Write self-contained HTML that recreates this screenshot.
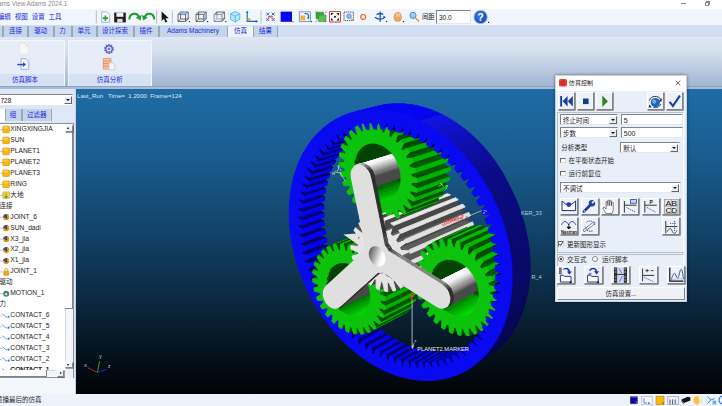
<!DOCTYPE html>
<html lang="zh"><head><meta charset="utf-8"><title>Adams View Adams 2024.1</title>
<style>
*{box-sizing:border-box;margin:0;padding:0}
html,body{width:722px;height:406px;overflow:hidden;background:#fff}
body{position:relative;font-family:"Liberation Sans","Noto Sans CJK SC",sans-serif;font-size:6.5px;color:#222;line-height:1}
.abs{position:absolute}
.t{position:absolute;white-space:nowrap;line-height:1}
#title{left:0;top:0;width:722px;height:9px;background:#fff}
#menurow{left:0;top:9px;width:722px;height:16px;background:#f1f5fc}
#tabrow{left:0;top:25px;width:722px;height:12px;background:#d2dff3}
#ribbon{left:0;top:37px;width:722px;height:52px;background:linear-gradient(#dfe7f3 0%,#d3deee 30%,#b4c5dd 70%,#9fb3cf 100%)}
.tab{position:absolute;top:26px;height:10.5px;background:#c4d4eb;border-left:1px solid #9aa7b8;border-right:1px solid #9aa7b8;color:#2323d8;font-size:6.5px;text-align:center;line-height:10.5px;white-space:nowrap}
.tab.act{background:#eef3fb;border-color:#eef3fb;color:#2323d8}
.grp{position:absolute;top:39.5px;height:47px;background:#e6edf8;border:1px solid #f3f6fb;border-radius:1px}
.grp .lab{position:absolute;left:0;right:0;bottom:0;height:12px;background:#d5e2f4;color:#2323d8;font-size:6.5px;text-align:center;line-height:12px}
#view{left:76px;top:89px;width:646px;height:304.5px;background:linear-gradient(#1f6ca5 0%,#1a5e92 20%,#13456c 45%,#0c2a42 68%,#04101a 88%,#010306 100%)}
#left{left:0;top:89px;width:76px;height:304.5px;background:#dde6f2}
#status{left:0;top:393.5px;width:722px;height:12.5px;background:#eef3fb}
.row{position:absolute;left:0;height:11px;font-size:6.7px;color:#222;white-space:nowrap}
.row span{position:absolute;top:2px;left:10.3px;line-height:7px}
.dlg{position:absolute;left:554.5px;top:75px;width:132px;height:227px;background:#e9eff8;border:1px solid #c9d0da;box-shadow:0 0 3px rgba(0,0,0,.45)}
.btn{position:absolute;background:#eef1f6;border:1px solid;border-color:#fff #7d8590 #7d8590 #fff;box-shadow:0.5px 0.5px 0 #444}
.inp{position:absolute;background:#fff;border:1px solid;border-color:#7d8590 #e4e8ee #e4e8ee #7d8590;font-size:6.5px;color:#222;line-height:9px;padding-left:2px;padding-top:0.8px;white-space:nowrap;overflow:hidden}
.dd{position:absolute;right:0.5px;top:0.5px;bottom:0.5px;width:7.4px;box-sizing:content-box;width:6px;background:#e9edf3;border:0.5px solid;border-color:#fff #666 #666 #fff}
.dd:after{content:"";position:absolute;left:1px;top:50%;margin-top:-1px;width:0;height:0;border-left:2.2px solid transparent;border-right:2.2px solid transparent;border-top:2.6px solid #111}
.cb{position:absolute;width:5.5px;height:5.5px;background:#fff;border:0.7px solid;border-color:#666 #ddd #ddd #666}
.rb{position:absolute;width:6px;height:6px;background:#fff;border:0.7px solid #888;border-radius:50%}
.dl{position:absolute;font-size:6.5px;color:#222;white-space:nowrap;line-height:7px}
</style></head><body>
<div class="abs" id="title"></div>
<div class="t" style="left:-2px;top:0.5px;font-size:6.3px;color:#8a8a8a">ams View Adams 2024.1</div>
<div class="abs" style="left:681px;top:3px;width:4.5px;height:0.8px;background:#8c8c8c"></div>
<div class="abs" style="left:704.5px;top:2px;width:4px;height:4px;border:0.7px solid #8c8c8c"></div>
<div class="abs" style="left:705.5px;top:1px;width:4px;height:4px;border:0.7px solid #8c8c8c;border-left:0;border-bottom:0"></div>
<div class="abs" id="menurow"></div>
<div class="t" style="left:-2.2px;top:14px;font-size:6.5px;color:#2323d8">编辑</div>
<div class="t" style="left:14.8px;top:14px;font-size:6.5px;color:#2323d8">视图</div>
<div class="t" style="left:31.8px;top:14px;font-size:6.5px;color:#2323d8">设置</div>
<div class="t" style="left:48.4px;top:14px;font-size:6.5px;color:#2323d8">工具</div>
<svg class="abs" style="left:90px;top:9px" width="410" height="16" viewBox="90 9 410 16">
<g fill="none" stroke-linejoin="round">
<path d="M96.3 10.5v13M156.6 10.5v13M172.4 10.5v13M261 10.5v13" stroke="#aab2be" stroke-width="0.8"/>
<!-- new doc -->
<path d="M101.6 11.8h5.4l2.6 2.6v8h-8z" fill="#f4f8ff" stroke="#8fa0c8" stroke-width="0.7"/>
<path d="M105.4 15.6v5.2M102.8 18.2h5.2" stroke="#27a32a" stroke-width="1.7"/>
<!-- save -->
<path d="M114.2 12.6h11.6v9.8h-11.6z" fill="#1c1c1c"/><rect x="116.4" y="12.6" width="7" height="4.2" fill="#f3f3f3"/><rect x="117.2" y="18.8" width="5.4" height="3.6" fill="#dcdcdc"/>
<!-- redo / undo -->
<path d="M129.4 19.6c0-7 8-7.6 9.6-2.2" stroke="#1e9a2e" stroke-width="2"/><path d="M141.6 15l-1.2 5.4l-4.6-2.8z" fill="#1e9a2e"/>
<path d="M154.2 19.6c0-7-8-7.6-9.6-2.2" stroke="#1e9a2e" stroke-width="2"/><path d="M142 15l1.2 5.4l4.6-2.8z" fill="#1e9a2e"/>
<!-- cursor -->
<path d="M161.6 11.4v9.6l2.3-2.2l1.7 3.8l1.7-0.8l-1.7-3.6h3.2z" fill="#111"/>
<!-- box1 -->
<g stroke="#333" stroke-width="0.7"><path d="M178 14.4h7.6v7h-7.6zM180.6 12h7.6v7h-7.6zM178 14.4l2.6-2.4M185.6 14.4l2.6-2.4M185.6 21.4l2.6-2.4M178 21.4l2.6-2.4"/></g>
<path d="M180.6 12h7.6l-2.6 2.4h-7.6z" fill="#7fb2ea" opacity=".7"/><circle cx="189.4" cy="21.6" r="0.7" fill="#111"/>
<!-- box2 -->
<g stroke="#333" stroke-width="0.7"><path d="M196 14.4h7.6v7h-7.6zM198.6 12h7.6v7h-7.6zM196 14.4l2.6-2.4M203.6 14.4l2.6-2.4M203.6 21.4l2.6-2.4M196 21.4l2.6-2.4"/></g>
<path d="M203.6 14.4l2.6-2.4v7l-2.6 2.4z" fill="#7fb2ea" opacity=".8"/><circle cx="207.6" cy="21.6" r="0.7" fill="#111"/>
<!-- box3 -->
<g stroke="#333" stroke-width="0.7"><path d="M214.2 14.4h7.6v7h-7.6zM216.8 12h7.6v7h-7.6zM214.2 14.4l2.6-2.4M221.8 14.4l2.6-2.4M221.8 21.4l2.6-2.4M214.2 21.4l2.6-2.4"/></g>
<path d="M214.2 14.4h7.6v7h-7.6z" fill="#d8e6f8" opacity=".6"/><circle cx="225.8" cy="21.6" r="0.7" fill="#111"/>
<!-- cyan cube -->
<path d="M235.2 11.6l4.6 2.2v5.6l-4.6 2.6l-4.6-2.6v-5.6z" fill="#bfe9fb" stroke="#35b5ea" stroke-width="0.8"/><path d="M230.6 13.8l4.6 2.4l4.6-2.4M235.2 16.2v5.8" stroke="#35b5ea" stroke-width="0.8"/>
<!-- axis -->
<path d="M247.2 11.4v10h10" stroke="#1c63c8" stroke-width="1.1"/><path d="M245.9 13l1.3-2.2l1.3 2.2zM255.8 20.1l2.2 1.3l-2.2 1.3z" fill="#1c63c8"/><circle cx="249" cy="19.6" r="1.5" fill="#f0a020"/>
<!-- grid -->
<g stroke="#2a68c8" stroke-width="1"><path d="M266.2 12.6l3 3M269.2 12.6l-3 3M271.6 12.6l3 3M274.6 12.6l-3 3M266.2 18l3 3M269.2 18l-3 3M271.6 18l3 3M274.6 18l-3 3"/></g><path d="M268 16.8h5" stroke="#d03020" stroke-width="1.1"/>
<!-- blue square -->
<rect x="280.6" y="11.6" width="11.4" height="10.2" fill="#0808f0"/><circle cx="293" cy="21.8" r="0.6" fill="#111"/>
<!-- window icon -->
<rect x="299.4" y="11.8" width="11" height="9.8" fill="#eaf1fb" stroke="#5b6f96" stroke-width="0.7"/><rect x="300.6" y="15.6" width="4.6" height="4.6" fill="#f0b030"/><path d="M304.6 13.6c3-0.6 4.6 1.4 3.8 4.2" stroke="#1c63c8" stroke-width="1.1"/><path d="M306.8 17.4l1.6 1.8l1.2-2.2z" fill="#1c63c8"/><circle cx="311.6" cy="21.6" r="0.6" fill="#111"/>
<!-- green -->
<rect x="316" y="12.2" width="7.4" height="6.6" fill="#3aa838" stroke="#2a7a2a" stroke-width="0.5"/><rect x="318.6" y="15" width="7.4" height="6.6" fill="#58c050" stroke="#2a7a2a" stroke-width="0.5"/><path d="M315.4 11.6l1.8 1.8M326.6 11.6l-1.8 1.8M315.4 22.2l1.8-1.8M326.6 22.2l-1.8-1.8" stroke="#3a7a3a" stroke-width="0.7"/>
<!-- fit -->
<rect x="329.6" y="11.6" width="10.8" height="10.4" fill="#fff" stroke="#c83a2c" stroke-width="1"/>
<path d="M331 13l2.6 0l-2.6 2.6zM339 13l0 2.6l-2.6-2.6zM331 20.6l0-2.6l2.6 2.6zM339 20.6l-2.6 0l2.6-2.6z" fill="#111"/><circle cx="335" cy="16.8" r="1" fill="#111"/>
<!-- zoom box -->
<rect x="344" y="12" width="9.4" height="8.6" fill="#eef4fb" stroke="#222" stroke-width="0.8" stroke-dasharray="1.2 0.9"/><circle cx="349" cy="16.2" r="2.3" fill="#8cc2f0" stroke="#3a78c0" stroke-width="0.6"/><path d="M350.8 18l2.6 2.8" stroke="#d89a30" stroke-width="1.1"/>
<!-- orange o -->
<circle cx="363.2" cy="17" r="2.5" stroke="#ea6a2a" stroke-width="1.1" fill="#fde6d6"/>
<!-- rot axis -->
<g stroke="#1c55c0" stroke-width="1.3"><path d="M380.2 11.6v10.2M375 17.2c2.4 2.6 7.4 2.6 9.6 0.2M376.6 14.8c1.6-1.2 4.4-1.6 6.6-0.4"/></g><path d="M383.6 15.4l2.4 2.2l-2.8 1z" fill="#1c55c0"/><circle cx="386.6" cy="21.6" r="0.6" fill="#111"/>
<!-- hand -->
<path d="M395.6 21.2c-2-1.6-2.2-5-0.6-7.4c1.4-2 4.6-2 5.6 0c1.2 2.4 1 5.8-0.8 7.4z" fill="#f0a560" stroke="#c8782a" stroke-width="0.5"/><path d="M396.6 13v4M398.2 12.4v4.4M399.8 13v4" stroke="#fbe0c0" stroke-width="0.7"/><circle cx="403.4" cy="21.6" r="0.6" fill="#111"/>
<!-- magnifier -->
<circle cx="413" cy="15.4" r="3.1" fill="#9cccf4" stroke="#3a78c0" stroke-width="0.8"/><path d="M415.4 17.8l3.8 3.8" stroke="#d89a30" stroke-width="1.4"/>
<!-- help -->
<circle cx="480.6" cy="17" r="6.6" fill="#1c55c0" stroke="#8cb0e8" stroke-width="0.9"/><circle cx="479.8" cy="15.6" r="4.6" fill="#3a78dc" opacity=".7"/>
</g>
<text x="477.6" y="20.8" font-size="10" font-weight="bold" fill="#fff" font-family="Liberation Sans,sans-serif">?</text>
<circle cx="488.6" cy="22.4" r="0.6" fill="#111"/>
</svg>

<div class="t" style="left:422px;top:13.5px;font-size:6.3px;color:#222">间距</div>
<div class="inp" style="left:436px;top:10px;width:34.5px;height:14px;line-height:12px;font-size:6.5px">30.0</div>
<div class="abs" id="tabrow"></div>
<div class="tab" style="left:3px;width:25px">连接</div>
<div class="tab" style="left:28px;width:25.5px">驱动</div>
<div class="tab" style="left:53.5px;width:18px">力</div>
<div class="tab" style="left:71.5px;width:25px">单元</div>
<div class="tab" style="left:96.5px;width:37px">设计探索</div>
<div class="tab" style="left:133.5px;width:25px">插件</div>
<div class="tab" style="left:158.5px;width:69px">Adams Machinery</div>
<div class="tab act" style="left:228px;width:25px">仿真</div>
<div class="tab" style="left:253px;width:25px">结果</div>
<div class="abs" style="left:0;top:26px;width:2.5px;height:10.5px;background:#c4d4eb;border-right:1px solid #9aa7b8"></div>
<div class="abs" id="ribbon"></div>
<div class="grp" style="left:-2px;width:66.5px"><div class="lab" style="text-align:left;padding-left:13px">仿真脚本</div></div>
<div class="grp" style="left:68px;width:83.5px"><div class="lab">仿真分析</div></div>
<svg class="abs" style="left:0;top:40px" width="160" height="34" viewBox="0 40 160 34">
<g fill="none" stroke-linejoin="round">
<!-- doc (greyed) -->
<path d="M19.4 43.4h6l3.2 3v8h-9.2z" fill="#f6f6f4" stroke="#dcdcd8" stroke-width="0.6"/><path d="M25.4 43.4v3h3.2z" fill="#e2e2de"/>
<!-- doc with arrow -->
<path d="M21 58.6h5l2.8 2.8v8h-7.8z" fill="#f0f4fc" stroke="#8a9ccc" stroke-width="0.7"/>
<path d="M17.4 64.6h6.4" stroke="#2a4cb8" stroke-width="1.5"/><path d="M23 62.2l3 2.4l-3 2.4z" fill="#2a4cb8"/>
<!-- gear -->
<circle cx="109" cy="49" r="3.9" stroke="#5a5ad0" stroke-width="2" stroke-dasharray="1.5 0.95"/><circle cx="109" cy="49" r="3.2" stroke="#5a5ad0" stroke-width="1.2" fill="#e4e6fa"/><circle cx="109" cy="49" r="1.3" fill="#7a7ae0"/>
<!-- table + doc -->
<rect x="103.4" y="58.4" width="7.6" height="10.6" fill="#f6c8a8" stroke="#e8824a" stroke-width="0.7"/><path d="M103.4 61h7.6M103.4 63.6h7.6M103.4 66.2h7.6" stroke="#e8824a" stroke-width="0.9"/>
<path d="M109 62.6h3.6l2.2 2.2v5h-5.8z" fill="#f4f4f4" stroke="#b8b8b8" stroke-width="0.6"/>
</g></svg>

<div class="abs" style="left:0;top:86px;width:722px;height:1px;background:#8ea3bf"></div>
<div class="abs" style="left:0;top:87px;width:722px;height:2px;background:#a9bbd5"></div>
<div class="abs" id="view"></div>
<svg class="abs" style="left:76px;top:89px" width="646" height="304.5" viewBox="76 89 646 304.5">
<defs><linearGradient id="hubg" x1="0" y1="0" x2="1" y2="0.4"><stop offset="0" stop-color="#484848"/><stop offset="0.45" stop-color="#a8a8a8"/><stop offset="0.8" stop-color="#f4f4f4"/><stop offset="1" stop-color="#ffffff"/></linearGradient></defs>
<g stroke-linejoin="round" style="filter:blur(0.45px)">
<path d="M341.4 276.9L336.8 277.9L347.8 273.1L352.5 272.1Z" fill="#005e00" stroke="#005e00" stroke-width="0.9"/>
<path d="M350.3 306.2L354.1 303.3L365.0 298.2L361.2 301.1Z" fill="#004d00" stroke="#004d00" stroke-width="0.9"/>
<path d="M340.8 269.2L335.7 269.0L346.8 264.3L351.8 264.5Z" fill="#005c00" stroke="#005c00" stroke-width="0.9"/>
<path d="M356.7 312.7L359.7 308.7L370.5 303.5L367.5 307.4Z" fill="#004d00" stroke="#004d00" stroke-width="0.9"/>
<path d="M341.4 262.0L336.2 260.4L347.4 255.8L352.5 257.3Z" fill="#005a00" stroke="#005a00" stroke-width="0.9"/>
<path d="M325.0 282.1L325.6 283.3L335.6 279.0L335.0 277.7ZM321.2 273.7L321.8 275.0L331.9 270.7L331.4 269.4Z" fill="#00007d" stroke="#00007d" stroke-width="0.9"/>
<path d="M363.7 317.7L365.7 312.8L376.5 307.5L374.4 312.4Z" fill="#004d00" stroke="#004d00" stroke-width="0.9"/>
<path d="M329.1 290.3L329.8 291.5L339.8 287.0L339.2 285.8ZM318.0 265.1L318.4 266.4L328.6 262.2L328.2 260.9ZM333.7 298.2L334.4 299.4L344.4 294.8L343.7 293.7ZM315.2 256.4L315.6 257.7L325.8 253.6L325.4 252.3Z" fill="#00007d" stroke="#00007d" stroke-width="0.9"/>
<path d="M328.2 278.9L325.0 282.1L335.0 277.7L338.3 274.5ZM321.8 275.0L326.4 274.9L336.5 270.6L331.9 270.7ZM325.6 283.3L330.1 282.8L340.2 278.4L335.6 279.0ZM324.8 270.8L321.2 273.7L331.4 269.4L334.9 266.6Z" fill="#000069" stroke="#000069" stroke-width="0.9"/>
<path d="M352.7 285.4L354.5 289.3L365.4 284.3L363.6 280.5Z" fill="#004400" stroke="#004400" stroke-width="0.9"/>
<path d="M338.7 305.8L339.4 307.0L349.4 302.3L348.6 301.2Z" fill="#00007d" stroke="#00007d" stroke-width="0.9"/>
<path d="M332.1 286.7L329.1 290.3L339.2 285.8L342.1 282.3ZM318.4 266.4L323.2 266.8L333.3 262.6L328.6 262.2Z" fill="#000069" stroke="#000069" stroke-width="0.9"/>
<path d="M351.3 281.4L352.7 285.4L363.6 280.5L362.2 276.6ZM354.5 289.3L356.7 292.9L367.6 287.8L365.4 284.3Z" fill="#004400" stroke="#004400" stroke-width="0.9"/>
<path d="M329.8 291.5L334.2 290.5L344.2 286.0L339.8 287.0Z" fill="#000069" stroke="#000069" stroke-width="0.9"/>
<path d="M312.9 247.6L313.2 248.9L323.5 244.9L323.2 243.6Z" fill="#00007d" stroke="#00007d" stroke-width="0.9"/>
<path d="M321.7 262.7L318.0 265.1L328.2 260.9L331.9 258.5Z" fill="#000069" stroke="#000069" stroke-width="0.9"/>
<path d="M330.1 281.8L325.4 282.8L336.8 277.9L341.4 276.9Z" fill="#005e00" stroke="#005e00" stroke-width="0.9"/>
<path d="M339.2 311.5L343.0 308.6L354.1 303.3L350.3 306.2Z" fill="#004d00" stroke="#004d00" stroke-width="0.9"/>
<path d="M336.4 294.3L333.7 298.2L343.7 293.7L346.4 289.8Z" fill="#000069" stroke="#000069" stroke-width="0.9"/>
<path d="M350.4 277.4L351.3 281.4L362.2 276.6L361.3 272.6Z" fill="#004400" stroke="#004400" stroke-width="0.9"/>
<path d="M356.7 292.9L359.3 296.1L370.1 291.1L367.6 287.8Z" fill="#005800" stroke="#005800" stroke-width="0.9"/>
<path d="M315.6 257.7L320.4 258.5L330.6 254.4L325.8 253.6ZM334.4 299.4L338.7 298.0L348.6 293.4L344.4 294.8ZM319.2 254.4L315.2 256.4L325.4 252.3L329.4 250.3Z" fill="#000069" stroke="#000069" stroke-width="0.9"/>
<path d="M344.0 313.2L344.8 314.2L354.7 309.5L353.9 308.4Z" fill="#00007d" stroke="#00007d" stroke-width="0.9"/>
<path d="M350.0 273.4L350.4 277.4L361.3 272.6L361.0 268.6Z" fill="#004400" stroke="#004400" stroke-width="0.9"/>
<path d="M341.0 301.6L338.7 305.8L348.6 301.2L351.0 297.0Z" fill="#000069" stroke="#000069" stroke-width="0.9"/>
<path d="M326.4 274.9L328.2 278.9L338.3 274.5L336.5 270.6Z" fill="#0404ee" stroke="#0404ee" stroke-width="0.9"/>
<path d="M311.1 238.8L311.3 240.1L321.6 236.2L321.4 234.9Z" fill="#00007d" stroke="#00007d" stroke-width="0.9"/>
<path d="M359.3 296.1L362.2 299.0L373.0 293.9L370.1 291.1Z" fill="#007100" stroke="#007100" stroke-width="0.9"/>
<path d="M343.3 255.4L338.2 252.6L349.4 248.1L354.4 250.9Z" fill="#005700" stroke="#005700" stroke-width="0.9"/>
<path d="M330.1 282.8L332.1 286.7L342.1 282.3L340.2 278.4Z" fill="#0404ee" stroke="#0404ee" stroke-width="0.9"/>
<path d="M313.2 248.9L318.1 250.2L328.3 246.2L323.5 244.9Z" fill="#000069" stroke="#000069" stroke-width="0.9"/>
<path d="M323.2 266.8L324.8 270.8L334.9 266.6L333.3 262.6Z" fill="#0404ee" stroke="#0404ee" stroke-width="0.9"/>
<path d="M371.0 321.1L372.1 315.4L382.7 310.1L381.7 315.7Z" fill="#004d00" stroke="#004d00" stroke-width="0.9"/>
<path d="M334.2 290.5L336.4 294.3L346.4 289.8L344.2 286.0ZM320.4 258.5L321.7 262.7L331.9 258.5L330.6 254.4Z" fill="#0404ee" stroke="#0404ee" stroke-width="0.9"/>
<path d="M329.4 274.1L324.4 273.8L335.7 269.0L340.8 269.2Z" fill="#005c00" stroke="#005c00" stroke-width="0.9"/>
<path d="M345.6 318.1L348.6 314.0L359.7 308.7L356.7 312.7Z" fill="#004d00" stroke="#004d00" stroke-width="0.9"/>
<path d="M350.1 269.5L350.0 273.4L361.0 268.6L361.1 264.8Z" fill="#004400" stroke="#004400" stroke-width="0.9"/>
<path d="M346.1 308.6L344.0 313.2L353.9 308.4L355.9 303.9Z" fill="#000069" stroke="#000069" stroke-width="0.9"/>
<path d="M362.2 299.0L365.3 301.4L376.0 296.2L373.0 293.9Z" fill="#008a00" stroke="#008a00" stroke-width="0.9"/>
<path d="M338.7 298.0L341.0 301.6L351.0 297.0L348.6 293.4Z" fill="#0404ee" stroke="#0404ee" stroke-width="0.9"/>
<path d="M349.7 320.1L350.6 321.1L360.4 316.3L359.5 315.3Z" fill="#00007d" stroke="#00007d" stroke-width="0.9"/>
<path d="M311.3 240.1L316.2 241.8L326.5 237.9L321.6 236.2Z" fill="#000069" stroke="#000069" stroke-width="0.9"/>
<path d="M318.1 250.2L319.2 254.4L329.4 250.3L328.3 246.2Z" fill="#0404ee" stroke="#0404ee" stroke-width="0.9"/>
<path d="M309.8 229.9L310.0 231.3L320.3 227.5L320.2 226.1Z" fill="#00007d" stroke="#00007d" stroke-width="0.9"/>
<path d="M343.5 305.1L346.1 308.6L355.9 303.9L353.4 300.5Z" fill="#0404ee" stroke="#0404ee" stroke-width="0.9"/>
<path d="M350.7 265.9L350.1 269.5L361.1 264.8L361.7 261.2Z" fill="#004400" stroke="#004400" stroke-width="0.9"/>
<path d="M316.2 241.8L317.1 246.0L327.3 242.0L326.5 237.9Z" fill="#0404ee" stroke="#0404ee" stroke-width="0.9"/>
<path d="M365.3 301.4L368.5 303.2L379.3 298.0L376.0 296.2Z" fill="#00a100" stroke="#00a100" stroke-width="0.9"/>
<path d="M351.4 315.3L349.7 320.1L359.5 315.3L361.3 310.5ZM310.0 231.3L314.8 233.4L325.1 229.5L320.3 227.5Z" fill="#000069" stroke="#000069" stroke-width="0.9"/>
<path d="M314.6 286.6L315.2 287.8L325.6 283.3L325.0 282.1ZM310.9 278.1L311.4 279.4L321.8 275.0L321.2 273.7ZM355.7 326.6L356.6 327.6L366.4 322.7L365.5 321.7ZM318.8 294.8L319.5 296.1L329.8 291.5L329.1 290.3ZM307.5 269.4L308.0 270.7L318.4 266.4L318.0 265.1ZM309.1 221.1L309.1 222.4L319.5 218.7L319.4 217.4Z" fill="#00007d" stroke="#00007d" stroke-width="0.9"/>
<path d="M348.7 312.0L351.4 315.3L361.3 310.5L358.6 307.2Z" fill="#0404ee" stroke="#0404ee" stroke-width="0.9"/>
<path d="M330.0 266.7L324.8 265.1L336.2 260.4L341.4 262.0Z" fill="#005a00" stroke="#005a00" stroke-width="0.9"/>
<path d="M323.5 302.9L324.2 304.1L334.4 299.4L333.7 298.2Z" fill="#00007d" stroke="#00007d" stroke-width="0.9"/>
<path d="M314.8 233.4L315.5 237.6L325.7 233.7L325.1 229.5Z" fill="#0404ee" stroke="#0404ee" stroke-width="0.9"/>
<path d="M304.7 260.6L305.1 261.9L315.6 257.7L315.2 256.4Z" fill="#00007d" stroke="#00007d" stroke-width="0.9"/>
<path d="M352.7 323.2L354.7 318.2L365.7 312.8L363.7 317.7Z" fill="#004d00" stroke="#004d00" stroke-width="0.9"/>
<path d="M346.5 249.9L341.7 245.9L352.8 241.4L357.6 245.4Z" fill="#005400" stroke="#005400" stroke-width="0.9"/>
<path d="M351.8 262.5L350.7 265.9L361.7 261.2L362.8 257.9Z" fill="#004400" stroke="#004400" stroke-width="0.9"/>
<path d="M368.5 303.2L371.8 304.5L382.6 299.3L379.3 298.0Z" fill="#00b500" stroke="#00b500" stroke-width="0.9"/>
<path d="M357.1 321.6L355.7 326.6L365.5 321.7L366.9 316.7Z" fill="#000069" stroke="#000069" stroke-width="0.9"/>
<path d="M378.4 322.7L378.4 316.5L389.0 311.2L389.0 317.3Z" fill="#004d00" stroke="#004d00" stroke-width="0.9"/>
<path d="M311.4 279.4L316.1 279.3L317.9 283.3L314.6 286.6L315.2 287.8L308.0 291.4L305.8 286.8L303.8 282.1Z" fill="#0a0af0" stroke="#0a0af0" stroke-width="0.9"/>
<path d="M317.9 283.3L314.6 286.6L325.0 282.1L328.2 278.9ZM311.4 279.4L316.1 279.3L326.4 274.9L321.8 275.0ZM315.2 287.8L319.8 287.3L330.1 282.8L325.6 283.3Z" fill="#000069" stroke="#000069" stroke-width="0.9"/>
<path d="M308.0 270.7L312.8 271.1L314.4 275.2L310.9 278.1L311.4 279.4L303.8 282.1L301.9 277.4L300.1 272.7ZM315.2 287.8L319.8 287.3L321.8 291.2L318.8 294.8L319.5 296.1L312.7 300.4L310.3 295.9L308.0 291.4Z" fill="#0a0af0" stroke="#0a0af0" stroke-width="0.9"/>
<path d="M314.4 275.2L310.9 278.1L321.2 273.7L324.8 270.8ZM309.1 222.4L314.0 225.0L324.3 221.2L319.5 218.7Z" fill="#000069" stroke="#000069" stroke-width="0.9"/>
<path d="M328.5 310.6L329.3 311.7L339.4 307.0L338.7 305.8Z" fill="#00007d" stroke="#00007d" stroke-width="0.9"/>
<path d="M321.8 291.2L318.8 294.8L329.1 290.3L332.1 286.7ZM308.0 270.7L312.8 271.1L323.2 266.8L318.4 266.4ZM319.5 296.1L323.9 295.1L334.2 290.5L329.8 291.5Z" fill="#000069" stroke="#000069" stroke-width="0.9"/>
<path d="M302.4 251.7L302.7 253.0L313.2 248.9L312.9 247.6Z" fill="#00007d" stroke="#00007d" stroke-width="0.9"/>
<path d="M311.3 266.9L307.5 269.4L318.0 265.1L321.7 262.7Z" fill="#000069" stroke="#000069" stroke-width="0.9"/>
<path d="M305.1 261.9L310.0 262.7L311.3 266.9L307.5 269.4L308.0 270.7L300.1 272.7L298.5 267.9L296.9 263.1ZM319.5 296.1L323.9 295.1L326.2 298.9L323.5 302.9L324.2 304.1L317.8 309.1L315.2 304.8L312.7 300.4Z" fill="#0a0af0" stroke="#0a0af0" stroke-width="0.9"/>
<path d="M354.2 318.5L357.1 321.6L366.9 316.7L364.0 313.6Z" fill="#0404ee" stroke="#0404ee" stroke-width="0.9"/>
<path d="M362.0 332.7L363.0 333.6L372.7 328.6L371.7 327.8Z" fill="#00007d" stroke="#00007d" stroke-width="0.9"/>
<path d="M326.2 298.9L323.5 302.9L333.7 298.2L336.4 294.3ZM305.1 261.9L310.0 262.7L320.4 258.5L315.6 257.7Z" fill="#000069" stroke="#000069" stroke-width="0.9"/>
<path d="M314.0 225.0L314.3 229.2L324.7 225.4L324.3 221.2Z" fill="#0404ee" stroke="#0404ee" stroke-width="0.9"/>
<path d="M324.2 304.1L328.5 302.7L338.7 298.0L334.4 299.4Z" fill="#000069" stroke="#000069" stroke-width="0.9"/>
<path d="M341.4 290.5L343.3 294.4L354.5 289.3L352.7 285.4Z" fill="#004400" stroke="#004400" stroke-width="0.9"/>
<path d="M308.8 212.4L308.8 213.7L319.3 210.1L319.3 208.8Z" fill="#00007d" stroke="#00007d" stroke-width="0.9"/>
<path d="M308.7 258.5L304.7 260.6L315.2 256.4L319.2 254.4Z" fill="#000069" stroke="#000069" stroke-width="0.9"/>
<path d="M340.0 286.5L341.4 290.5L352.7 285.4L351.3 281.4ZM343.3 294.4L345.6 298.0L356.7 292.9L354.5 289.3Z" fill="#004400" stroke="#004400" stroke-width="0.9"/>
<path d="M318.5 286.9L313.8 287.9L325.4 282.8L330.1 281.8Z" fill="#005e00" stroke="#005e00" stroke-width="0.9"/>
<path d="M302.7 253.0L307.6 254.3L308.7 258.5L304.7 260.6L305.1 261.9L296.9 263.1L295.5 258.3L294.3 253.4ZM324.2 304.1L328.5 302.7L330.9 306.3L328.5 310.6L329.3 311.7L323.3 317.5L320.5 313.3L317.8 309.1Z" fill="#0a0af0" stroke="#0a0af0" stroke-width="0.9"/>
<path d="M353.4 259.6L351.8 262.5L362.8 257.9L364.4 255.0Z" fill="#004400" stroke="#004400" stroke-width="0.9"/>
<path d="M327.7 317.0L331.5 314.0L343.0 308.6L339.2 311.5Z" fill="#004d00" stroke="#004d00" stroke-width="0.9"/>
<path d="M333.9 318.0L334.7 319.1L344.8 314.2L344.0 313.2Z" fill="#00007d" stroke="#00007d" stroke-width="0.9"/>
<path d="M371.8 304.5L375.1 305.1L385.8 299.9L382.6 299.3Z" fill="#00c700" stroke="#00c700" stroke-width="0.9"/>
<path d="M330.9 306.3L328.5 310.6L338.7 305.8L341.0 301.6Z" fill="#000069" stroke="#000069" stroke-width="0.9"/>
<path d="M316.1 279.3L317.9 283.3L328.2 278.9L326.4 274.9Z" fill="#0404ee" stroke="#0404ee" stroke-width="0.9"/>
<path d="M300.5 242.7L300.8 244.1L311.3 240.1L311.1 238.8Z" fill="#00007d" stroke="#00007d" stroke-width="0.9"/>
<path d="M339.1 282.4L340.0 286.5L351.3 281.4L350.4 277.4Z" fill="#004400" stroke="#004400" stroke-width="0.9"/>
<path d="M319.8 287.3L321.8 291.2L332.1 286.7L330.1 282.8Z" fill="#0404ee" stroke="#0404ee" stroke-width="0.9"/>
<path d="M345.6 298.0L348.2 301.3L359.3 296.1L356.7 292.9Z" fill="#005800" stroke="#005800" stroke-width="0.9"/>
<path d="M302.7 253.0L307.6 254.3L318.1 250.2L313.2 248.9Z" fill="#000069" stroke="#000069" stroke-width="0.9"/>
<path d="M312.8 271.1L314.4 275.2L324.8 270.8L323.2 266.8Z" fill="#0404ee" stroke="#0404ee" stroke-width="0.9"/>
<path d="M363.0 327.4L362.0 332.7L371.7 327.8L372.8 322.5Z" fill="#000069" stroke="#000069" stroke-width="0.9"/>
<path d="M323.9 295.1L326.2 298.9L336.4 294.3L334.2 290.5Z" fill="#0404ee" stroke="#0404ee" stroke-width="0.9"/>
<path d="M308.8 213.7L313.6 216.7L324.0 213.0L319.3 210.1Z" fill="#000069" stroke="#000069" stroke-width="0.9"/>
<path d="M310.0 262.7L311.3 266.9L321.7 262.7L320.4 258.5Z" fill="#0404ee" stroke="#0404ee" stroke-width="0.9"/>
<path d="M300.8 244.1L305.7 245.8L306.6 250.1L302.4 251.7L302.7 253.0L294.3 253.4L293.2 248.5L292.2 243.7ZM329.3 311.7L333.4 309.9L336.0 313.4L333.9 318.0L334.7 319.1L329.3 325.5L326.3 321.5L323.3 317.5Z" fill="#0a0af0" stroke="#0a0af0" stroke-width="0.9"/>
<path d="M338.7 278.3L339.1 282.4L350.4 277.4L350.0 273.4Z" fill="#004400" stroke="#004400" stroke-width="0.9"/>
<path d="M360.0 324.5L363.0 327.4L372.8 322.5L369.8 319.6Z" fill="#0404ee" stroke="#0404ee" stroke-width="0.9"/>
<path d="M348.2 301.3L351.1 304.2L362.2 299.0L359.3 296.1Z" fill="#007100" stroke="#007100" stroke-width="0.9"/>
<path d="M394.2 298.4L396.3 296.9L398.2 295.0L399.7 292.8L401.0 290.2L401.9 287.4L402.4 284.4L402.6 281.1L402.4 277.8L401.9 274.4L401.0 271.0L399.7 267.6L398.2 264.4L396.3 261.3L394.2 258.5L391.8 256.0L389.3 253.8L386.6 251.9L383.9 250.5L381.1 249.4L378.3 248.8L375.6 248.7L373.0 249.0L370.5 249.7L368.2 250.9L366.2 252.4L364.4 254.4L362.9 256.6L361.7 259.2L360.9 262.0L360.4 265.1L360.3 268.2L360.5 271.5L361.1 274.9L362.0 278.2L363.2 281.4L364.7 284.6L366.5 287.6L368.6 290.3L370.9 292.8L373.3 295.0L375.9 296.9L378.6 298.3L381.4 299.4L384.1 300.1L386.8 300.3L389.4 300.1L391.9 299.4Z" fill="#004a00" stroke="#004a00" stroke-width="0.9"/>
<path d="M332.0 260.1L326.8 257.2L338.2 252.6L343.3 255.4Z" fill="#005700" stroke="#005700" stroke-width="0.9"/>
<path d="M336.0 313.4L333.9 318.0L344.0 313.2L346.1 308.6Z" fill="#000069" stroke="#000069" stroke-width="0.9"/>
<path d="M313.6 216.7L313.7 220.8L324.1 217.1L324.0 213.0ZM328.5 302.7L330.9 306.3L341.0 301.6L338.7 298.0Z" fill="#0404ee" stroke="#0404ee" stroke-width="0.9"/>
<path d="M360.1 326.7L361.1 320.9L372.1 315.4L371.0 321.1Z" fill="#004d00" stroke="#004d00" stroke-width="0.9"/>
<path d="M339.6 325.0L340.5 326.1L350.6 321.1L349.7 320.1Z" fill="#00007d" stroke="#00007d" stroke-width="0.9"/>
<path d="M300.8 244.1L305.7 245.8L316.2 241.8L311.3 240.1Z" fill="#000069" stroke="#000069" stroke-width="0.9"/>
<path d="M307.6 254.3L308.7 258.5L319.2 254.4L318.1 250.2Z" fill="#0404ee" stroke="#0404ee" stroke-width="0.9"/>
<path d="M368.6 338.4L369.6 339.2L379.2 334.1L378.2 333.3ZM299.2 233.8L299.4 235.1L310.0 231.3L309.8 229.9Z" fill="#00007d" stroke="#00007d" stroke-width="0.9"/>
<path d="M317.8 279.0L312.7 278.7L324.4 273.8L329.4 274.1Z" fill="#005c00" stroke="#005c00" stroke-width="0.9"/>
<path d="M355.5 257.1L353.4 259.6L364.4 255.0L366.5 252.5Z" fill="#004400" stroke="#004400" stroke-width="0.9"/>
<path d="M334.2 323.6L337.2 319.5L348.6 314.0L345.6 318.1Z" fill="#004d00" stroke="#004d00" stroke-width="0.9"/>
<path d="M375.1 305.1L378.4 305.1L389.0 299.9L385.8 299.9Z" fill="#00d600" stroke="#00d600" stroke-width="0.9"/>
<path d="M309.2 203.8L309.1 205.1L319.5 201.6L319.6 200.3Z" fill="#00007d" stroke="#00007d" stroke-width="0.9"/>
<path d="M338.8 274.4L338.7 278.3L350.0 273.4L350.1 269.5Z" fill="#004400" stroke="#004400" stroke-width="0.9"/>
<path d="M351.1 304.2L354.2 306.7L365.3 301.4L362.2 299.0Z" fill="#008a00" stroke="#008a00" stroke-width="0.9"/>
<path d="M350.7 245.6L346.4 240.6L357.5 236.2L361.8 241.1Z" fill="#005000" stroke="#005000" stroke-width="0.9"/>
<path d="M299.4 235.1L304.3 237.3L304.9 241.6L300.5 242.7L300.8 244.1L292.2 243.7L291.3 238.8L290.6 233.9Z" fill="#0a0af0" stroke="#0a0af0" stroke-width="0.9"/>
<path d="M333.4 309.9L336.0 313.4L346.1 308.6L343.5 305.1Z" fill="#0404ee" stroke="#0404ee" stroke-width="0.9"/>
<path d="M334.7 319.1L338.6 316.8L341.4 320.2L339.6 325.0L340.5 326.1L335.6 333.1L332.4 329.4L329.3 325.5Z" fill="#0a0af0" stroke="#0a0af0" stroke-width="0.9"/>
<path d="M369.3 332.9L368.6 338.4L378.2 333.3L378.9 327.8Z" fill="#000069" stroke="#000069" stroke-width="0.9"/>
<path d="M305.7 245.8L306.6 250.1L317.1 246.0L316.2 241.8Z" fill="#0404ee" stroke="#0404ee" stroke-width="0.9"/>
<path d="M385.6 322.5L384.4 316.0L395.0 310.7L396.1 317.0Z" fill="#004d00" stroke="#004d00" stroke-width="0.9"/>
<path d="M341.4 320.2L339.6 325.0L349.7 320.1L351.4 315.3ZM299.4 235.1L304.3 237.3L314.8 233.4L310.0 231.3ZM309.1 205.1L313.7 208.5L324.1 204.9L319.5 201.6Z" fill="#000069" stroke="#000069" stroke-width="0.9"/>
<path d="M366.1 330.2L369.3 332.9L378.9 327.8L375.8 325.2Z" fill="#0404ee" stroke="#0404ee" stroke-width="0.9"/>
<path d="M345.7 331.7L346.7 332.6L356.6 327.6L355.7 326.6Z" fill="#00007d" stroke="#00007d" stroke-width="0.9"/>
<path d="M339.4 270.7L338.8 274.4L350.1 269.5L350.7 265.9Z" fill="#004400" stroke="#004400" stroke-width="0.9"/>
<path d="M313.7 208.5L313.6 212.6L324.0 209.0L324.1 204.9Z" fill="#0404ee" stroke="#0404ee" stroke-width="0.9"/>
<path d="M298.4 224.9L298.5 226.2L309.1 222.4L309.1 221.1Z" fill="#00007d" stroke="#00007d" stroke-width="0.9"/>
<path d="M354.2 306.7L357.5 308.5L368.5 303.2L365.3 301.4Z" fill="#00a100" stroke="#00a100" stroke-width="0.9"/>
<path d="M338.6 316.8L341.4 320.2L351.4 315.3L348.7 312.0Z" fill="#0404ee" stroke="#0404ee" stroke-width="0.9"/>
<path d="M357.9 255.2L355.5 257.1L366.5 252.5L368.9 250.6Z" fill="#004400" stroke="#004400" stroke-width="0.9"/>
<path d="M304.3 237.3L304.9 241.6L315.5 237.6L314.8 233.4Z" fill="#0404ee" stroke="#0404ee" stroke-width="0.9"/>
<path d="M378.4 305.1L381.4 304.5L392.1 299.3L389.0 299.9Z" fill="#00e100" stroke="#00e100" stroke-width="0.9"/>
<path d="M298.5 226.2L303.4 228.8L303.8 233.1L299.2 233.8L299.4 235.1L290.6 233.9L290.1 229.0L289.7 224.2ZM340.5 326.1L344.2 323.4L347.1 326.5L345.7 331.7L346.7 332.6L342.3 340.3L338.9 336.8L335.6 333.1Z" fill="#0a0af0" stroke="#0a0af0" stroke-width="0.9"/>
<path d="M375.4 343.5L376.4 344.2L386.0 339.1L385.0 338.4Z" fill="#00007d" stroke="#00007d" stroke-width="0.9"/>
<path d="M347.1 326.5L345.7 331.7L355.7 326.6L357.1 321.6Z" fill="#000069" stroke="#000069" stroke-width="0.9"/>
<path d="M318.4 271.6L313.1 270.0L324.8 265.1L330.0 266.7Z" fill="#005a00" stroke="#005a00" stroke-width="0.9"/>
<path d="M310.0 195.4L309.9 196.7L320.3 193.2L320.5 192.0Z" fill="#00007d" stroke="#00007d" stroke-width="0.9"/>
<path d="M298.5 226.2L303.4 228.8L314.0 225.0L309.1 222.4Z" fill="#000069" stroke="#000069" stroke-width="0.9"/>
<path d="M341.3 328.8L343.4 323.8L354.7 318.2L352.7 323.2Z" fill="#004d00" stroke="#004d00" stroke-width="0.9"/>
<path d="M375.7 337.8L375.4 343.5L385.0 338.4L385.3 332.7Z" fill="#000069" stroke="#000069" stroke-width="0.9"/>
<path d="M335.1 254.5L330.2 250.4L341.7 245.9L346.5 249.9Z" fill="#005400" stroke="#005400" stroke-width="0.9"/>
<path d="M340.5 267.3L339.4 270.7L350.7 265.9L351.8 262.5Z" fill="#004400" stroke="#004400" stroke-width="0.9"/>
<path d="M357.5 308.5L360.8 309.8L371.8 304.5L368.5 303.2Z" fill="#00b500" stroke="#00b500" stroke-width="0.9"/>
<path d="M344.2 323.4L347.1 326.5L357.1 321.6L354.2 318.5Z" fill="#0404ee" stroke="#0404ee" stroke-width="0.9"/>
<path d="M352.1 337.9L353.1 338.8L363.0 333.6L362.0 332.7Z" fill="#00007d" stroke="#00007d" stroke-width="0.9"/>
<path d="M367.5 328.3L367.4 322.1L378.4 316.5L378.4 322.7Z" fill="#004d00" stroke="#004d00" stroke-width="0.9"/>
<path d="M372.4 335.4L375.7 337.8L385.3 332.7L382.1 330.3Z" fill="#0404ee" stroke="#0404ee" stroke-width="0.9"/>
<path d="M309.9 196.7L314.4 200.4L324.8 197.0L320.3 193.2Z" fill="#000069" stroke="#000069" stroke-width="0.9"/>
<path d="M303.4 228.8L303.8 233.1L314.3 229.2L314.0 225.0Z" fill="#0404ee" stroke="#0404ee" stroke-width="0.9"/>
<path d="M320.5 294.8L316.4 297.1L317.7 300.5L322.6 300.2L323.7 302.4L331.2 298.5L330.4 296.8L329.6 295.0L329.0 293.2Z" fill="#0cc40c" stroke="#0cc40c" stroke-width="0.9"/>
<path d="M298.2 216.1L298.2 217.4L308.8 213.7L308.8 212.4Z" fill="#00007d" stroke="#00007d" stroke-width="0.9"/>
<path d="M323.7 302.4L320.3 306.0L322.2 309.2L326.6 307.5L328.0 309.6L334.2 303.5L333.1 301.9L332.1 300.2L331.2 298.5Z" fill="#0cc40c" stroke="#0cc40c" stroke-width="0.9"/>
<path d="M314.4 200.4L314.0 204.4L324.4 200.9L324.8 197.0Z" fill="#0404ee" stroke="#0404ee" stroke-width="0.9"/>
<path d="M360.7 253.8L357.9 255.2L368.9 250.6L371.7 249.3Z" fill="#004400" stroke="#004400" stroke-width="0.9"/>
<path d="M298.2 217.4L303.0 220.4L303.1 224.6L298.4 224.9L298.5 226.2L289.7 224.2L289.4 219.3L289.3 214.5Z" fill="#0a0af0" stroke="#0a0af0" stroke-width="0.9"/>
<path d="M381.4 304.5L384.2 303.3L394.9 298.0L392.1 299.3Z" fill="#00e100" stroke="#00e100" stroke-width="0.9"/>
<path d="M346.7 332.6L350.1 329.6L353.1 332.5L352.1 337.9L353.1 338.8L349.2 347.0L345.7 343.7L342.3 340.3Z" fill="#0a0af0" stroke="#0a0af0" stroke-width="0.9"/>
<path d="M318.5 286.9L313.8 287.9L314.6 291.4L319.8 292.4L320.5 294.8L329.0 293.2L328.4 291.3L327.9 289.5L327.6 287.6Z" fill="#0cc40c" stroke="#0cc40c" stroke-width="0.9"/>
<path d="M353.1 332.5L352.1 337.9L362.0 332.7L363.0 327.4Z" fill="#000069" stroke="#000069" stroke-width="0.9"/>
<path d="M329.9 295.7L331.8 299.6L343.3 294.4L341.4 290.5Z" fill="#004400" stroke="#004400" stroke-width="0.9"/>
<path d="M376.6 289.7L377.6 289.2L386.2 285.2L385.2 285.6Z" fill="#4b4b4b" stroke="#4b4b4b" stroke-width="0.9"/>
<path d="M328.5 291.6L329.9 295.7L341.4 290.5L340.0 286.5ZM331.8 299.6L334.1 303.3L345.6 298.0L343.3 294.4Z" fill="#004400" stroke="#004400" stroke-width="0.9"/>
<path d="M328.0 309.6L325.5 314.1L327.7 317.0L331.5 314.0L333.2 315.8L337.8 307.9L336.5 306.5L335.3 305.0L334.2 303.5Z" fill="#0cc40c" stroke="#0cc40c" stroke-width="0.9"/>
<path d="M355.9 242.7L352.3 236.9L363.4 232.5L367.0 238.3Z" fill="#004d00" stroke="#004d00" stroke-width="0.9"/>
<path d="M298.2 217.4L303.0 220.4L313.6 216.7L308.8 213.7Z" fill="#000069" stroke="#000069" stroke-width="0.9"/>
<path d="M342.1 264.3L340.5 267.3L351.8 262.5L353.4 259.6Z" fill="#004400" stroke="#004400" stroke-width="0.9"/>
<path d="M360.8 309.8L364.1 310.5L375.1 305.1L371.8 304.5Z" fill="#00c700" stroke="#00c700" stroke-width="0.9"/>
<path d="M382.4 348.1L383.4 348.8L393.0 343.6L391.9 342.9Z" fill="#00007d" stroke="#00007d" stroke-width="0.9"/>
<path d="M327.5 287.5L328.5 291.6L340.0 286.5L339.1 282.4Z" fill="#004400" stroke="#004400" stroke-width="0.9"/>
<path d="M392.2 320.3L389.9 313.9L400.5 308.5L402.7 314.9Z" fill="#004d00" stroke="#004d00" stroke-width="0.9"/>
<path d="M368.4 267.7L367.3 268.0L376.0 264.2L377.0 263.9Z" fill="#fafafa" stroke="#fafafa" stroke-width="0.9"/>
<path d="M334.1 303.3L336.7 306.7L348.2 301.3L345.6 298.0Z" fill="#005800" stroke="#005800" stroke-width="0.9"/>
<path d="M350.1 329.6L353.1 332.5L363.0 327.4L360.0 324.5Z" fill="#0404ee" stroke="#0404ee" stroke-width="0.9"/>
<path d="M377.6 289.2L378.5 288.5L387.1 284.5L386.2 285.2Z" fill="#4b4b4b" stroke="#4b4b4b" stroke-width="0.9"/>
<path d="M303.0 220.4L303.1 224.6L313.7 220.8L313.6 216.7Z" fill="#0404ee" stroke="#0404ee" stroke-width="0.9"/>
<path d="M311.4 187.2L311.2 188.4L321.7 185.1L321.9 183.9Z" fill="#00007d" stroke="#00007d" stroke-width="0.9"/>
<path d="M317.8 279.0L312.7 278.7L312.9 282.2L318.1 284.5L318.5 286.9L327.6 287.6L327.3 285.8L327.1 284.0L327.1 282.2Z" fill="#0cc40c" stroke="#0cc40c" stroke-width="0.9"/>
<path d="M358.7 343.6L359.7 344.4L369.6 339.2L368.6 338.4Z" fill="#00007d" stroke="#00007d" stroke-width="0.9"/>
<path d="M357.6 242.1L355.9 242.7L367.0 238.3L368.6 237.7Z" fill="#006a00" stroke="#006a00" stroke-width="0.9"/>
<path d="M382.3 342.3L382.4 348.1L391.9 342.9L391.9 337.1Z" fill="#000069" stroke="#000069" stroke-width="0.9"/>
<path d="M369.5 267.6L368.4 267.7L377.0 263.9L378.1 263.8Z" fill="#fafafa" stroke="#fafafa" stroke-width="0.9"/>
<path d="M327.1 283.4L327.5 287.5L339.1 282.4L338.7 278.3Z" fill="#004400" stroke="#004400" stroke-width="0.9"/>
<path d="M336.7 306.7L339.7 309.6L351.1 304.2L348.2 301.3Z" fill="#007100" stroke="#007100" stroke-width="0.9"/>
<path d="M320.3 264.9L315.0 262.0L326.8 257.2L332.0 260.1Z" fill="#005700" stroke="#005700" stroke-width="0.9"/>
<path d="M389.9 313.9L391.4 313.0L402.0 307.6L400.5 308.5Z" fill="#005900" stroke="#005900" stroke-width="0.9"/>
<path d="M378.5 288.5L379.3 287.7L387.9 283.7L387.1 284.5Z" fill="#4b4b4b" stroke="#4b4b4b" stroke-width="0.9"/>
<path d="M379.0 340.1L382.3 342.3L391.9 337.1L388.6 335.0Z" fill="#0404ee" stroke="#0404ee" stroke-width="0.9"/>
<path d="M298.5 207.4L298.4 208.7L309.1 205.1L309.2 203.8Z" fill="#00007d" stroke="#00007d" stroke-width="0.9"/>
<path d="M348.8 332.4L349.8 326.5L361.1 320.9L360.1 326.7Z" fill="#004d00" stroke="#004d00" stroke-width="0.9"/>
<path d="M333.2 315.8L331.7 321.3L334.2 323.6L337.2 319.5L339.0 321.0L341.9 311.4L340.5 310.3L339.1 309.1L337.8 307.9Z" fill="#0cc40c" stroke="#0cc40c" stroke-width="0.9"/>
<path d="M311.2 188.4L315.6 192.6L326.0 189.2L321.7 185.1Z" fill="#000069" stroke="#000069" stroke-width="0.9"/>
<path d="M298.4 208.7L303.1 212.1L303.0 216.2L298.2 216.1L298.2 217.4L289.3 214.5L289.3 209.7L289.5 205.0ZM353.1 338.8L356.2 335.3L359.4 338.0L358.7 343.6L359.7 344.4L356.5 353.2L352.8 350.1L349.2 347.0Z" fill="#0a0af0" stroke="#0a0af0" stroke-width="0.9"/>
<path d="M315.6 192.6L314.9 196.5L325.4 193.0L326.0 189.2Z" fill="#0404ee" stroke="#0404ee" stroke-width="0.9"/>
<path d="M370.7 267.6L369.5 267.6L378.1 263.8L379.3 263.8Z" fill="#fafafa" stroke="#fafafa" stroke-width="0.9"/>
<path d="M359.4 338.0L358.7 343.6L368.6 338.4L369.3 332.9Z" fill="#000069" stroke="#000069" stroke-width="0.9"/>
<path d="M379.3 287.7L380.0 286.7L388.5 282.7L387.9 283.7Z" fill="#4b4b4b" stroke="#4b4b4b" stroke-width="0.9"/>
<path d="M344.2 261.9L342.1 264.3L353.4 259.6L355.5 257.1ZM327.2 279.4L327.1 283.4L338.7 278.3L338.8 274.4Z" fill="#004400" stroke="#004400" stroke-width="0.9"/>
<path d="M364.1 310.5L367.4 310.5L378.4 305.1L375.1 305.1Z" fill="#00d600" stroke="#00d600" stroke-width="0.9"/>
<path d="M298.4 208.7L303.1 212.1L313.7 208.5L309.1 205.1Z" fill="#000069" stroke="#000069" stroke-width="0.9"/>
<path d="M339.7 309.6L342.8 312.1L354.2 306.7L351.1 304.2Z" fill="#008a00" stroke="#008a00" stroke-width="0.9"/>
<path d="M356.2 335.3L359.4 338.0L369.3 332.9L366.1 330.2Z" fill="#0404ee" stroke="#0404ee" stroke-width="0.9"/>
<path d="M371.9 267.9L370.7 267.6L379.3 263.8L380.5 264.1Z" fill="#fafafa" stroke="#fafafa" stroke-width="0.9"/>
<path d="M339.4 250.1L335.0 245.1L346.4 240.6L350.7 245.6Z" fill="#005000" stroke="#005000" stroke-width="0.9"/>
<path d="M380.0 286.7L380.5 285.6L389.0 281.6L388.5 282.7Z" fill="#4b4b4b" stroke="#4b4b4b" stroke-width="0.9"/>
<path d="M303.1 212.1L303.0 216.2L313.6 212.6L313.7 208.5Z" fill="#0404ee" stroke="#0404ee" stroke-width="0.9"/>
<path d="M374.7 328.1L373.5 321.6L384.4 316.0L385.6 322.5Z" fill="#004d00" stroke="#004d00" stroke-width="0.9"/>
<path d="M318.4 271.6L313.1 270.0L312.7 273.2L317.8 276.7L317.8 279.0L327.1 282.2L327.1 280.4L327.3 278.7L327.5 277.0Z" fill="#0cc40c" stroke="#0cc40c" stroke-width="0.9"/>
<path d="M373.1 268.4L371.9 267.9L380.5 264.1L381.7 264.6Z" fill="#fafafa" stroke="#fafafa" stroke-width="0.9"/>
<path d="M380.5 285.6L380.9 284.4L389.4 280.4L389.0 281.6Z" fill="#4b4b4b" stroke="#4b4b4b" stroke-width="0.9"/>
<path d="M389.5 352.2L390.6 352.7L400.1 347.5L399.0 346.9Z" fill="#00007d" stroke="#00007d" stroke-width="0.9"/>
<path d="M359.0 235.0L356.4 235.5L367.5 231.2L370.1 230.7Z" fill="#00c400" stroke="#00c400" stroke-width="0.9"/>
<path d="M365.6 348.8L366.6 349.5L376.4 344.2L375.4 343.5Z" fill="#00007d" stroke="#00007d" stroke-width="0.9"/>
<path d="M327.8 275.6L327.2 279.4L338.8 274.4L339.4 270.7Z" fill="#004400" stroke="#004400" stroke-width="0.9"/>
<path d="M342.8 312.1L346.1 314.0L357.5 308.5L354.2 306.7Z" fill="#00a100" stroke="#00a100" stroke-width="0.9"/>
<path d="M374.3 269.0L373.1 268.4L381.7 264.6L382.9 265.2Z" fill="#fafafa" stroke="#fafafa" stroke-width="0.9"/>
<path d="M339.0 321.0L338.6 327.0L341.3 328.8L343.4 323.8L345.3 324.8L346.3 314.1L344.8 313.3L343.3 312.4L341.9 311.4Z" fill="#0cc40c" stroke="#0cc40c" stroke-width="0.9"/>
<path d="M395.8 318.1L397.9 316.4L408.4 310.9L406.3 312.6Z" fill="#00b300" stroke="#00b300" stroke-width="0.9"/>
<path d="M380.9 284.4L381.1 283.1L389.7 279.1L389.4 280.4Z" fill="#4b4b4b" stroke="#4b4b4b" stroke-width="0.9"/>
<path d="M313.4 179.3L313.0 180.5L323.5 177.2L323.9 176.1Z" fill="#00007d" stroke="#00007d" stroke-width="0.9"/>
<path d="M389.1 346.2L389.5 352.2L399.0 346.9L398.6 341.0Z" fill="#000069" stroke="#000069" stroke-width="0.9"/>
<path d="M299.3 198.9L299.1 200.2L309.9 196.7L310.0 195.4Z" fill="#00007d" stroke="#00007d" stroke-width="0.9"/>
<path d="M385.7 344.3L389.1 346.2L398.6 341.0L395.2 339.1Z" fill="#0404ee" stroke="#0404ee" stroke-width="0.9"/>
<path d="M346.6 259.9L344.2 261.9L355.5 257.1L357.9 255.2Z" fill="#004400" stroke="#004400" stroke-width="0.9"/>
<path d="M299.1 200.2L303.7 204.0L303.4 208.0L298.5 207.4L298.4 208.7L289.5 205.0L289.8 200.3L290.3 195.7Z" fill="#0a0af0" stroke="#0a0af0" stroke-width="0.9"/>
<path d="M375.4 269.8L374.3 269.0L382.9 265.2L384.0 266.0Z" fill="#f3f3f3" stroke="#f3f3f3" stroke-width="0.9"/>
<path d="M359.7 344.4L362.6 340.6L365.8 343.0L365.6 348.8L366.6 349.5L364.0 358.8L360.2 356.0L356.5 353.2Z" fill="#0a0af0" stroke="#0a0af0" stroke-width="0.9"/>
<path d="M367.4 310.5L370.5 309.9L381.4 304.5L378.4 305.1Z" fill="#00e100" stroke="#00e100" stroke-width="0.9"/>
<path d="M381.1 283.1L381.2 281.7L389.7 277.7L389.7 279.1Z" fill="#4b4b4b" stroke="#4b4b4b" stroke-width="0.9"/>
<path d="M361.8 241.4L359.0 235.0L370.1 230.7L372.8 237.0Z" fill="#004d00" stroke="#004d00" stroke-width="0.9"/>
<path d="M365.8 343.0L365.6 348.8L375.4 343.5L375.7 337.8ZM313.0 180.5L317.3 185.0L327.7 181.7L323.5 177.2Z" fill="#000069" stroke="#000069" stroke-width="0.9"/>
<path d="M317.3 185.0L316.4 188.7L326.8 185.4L327.7 181.7Z" fill="#0404ee" stroke="#0404ee" stroke-width="0.9"/>
<path d="M376.5 270.8L375.4 269.8L384.0 266.0L385.1 266.9Z" fill="#e5e5e5" stroke="#e5e5e5" stroke-width="0.9"/>
<path d="M397.9 316.4L394.6 310.3L405.2 304.9L408.4 310.9Z" fill="#004d00" stroke="#004d00" stroke-width="0.9"/>
<path d="M381.2 281.7L381.1 280.2L389.7 276.3L389.7 277.7Z" fill="#4b4b4b" stroke="#4b4b4b" stroke-width="0.9"/>
<path d="M362.6 340.6L365.8 343.0L375.7 337.8L372.4 335.4Z" fill="#0404ee" stroke="#0404ee" stroke-width="0.9"/>
<path d="M299.1 200.2L303.7 204.0L314.4 200.4L309.9 196.7Z" fill="#000069" stroke="#000069" stroke-width="0.9"/>
<path d="M363.6 241.3L361.8 241.4L372.8 237.0L374.6 236.9Z" fill="#006900" stroke="#006900" stroke-width="0.9"/>
<path d="M377.5 271.9L376.5 270.8L385.1 266.9L386.1 268.0Z" fill="#d4d4d4" stroke="#d4d4d4" stroke-width="0.9"/>
<path d="M381.1 280.2L380.9 278.7L389.4 274.8L389.7 276.3Z" fill="#4b4b4b" stroke="#4b4b4b" stroke-width="0.9"/>
<path d="M323.4 259.2L318.5 255.1L330.2 250.4L335.1 254.5Z" fill="#005400" stroke="#005400" stroke-width="0.9"/>
<path d="M328.9 272.2L327.8 275.6L339.4 270.7L340.5 267.3Z" fill="#004400" stroke="#004400" stroke-width="0.9"/>
<path d="M303.7 204.0L303.4 208.0L314.0 204.4L314.4 200.4Z" fill="#0404ee" stroke="#0404ee" stroke-width="0.9"/>
<path d="M394.6 310.3L395.9 308.9L406.4 303.6L405.2 304.9Z" fill="#005900" stroke="#005900" stroke-width="0.9"/>
<path d="M378.4 273.1L377.5 271.9L386.1 268.0L387.0 269.2Z" fill="#c1c1c1" stroke="#c1c1c1" stroke-width="0.9"/>
<path d="M346.1 314.0L349.5 315.3L360.8 309.8L357.5 308.5Z" fill="#00b500" stroke="#00b500" stroke-width="0.9"/>
<path d="M380.9 278.7L380.5 277.3L389.0 273.4L389.4 274.8Z" fill="#646464" stroke="#646464" stroke-width="0.9"/>
<path d="M367.9 293.8L368.9 293.3L377.6 289.2L376.6 289.7Z" fill="#4b4b4b" stroke="#4b4b4b" stroke-width="0.9"/>
<path d="M379.2 274.4L378.4 273.1L387.0 269.2L387.8 270.5Z" fill="#acacac" stroke="#acacac" stroke-width="0.9"/>
<path d="M356.3 334.1L356.2 327.7L367.4 322.1L367.5 328.3Z" fill="#004d00" stroke="#004d00" stroke-width="0.9"/>
<path d="M380.5 277.3L379.9 275.8L388.5 271.9L389.0 273.4Z" fill="#7d7d7d" stroke="#7d7d7d" stroke-width="0.9"/>
<path d="M379.9 275.8L379.2 274.4L387.8 270.5L388.5 271.9Z" fill="#959595" stroke="#959595" stroke-width="0.9"/>
<path d="M320.3 264.9L315.0 262.0L314.1 264.9L318.8 269.5L318.4 271.6L327.5 277.0L327.9 275.4L328.3 273.9L328.8 272.4Z" fill="#0cc40c" stroke="#0cc40c" stroke-width="0.9"/>
<path d="M359.5 271.5L358.5 271.9L367.3 268.0L368.4 267.7Z" fill="#fafafa" stroke="#fafafa" stroke-width="0.9"/>
<path d="M368.9 293.3L369.8 292.6L378.5 288.5L377.6 289.2Z" fill="#4b4b4b" stroke="#4b4b4b" stroke-width="0.9"/>
<path d="M349.4 258.6L346.6 259.9L357.9 255.2L360.7 253.8Z" fill="#004400" stroke="#004400" stroke-width="0.9"/>
<path d="M372.6 353.5L373.7 354.1L383.4 348.8L382.4 348.1Z" fill="#00007d" stroke="#00007d" stroke-width="0.9"/>
<path d="M370.5 309.9L373.3 308.7L384.2 303.3L381.4 304.5Z" fill="#00e100" stroke="#00e100" stroke-width="0.9"/>
<path d="M345.3 324.8L345.9 331.2L348.8 332.4L349.8 326.5L351.7 327.1L350.8 315.7L349.3 315.3L347.8 314.7L346.3 314.1Z" fill="#0cc40c" stroke="#0cc40c" stroke-width="0.9"/>
<path d="M396.8 355.6L397.9 356.1L407.3 350.8L406.2 350.3Z" fill="#00007d" stroke="#00007d" stroke-width="0.9"/>
<path d="M360.7 271.4L359.5 271.5L368.4 267.7L369.5 267.6Z" fill="#fafafa" stroke="#fafafa" stroke-width="0.9"/>
<path d="M369.8 292.6L370.6 291.8L379.3 287.7L378.5 288.5Z" fill="#4b4b4b" stroke="#4b4b4b" stroke-width="0.9"/>
<path d="M300.7 190.6L300.4 191.8L311.2 188.4L311.4 187.2Z" fill="#00007d" stroke="#00007d" stroke-width="0.9"/>
<path d="M417.0 229.9L410.4 231.7L418.1 228.5L424.6 226.7Z" fill="#5f5f5f" stroke="#5f5f5f" stroke-width="0.9"/>
<path d="M330.5 269.2L328.9 272.2L340.5 267.3L342.1 264.3Z" fill="#004400" stroke="#004400" stroke-width="0.9"/>
<path d="M344.6 247.3L340.9 241.4L352.3 236.9L355.9 242.7Z" fill="#004d00" stroke="#004d00" stroke-width="0.9"/>
<path d="M300.4 191.8L304.9 196.1L304.2 200.0L299.3 198.9L299.1 200.2L290.3 195.7L290.9 191.1L291.7 186.5ZM366.6 349.5L369.2 345.4L372.5 347.5L372.6 353.5L373.7 354.1L371.7 363.8L367.9 361.4L364.0 358.8Z" fill="#0a0af0" stroke="#0a0af0" stroke-width="0.9"/>
<path d="M372.5 347.5L372.6 353.5L382.4 348.1L382.3 342.3Z" fill="#000069" stroke="#000069" stroke-width="0.9"/>
<path d="M392.5 348.0L396.0 349.6L405.4 344.3L402.0 342.7Z" fill="#0404ee" stroke="#0404ee" stroke-width="0.9"/>
<path d="M349.5 315.3L352.9 316.0L364.1 310.5L360.8 309.8Z" fill="#00c700" stroke="#00c700" stroke-width="0.9"/>
<path d="M396.0 349.6L396.8 355.6L406.2 350.3L405.4 344.3Z" fill="#000069" stroke="#000069" stroke-width="0.9"/>
<path d="M315.8 171.7L315.4 172.8L325.9 169.6L326.3 168.5Z" fill="#00007d" stroke="#00007d" stroke-width="0.9"/>
<path d="M381.3 325.9L379.1 319.4L389.9 313.9L392.2 320.3Z" fill="#004d00" stroke="#004d00" stroke-width="0.9"/>
<path d="M361.9 271.5L360.7 271.4L369.5 267.6L370.7 267.6Z" fill="#fafafa" stroke="#fafafa" stroke-width="0.9"/>
<path d="M369.2 345.4L372.5 347.5L382.3 342.3L379.0 340.1Z" fill="#0404ee" stroke="#0404ee" stroke-width="0.9"/>
<path d="M421.0 252.6L426.2 248.1L433.7 244.7L428.6 249.2Z" fill="#484848" stroke="#484848" stroke-width="0.9"/>
<path d="M370.6 291.8L371.3 290.8L380.0 286.7L379.3 287.7Z" fill="#4b4b4b" stroke="#4b4b4b" stroke-width="0.9"/>
<path d="M300.4 191.8L304.9 196.1L315.6 192.6L311.2 188.4Z" fill="#000069" stroke="#000069" stroke-width="0.9"/>
<path d="M319.5 177.7L318.3 181.3L328.8 178.0L329.9 174.4Z" fill="#0404ee" stroke="#0404ee" stroke-width="0.9"/>
<path d="M315.4 172.8L319.5 177.7L329.9 174.4L325.9 169.6Z" fill="#000069" stroke="#000069" stroke-width="0.9"/>
<path d="M304.9 196.1L304.2 200.0L314.9 196.5L315.6 192.6Z" fill="#0404ee" stroke="#0404ee" stroke-width="0.9"/>
<path d="M346.3 246.7L344.6 247.3L355.9 242.7L357.6 242.1Z" fill="#006a00" stroke="#006a00" stroke-width="0.9"/>
<path d="M366.4 235.1L363.5 234.9L374.6 230.5L377.4 230.8Z" fill="#00c200" stroke="#00c200" stroke-width="0.9"/>
<path d="M363.1 271.8L361.9 271.5L370.7 267.6L371.9 267.9Z" fill="#fafafa" stroke="#fafafa" stroke-width="0.9"/>
<path d="M371.3 290.8L371.8 289.7L380.5 285.6L380.0 286.7Z" fill="#4b4b4b" stroke="#4b4b4b" stroke-width="0.9"/>
<path d="M379.1 319.4L380.6 318.5L391.4 313.0L389.9 313.9Z" fill="#005900" stroke="#005900" stroke-width="0.9"/>
<path d="M400.8 313.0L402.4 310.7L412.9 305.3L411.3 307.6Z" fill="#00b300" stroke="#00b300" stroke-width="0.9"/>
<path d="M368.1 241.8L366.4 235.1L377.4 230.8L379.1 237.3Z" fill="#004d00" stroke="#004d00" stroke-width="0.9"/>
<path d="M416.6 222.7L409.4 222.0L417.1 218.9L424.2 219.6Z" fill="#5c5c5c" stroke="#5c5c5c" stroke-width="0.9"/>
<path d="M323.4 259.2L318.5 255.1L317.0 257.6L321.1 263.1L320.3 264.9L328.8 272.4L329.5 271.0L330.2 269.7L331.1 268.5Z" fill="#0cc40c" stroke="#0cc40c" stroke-width="0.9"/>
<path d="M364.3 272.3L363.1 271.8L371.9 267.9L373.1 268.4Z" fill="#fafafa" stroke="#fafafa" stroke-width="0.9"/>
<path d="M370.0 242.2L368.1 241.8L379.1 237.3L381.0 237.8Z" fill="#006600" stroke="#006600" stroke-width="0.9"/>
<path d="M402.4 310.7L398.4 305.2L408.9 299.9L412.9 305.3Z" fill="#004e00" stroke="#004e00" stroke-width="0.9"/>
<path d="M371.8 289.7L372.2 288.5L380.9 284.4L380.5 285.6Z" fill="#4b4b4b" stroke="#4b4b4b" stroke-width="0.9"/>
<path d="M332.6 266.7L330.5 269.2L342.1 264.3L344.2 261.9Z" fill="#004400" stroke="#004400" stroke-width="0.9"/>
<path d="M398.4 305.2L399.3 303.5L409.8 298.2L408.9 299.9Z" fill="#005900" stroke="#005900" stroke-width="0.9"/>
<path d="M352.9 316.0L356.1 316.0L367.4 310.5L364.1 310.5Z" fill="#00d600" stroke="#00d600" stroke-width="0.9"/>
<path d="M365.5 272.9L364.3 272.3L373.1 268.4L374.3 269.0Z" fill="#fafafa" stroke="#fafafa" stroke-width="0.9"/>
<path d="M327.7 254.9L323.3 249.7L335.0 245.1L339.4 250.1Z" fill="#005000" stroke="#005000" stroke-width="0.9"/>
<path d="M379.8 357.6L380.9 358.2L390.6 352.7L389.5 352.2Z" fill="#00007d" stroke="#00007d" stroke-width="0.9"/>
<path d="M372.2 288.5L372.4 287.1L381.1 283.1L380.9 284.4Z" fill="#4b4b4b" stroke="#4b4b4b" stroke-width="0.9"/>
<path d="M428.1 259.0L431.7 252.6L439.2 249.2L435.6 255.5Z" fill="#484848" stroke="#484848" stroke-width="0.9"/>
<path d="M363.6 333.9L362.3 327.2L373.5 321.6L374.7 328.1Z" fill="#004d00" stroke="#004d00" stroke-width="0.9"/>
<path d="M366.6 273.7L365.5 272.9L374.3 269.0L375.4 269.8Z" fill="#f3f3f3" stroke="#f3f3f3" stroke-width="0.9"/>
<path d="M351.7 327.1L353.5 333.6L356.3 334.1L356.2 327.7L358.1 327.8L355.2 316.1L353.7 316.1L352.3 315.9L350.8 315.7Z" fill="#0cc40c" stroke="#0cc40c" stroke-width="0.9"/>
<path d="M372.4 287.1L372.5 285.7L381.2 281.7L381.1 283.1Z" fill="#4b4b4b" stroke="#4b4b4b" stroke-width="0.9"/>
<path d="M302.6 182.6L302.3 183.8L313.0 180.5L313.4 179.3Z" fill="#00007d" stroke="#00007d" stroke-width="0.9"/>
<path d="M302.3 183.8L306.6 188.4L305.7 192.2L300.7 190.6L300.4 191.8L291.7 186.5L292.6 182.1L293.6 177.7Z" fill="#0a0af0" stroke="#0a0af0" stroke-width="0.9"/>
<path d="M404.2 358.5L405.3 358.9L414.7 353.5L413.6 353.1Z" fill="#00007d" stroke="#00007d" stroke-width="0.9"/>
<path d="M379.4 351.5L379.8 357.6L389.5 352.2L389.1 346.2Z" fill="#000069" stroke="#000069" stroke-width="0.9"/>
<path d="M373.7 354.1L375.9 349.6L379.4 351.5L379.8 357.6L380.9 358.2L379.7 368.3L375.7 366.1L371.7 363.8Z" fill="#0a0af0" stroke="#0a0af0" stroke-width="0.9"/>
<path d="M375.9 349.6L379.4 351.5L389.1 346.2L385.7 344.3Z" fill="#0404ee" stroke="#0404ee" stroke-width="0.9"/>
<path d="M367.7 274.7L366.6 273.7L375.4 269.8L376.5 270.8Z" fill="#e5e5e5" stroke="#e5e5e5" stroke-width="0.9"/>
<path d="M399.5 351.1L403.0 352.4L412.4 347.1L408.9 345.8Z" fill="#0404ee" stroke="#0404ee" stroke-width="0.9"/>
<path d="M372.5 285.7L372.4 284.2L381.1 280.2L381.2 281.7Z" fill="#4b4b4b" stroke="#4b4b4b" stroke-width="0.9"/>
<path d="M403.0 352.4L404.2 358.5L413.6 353.1L412.4 347.1Z" fill="#000069" stroke="#000069" stroke-width="0.9"/>
<path d="M347.7 239.5L345.0 240.0L356.4 235.5L359.0 235.0Z" fill="#00c400" stroke="#00c400" stroke-width="0.9"/>
<path d="M368.7 275.8L367.7 274.7L376.5 270.8L377.5 271.9Z" fill="#d4d4d4" stroke="#d4d4d4" stroke-width="0.9"/>
<path d="M302.3 183.8L306.6 188.4L317.3 185.0L313.0 180.5Z" fill="#000069" stroke="#000069" stroke-width="0.9"/>
<path d="M318.8 164.4L318.4 165.5L328.9 162.4L329.4 161.3Z" fill="#00007d" stroke="#00007d" stroke-width="0.9"/>
<path d="M372.4 284.2L372.1 282.7L380.9 278.7L381.1 280.2Z" fill="#4b4b4b" stroke="#4b4b4b" stroke-width="0.9"/>
<path d="M306.6 188.4L305.7 192.2L316.4 188.7L317.3 185.0Z" fill="#0404ee" stroke="#0404ee" stroke-width="0.9"/>
<path d="M385.0 323.7L387.1 321.9L397.9 316.4L395.8 318.1Z" fill="#00b300" stroke="#00b300" stroke-width="0.9"/>
<path d="M359.0 298.0L360.0 297.5L368.9 293.3L367.9 293.8Z" fill="#4b4b4b" stroke="#4b4b4b" stroke-width="0.9"/>
<path d="M369.7 277.0L368.7 275.8L377.5 271.9L378.4 273.1Z" fill="#c1c1c1" stroke="#c1c1c1" stroke-width="0.9"/>
<path d="M322.2 170.7L320.8 174.1L331.2 170.9L332.7 167.5Z" fill="#0404ee" stroke="#0404ee" stroke-width="0.9"/>
<path d="M372.1 282.7L371.7 281.3L380.5 277.3L380.9 278.7Z" fill="#646464" stroke="#646464" stroke-width="0.9"/>
<path d="M335.0 264.8L332.6 266.7L344.2 261.9L346.6 259.9Z" fill="#004400" stroke="#004400" stroke-width="0.9"/>
<path d="M370.5 278.4L369.7 277.0L378.4 273.1L379.2 274.4Z" fill="#acacac" stroke="#acacac" stroke-width="0.9"/>
<path d="M371.7 281.3L371.2 279.8L379.9 275.8L380.5 277.3Z" fill="#7d7d7d" stroke="#7d7d7d" stroke-width="0.9"/>
<path d="M318.4 165.5L322.2 170.7L332.7 167.5L328.9 162.4Z" fill="#000069" stroke="#000069" stroke-width="0.9"/>
<path d="M371.2 279.8L370.5 278.4L379.2 274.4L379.9 275.8Z" fill="#959595" stroke="#959595" stroke-width="0.9"/>
<path d="M356.1 316.0L359.2 315.4L370.5 309.9L367.4 310.5Z" fill="#00e100" stroke="#00e100" stroke-width="0.9"/>
<path d="M417.9 216.1L410.7 213.0L418.4 209.9L425.5 213.0Z" fill="#575757" stroke="#575757" stroke-width="0.9"/>
<path d="M350.5 275.5L349.4 275.8L358.5 271.9L359.5 271.5Z" fill="#fafafa" stroke="#fafafa" stroke-width="0.9"/>
<path d="M350.5 246.0L347.7 239.5L359.0 235.0L361.8 241.4Z" fill="#004d00" stroke="#004d00" stroke-width="0.9"/>
<path d="M360.0 297.5L360.9 296.8L369.8 292.6L368.9 293.3Z" fill="#4b4b4b" stroke="#4b4b4b" stroke-width="0.9"/>
<path d="M387.1 321.9L383.8 315.8L394.6 310.3L397.9 316.4Z" fill="#004d00" stroke="#004d00" stroke-width="0.9"/>
<path d="M352.3 245.9L350.5 246.0L361.8 241.4L363.6 241.3Z" fill="#006900" stroke="#006900" stroke-width="0.9"/>
<path d="M376.5 244.7L374.6 243.8L385.5 239.3L387.4 240.2Z" fill="#006400" stroke="#006400" stroke-width="0.9"/>
<path d="M351.6 275.4L350.5 275.5L359.5 271.5L360.7 271.4Z" fill="#fafafa" stroke="#fafafa" stroke-width="0.9"/>
<path d="M327.7 254.9L323.3 249.7L321.3 251.6L324.6 257.8L323.4 259.2L331.1 268.5L332.0 267.3L333.0 266.3L334.0 265.4Z" fill="#0cc40c" stroke="#0cc40c" stroke-width="0.9"/>
<path d="M374.0 237.2L371.1 236.2L382.1 231.8L384.9 232.8Z" fill="#00bf00" stroke="#00bf00" stroke-width="0.9"/>
<path d="M374.6 243.8L374.0 237.2L384.9 232.8L385.5 239.3Z" fill="#004d00" stroke="#004d00" stroke-width="0.9"/>
<path d="M400.9 299.0L401.4 296.9L412.0 291.7L411.4 293.7ZM383.8 315.8L385.1 314.4L395.9 308.9L394.6 310.3Z" fill="#005900" stroke="#005900" stroke-width="0.9"/>
<path d="M360.9 296.8L361.7 296.0L370.6 291.8L369.8 292.6Z" fill="#4b4b4b" stroke="#4b4b4b" stroke-width="0.9"/>
<path d="M409.2 233.2L402.6 235.0L410.4 231.7L417.0 229.9Z" fill="#5f5f5f" stroke="#5f5f5f" stroke-width="0.9"/>
<path d="M404.6 306.5L405.7 303.6L416.1 298.3L415.1 301.1Z" fill="#00b300" stroke="#00b300" stroke-width="0.9"/>
<path d="M405.7 303.6L400.9 299.0L411.4 293.7L416.1 298.3Z" fill="#005200" stroke="#005200" stroke-width="0.9"/>
<path d="M436.0 263.1L437.7 255.3L445.2 251.8L443.5 259.6Z" fill="#484848" stroke="#484848" stroke-width="0.9"/>
<path d="M387.2 361.1L388.3 361.6L397.9 356.1L396.8 355.6Z" fill="#00007d" stroke="#00007d" stroke-width="0.9"/>
<path d="M352.8 275.5L351.6 275.4L360.7 271.4L361.9 271.5Z" fill="#fafafa" stroke="#fafafa" stroke-width="0.9"/>
<path d="M413.3 256.1L418.5 251.5L426.2 248.1L421.0 252.6Z" fill="#484848" stroke="#484848" stroke-width="0.9"/>
<path d="M361.7 296.0L362.4 295.0L371.3 290.8L370.6 291.8Z" fill="#4b4b4b" stroke="#4b4b4b" stroke-width="0.9"/>
<path d="M337.8 263.4L335.0 264.8L346.6 259.9L349.4 258.6Z" fill="#004400" stroke="#004400" stroke-width="0.9"/>
<path d="M382.8 353.3L386.3 355.0L396.0 349.6L392.5 348.0Z" fill="#0404ee" stroke="#0404ee" stroke-width="0.9"/>
<path d="M386.3 355.0L387.2 361.1L396.8 355.6L396.0 349.6Z" fill="#000069" stroke="#000069" stroke-width="0.9"/>
<path d="M359.2 315.4L362.1 314.2L373.3 308.7L370.5 309.9Z" fill="#00e100" stroke="#00e100" stroke-width="0.9"/>
<path d="M305.1 174.9L304.7 176.1L315.4 172.8L315.8 171.7Z" fill="#00007d" stroke="#00007d" stroke-width="0.9"/>
<path d="M304.7 176.1L308.8 181.0L307.6 184.6L302.6 182.6L302.3 183.8L293.6 177.7L294.8 173.4L296.2 169.2Z" fill="#0a0af0" stroke="#0a0af0" stroke-width="0.9"/>
<path d="M358.1 327.8L360.9 334.2L363.6 333.9L362.3 327.2L364.1 326.8L359.3 315.4L358.0 315.8L356.6 316.0L355.2 316.1Z" fill="#0cc40c" stroke="#0cc40c" stroke-width="0.9"/>
<path d="M380.9 358.2L382.8 353.3L386.3 355.0L387.2 361.1L388.3 361.6L387.7 372.1L383.7 370.3L379.7 368.3Z" fill="#0a0af0" stroke="#0a0af0" stroke-width="0.9"/>
<path d="M354.1 275.8L352.8 275.5L361.9 271.5L363.1 271.8Z" fill="#fafafa" stroke="#fafafa" stroke-width="0.9"/>
<path d="M406.5 353.6L410.1 354.6L419.4 349.2L415.9 348.2Z" fill="#0404ee" stroke="#0404ee" stroke-width="0.9"/>
<path d="M411.7 360.7L412.8 361.0L422.1 355.6L421.0 355.3Z" fill="#00007d" stroke="#00007d" stroke-width="0.9"/>
<path d="M362.4 295.0L362.9 293.9L371.8 289.7L371.3 290.8Z" fill="#4b4b4b" stroke="#4b4b4b" stroke-width="0.9"/>
<path d="M308.8 181.0L307.6 184.6L318.3 181.3L319.5 177.7Z" fill="#0404ee" stroke="#0404ee" stroke-width="0.9"/>
<path d="M304.7 176.1L308.8 181.0L319.5 177.7L315.4 172.8Z" fill="#000069" stroke="#000069" stroke-width="0.9"/>
<path d="M332.9 251.9L329.2 246.0L340.9 241.4L344.6 247.3Z" fill="#004d00" stroke="#004d00" stroke-width="0.9"/>
<path d="M410.1 354.6L411.7 360.7L421.0 355.3L419.4 349.2Z" fill="#000069" stroke="#000069" stroke-width="0.9"/>
<path d="M408.7 225.9L401.5 225.2L409.4 222.0L416.6 222.7Z" fill="#5c5c5c" stroke="#5c5c5c" stroke-width="0.9"/>
<path d="M370.2 331.7L367.9 325.1L379.1 319.4L381.3 325.9Z" fill="#004d00" stroke="#004d00" stroke-width="0.9"/>
<path d="M355.3 276.2L354.1 275.8L363.1 271.8L364.3 272.3Z" fill="#fafafa" stroke="#fafafa" stroke-width="0.9"/>
<path d="M325.4 164.0L323.7 167.3L334.2 164.2L335.9 161.0Z" fill="#0404ee" stroke="#0404ee" stroke-width="0.9"/>
<path d="M322.4 157.6L321.8 158.6L332.3 155.6L332.9 154.6Z" fill="#00007d" stroke="#00007d" stroke-width="0.9"/>
<path d="M362.9 293.9L363.3 292.6L372.2 288.5L371.8 289.7Z" fill="#4b4b4b" stroke="#4b4b4b" stroke-width="0.9"/>
<path d="M420.8 210.5L414.1 205.2L421.9 202.3L428.4 207.5Z" fill="#515151" stroke="#515151" stroke-width="0.9"/>
<path d="M321.8 158.6L325.4 164.0L335.9 161.0L332.3 155.6Z" fill="#000069" stroke="#000069" stroke-width="0.9"/>
<path d="M356.5 276.9L355.3 276.2L364.3 272.3L365.5 272.9Z" fill="#fafafa" stroke="#fafafa" stroke-width="0.9"/>
<path d="M382.8 248.8L381.0 247.4L391.8 242.9L393.7 244.2Z" fill="#006000" stroke="#006000" stroke-width="0.9"/>
<path d="M334.6 251.4L332.9 251.9L344.6 247.3L346.3 246.7Z" fill="#006a00" stroke="#006a00" stroke-width="0.9"/>
<path d="M363.3 292.6L363.5 291.3L372.4 287.1L372.2 288.5Z" fill="#4b4b4b" stroke="#4b4b4b" stroke-width="0.9"/>
<path d="M402.1 291.8L402.2 289.6L412.8 284.4L412.7 286.7Z" fill="#005900" stroke="#005900" stroke-width="0.9"/>
<path d="M355.1 239.6L352.2 239.4L363.5 234.9L366.4 235.1Z" fill="#00c200" stroke="#00c200" stroke-width="0.9"/>
<path d="M367.9 325.1L369.4 324.2L380.6 318.5L379.1 319.4Z" fill="#005900" stroke="#005900" stroke-width="0.9"/>
<path d="M420.5 262.5L424.0 256.1L431.7 252.6L428.1 259.0Z" fill="#484848" stroke="#484848" stroke-width="0.9"/>
<path d="M357.6 277.7L356.5 276.9L365.5 272.9L366.6 273.7Z" fill="#f3f3f3" stroke="#f3f3f3" stroke-width="0.9"/>
<path d="M390.1 318.6L391.7 316.2L402.4 310.7L400.8 313.0Z" fill="#00b300" stroke="#00b300" stroke-width="0.9"/>
<path d="M381.0 247.4L381.5 241.1L392.4 236.7L391.8 242.9Z" fill="#004d00" stroke="#004d00" stroke-width="0.9"/>
<path d="M363.5 291.3L363.6 289.8L372.5 285.7L372.4 287.1Z" fill="#4b4b4b" stroke="#4b4b4b" stroke-width="0.9"/>
<path d="M356.8 246.4L355.1 239.6L366.4 235.1L368.1 241.8Z" fill="#004d00" stroke="#004d00" stroke-width="0.9"/>
<path d="M407.4 295.4L402.1 291.8L412.7 286.7L417.9 290.2Z" fill="#005600" stroke="#005600" stroke-width="0.9"/>
<path d="M358.8 246.8L356.8 246.4L368.1 241.8L370.0 242.2Z" fill="#006600" stroke="#006600" stroke-width="0.9"/>
<path d="M358.8 278.7L357.6 277.7L366.6 273.7L367.7 274.7Z" fill="#e5e5e5" stroke="#e5e5e5" stroke-width="0.9"/>
<path d="M381.5 241.1L378.7 239.4L389.6 235.0L392.4 236.7Z" fill="#00bc00" stroke="#00bc00" stroke-width="0.9"/>
<path d="M332.9 251.9L329.2 246.0L326.8 247.2L329.1 253.8L327.7 254.9L334.0 265.4L335.2 264.6L336.4 264.0L337.7 263.4Z" fill="#0cc40c" stroke="#0cc40c" stroke-width="0.9"/>
<path d="M391.7 316.2L387.5 310.7L398.4 305.2L402.4 310.7Z" fill="#004e00" stroke="#004e00" stroke-width="0.9"/>
<path d="M363.6 289.8L363.5 288.4L372.4 284.2L372.5 285.7Z" fill="#4b4b4b" stroke="#4b4b4b" stroke-width="0.9"/>
<path d="M387.5 310.7L388.4 308.9L399.3 303.5L398.4 305.2Z" fill="#005900" stroke="#005900" stroke-width="0.9"/>
<path d="M406.9 298.6L407.4 295.4L417.9 290.2L417.4 293.4Z" fill="#00b300" stroke="#00b300" stroke-width="0.9"/>
<path d="M359.8 279.8L358.8 278.7L367.7 274.7L368.7 275.8Z" fill="#d4d4d4" stroke="#d4d4d4" stroke-width="0.9"/>
<path d="M394.6 364.0L395.7 364.4L405.3 358.9L404.2 358.5Z" fill="#00007d" stroke="#00007d" stroke-width="0.9"/>
<path d="M363.5 288.4L363.2 286.8L372.1 282.7L372.4 284.2ZM349.9 302.2L350.9 301.8L360.0 297.5L359.0 298.0Z" fill="#4b4b4b" stroke="#4b4b4b" stroke-width="0.9"/>
<path d="M444.2 264.6L443.8 256.0L451.2 252.5L451.6 261.0Z" fill="#484848" stroke="#484848" stroke-width="0.9"/>
<path d="M360.7 281.1L359.8 279.8L368.7 275.8L369.7 277.0Z" fill="#c1c1c1" stroke="#c1c1c1" stroke-width="0.9"/>
<path d="M363.2 286.8L362.8 285.3L371.7 281.3L372.1 282.7Z" fill="#646464" stroke="#646464" stroke-width="0.9"/>
<path d="M389.9 356.5L393.4 357.8L403.0 352.4L399.5 351.1Z" fill="#0404ee" stroke="#0404ee" stroke-width="0.9"/>
<path d="M361.5 282.4L360.7 281.1L369.7 277.0L370.5 278.4Z" fill="#acacac" stroke="#acacac" stroke-width="0.9"/>
<path d="M362.8 285.3L362.2 283.9L371.2 279.8L371.7 281.3Z" fill="#7d7d7d" stroke="#7d7d7d" stroke-width="0.9"/>
<path d="M393.4 357.8L394.6 364.0L404.2 358.5L403.0 352.4Z" fill="#000069" stroke="#000069" stroke-width="0.9"/>
<path d="M362.2 283.9L361.5 282.4L370.5 278.4L371.2 279.8Z" fill="#959595" stroke="#959595" stroke-width="0.9"/>
<path d="M410.0 219.2L402.8 216.1L410.7 213.0L417.9 216.1Z" fill="#575757" stroke="#575757" stroke-width="0.9"/>
<path d="M307.6 168.7L311.5 173.9L310.0 177.4L305.1 174.9L304.7 176.1L296.2 169.2L297.7 165.1L299.4 161.1Z" fill="#0a0af0" stroke="#0a0af0" stroke-width="0.9"/>
<path d="M308.1 167.6L307.6 168.7L318.4 165.5L318.8 164.4Z" fill="#00007d" stroke="#00007d" stroke-width="0.9"/>
<path d="M341.3 279.6L340.2 279.9L349.4 275.8L350.5 275.5Z" fill="#fafafa" stroke="#fafafa" stroke-width="0.9"/>
<path d="M388.3 361.6L389.9 356.5L393.4 357.8L394.6 364.0L395.7 364.4L395.8 375.2L391.8 373.7L387.7 372.1Z" fill="#0a0af0" stroke="#0a0af0" stroke-width="0.9"/>
<path d="M388.6 254.3L386.9 252.5L397.7 247.9L399.4 249.6Z" fill="#005d00" stroke="#005d00" stroke-width="0.9"/>
<path d="M311.5 173.9L310.0 177.4L320.8 174.1L322.2 170.7Z" fill="#0404ee" stroke="#0404ee" stroke-width="0.9"/>
<path d="M402.0 284.1L401.7 281.7L412.3 276.7L412.6 279.0Z" fill="#005900" stroke="#005900" stroke-width="0.9"/>
<path d="M350.9 301.8L351.8 301.1L360.9 296.8L360.0 297.5Z" fill="#4b4b4b" stroke="#4b4b4b" stroke-width="0.9"/>
<path d="M364.1 326.8L367.8 332.7L370.2 331.7L367.9 325.1L369.4 324.2L363.0 313.5L361.9 314.3L360.6 314.9L359.3 315.4Z" fill="#0cc40c" stroke="#0cc40c" stroke-width="0.9"/>
<path d="M307.6 168.7L311.5 173.9L322.2 170.7L318.4 165.5Z" fill="#000069" stroke="#000069" stroke-width="0.9"/>
<path d="M413.6 355.5L417.1 356.2L426.4 350.8L422.9 350.1Z" fill="#0404ee" stroke="#0404ee" stroke-width="0.9"/>
<path d="M336.0 244.1L333.3 244.6L345.0 240.0L347.7 239.5Z" fill="#00c400" stroke="#00c400" stroke-width="0.9"/>
<path d="M419.1 362.3L420.2 362.5L429.5 357.0L428.4 356.9Z" fill="#00007d" stroke="#00007d" stroke-width="0.9"/>
<path d="M342.4 279.4L341.3 279.6L350.5 275.5L351.6 275.4Z" fill="#fafafa" stroke="#fafafa" stroke-width="0.9"/>
<path d="M417.1 356.2L419.1 362.3L428.4 356.9L426.4 350.8Z" fill="#000069" stroke="#000069" stroke-width="0.9"/>
<path d="M373.9 329.4L376.0 327.7L387.1 321.9L385.0 323.7Z" fill="#00b300" stroke="#00b300" stroke-width="0.9"/>
<path d="M351.8 301.1L352.6 300.3L361.7 296.0L360.9 296.8Z" fill="#4b4b4b" stroke="#4b4b4b" stroke-width="0.9"/>
<path d="M329.1 157.8L327.2 160.9L337.7 157.8L339.6 154.8Z" fill="#0404ee" stroke="#0404ee" stroke-width="0.9"/>
<path d="M401.2 236.5L394.6 238.3L402.6 235.0L409.2 233.2Z" fill="#5f5f5f" stroke="#5f5f5f" stroke-width="0.9"/>
<path d="M386.9 252.5L388.6 246.8L399.4 242.2L397.7 247.9Z" fill="#004d00" stroke="#004d00" stroke-width="0.9"/>
<path d="M407.5 286.4L402.0 284.1L412.6 279.0L418.0 281.3Z" fill="#005900" stroke="#005900" stroke-width="0.9"/>
<path d="M326.4 151.2L325.8 152.1L336.3 149.1L336.9 148.2Z" fill="#00007d" stroke="#00007d" stroke-width="0.9"/>
<path d="M393.6 260.8L392.2 258.7L403.0 254.0L404.3 256.1Z" fill="#005900" stroke="#005900" stroke-width="0.9"/>
<path d="M428.4 266.7L430.1 258.8L437.7 255.3L436.0 263.1Z" fill="#484848" stroke="#484848" stroke-width="0.9"/>
<path d="M400.5 276.1L399.8 273.7L410.4 268.8L411.1 271.1Z" fill="#005900" stroke="#005900" stroke-width="0.9"/>
<path d="M338.8 250.7L336.0 244.1L347.7 239.5L350.5 246.0Z" fill="#004d00" stroke="#004d00" stroke-width="0.9"/>
<path d="M325.8 152.1L329.1 157.8L339.6 154.8L336.3 149.1Z" fill="#000069" stroke="#000069" stroke-width="0.9"/>
<path d="M343.6 279.5L342.4 279.4L351.6 275.4L352.8 275.5Z" fill="#fafafa" stroke="#fafafa" stroke-width="0.9"/>
<path d="M425.1 206.5L419.6 199.4L427.3 196.5L432.8 203.6ZM352.6 300.3L353.3 299.3L362.4 295.0L361.7 296.0Z" fill="#4b4b4b" stroke="#4b4b4b" stroke-width="0.9"/>
<path d="M405.4 259.6L410.6 255.0L418.5 251.5L413.3 256.1Z" fill="#484848" stroke="#484848" stroke-width="0.9"/>
<path d="M376.0 327.7L372.7 321.4L383.8 315.8L387.1 321.9Z" fill="#004d00" stroke="#004d00" stroke-width="0.9"/>
<path d="M388.6 246.8L386.0 244.5L396.8 239.9L399.4 242.2Z" fill="#00b900" stroke="#00b900" stroke-width="0.9"/>
<path d="M397.7 268.2L396.6 265.9L407.2 261.1L408.3 263.4Z" fill="#005900" stroke="#005900" stroke-width="0.9"/>
<path d="M407.6 289.9L407.5 286.4L418.0 281.3L418.2 284.7Z" fill="#00b300" stroke="#00b300" stroke-width="0.9"/>
<path d="M340.7 250.6L338.8 250.7L350.5 246.0L352.3 245.9Z" fill="#006900" stroke="#006900" stroke-width="0.9"/>
<path d="M344.8 279.8L343.6 279.5L352.8 275.5L354.1 275.8Z" fill="#fafafa" stroke="#fafafa" stroke-width="0.9"/>
<path d="M365.3 249.4L363.4 248.4L374.6 243.8L376.5 244.7Z" fill="#006400" stroke="#006400" stroke-width="0.9"/>
<path d="M372.7 321.4L373.9 320.0L385.1 314.4L383.8 315.8Z" fill="#005900" stroke="#005900" stroke-width="0.9"/>
<path d="M353.3 299.3L353.8 298.1L362.9 293.9L362.4 295.0Z" fill="#4b4b4b" stroke="#4b4b4b" stroke-width="0.9"/>
<path d="M362.8 241.7L359.8 240.7L371.1 236.2L374.0 237.2Z" fill="#00bf00" stroke="#00bf00" stroke-width="0.9"/>
<path d="M363.4 248.4L362.8 241.7L374.0 237.2L374.6 243.8Z" fill="#004d00" stroke="#004d00" stroke-width="0.9"/>
<path d="M390.1 304.4L390.6 302.3L401.4 296.9L400.9 299.0Z" fill="#005900" stroke="#005900" stroke-width="0.9"/>
<path d="M338.8 250.7L336.0 244.1L333.3 244.6L334.6 251.4L332.9 251.9L337.7 263.4L339.0 263.0L340.4 262.7L341.8 262.6Z" fill="#0cc40c" stroke="#0cc40c" stroke-width="0.9"/>
<path d="M392.2 258.7L395.0 253.9L405.7 249.3L403.0 254.0Z" fill="#004d00" stroke="#004d00" stroke-width="0.9"/>
<path d="M393.8 311.9L394.9 309.1L405.7 303.6L404.6 306.5Z" fill="#00b300" stroke="#00b300" stroke-width="0.9"/>
<path d="M400.8 229.1L393.5 228.4L401.5 225.2L408.7 225.9Z" fill="#5c5c5c" stroke="#5c5c5c" stroke-width="0.9"/>
<path d="M394.9 309.1L390.1 304.4L400.9 299.0L405.7 303.6Z" fill="#005200" stroke="#005200" stroke-width="0.9"/>
<path d="M406.0 277.0L400.5 276.1L411.1 271.1L416.5 272.1Z" fill="#005b00" stroke="#005b00" stroke-width="0.9"/>
<path d="M346.1 280.3L344.8 279.8L354.1 275.8L355.3 276.2Z" fill="#fafafa" stroke="#fafafa" stroke-width="0.9"/>
<path d="M396.9 359.0L400.5 360.1L410.1 354.6L406.5 353.6Z" fill="#0404ee" stroke="#0404ee" stroke-width="0.9"/>
<path d="M353.8 298.1L354.2 296.9L363.3 292.6L362.9 293.9Z" fill="#4b4b4b" stroke="#4b4b4b" stroke-width="0.9"/>
<path d="M402.1 366.3L403.2 366.6L412.8 361.0L411.7 360.7Z" fill="#00007d" stroke="#00007d" stroke-width="0.9"/>
<path d="M398.4 259.0L393.6 260.8L404.3 256.1L409.1 254.2Z" fill="#005f00" stroke="#005f00" stroke-width="0.9"/>
<path d="M399.8 273.7L404.3 271.2L414.8 266.3L410.4 268.8Z" fill="#004d00" stroke="#004d00" stroke-width="0.9"/>
<path d="M400.5 360.1L402.1 366.3L411.7 360.7L410.1 354.6Z" fill="#000069" stroke="#000069" stroke-width="0.9"/>
<path d="M413.0 213.6L406.3 208.2L414.1 205.2L420.8 210.5Z" fill="#515151" stroke="#515151" stroke-width="0.9"/>
<path d="M396.6 265.9L400.3 262.2L410.9 257.4L407.2 261.1Z" fill="#004d00" stroke="#004d00" stroke-width="0.9"/>
<path d="M347.3 281.0L346.1 280.3L355.3 276.2L356.5 276.9Z" fill="#fafafa" stroke="#fafafa" stroke-width="0.9"/>
<path d="M402.9 267.7L397.7 268.2L408.3 263.4L413.5 262.9Z" fill="#005d00" stroke="#005d00" stroke-width="0.9"/>
<path d="M451.9 263.3L449.4 254.6L456.8 251.1L459.2 259.8Z" fill="#484848" stroke="#484848" stroke-width="0.9"/>
<path d="M354.2 296.9L354.4 295.5L363.5 291.3L363.3 292.6Z" fill="#4b4b4b" stroke="#4b4b4b" stroke-width="0.9"/>
<path d="M314.7 167.2L313.0 170.5L323.7 167.3L325.4 164.0Z" fill="#0404ee" stroke="#0404ee" stroke-width="0.9"/>
<path d="M311.0 161.7L314.7 167.2L313.0 170.5L308.1 167.6L307.6 168.7L299.4 161.1L301.2 157.2L303.1 153.4Z" fill="#0a0af0" stroke="#0a0af0" stroke-width="0.9"/>
<path d="M311.6 160.7L311.0 161.7L321.8 158.6L322.4 157.6Z" fill="#00007d" stroke="#00007d" stroke-width="0.9"/>
<path d="M395.7 364.4L396.9 359.0L400.5 360.1L402.1 366.3L403.2 366.6L404.0 377.6L399.9 376.5L395.8 375.2Z" fill="#0a0af0" stroke="#0a0af0" stroke-width="0.9"/>
<path d="M395.0 253.9L392.7 251.1L403.4 246.4L405.7 249.3Z" fill="#00b500" stroke="#00b500" stroke-width="0.9"/>
<path d="M412.6 266.1L416.2 259.6L424.0 256.1L420.5 262.5Z" fill="#484848" stroke="#484848" stroke-width="0.9"/>
<path d="M369.4 324.2L373.9 329.4L376.0 327.7L372.7 321.4L373.9 320.0L366.1 310.6L365.2 311.7L364.1 312.7L363.0 313.5Z" fill="#0cc40c" stroke="#0cc40c" stroke-width="0.9"/>
<path d="M311.0 161.7L314.7 167.2L325.4 164.0L321.8 158.6Z" fill="#000069" stroke="#000069" stroke-width="0.9"/>
<path d="M348.5 281.8L347.3 281.0L356.5 276.9L357.6 277.7Z" fill="#f3f3f3" stroke="#f3f3f3" stroke-width="0.9"/>
<path d="M406.7 280.6L406.0 277.0L416.5 272.1L417.3 275.6Z" fill="#00b300" stroke="#00b300" stroke-width="0.9"/>
<path d="M420.7 356.8L424.2 357.2L433.4 351.7L429.9 351.3Z" fill="#0404ee" stroke="#0404ee" stroke-width="0.9"/>
<path d="M354.4 295.5L354.4 294.1L363.6 289.8L363.5 291.3Z" fill="#4b4b4b" stroke="#4b4b4b" stroke-width="0.9"/>
<path d="M449.4 254.6L450.7 253.9L458.1 250.5L456.8 251.1Z" fill="#5f5f5f" stroke="#5f5f5f" stroke-width="0.9"/>
<path d="M349.6 282.8L348.5 281.8L357.6 277.7L358.8 278.7Z" fill="#e5e5e5" stroke="#e5e5e5" stroke-width="0.9"/>
<path d="M354.4 294.1L354.3 292.6L363.5 288.4L363.6 289.8Z" fill="#4b4b4b" stroke="#4b4b4b" stroke-width="0.9"/>
<path d="M426.5 363.3L427.7 363.3L436.8 357.8L435.7 357.8Z" fill="#00007d" stroke="#00007d" stroke-width="0.9"/>
<path d="M424.2 357.2L426.5 363.3L435.7 357.8L433.4 351.7Z" fill="#000069" stroke="#000069" stroke-width="0.9"/>
<path d="M426.5 196.1L423.9 197.0L431.6 194.1L434.2 193.2Z" fill="#f6f6f6" stroke="#f6f6f6" stroke-width="0.9"/>
<path d="M333.2 152.1L331.1 154.9L341.6 151.9L343.7 149.1Z" fill="#0404ee" stroke="#0404ee" stroke-width="0.9"/>
<path d="M350.6 283.9L349.6 282.8L358.8 278.7L359.8 279.8Z" fill="#d4d4d4" stroke="#d4d4d4" stroke-width="0.9"/>
<path d="M340.6 306.6L341.6 306.1L350.9 301.8L349.9 302.2ZM354.3 292.6L354.1 291.0L363.2 286.8L363.5 288.4Z" fill="#4b4b4b" stroke="#4b4b4b" stroke-width="0.9"/>
<path d="M400.3 262.2L398.4 259.0L409.1 254.2L410.9 257.4ZM404.3 271.2L402.9 267.7L413.5 262.9L414.8 266.3Z" fill="#00b300" stroke="#00b300" stroke-width="0.9"/>
<path d="M351.6 285.2L350.6 283.9L359.8 279.8L360.7 281.1Z" fill="#c1c1c1" stroke="#c1c1c1" stroke-width="0.9"/>
<path d="M436.6 268.2L436.2 259.5L443.8 256.0L444.2 264.6Z" fill="#484848" stroke="#484848" stroke-width="0.9"/>
<path d="M354.1 291.0L353.7 289.5L362.8 285.3L363.2 286.8Z" fill="#646464" stroke="#646464" stroke-width="0.9"/>
<path d="M371.7 253.5L369.8 252.1L381.0 247.4L382.8 248.8Z" fill="#006000" stroke="#006000" stroke-width="0.9"/>
<path d="M352.4 286.6L351.6 285.2L360.7 281.1L361.5 282.4Z" fill="#acacac" stroke="#acacac" stroke-width="0.9"/>
<path d="M343.5 244.3L340.6 244.0L352.2 239.4L355.1 239.6Z" fill="#00c200" stroke="#00c200" stroke-width="0.9"/>
<path d="M353.7 289.5L353.1 288.0L362.2 283.9L362.8 285.3Z" fill="#7d7d7d" stroke="#7d7d7d" stroke-width="0.9"/>
<path d="M353.1 288.0L352.4 286.6L361.5 282.4L362.2 283.9Z" fill="#959595" stroke="#959595" stroke-width="0.9"/>
<path d="M391.3 297.1L391.4 294.8L402.2 289.6L402.1 291.8Z" fill="#005900" stroke="#005900" stroke-width="0.9"/>
<path d="M330.9 145.2L330.2 146.1L340.7 143.2L341.4 142.4Z" fill="#00007d" stroke="#00007d" stroke-width="0.9"/>
<path d="M330.2 146.1L333.2 152.1L343.7 149.1L340.7 143.2Z" fill="#000069" stroke="#000069" stroke-width="0.9"/>
<path d="M331.8 283.7L330.7 284.0L340.2 279.9L341.3 279.6Z" fill="#fafafa" stroke="#fafafa" stroke-width="0.9"/>
<path d="M402.0 222.4L394.7 219.2L402.8 216.1L410.0 219.2Z" fill="#575757" stroke="#575757" stroke-width="0.9"/>
<path d="M379.0 324.3L380.6 321.9L391.7 316.2L390.1 318.6Z" fill="#00b300" stroke="#00b300" stroke-width="0.9"/>
<path d="M341.6 306.1L342.5 305.5L351.8 301.1L350.9 301.8Z" fill="#4b4b4b" stroke="#4b4b4b" stroke-width="0.9"/>
<path d="M430.5 204.5L426.5 196.1L434.2 193.2L438.1 201.5Z" fill="#484848" stroke="#484848" stroke-width="0.9"/>
<path d="M345.3 251.1L343.5 244.3L355.1 239.6L356.8 246.4ZM369.8 252.1L370.4 245.7L381.5 241.1L381.0 247.4Z" fill="#004d00" stroke="#004d00" stroke-width="0.9"/>
<path d="M347.2 251.5L345.3 251.1L356.8 246.4L358.8 246.8Z" fill="#006600" stroke="#006600" stroke-width="0.9"/>
<path d="M396.6 300.8L391.3 297.1L402.1 291.8L407.4 295.4Z" fill="#005600" stroke="#005600" stroke-width="0.9"/>
<path d="M380.6 321.9L376.4 316.3L387.5 310.7L391.7 316.2Z" fill="#004e00" stroke="#004e00" stroke-width="0.9"/>
<path d="M370.4 245.7L367.5 244.0L378.7 239.4L381.5 241.1Z" fill="#00bc00" stroke="#00bc00" stroke-width="0.9"/>
<path d="M333.0 283.6L331.8 283.7L341.3 279.6L342.4 279.4Z" fill="#fafafa" stroke="#fafafa" stroke-width="0.9"/>
<path d="M376.4 316.3L377.3 314.5L388.4 308.9L387.5 310.7Z" fill="#005900" stroke="#005900" stroke-width="0.9"/>
<path d="M432.0 204.3L430.5 204.5L438.1 201.5L439.6 201.3Z" fill="#747474" stroke="#747474" stroke-width="0.9"/>
<path d="M345.3 251.1L343.5 244.3L340.6 244.0L340.7 250.6L338.8 250.7L341.8 262.6L343.3 262.6L344.8 262.7L346.3 262.9Z" fill="#0cc40c" stroke="#0cc40c" stroke-width="0.9"/>
<path d="M396.1 304.0L396.6 300.8L407.4 295.4L406.9 298.6Z" fill="#00b300" stroke="#00b300" stroke-width="0.9"/>
<path d="M342.5 305.5L343.3 304.6L352.6 300.3L351.8 301.1Z" fill="#4b4b4b" stroke="#4b4b4b" stroke-width="0.9"/>
<path d="M393.1 239.9L386.4 241.7L394.6 238.3L401.2 236.5Z" fill="#5f5f5f" stroke="#5f5f5f" stroke-width="0.9"/>
<path d="M404.1 361.0L407.6 361.7L417.1 356.2L413.6 355.5Z" fill="#0404ee" stroke="#0404ee" stroke-width="0.9"/>
<path d="M456.3 261.1L458.5 259.4L465.9 255.8L463.6 257.6Z" fill="#e0e0e0" stroke="#e0e0e0" stroke-width="0.9"/>
<path d="M409.6 367.9L410.8 368.1L420.2 362.5L419.1 362.3Z" fill="#00007d" stroke="#00007d" stroke-width="0.9"/>
<path d="M334.2 283.7L333.0 283.6L342.4 279.4L343.6 279.5Z" fill="#fafafa" stroke="#fafafa" stroke-width="0.9"/>
<path d="M420.7 270.4L422.3 262.4L430.1 258.8L428.4 266.7Z" fill="#484848" stroke="#484848" stroke-width="0.9"/>
<path d="M407.6 361.7L409.6 367.9L419.1 362.3L417.1 356.2Z" fill="#000069" stroke="#000069" stroke-width="0.9"/>
<path d="M343.3 304.6L343.9 303.6L353.3 299.3L352.6 300.3Z" fill="#4b4b4b" stroke="#4b4b4b" stroke-width="0.9"/>
<path d="M397.4 263.2L402.6 258.6L410.6 255.0L405.4 259.6Z" fill="#484848" stroke="#484848" stroke-width="0.9"/>
<path d="M377.5 259.0L375.9 257.3L386.9 252.5L388.6 254.3Z" fill="#005d00" stroke="#005d00" stroke-width="0.9"/>
<path d="M318.3 160.9L316.4 164.0L327.2 160.9L329.1 157.8Z" fill="#0404ee" stroke="#0404ee" stroke-width="0.9"/>
<path d="M417.3 209.6L411.7 202.4L419.6 199.4L425.1 206.5Z" fill="#4b4b4b" stroke="#4b4b4b" stroke-width="0.9"/>
<path d="M391.1 289.3L390.8 286.9L401.7 281.7L402.0 284.1Z" fill="#005900" stroke="#005900" stroke-width="0.9"/>
<path d="M373.9 320.0L379.0 324.3L380.6 321.9L376.4 316.3L377.3 314.5L368.5 306.8L367.8 308.2L367.0 309.4L366.1 310.6Z" fill="#0cc40c" stroke="#0cc40c" stroke-width="0.9"/>
<path d="M458.5 259.4L454.2 251.2L461.5 247.8L465.9 255.8Z" fill="#484848" stroke="#484848" stroke-width="0.9"/>
<path d="M315.0 155.1L318.3 160.9L316.4 164.0L311.6 160.7L311.0 161.7L303.1 153.4L305.2 149.8L307.4 146.2Z" fill="#0a0af0" stroke="#0a0af0" stroke-width="0.9"/>
<path d="M315.6 154.2L315.0 155.1L325.8 152.1L326.4 151.2Z" fill="#00007d" stroke="#00007d" stroke-width="0.9"/>
<path d="M335.4 284.0L334.2 283.7L343.6 279.5L344.8 279.8Z" fill="#fafafa" stroke="#fafafa" stroke-width="0.9"/>
<path d="M403.2 366.6L404.1 361.0L407.6 361.7L409.6 367.9L410.8 368.1L412.3 379.3L408.2 378.6L404.0 377.6Z" fill="#0a0af0" stroke="#0a0af0" stroke-width="0.9"/>
<path d="M315.0 155.1L318.3 160.9L329.1 157.8L325.8 152.1Z" fill="#000069" stroke="#000069" stroke-width="0.9"/>
<path d="M343.9 303.6L344.5 302.5L353.8 298.1L353.3 299.3Z" fill="#4b4b4b" stroke="#4b4b4b" stroke-width="0.9"/>
<path d="M454.2 251.2L455.2 250.1L462.5 246.7L461.5 247.8Z" fill="#5f5f5f" stroke="#5f5f5f" stroke-width="0.9"/>
<path d="M427.7 357.4L431.2 357.5L440.4 352.0L436.9 352.0Z" fill="#0404ee" stroke="#0404ee" stroke-width="0.9"/>
<path d="M392.6 232.5L385.3 231.7L393.5 228.4L400.8 229.1Z" fill="#5c5c5c" stroke="#5c5c5c" stroke-width="0.9"/>
<path d="M368.6 163.6L363.5 165.0L374.8 161.5L379.8 160.1Z" fill="#005e00" stroke="#005e00" stroke-width="0.9"/>
<path d="M375.9 257.3L377.5 251.5L388.6 246.8L386.9 252.5Z" fill="#004d00" stroke="#004d00" stroke-width="0.9"/>
<path d="M336.7 284.5L335.4 284.0L344.8 279.8L346.1 280.3Z" fill="#fafafa" stroke="#fafafa" stroke-width="0.9"/>
<path d="M371.8 187.1L376.5 185.1L387.6 181.3L382.9 183.3Z" fill="#004d00" stroke="#004d00" stroke-width="0.9"/>
<path d="M396.7 291.6L391.1 289.3L402.0 284.1L407.5 286.4Z" fill="#005900" stroke="#005900" stroke-width="0.9"/>
<path d="M344.5 302.5L344.8 301.2L354.2 296.9L353.8 298.1Z" fill="#4b4b4b" stroke="#4b4b4b" stroke-width="0.9"/>
<path d="M382.6 265.7L381.2 263.6L392.2 258.7L393.6 260.8Z" fill="#005900" stroke="#005900" stroke-width="0.9"/>
<path d="M337.8 146.8L335.5 149.4L345.9 146.4L348.3 143.9Z" fill="#0404ee" stroke="#0404ee" stroke-width="0.9"/>
<path d="M431.2 357.5L433.9 363.5L443.0 358.0L440.4 352.0Z" fill="#000069" stroke="#000069" stroke-width="0.9"/>
<path d="M389.6 281.2L388.9 278.8L399.8 273.7L400.5 276.1Z" fill="#005900" stroke="#005900" stroke-width="0.9"/>
<path d="M433.9 363.5L435.0 363.5L444.1 358.0L443.0 358.0Z" fill="#00007d" stroke="#00007d" stroke-width="0.9"/>
<path d="M337.9 285.1L336.7 284.5L346.1 280.3L347.3 281.0Z" fill="#fafafa" stroke="#fafafa" stroke-width="0.9"/>
<path d="M405.0 216.7L398.2 211.3L406.3 208.2L413.0 213.6Z" fill="#515151" stroke="#515151" stroke-width="0.9"/>
<path d="M377.5 251.5L374.9 249.1L386.0 244.5L388.6 246.8Z" fill="#00b900" stroke="#00b900" stroke-width="0.9"/>
<path d="M344.8 301.2L345.1 299.8L354.4 295.5L354.2 296.9Z" fill="#4b4b4b" stroke="#4b4b4b" stroke-width="0.9"/>
<path d="M386.7 273.2L385.6 270.9L396.6 265.9L397.7 268.2Z" fill="#005900" stroke="#005900" stroke-width="0.9"/>
<path d="M444.4 267.0L441.9 258.1L449.4 254.6L451.9 263.3Z" fill="#484848" stroke="#484848" stroke-width="0.9"/>
<path d="M396.8 295.2L396.7 291.6L407.5 286.4L407.6 289.9Z" fill="#00b300" stroke="#00b300" stroke-width="0.9"/>
<path d="M434.5 195.5L431.6 195.4L439.2 192.5L442.1 192.6Z" fill="#f3f3f3" stroke="#f3f3f3" stroke-width="0.9"/>
<path d="M335.1 140.6L337.8 146.8L348.3 143.9L345.6 137.8Z" fill="#000069" stroke="#000069" stroke-width="0.9"/>
<path d="M353.8 254.2L351.9 253.2L363.4 248.4L365.3 249.4Z" fill="#006400" stroke="#006400" stroke-width="0.9"/>
<path d="M404.6 269.8L408.2 263.3L416.2 259.6L412.6 266.1Z" fill="#484848" stroke="#484848" stroke-width="0.9"/>
<path d="M339.1 286.0L337.9 285.1L347.3 281.0L348.5 281.8Z" fill="#f3f3f3" stroke="#f3f3f3" stroke-width="0.9"/>
<path d="M335.9 139.8L335.1 140.6L345.6 137.8L346.4 137.0Z" fill="#00007d" stroke="#00007d" stroke-width="0.9"/>
<path d="M351.2 246.4L348.2 245.4L359.8 240.7L362.8 241.7Z" fill="#00bf00" stroke="#00bf00" stroke-width="0.9"/>
<path d="M438.1 204.8L436.6 204.5L444.2 201.5L445.7 201.8Z" fill="#707070" stroke="#707070" stroke-width="0.9"/>
<path d="M345.1 299.8L345.1 298.4L354.4 294.1L354.4 295.5Z" fill="#4b4b4b" stroke="#4b4b4b" stroke-width="0.9"/>
<path d="M351.9 253.2L351.2 246.4L362.8 241.7L363.4 248.4Z" fill="#004d00" stroke="#004d00" stroke-width="0.9"/>
<path d="M379.0 309.9L379.5 307.8L390.6 302.3L390.1 304.4Z" fill="#005900" stroke="#005900" stroke-width="0.9"/>
<path d="M436.6 204.5L434.5 195.5L442.1 192.6L444.2 201.5Z" fill="#484848" stroke="#484848" stroke-width="0.9"/>
<path d="M368.1 155.3L362.7 155.3L374.0 151.9L379.3 152.0Z" fill="#005c00" stroke="#005c00" stroke-width="0.9"/>
<path d="M351.9 253.2L351.2 246.4L348.2 245.4L347.2 251.5L345.3 251.1L346.3 262.9L347.8 263.3L349.3 263.8L350.8 264.4Z" fill="#0cc40c" stroke="#0cc40c" stroke-width="0.9"/>
<path d="M382.8 317.6L383.8 314.7L394.9 309.1L393.8 311.9Z" fill="#00b300" stroke="#00b300" stroke-width="0.9"/>
<path d="M383.8 314.7L379.0 309.9L390.1 304.4L394.9 309.1Z" fill="#005200" stroke="#005200" stroke-width="0.9"/>
<path d="M340.2 287.0L339.1 286.0L348.5 281.8L349.6 282.8Z" fill="#e5e5e5" stroke="#e5e5e5" stroke-width="0.9"/>
<path d="M377.4 195.1L381.6 191.8L392.6 187.9L388.5 191.2ZM381.2 263.6L384.0 258.7L395.0 253.9L392.2 258.7Z" fill="#004d00" stroke="#004d00" stroke-width="0.9"/>
<path d="M345.1 298.4L345.0 296.9L354.3 292.6L354.4 294.1Z" fill="#4b4b4b" stroke="#4b4b4b" stroke-width="0.9"/>
<path d="M395.1 282.2L389.6 281.2L400.5 276.1L406.0 277.0Z" fill="#005b00" stroke="#005b00" stroke-width="0.9"/>
<path d="M441.9 258.1L443.2 257.5L450.7 253.9L449.4 254.6Z" fill="#5f5f5f" stroke="#5f5f5f" stroke-width="0.9"/>
<path d="M341.2 288.2L340.2 287.0L349.6 282.8L350.6 283.9Z" fill="#d4d4d4" stroke="#d4d4d4" stroke-width="0.9"/>
<path d="M345.0 296.9L344.7 295.3L354.1 291.0L354.3 292.6Z" fill="#4b4b4b" stroke="#4b4b4b" stroke-width="0.9"/>
<path d="M411.2 362.3L414.7 362.7L424.2 357.2L420.7 356.8Z" fill="#0404ee" stroke="#0404ee" stroke-width="0.9"/>
<path d="M418.7 199.1L416.0 200.0L423.9 197.0L426.5 196.1Z" fill="#f6f6f6" stroke="#f6f6f6" stroke-width="0.9"/>
<path d="M387.4 263.8L382.6 265.7L393.6 260.8L398.4 259.0Z" fill="#005f00" stroke="#005f00" stroke-width="0.9"/>
<path d="M388.9 278.8L393.4 276.3L404.3 271.2L399.8 273.7Z" fill="#004d00" stroke="#004d00" stroke-width="0.9"/>
<path d="M342.2 289.4L341.2 288.2L350.6 283.9L351.6 285.2Z" fill="#c1c1c1" stroke="#c1c1c1" stroke-width="0.9"/>
<path d="M344.7 295.3L344.3 293.8L353.7 289.5L354.1 291.0Z" fill="#646464" stroke="#646464" stroke-width="0.9"/>
<path d="M385.6 270.9L389.3 267.1L400.3 262.2L396.6 265.9Z" fill="#004d00" stroke="#004d00" stroke-width="0.9"/>
<path d="M392.0 272.7L386.7 273.2L397.7 268.2L402.9 267.7Z" fill="#005d00" stroke="#005d00" stroke-width="0.9"/>
<path d="M343.0 290.8L342.2 289.4L351.6 285.2L352.4 286.6Z" fill="#acacac" stroke="#acacac" stroke-width="0.9"/>
<path d="M428.9 271.9L428.5 263.1L436.2 259.5L436.6 268.2Z" fill="#484848" stroke="#484848" stroke-width="0.9"/>
<path d="M344.3 293.8L343.8 292.3L353.1 288.0L353.7 289.5Z" fill="#7d7d7d" stroke="#7d7d7d" stroke-width="0.9"/>
<path d="M377.3 314.5L382.8 317.6L383.8 314.7L379.0 309.9L379.5 307.8L369.9 302.1L369.5 303.7L369.0 305.3L368.5 306.8Z" fill="#0cc40c" stroke="#0cc40c" stroke-width="0.9"/>
<path d="M343.8 292.3L343.0 290.8L352.4 286.6L353.1 288.0Z" fill="#959595" stroke="#959595" stroke-width="0.9"/>
<path d="M417.1 368.9L418.2 369.0L427.7 363.3L426.5 363.3Z" fill="#00007d" stroke="#00007d" stroke-width="0.9"/>
<path d="M457.6 246.1L458.2 244.6L465.6 241.2L465.0 242.7Z" fill="#5f5f5f" stroke="#5f5f5f" stroke-width="0.9"/>
<path d="M414.7 362.7L417.1 368.9L426.5 363.3L424.2 357.2Z" fill="#000069" stroke="#000069" stroke-width="0.9"/>
<path d="M393.9 225.6L386.5 222.4L394.7 219.2L402.0 222.4Z" fill="#575757" stroke="#575757" stroke-width="0.9"/>
<path d="M322.5 155.1L320.4 158.0L331.1 154.9L333.2 152.1Z" fill="#0404ee" stroke="#0404ee" stroke-width="0.9"/>
<path d="M384.0 258.7L381.6 255.8L392.7 251.1L395.0 253.9Z" fill="#00b500" stroke="#00b500" stroke-width="0.9"/>
<path d="M395.9 285.8L395.1 282.2L406.0 277.0L406.7 280.6Z" fill="#00b300" stroke="#00b300" stroke-width="0.9"/>
<path d="M462.0 255.5L463.5 253.0L470.9 249.5L469.3 252.0Z" fill="#e0e0e0" stroke="#e0e0e0" stroke-width="0.9"/>
<path d="M463.5 253.0L457.6 246.1L465.0 242.7L470.9 249.5Z" fill="#4c4c4c" stroke="#4c4c4c" stroke-width="0.9"/>
<path d="M422.7 207.5L418.7 199.1L426.5 196.1L430.5 204.5Z" fill="#484848" stroke="#484848" stroke-width="0.9"/>
<path d="M320.1 148.2L319.4 149.1L330.2 146.1L330.9 145.2Z" fill="#00007d" stroke="#00007d" stroke-width="0.9"/>
<path d="M319.4 149.1L322.5 155.1L320.4 158.0L315.6 154.2L315.0 155.1L307.4 146.2L309.7 142.8L312.2 139.5Z" fill="#0a0af0" stroke="#0a0af0" stroke-width="0.9"/>
<path d="M319.4 149.1L322.5 155.1L333.2 152.1L330.2 146.1Z" fill="#000069" stroke="#000069" stroke-width="0.9"/>
<path d="M410.8 368.1L411.2 362.3L414.7 362.7L417.1 368.9L418.2 369.0L420.5 380.3L416.4 379.9L412.3 379.3Z" fill="#0a0af0" stroke="#0a0af0" stroke-width="0.9"/>
<path d="M368.9 147.4L363.4 146.0L374.7 142.7L380.2 144.2Z" fill="#005a00" stroke="#005a00" stroke-width="0.9"/>
<path d="M434.7 357.4L438.1 357.2L447.2 351.7L443.8 351.9Z" fill="#0404ee" stroke="#0404ee" stroke-width="0.9"/>
<path d="M384.8 243.3L378.1 245.1L386.4 241.7L393.1 239.9Z" fill="#5f5f5f" stroke="#5f5f5f" stroke-width="0.9"/>
<path d="M424.2 207.3L422.7 207.5L430.5 204.5L432.0 204.3Z" fill="#747474" stroke="#747474" stroke-width="0.9"/>
<path d="M384.1 201.8L387.4 197.4L398.4 193.4L395.1 197.8Z" fill="#004d00" stroke="#004d00" stroke-width="0.9"/>
<path d="M389.3 267.1L387.4 263.8L398.4 259.0L400.3 262.2ZM393.4 276.3L392.0 272.7L402.9 267.7L404.3 271.2Z" fill="#00b300" stroke="#00b300" stroke-width="0.9"/>
<path d="M360.2 258.4L358.4 256.9L369.8 252.1L371.7 253.5Z" fill="#006000" stroke="#006000" stroke-width="0.9"/>
<path d="M444.3 207.4L442.8 206.6L450.3 203.6L451.8 204.4Z" fill="#6b6b6b" stroke="#6b6b6b" stroke-width="0.9"/>
<path d="M380.2 302.6L380.3 300.2L391.4 294.8L391.3 297.1Z" fill="#005900" stroke="#005900" stroke-width="0.9"/>
<path d="M412.7 274.1L414.4 266.1L422.3 262.4L420.7 270.4Z" fill="#484848" stroke="#484848" stroke-width="0.9"/>
<path d="M448.8 264.7L451.0 263.0L458.5 259.4L456.3 261.1Z" fill="#e0e0e0" stroke="#e0e0e0" stroke-width="0.9"/>
<path d="M342.9 142.1L340.3 144.4L350.8 141.5L353.3 139.2Z" fill="#0404ee" stroke="#0404ee" stroke-width="0.9"/>
<path d="M389.1 266.9L394.4 262.3L402.6 258.6L397.4 263.2Z" fill="#484848" stroke="#484848" stroke-width="0.9"/>
<path d="M358.4 256.9L358.9 250.5L356.0 248.7L353.8 254.2L351.9 253.2L350.8 264.4L352.4 265.1L353.8 266.0L355.3 267.0Z" fill="#0cc40c" stroke="#0cc40c" stroke-width="0.9"/>
<path d="M438.1 357.2L441.2 363.1L450.3 357.5L447.2 351.7Z" fill="#000069" stroke="#000069" stroke-width="0.9"/>
<path d="M358.4 256.9L358.9 250.5L370.4 245.7L369.8 252.1Z" fill="#004d00" stroke="#004d00" stroke-width="0.9"/>
<path d="M409.3 212.7L403.7 205.5L411.7 202.4L417.3 209.6Z" fill="#4b4b4b" stroke="#4b4b4b" stroke-width="0.9"/>
<path d="M441.2 363.1L442.2 363.0L451.3 357.4L450.3 357.5Z" fill="#00007d" stroke="#00007d" stroke-width="0.9"/>
<path d="M442.8 206.6L442.8 197.8L450.4 194.9L450.3 203.6Z" fill="#484848" stroke="#484848" stroke-width="0.9"/>
<path d="M385.5 306.3L380.2 302.6L391.3 297.1L396.6 300.8Z" fill="#005600" stroke="#005600" stroke-width="0.9"/>
<path d="M358.9 250.5L356.0 248.7L367.5 244.0L370.4 245.7Z" fill="#00bc00" stroke="#00bc00" stroke-width="0.9"/>
<path d="M451.0 263.0L446.6 254.7L454.2 251.2L458.5 259.4Z" fill="#484848" stroke="#484848" stroke-width="0.9"/>
<path d="M442.8 197.8L439.8 196.7L447.4 193.7L450.4 194.9Z" fill="#efefef" stroke="#efefef" stroke-width="0.9"/>
<path d="M459.5 239.7L459.7 237.9L467.1 234.6L466.9 236.3Z" fill="#5f5f5f" stroke="#5f5f5f" stroke-width="0.9"/>
<path d="M340.5 135.7L342.9 142.1L353.3 139.2L351.0 132.9Z" fill="#000069" stroke="#000069" stroke-width="0.9"/>
<path d="M385.1 309.6L385.5 306.3L396.6 300.8L396.1 304.0Z" fill="#00b300" stroke="#00b300" stroke-width="0.9"/>
<path d="M379.5 307.8L385.1 309.6L385.5 306.3L380.2 302.6L380.3 300.2L370.4 296.9L370.4 298.7L370.2 300.4L369.9 302.1Z" fill="#0cc40c" stroke="#0cc40c" stroke-width="0.9"/>
<path d="M446.6 254.7L447.6 253.6L455.2 250.1L454.2 251.2Z" fill="#5f5f5f" stroke="#5f5f5f" stroke-width="0.9"/>
<path d="M341.3 135.0L340.5 135.7L351.0 132.9L351.8 132.2Z" fill="#00007d" stroke="#00007d" stroke-width="0.9"/>
<path d="M384.3 235.8L377.0 235.1L385.3 231.7L392.6 232.5Z" fill="#5c5c5c" stroke="#5c5c5c" stroke-width="0.9"/>
<path d="M418.3 363.0L421.8 363.1L431.2 357.5L427.7 357.4Z" fill="#0404ee" stroke="#0404ee" stroke-width="0.9"/>
<path d="M366.2 264.0L364.5 262.2L375.9 257.3L377.5 259.0Z" fill="#005d00" stroke="#005d00" stroke-width="0.9"/>
<path d="M466.5 244.7L459.5 239.7L466.9 236.3L473.8 241.3Z" fill="#525252" stroke="#525252" stroke-width="0.9"/>
<path d="M396.8 220.0L390.0 214.5L398.2 211.3L405.0 216.7Z" fill="#515151" stroke="#515151" stroke-width="0.9"/>
<path d="M449.9 212.0L448.6 210.7L456.1 207.6L457.4 208.9Z" fill="#656565" stroke="#656565" stroke-width="0.9"/>
<path d="M380.0 294.6L379.6 292.2L390.8 286.9L391.1 289.3Z" fill="#005900" stroke="#005900" stroke-width="0.9"/>
<path d="M371.2 140.2L365.7 137.4L377.1 134.2L382.5 137.0Z" fill="#005700" stroke="#005700" stroke-width="0.9"/>
<path d="M436.7 270.7L434.2 261.8L441.9 258.1L444.4 267.0ZM396.5 273.6L400.1 267.0L408.2 263.3L404.6 269.8Z" fill="#484848" stroke="#484848" stroke-width="0.9"/>
<path d="M327.1 149.8L324.8 152.4L335.5 149.4L337.8 146.8Z" fill="#0404ee" stroke="#0404ee" stroke-width="0.9"/>
<path d="M426.7 198.5L423.8 198.4L431.6 195.4L434.5 195.5Z" fill="#f3f3f3" stroke="#f3f3f3" stroke-width="0.9"/>
<path d="M364.5 262.2L366.1 256.3L363.4 253.9L360.2 258.4L358.4 256.9L355.3 267.0L356.8 268.1L358.2 269.3L359.5 270.6Z" fill="#0cc40c" stroke="#0cc40c" stroke-width="0.9"/>
<path d="M421.8 363.1L424.5 369.2L433.9 363.5L431.2 357.5Z" fill="#000069" stroke="#000069" stroke-width="0.9"/>
<path d="M465.7 247.9L466.5 244.7L473.8 241.3L473.0 244.4Z" fill="#e0e0e0" stroke="#e0e0e0" stroke-width="0.9"/>
<path d="M379.2 168.6L380.6 172.9L391.7 169.3L390.3 165.1Z" fill="#004400" stroke="#004400" stroke-width="0.9"/>
<path d="M424.5 369.2L425.6 369.2L435.0 363.5L433.9 363.5Z" fill="#00007d" stroke="#00007d" stroke-width="0.9"/>
<path d="M391.5 207.0L393.8 201.5L404.7 197.5L402.4 202.9Z" fill="#004d00" stroke="#004d00" stroke-width="0.9"/>
<path d="M380.6 172.9L382.5 176.9L393.6 173.3L391.7 169.3Z" fill="#004400" stroke="#004400" stroke-width="0.9"/>
<path d="M459.6 232.5L459.3 230.6L466.7 227.3L467.0 229.2Z" fill="#5f5f5f" stroke="#5f5f5f" stroke-width="0.9"/>
<path d="M378.2 164.3L379.2 168.6L390.3 165.1L389.4 160.8Z" fill="#004400" stroke="#004400" stroke-width="0.9"/>
<path d="M430.4 207.9L428.8 207.5L436.6 204.5L438.1 204.8Z" fill="#707070" stroke="#707070" stroke-width="0.9"/>
<path d="M428.8 207.5L426.7 198.5L434.5 195.5L436.6 204.5Z" fill="#484848" stroke="#484848" stroke-width="0.9"/>
<path d="M364.5 262.2L366.1 256.3L377.5 251.5L375.9 257.3Z" fill="#004d00" stroke="#004d00" stroke-width="0.9"/>
<path d="M382.5 176.9L384.9 180.7L395.9 177.0L393.6 173.3Z" fill="#004400" stroke="#004400" stroke-width="0.9"/>
<path d="M357.0 167.2L352.0 168.6L363.5 165.0L368.6 163.6Z" fill="#005e00" stroke="#005e00" stroke-width="0.9"/>
<path d="M385.6 297.0L380.0 294.6L391.1 289.3L396.7 291.6Z" fill="#005900" stroke="#005900" stroke-width="0.9"/>
<path d="M380.3 300.2L385.7 300.6L385.6 297.0L380.0 294.6L379.6 292.2L370.0 291.3L370.3 293.2L370.4 295.1L370.4 296.9Z" fill="#0cc40c" stroke="#0cc40c" stroke-width="0.9"/>
<path d="M360.3 191.0L365.1 189.0L376.5 185.1L371.8 187.1Z" fill="#004d00" stroke="#004d00" stroke-width="0.9"/>
<path d="M324.4 143.5L327.1 149.8L337.8 146.8L335.1 140.6Z" fill="#000069" stroke="#000069" stroke-width="0.9"/>
<path d="M454.6 218.0L453.6 216.4L461.0 213.2L462.1 214.8Z" fill="#5f5f5f" stroke="#5f5f5f" stroke-width="0.9"/>
<path d="M377.8 159.9L378.2 164.3L389.4 160.8L389.0 156.5Z" fill="#004400" stroke="#004400" stroke-width="0.9"/>
<path d="M371.3 270.7L369.9 268.6L381.2 263.6L382.6 265.7Z" fill="#005900" stroke="#005900" stroke-width="0.9"/>
<path d="M434.2 261.8L435.5 261.1L443.2 257.5L441.9 258.1Z" fill="#5f5f5f" stroke="#5f5f5f" stroke-width="0.9"/>
<path d="M448.6 210.7L450.8 202.7L458.3 199.7L456.1 207.6Z" fill="#484848" stroke="#484848" stroke-width="0.9"/>
<path d="M325.2 142.7L324.4 143.5L335.1 140.6L335.9 139.8Z" fill="#00007d" stroke="#00007d" stroke-width="0.9"/>
<path d="M378.4 286.4L377.6 284.0L388.9 278.8L389.6 281.2Z" fill="#005900" stroke="#005900" stroke-width="0.9"/>
<path d="M324.4 143.5L327.1 149.8L324.8 152.4L320.1 148.2L319.4 149.1L312.2 139.5L314.8 136.4L317.6 133.4Z" fill="#0a0af0" stroke="#0a0af0" stroke-width="0.9"/>
<path d="M441.5 356.8L444.9 356.2L454.0 350.7L450.6 351.3Z" fill="#0404ee" stroke="#0404ee" stroke-width="0.9"/>
<path d="M457.9 225.0L457.2 223.2L464.7 220.0L465.3 221.8Z" fill="#5f5f5f" stroke="#5f5f5f" stroke-width="0.9"/>
<path d="M418.2 369.0L418.3 363.0L421.8 363.1L424.5 369.2L425.6 369.2L428.6 380.6L424.5 380.6L420.5 380.3Z" fill="#0a0af0" stroke="#0a0af0" stroke-width="0.9"/>
<path d="M410.7 202.1L408.0 203.0L416.0 200.0L418.7 199.1Z" fill="#f6f6f6" stroke="#f6f6f6" stroke-width="0.9"/>
<path d="M366.1 256.3L363.4 253.9L374.9 249.1L377.5 251.5Z" fill="#00b900" stroke="#00b900" stroke-width="0.9"/>
<path d="M375.4 278.3L374.3 276.0L385.6 270.9L386.7 273.2Z" fill="#005900" stroke="#005900" stroke-width="0.9"/>
<path d="M384.9 180.7L387.6 184.1L398.6 180.3L395.9 177.0Z" fill="#005800" stroke="#005800" stroke-width="0.9"/>
<path d="M421.0 275.7L420.6 266.8L428.5 263.1L428.9 271.9Z" fill="#484848" stroke="#484848" stroke-width="0.9"/>
<path d="M385.7 300.6L385.6 297.0L396.7 291.6L396.8 295.2Z" fill="#00b300" stroke="#00b300" stroke-width="0.9"/>
<path d="M385.5 229.0L378.2 225.7L386.5 222.4L393.9 225.6Z" fill="#575757" stroke="#575757" stroke-width="0.9"/>
<path d="M378.0 155.7L377.8 159.9L389.0 156.5L389.2 152.3Z" fill="#004400" stroke="#004400" stroke-width="0.9"/>
<path d="M348.3 137.9L345.6 139.9L356.0 137.1L358.7 135.1Z" fill="#0404ee" stroke="#0404ee" stroke-width="0.9"/>
<path d="M467.2 235.1L459.6 232.5L467.0 229.2L474.5 231.8Z" fill="#585858" stroke="#585858" stroke-width="0.9"/>
<path d="M450.1 249.6L450.7 248.1L458.2 244.6L457.6 246.1Z" fill="#5f5f5f" stroke="#5f5f5f" stroke-width="0.9"/>
<path d="M369.9 268.6L372.6 263.7L370.3 260.7L366.2 264.0L364.5 262.2L359.5 270.6L360.8 272.0L362.1 273.5L363.2 275.1Z" fill="#0cc40c" stroke="#0cc40c" stroke-width="0.9"/>
<path d="M450.8 202.7L448.0 200.7L455.5 197.7L458.3 199.7Z" fill="#e9e9e9" stroke="#e9e9e9" stroke-width="0.9"/>
<path d="M444.9 356.2L448.3 362.0L457.3 356.4L454.0 350.7Z" fill="#000069" stroke="#000069" stroke-width="0.9"/>
<path d="M454.5 259.1L456.1 256.5L463.5 253.0L462.0 255.5Z" fill="#e0e0e0" stroke="#e0e0e0" stroke-width="0.9"/>
<path d="M356.5 158.8L351.0 158.8L362.7 155.3L368.1 155.3Z" fill="#005c00" stroke="#005c00" stroke-width="0.9"/>
<path d="M456.1 256.5L450.1 249.6L457.6 246.1L463.5 253.0Z" fill="#4c4c4c" stroke="#4c4c4c" stroke-width="0.9"/>
<path d="M414.8 210.6L410.7 202.1L418.7 199.1L422.7 207.5Z" fill="#484848" stroke="#484848" stroke-width="0.9"/>
<path d="M379.6 292.2L384.8 291.1L384.0 287.4L378.4 286.4L377.6 284.0L368.6 285.7L369.2 287.6L369.6 289.4L370.0 291.3Z" fill="#0cc40c" stroke="#0cc40c" stroke-width="0.9"/>
<path d="M369.9 268.6L372.6 263.7L384.0 258.7L381.2 263.6Z" fill="#004d00" stroke="#004d00" stroke-width="0.9"/>
<path d="M384.0 287.4L378.4 286.4L389.6 281.2L395.1 282.2Z" fill="#005b00" stroke="#005b00" stroke-width="0.9"/>
<path d="M366.1 199.1L370.2 195.8L381.6 191.8L377.4 195.1Z" fill="#004d00" stroke="#004d00" stroke-width="0.9"/>
<path d="M448.3 362.0L449.3 361.7L458.4 356.2L457.3 356.4Z" fill="#00007d" stroke="#00007d" stroke-width="0.9"/>
<path d="M387.6 184.1L390.7 187.0L401.6 183.2L398.6 180.3Z" fill="#007100" stroke="#007100" stroke-width="0.9"/>
<path d="M376.3 246.9L369.6 248.7L378.1 245.1L384.8 243.3Z" fill="#5f5f5f" stroke="#5f5f5f" stroke-width="0.9"/>
<path d="M453.6 216.4L457.7 210.0L465.2 206.9L461.0 213.2Z" fill="#484848" stroke="#484848" stroke-width="0.9"/>
<path d="M376.1 268.8L371.3 270.7L382.6 265.7L387.4 263.8Z" fill="#005f00" stroke="#005f00" stroke-width="0.9"/>
<path d="M378.7 151.7L378.0 155.7L389.2 152.3L389.9 148.3Z" fill="#004400" stroke="#004400" stroke-width="0.9"/>
<path d="M377.6 284.0L382.2 281.5L393.4 276.3L388.9 278.8Z" fill="#004d00" stroke="#004d00" stroke-width="0.9"/>
<path d="M374.3 276.0L378.0 272.2L376.1 268.8L371.3 270.7L369.9 268.6L363.2 275.1L364.4 276.7L365.4 278.4L366.3 280.2Z" fill="#0cc40c" stroke="#0cc40c" stroke-width="0.9"/>
<path d="M346.3 131.4L348.3 137.9L358.7 135.1L356.7 128.6Z" fill="#000069" stroke="#000069" stroke-width="0.9"/>
<path d="M416.3 210.4L414.8 210.6L422.7 207.5L424.2 207.3Z" fill="#747474" stroke="#747474" stroke-width="0.9"/>
<path d="M377.6 284.0L382.2 281.5L380.8 277.9L375.4 278.3L374.3 276.0L366.3 280.2L367.2 282.0L367.9 283.8L368.6 285.7Z" fill="#0cc40c" stroke="#0cc40c" stroke-width="0.9"/>
<path d="M374.3 276.0L378.0 272.2L389.3 267.1L385.6 270.9Z" fill="#004d00" stroke="#004d00" stroke-width="0.9"/>
<path d="M465.4 225.1L457.9 225.0L465.3 221.8L472.7 221.9Z" fill="#5c5c5c" stroke="#5c5c5c" stroke-width="0.9"/>
<path d="M380.8 277.9L375.4 278.3L386.7 273.2L392.0 272.7Z" fill="#005d00" stroke="#005d00" stroke-width="0.9"/>
<path d="M461.3 215.5L454.6 218.0L462.1 214.8L468.8 212.4Z" fill="#5f5f5f" stroke="#5f5f5f" stroke-width="0.9"/>
<path d="M467.2 238.7L467.2 235.1L474.5 231.8L474.5 235.3Z" fill="#e0e0e0" stroke="#e0e0e0" stroke-width="0.9"/>
<path d="M347.2 130.8L346.3 131.4L356.7 128.6L357.6 128.0Z" fill="#00007d" stroke="#00007d" stroke-width="0.9"/>
<path d="M404.6 277.9L406.3 269.8L414.4 266.1L412.7 274.1ZM457.2 223.2L463.0 218.9L470.4 215.7L464.7 220.0ZM380.8 270.7L386.0 266.0L394.4 262.3L389.1 266.9Z" fill="#484848" stroke="#484848" stroke-width="0.9"/>
<path d="M374.7 134.0L369.6 129.9L380.9 126.8L386.0 130.9Z" fill="#005300" stroke="#005300" stroke-width="0.9"/>
<path d="M436.6 210.5L435.1 209.7L442.8 206.6L444.3 207.4Z" fill="#6b6b6b" stroke="#6b6b6b" stroke-width="0.9"/>
<path d="M441.2 268.4L443.4 266.7L451.0 263.0L448.8 264.7Z" fill="#e0e0e0" stroke="#e0e0e0" stroke-width="0.9"/>
<path d="M425.3 363.0L428.8 362.8L438.1 357.2L434.7 357.4Z" fill="#0404ee" stroke="#0404ee" stroke-width="0.9"/>
<path d="M372.6 263.7L370.3 260.7L381.6 255.8L384.0 258.7Z" fill="#00b500" stroke="#00b500" stroke-width="0.9"/>
<path d="M384.8 291.1L384.0 287.4L395.1 282.2L395.9 285.8Z" fill="#00b300" stroke="#00b300" stroke-width="0.9"/>
<path d="M390.7 187.0L394.0 189.4L404.9 185.5L401.6 183.2Z" fill="#008a00" stroke="#008a00" stroke-width="0.9"/>
<path d="M401.2 215.9L395.5 208.5L403.7 205.5L409.3 212.7Z" fill="#4b4b4b" stroke="#4b4b4b" stroke-width="0.9"/>
<path d="M399.3 210.4L400.5 204.1L411.4 200.1L410.1 206.2Z" fill="#004d00" stroke="#004d00" stroke-width="0.9"/>
<path d="M435.1 209.7L435.1 200.8L442.8 197.8L442.8 206.6Z" fill="#484848" stroke="#484848" stroke-width="0.9"/>
<path d="M379.9 147.9L378.7 151.7L389.9 148.3L391.1 144.6Z" fill="#004400" stroke="#004400" stroke-width="0.9"/>
<path d="M443.4 266.7L439.0 258.3L446.6 254.7L451.0 263.0Z" fill="#484848" stroke="#484848" stroke-width="0.9"/>
<path d="M332.2 145.0L329.6 147.3L340.3 144.4L342.9 142.1Z" fill="#0404ee" stroke="#0404ee" stroke-width="0.9"/>
<path d="M457.7 210.0L455.4 207.1L462.8 204.1L465.2 206.9Z" fill="#e3e3e3" stroke="#e3e3e3" stroke-width="0.9"/>
<path d="M375.8 239.3L368.4 238.5L377.0 235.1L384.3 235.8Z" fill="#5c5c5c" stroke="#5c5c5c" stroke-width="0.9"/>
<path d="M428.8 362.8L431.9 368.8L441.2 363.1L438.1 357.2Z" fill="#000069" stroke="#000069" stroke-width="0.9"/>
<path d="M435.1 200.8L432.1 199.6L439.8 196.7L442.8 197.8Z" fill="#efefef" stroke="#efefef" stroke-width="0.9"/>
<path d="M357.3 150.8L351.7 149.3L363.4 146.0L368.9 147.4Z" fill="#005a00" stroke="#005a00" stroke-width="0.9"/>
<path d="M452.0 243.1L452.2 241.3L459.7 237.9L459.5 239.7ZM439.0 258.3L440.0 257.2L447.6 253.6L446.6 254.7Z" fill="#5f5f5f" stroke="#5f5f5f" stroke-width="0.9"/>
<path d="M431.9 368.8L432.9 368.6L442.2 363.0L441.2 363.1Z" fill="#00007d" stroke="#00007d" stroke-width="0.9"/>
<path d="M378.0 272.2L376.1 268.8L387.4 263.8L389.3 267.1ZM382.2 281.5L380.8 277.9L392.0 272.7L393.4 276.3Z" fill="#00b300" stroke="#00b300" stroke-width="0.9"/>
<path d="M372.8 205.9L376.1 201.4L387.4 197.4L384.1 201.8Z" fill="#004d00" stroke="#004d00" stroke-width="0.9"/>
<path d="M466.3 228.7L465.4 225.1L472.7 221.9L473.6 225.5Z" fill="#e0e0e0" stroke="#e0e0e0" stroke-width="0.9"/>
<path d="M329.8 138.6L332.2 145.0L342.9 142.1L340.5 135.7Z" fill="#000069" stroke="#000069" stroke-width="0.9"/>
<path d="M394.0 189.4L397.4 191.2L408.3 187.3L404.9 185.5Z" fill="#00a100" stroke="#00a100" stroke-width="0.9"/>
<path d="M463.0 218.9L461.3 215.5L468.8 212.4L470.4 215.7Z" fill="#e0e0e0" stroke="#e0e0e0" stroke-width="0.9"/>
<path d="M388.5 223.2L381.6 217.7L390.0 214.5L396.8 220.0Z" fill="#515151" stroke="#515151" stroke-width="0.9"/>
<path d="M448.2 355.4L451.5 354.5L460.5 349.1L457.3 350.0Z" fill="#0404ee" stroke="#0404ee" stroke-width="0.9"/>
<path d="M330.6 137.9L329.8 138.6L340.5 135.7L341.3 135.0Z" fill="#00007d" stroke="#00007d" stroke-width="0.9"/>
<path d="M329.8 138.6L332.2 145.0L329.6 147.3L325.2 142.7L324.4 143.5L317.6 133.4L320.5 130.6L323.5 127.9Z" fill="#0a0af0" stroke="#0a0af0" stroke-width="0.9"/>
<path d="M459.0 248.2L452.0 243.1L459.5 239.7L466.5 244.7Z" fill="#525252" stroke="#525252" stroke-width="0.9"/>
<path d="M442.3 215.1L440.9 213.8L448.6 210.7L449.9 212.0Z" fill="#656565" stroke="#656565" stroke-width="0.9"/>
<path d="M388.2 277.4L391.7 270.8L400.1 267.0L396.5 273.6Z" fill="#484848" stroke="#484848" stroke-width="0.9"/>
<path d="M425.6 369.2L425.3 363.0L428.8 362.8L431.9 368.8L432.9 368.6L436.6 380.1L432.6 380.4L428.6 380.6Z" fill="#0a0af0" stroke="#0a0af0" stroke-width="0.9"/>
<path d="M428.9 274.4L426.3 265.4L434.2 261.8L436.7 270.7Z" fill="#484848" stroke="#484848" stroke-width="0.9"/>
<path d="M381.7 144.6L379.9 147.9L391.1 144.6L392.9 141.3Z" fill="#004400" stroke="#004400" stroke-width="0.9"/>
<path d="M418.8 201.5L415.8 201.4L423.8 198.4L426.7 198.5Z" fill="#f3f3f3" stroke="#f3f3f3" stroke-width="0.9"/>
<path d="M354.2 134.3L351.2 136.0L361.6 133.2L364.5 131.5Z" fill="#0404ee" stroke="#0404ee" stroke-width="0.9"/>
<path d="M458.2 251.4L459.0 248.2L466.5 244.7L465.7 247.9Z" fill="#e0e0e0" stroke="#e0e0e0" stroke-width="0.9"/>
<path d="M452.1 235.8L451.8 233.9L459.3 230.6L459.6 232.5Z" fill="#5f5f5f" stroke="#5f5f5f" stroke-width="0.9"/>
<path d="M422.5 211.0L420.9 210.6L428.8 207.5L430.4 207.9Z" fill="#707070" stroke="#707070" stroke-width="0.9"/>
<path d="M420.9 210.6L418.8 201.5L426.7 198.5L428.8 207.5Z" fill="#484848" stroke="#484848" stroke-width="0.9"/>
<path d="M451.5 354.5L455.2 360.1L464.2 354.6L460.5 349.1Z" fill="#000069" stroke="#000069" stroke-width="0.9"/>
<path d="M426.3 265.4L427.6 264.8L435.5 261.1L434.2 261.8ZM447.0 221.2L445.9 219.5L453.6 216.4L454.6 218.0Z" fill="#5f5f5f" stroke="#5f5f5f" stroke-width="0.9"/>
<path d="M440.9 213.8L443.1 205.8L450.8 202.7L448.6 210.7Z" fill="#484848" stroke="#484848" stroke-width="0.9"/>
<path d="M455.2 360.1L456.2 359.8L465.2 354.2L464.2 354.6Z" fill="#00007d" stroke="#00007d" stroke-width="0.9"/>
<path d="M397.4 191.2L401.0 192.3L411.8 188.4L408.3 187.3Z" fill="#00b500" stroke="#00b500" stroke-width="0.9"/>
<path d="M402.6 205.2L399.9 206.1L408.0 203.0L410.7 202.1Z" fill="#f6f6f6" stroke="#f6f6f6" stroke-width="0.9"/>
<path d="M450.4 228.3L449.7 226.4L457.2 223.2L457.9 225.0Z" fill="#5f5f5f" stroke="#5f5f5f" stroke-width="0.9"/>
<path d="M413.0 279.6L412.5 270.6L420.6 266.8L421.0 275.7Z" fill="#484848" stroke="#484848" stroke-width="0.9"/>
<path d="M352.5 127.7L354.2 134.3L364.5 131.5L362.9 124.9Z" fill="#000069" stroke="#000069" stroke-width="0.9"/>
<path d="M377.0 232.4L369.6 229.0L378.2 225.7L385.5 229.0Z" fill="#575757" stroke="#575757" stroke-width="0.9"/>
<path d="M379.4 129.1L374.8 123.9L386.2 120.9L390.6 126.1Z" fill="#005000" stroke="#005000" stroke-width="0.9"/>
<path d="M359.6 143.5L354.1 140.6L365.7 137.4L371.2 140.2Z" fill="#005700" stroke="#005700" stroke-width="0.9"/>
<path d="M383.9 141.8L381.7 144.6L392.9 141.3L395.1 138.5Z" fill="#004400" stroke="#004400" stroke-width="0.9"/>
<path d="M432.2 362.4L435.6 361.8L444.9 356.2L441.5 356.8Z" fill="#0404ee" stroke="#0404ee" stroke-width="0.9"/>
<path d="M353.5 127.2L352.5 127.7L362.9 124.9L363.9 124.4Z" fill="#00007d" stroke="#00007d" stroke-width="0.9"/>
<path d="M442.4 253.2L443.1 251.6L450.7 248.1L450.1 249.6Z" fill="#5f5f5f" stroke="#5f5f5f" stroke-width="0.9"/>
<path d="M407.2 211.8L407.3 205.0L418.1 200.9L418.0 207.6Z" fill="#004d00" stroke="#004d00" stroke-width="0.9"/>
<path d="M367.7 172.3L369.2 176.6L380.6 172.9L379.2 168.6Z" fill="#004400" stroke="#004400" stroke-width="0.9"/>
<path d="M424.4 186.5L426.6 184.7L428.6 182.5L430.3 180.0L431.7 177.1L432.7 174.0L433.3 170.6L433.5 167.1L433.4 163.5L432.8 159.8L431.9 156.1L430.6 152.6L428.9 149.1L427.0 145.9L424.7 143.0L422.2 140.4L419.5 138.2L416.7 136.3L413.8 134.9L410.8 134.0L407.8 133.6L404.9 133.6L402.1 134.1L399.5 135.1L397.0 136.5L394.8 138.3L392.9 140.6L391.3 143.1L390.0 146.0L389.1 149.2L388.5 152.5L388.3 156.0L388.5 159.5L389.1 163.1L390.0 166.7L391.3 170.2L392.9 173.5L394.8 176.6L397.0 179.5L399.4 182.0L402.0 184.2L404.8 186.1L407.7 187.5L410.6 188.5L413.5 189.0L416.4 189.1L419.2 188.7L421.9 187.8Z" fill="#004a00" stroke="#004a00" stroke-width="0.9"/>
<path d="M380.2 211.2L382.6 205.7L393.8 201.5L391.5 207.0Z" fill="#004d00" stroke="#004d00" stroke-width="0.9"/>
<path d="M459.7 238.5L452.1 235.8L459.6 232.5L467.2 235.1Z" fill="#585858" stroke="#585858" stroke-width="0.9"/>
<path d="M369.2 176.6L371.1 180.7L382.5 176.9L380.6 172.9Z" fill="#004400" stroke="#004400" stroke-width="0.9"/>
<path d="M443.1 205.8L440.3 203.7L448.0 200.7L450.8 202.7Z" fill="#e9e9e9" stroke="#e9e9e9" stroke-width="0.9"/>
<path d="M366.8 167.9L367.7 172.3L379.2 168.6L378.2 164.3Z" fill="#004400" stroke="#004400" stroke-width="0.9"/>
<path d="M406.7 213.8L402.6 205.2L410.7 202.1L414.8 210.6Z" fill="#484848" stroke="#484848" stroke-width="0.9"/>
<path d="M450.6 305.3L455.0 302.3L465.1 296.9L460.7 299.8Z" fill="#004d00" stroke="#004d00" stroke-width="0.9"/>
<path d="M446.9 262.8L448.5 260.2L456.1 256.5L454.5 259.1Z" fill="#e0e0e0" stroke="#e0e0e0" stroke-width="0.9"/>
<path d="M367.6 250.5L360.9 252.3L369.6 248.7L376.3 246.9Z" fill="#5f5f5f" stroke="#5f5f5f" stroke-width="0.9"/>
<path d="M448.5 260.2L442.4 253.2L450.1 249.6L456.1 256.5Z" fill="#4c4c4c" stroke="#4c4c4c" stroke-width="0.9"/>
<path d="M345.2 170.9L340.1 172.3L352.0 168.6L357.0 167.2Z" fill="#005e00" stroke="#005e00" stroke-width="0.9"/>
<path d="M348.6 195.0L353.4 193.0L365.1 189.0L360.3 191.0Z" fill="#004d00" stroke="#004d00" stroke-width="0.9"/>
<path d="M371.1 180.7L373.5 184.5L384.9 180.7L382.5 176.9Z" fill="#004400" stroke="#004400" stroke-width="0.9"/>
<path d="M337.7 140.8L334.9 142.8L345.6 139.9L348.3 137.9Z" fill="#0404ee" stroke="#0404ee" stroke-width="0.9"/>
<path d="M366.4 163.5L366.8 167.9L378.2 164.3L377.8 159.9Z" fill="#004400" stroke="#004400" stroke-width="0.9"/>
<path d="M445.9 219.5L450.1 213.1L457.7 210.0L453.6 216.4Z" fill="#484848" stroke="#484848" stroke-width="0.9"/>
<path d="M408.2 213.6L406.7 213.8L414.8 210.6L416.3 210.4Z" fill="#747474" stroke="#747474" stroke-width="0.9"/>
<path d="M435.6 361.8L439.0 367.7L448.3 362.0L444.9 356.2Z" fill="#000069" stroke="#000069" stroke-width="0.9"/>
<path d="M372.2 274.5L377.5 269.8L386.0 266.0L380.8 270.7Z" fill="#484848" stroke="#484848" stroke-width="0.9"/>
<path d="M401.0 192.3L404.5 192.8L415.3 188.9L411.8 188.4Z" fill="#00c700" stroke="#00c700" stroke-width="0.9"/>
<path d="M396.4 281.8L398.0 273.7L406.3 269.8L404.6 277.9Z" fill="#484848" stroke="#484848" stroke-width="0.9"/>
<path d="M442.0 274.1L436.7 275.1L447.1 270.0L452.3 269.0Z" fill="#005e00" stroke="#005e00" stroke-width="0.9"/>
<path d="M373.5 184.5L376.3 188.0L387.6 184.1L384.9 180.7Z" fill="#005800" stroke="#005800" stroke-width="0.9"/>
<path d="M439.0 367.7L440.1 367.4L449.3 361.7L448.3 362.0Z" fill="#00007d" stroke="#00007d" stroke-width="0.9"/>
<path d="M457.9 228.4L450.4 228.3L457.9 225.0L465.4 225.1Z" fill="#5c5c5c" stroke="#5c5c5c" stroke-width="0.9"/>
<path d="M453.8 218.7L447.0 221.2L454.6 218.0L461.3 215.5Z" fill="#5f5f5f" stroke="#5f5f5f" stroke-width="0.9"/>
<path d="M459.7 242.1L459.7 238.5L467.2 235.1L467.2 238.7Z" fill="#e0e0e0" stroke="#e0e0e0" stroke-width="0.9"/>
<path d="M449.7 226.4L455.5 222.1L463.0 218.9L457.2 223.2Z" fill="#484848" stroke="#484848" stroke-width="0.9"/>
<path d="M433.3 272.2L435.6 270.4L443.4 266.7L441.2 268.4Z" fill="#e0e0e0" stroke="#e0e0e0" stroke-width="0.9"/>
<path d="M428.7 213.7L427.2 212.8L435.1 209.7L436.6 210.5Z" fill="#6b6b6b" stroke="#6b6b6b" stroke-width="0.9"/>
<path d="M366.5 159.2L366.4 163.5L377.8 159.9L378.0 155.7ZM386.5 139.5L383.9 141.8L395.1 138.5L397.7 136.3Z" fill="#004400" stroke="#004400" stroke-width="0.9"/>
<path d="M392.9 219.1L387.1 211.7L395.5 208.5L401.2 215.9Z" fill="#4b4b4b" stroke="#4b4b4b" stroke-width="0.9"/>
<path d="M335.6 134.2L337.7 140.8L348.3 137.9L346.3 131.4Z" fill="#000069" stroke="#000069" stroke-width="0.9"/>
<path d="M454.7 353.5L457.9 352.3L466.9 346.8L463.7 348.0Z" fill="#0404ee" stroke="#0404ee" stroke-width="0.9"/>
<path d="M344.6 162.4L339.1 162.3L351.0 158.8L356.5 158.8Z" fill="#005c00" stroke="#005c00" stroke-width="0.9"/>
<path d="M457.4 312.2L461.0 308.1L471.0 302.6L467.5 306.7Z" fill="#004d00" stroke="#004d00" stroke-width="0.9"/>
<path d="M336.5 133.6L335.6 134.2L346.3 131.4L347.2 130.8Z" fill="#00007d" stroke="#00007d" stroke-width="0.9"/>
<path d="M354.4 203.3L358.5 199.9L370.2 195.8L366.1 199.1Z" fill="#004d00" stroke="#004d00" stroke-width="0.9"/>
<path d="M367.1 242.8L359.7 242.0L368.4 238.5L375.8 239.3Z" fill="#5c5c5c" stroke="#5c5c5c" stroke-width="0.9"/>
<path d="M435.6 270.4L431.1 262.0L439.0 258.3L443.4 266.7ZM427.2 212.8L427.2 203.8L435.1 200.8L435.1 209.7Z" fill="#484848" stroke="#484848" stroke-width="0.9"/>
<path d="M335.6 134.2L337.7 140.8L334.9 142.8L330.6 137.9L329.8 138.6L323.5 127.9L326.6 125.4L329.8 123.0Z" fill="#0a0af0" stroke="#0a0af0" stroke-width="0.9"/>
<path d="M376.3 188.0L379.4 190.9L390.7 187.0L387.6 184.1Z" fill="#007100" stroke="#007100" stroke-width="0.9"/>
<path d="M432.9 368.6L432.2 362.4L435.6 361.8L439.0 367.7L440.1 367.4L444.4 378.8L440.5 379.5L436.6 380.1Z" fill="#0a0af0" stroke="#0a0af0" stroke-width="0.9"/>
<path d="M450.1 213.1L447.8 210.2L455.4 207.1L457.7 210.0Z" fill="#e3e3e3" stroke="#e3e3e3" stroke-width="0.9"/>
<path d="M431.1 262.0L432.1 260.9L440.0 257.2L439.0 258.3Z" fill="#5f5f5f" stroke="#5f5f5f" stroke-width="0.9"/>
<path d="M360.3 131.3L357.2 132.7L367.6 130.0L370.7 128.6Z" fill="#0404ee" stroke="#0404ee" stroke-width="0.9"/>
<path d="M427.2 203.8L424.2 202.7L432.1 199.6L435.1 200.8Z" fill="#efefef" stroke="#efefef" stroke-width="0.9"/>
<path d="M444.3 246.6L444.5 244.8L452.2 241.3L452.0 243.1Z" fill="#5f5f5f" stroke="#5f5f5f" stroke-width="0.9"/>
<path d="M367.2 155.1L366.5 159.2L378.0 155.7L378.7 151.7Z" fill="#004400" stroke="#004400" stroke-width="0.9"/>
<path d="M404.5 192.8L407.9 192.6L418.8 188.7L415.3 188.9Z" fill="#00d600" stroke="#00d600" stroke-width="0.9"/>
<path d="M457.9 352.3L461.9 357.6L470.9 352.1L466.9 346.8Z" fill="#000069" stroke="#000069" stroke-width="0.9"/>
<path d="M458.8 232.1L457.9 228.4L465.4 225.1L466.3 228.7Z" fill="#e0e0e0" stroke="#e0e0e0" stroke-width="0.9"/>
<path d="M380.0 226.6L373.1 221.0L381.6 217.7L388.5 223.2Z" fill="#515151" stroke="#515151" stroke-width="0.9"/>
<path d="M363.1 137.2L357.9 133.0L369.6 129.9L374.7 134.0Z" fill="#005300" stroke="#005300" stroke-width="0.9"/>
<path d="M379.7 281.4L383.2 274.6L391.7 270.8L388.2 277.4Z" fill="#484848" stroke="#484848" stroke-width="0.9"/>
<path d="M441.7 266.0L436.0 265.6L446.4 260.7L452.0 261.0Z" fill="#005c00" stroke="#005c00" stroke-width="0.9"/>
<path d="M455.5 222.1L453.8 218.7L461.3 215.5L463.0 218.9Z" fill="#e0e0e0" stroke="#e0e0e0" stroke-width="0.9"/>
<path d="M379.4 190.9L382.7 193.4L394.0 189.4L390.7 187.0Z" fill="#008a00" stroke="#008a00" stroke-width="0.9"/>
<path d="M389.5 137.8L386.5 139.5L397.7 136.3L400.7 134.6Z" fill="#004400" stroke="#004400" stroke-width="0.9"/>
<path d="M451.4 251.7L444.3 246.6L452.0 243.1L459.0 248.2Z" fill="#525252" stroke="#525252" stroke-width="0.9"/>
<path d="M461.9 357.6L462.9 357.2L471.8 351.6L470.9 352.1Z" fill="#00007d" stroke="#00007d" stroke-width="0.9"/>
<path d="M388.1 214.6L389.4 208.3L400.5 204.1L399.3 210.4Z" fill="#004d00" stroke="#004d00" stroke-width="0.9"/>
<path d="M420.9 278.3L418.3 269.2L426.3 265.4L428.9 274.4Z" fill="#484848" stroke="#484848" stroke-width="0.9"/>
<path d="M385.0 125.8L381.3 119.6L392.5 116.7L396.2 122.7Z" fill="#004d00" stroke="#004d00" stroke-width="0.9"/>
<path d="M434.5 218.3L433.1 217.0L440.9 213.8L442.3 215.1Z" fill="#656565" stroke="#656565" stroke-width="0.9"/>
<path d="M359.1 124.6L360.3 131.3L370.7 128.6L369.4 121.9Z" fill="#000069" stroke="#000069" stroke-width="0.9"/>
<path d="M368.4 151.3L367.2 155.1L378.7 151.7L379.9 147.9Z" fill="#004400" stroke="#004400" stroke-width="0.9"/>
<path d="M410.7 204.6L407.7 204.5L415.8 201.4L418.8 201.5Z" fill="#f3f3f3" stroke="#f3f3f3" stroke-width="0.9"/>
<path d="M345.4 154.3L339.8 152.7L351.7 149.3L357.3 150.8Z" fill="#005a00" stroke="#005a00" stroke-width="0.9"/>
<path d="M438.9 361.1L442.2 360.2L451.5 354.5L448.2 355.4Z" fill="#0404ee" stroke="#0404ee" stroke-width="0.9"/>
<path d="M414.9 211.2L413.8 204.2L424.5 200.1L425.6 207.0ZM465.1 317.7L467.6 312.5L477.6 306.9L475.0 312.1Z" fill="#004d00" stroke="#004d00" stroke-width="0.9"/>
<path d="M450.6 255.0L451.4 251.7L459.0 248.2L458.2 251.4Z" fill="#e0e0e0" stroke="#e0e0e0" stroke-width="0.9"/>
<path d="M414.4 214.2L412.8 213.8L420.9 210.6L422.5 211.0Z" fill="#707070" stroke="#707070" stroke-width="0.9"/>
<path d="M444.4 239.2L444.1 237.3L451.8 233.9L452.1 235.8Z" fill="#5f5f5f" stroke="#5f5f5f" stroke-width="0.9"/>
<path d="M412.8 213.8L410.7 204.6L418.8 201.5L420.9 210.6Z" fill="#484848" stroke="#484848" stroke-width="0.9"/>
<path d="M360.1 124.2L359.1 124.6L369.4 121.9L370.5 121.5Z" fill="#00007d" stroke="#00007d" stroke-width="0.9"/>
<path d="M361.2 210.2L364.5 205.6L376.1 201.4L372.8 205.9Z" fill="#004d00" stroke="#004d00" stroke-width="0.9"/>
<path d="M418.3 269.2L419.6 268.5L427.6 264.8L426.3 265.4Z" fill="#5f5f5f" stroke="#5f5f5f" stroke-width="0.9"/>
<path d="M343.5 137.2L340.5 138.9L351.2 136.0L354.2 134.3Z" fill="#0404ee" stroke="#0404ee" stroke-width="0.9"/>
<path d="M394.2 208.3L391.5 209.2L399.9 206.1L402.6 205.2Z" fill="#f6f6f6" stroke="#f6f6f6" stroke-width="0.9"/>
<path d="M439.2 224.5L438.2 222.8L445.9 219.5L447.0 221.2Z" fill="#5f5f5f" stroke="#5f5f5f" stroke-width="0.9"/>
<path d="M404.8 283.5L404.3 274.5L412.5 270.6L413.0 279.6Z" fill="#484848" stroke="#484848" stroke-width="0.9"/>
<path d="M368.3 235.8L360.8 232.5L369.6 229.0L377.0 232.4Z" fill="#575757" stroke="#575757" stroke-width="0.9"/>
<path d="M433.1 217.0L435.3 208.9L443.1 205.8L440.9 213.8Z" fill="#484848" stroke="#484848" stroke-width="0.9"/>
<path d="M407.9 192.6L411.2 191.7L422.0 187.8L418.8 188.7Z" fill="#00e100" stroke="#00e100" stroke-width="0.9"/>
<path d="M382.7 193.4L386.2 195.2L397.4 191.2L394.0 189.4Z" fill="#00a100" stroke="#00a100" stroke-width="0.9"/>
<path d="M442.6 231.6L441.9 229.8L449.7 226.4L450.4 228.3Z" fill="#5f5f5f" stroke="#5f5f5f" stroke-width="0.9"/>
<path d="M442.2 360.2L446.0 365.8L455.2 360.1L451.5 354.5Z" fill="#000069" stroke="#000069" stroke-width="0.9"/>
<path d="M370.2 148.0L368.4 151.3L379.9 147.9L381.7 144.6ZM392.8 136.8L389.5 137.8L400.7 134.6L403.9 133.6Z" fill="#004400" stroke="#004400" stroke-width="0.9"/>
<path d="M358.8 254.2L352.0 256.0L360.9 252.3L367.6 250.5Z" fill="#5f5f5f" stroke="#5f5f5f" stroke-width="0.9"/>
<path d="M446.0 365.8L447.0 365.5L456.2 359.8L455.2 360.1Z" fill="#00007d" stroke="#00007d" stroke-width="0.9"/>
<path d="M434.6 256.8L435.2 255.2L443.1 251.6L442.4 253.2Z" fill="#5f5f5f" stroke="#5f5f5f" stroke-width="0.9"/>
<path d="M452.0 242.0L444.4 239.2L452.1 235.8L459.7 238.5Z" fill="#585858" stroke="#585858" stroke-width="0.9"/>
<path d="M398.4 217.0L394.2 208.3L402.6 205.2L406.7 213.8Z" fill="#484848" stroke="#484848" stroke-width="0.9"/>
<path d="M435.3 208.9L432.5 206.8L440.3 203.7L443.1 205.8Z" fill="#e9e9e9" stroke="#e9e9e9" stroke-width="0.9"/>
<path d="M461.0 350.9L464.0 349.3L472.9 343.8L469.9 345.4Z" fill="#0404ee" stroke="#0404ee" stroke-width="0.9"/>
<path d="M341.8 130.4L343.5 137.2L354.2 134.3L352.5 127.7Z" fill="#000069" stroke="#000069" stroke-width="0.9"/>
<path d="M439.1 266.5L440.7 263.9L448.5 260.2L446.9 262.8Z" fill="#e0e0e0" stroke="#e0e0e0" stroke-width="0.9"/>
<path d="M442.8 258.3L437.0 256.6L447.4 251.7L453.1 253.5Z" fill="#005a00" stroke="#005a00" stroke-width="0.9"/>
<path d="M440.7 263.9L434.6 256.8L442.4 253.2L448.5 260.2Z" fill="#4c4c4c" stroke="#4c4c4c" stroke-width="0.9"/>
<path d="M398.8 152.4L397.6 152.6L406.3 149.9L407.5 149.7Z" fill="#fafafa" stroke="#fafafa" stroke-width="0.9"/>
<path d="M363.4 278.4L368.7 273.7L377.5 269.8L372.2 274.5Z" fill="#484848" stroke="#484848" stroke-width="0.9"/>
<path d="M406.2 176.0L407.3 175.4L415.9 172.5L414.9 173.1Z" fill="#4b4b4b" stroke="#4b4b4b" stroke-width="0.9"/>
<path d="M342.8 129.9L341.8 130.4L352.5 127.7L353.5 127.2Z" fill="#00007d" stroke="#00007d" stroke-width="0.9"/>
<path d="M387.9 285.8L389.5 277.6L398.0 273.7L396.4 281.8Z" fill="#484848" stroke="#484848" stroke-width="0.9"/>
<path d="M399.9 216.8L398.4 217.0L406.7 213.8L408.2 213.6Z" fill="#747474" stroke="#747474" stroke-width="0.9"/>
<path d="M438.2 222.8L442.4 216.3L450.1 213.1L445.9 219.5Z" fill="#484848" stroke="#484848" stroke-width="0.9"/>
<path d="M366.8 129.0L363.5 130.1L373.9 127.3L377.1 126.3Z" fill="#0404ee" stroke="#0404ee" stroke-width="0.9"/>
<path d="M386.2 195.2L389.8 196.4L401.0 192.3L397.4 191.2Z" fill="#00b500" stroke="#00b500" stroke-width="0.9"/>
<path d="M341.8 130.4L343.5 137.2L340.5 138.9L336.5 133.6L335.6 134.2L329.8 123.0L333.2 120.9L336.6 118.9Z" fill="#0a0af0" stroke="#0a0af0" stroke-width="0.9"/>
<path d="M454.4 283.9L456.4 287.9L466.5 282.7L464.6 278.6Z" fill="#004400" stroke="#004400" stroke-width="0.9"/>
<path d="M388.6 117.3L385.7 117.9L396.9 115.0L399.8 114.4Z" fill="#00c400" stroke="#00c400" stroke-width="0.9"/>
<path d="M456.4 287.9L458.8 291.7L468.8 286.4L466.5 282.7Z" fill="#004400" stroke="#004400" stroke-width="0.9"/>
<path d="M440.1 367.4L438.9 361.1L442.2 360.2L446.0 365.8L447.0 365.5L452.0 376.7L448.3 377.9L444.4 378.8Z" fill="#0a0af0" stroke="#0a0af0" stroke-width="0.9"/>
<path d="M400.0 152.4L398.8 152.4L407.5 149.7L408.8 149.7Z" fill="#fafafa" stroke="#fafafa" stroke-width="0.9"/>
<path d="M453.0 279.6L454.4 283.9L464.6 278.6L463.2 274.5Z" fill="#004400" stroke="#004400" stroke-width="0.9"/>
<path d="M347.1 179.4L342.6 182.2L344.0 185.8L349.3 185.2L350.4 187.6L358.6 183.0L357.7 181.1L357.0 179.2L356.3 177.3Z" fill="#0cc40c" stroke="#0cc40c" stroke-width="0.9"/>
<path d="M347.6 146.9L342.1 143.9L354.1 140.6L359.6 143.5Z" fill="#005700" stroke="#005700" stroke-width="0.9"/>
<path d="M367.8 132.3L363.2 126.9L374.8 123.9L379.4 129.1Z" fill="#005000" stroke="#005000" stroke-width="0.9"/>
<path d="M425.4 276.0L427.6 274.3L435.6 270.4L433.3 272.2Z" fill="#e0e0e0" stroke="#e0e0e0" stroke-width="0.9"/>
<path d="M450.2 231.8L442.6 231.6L450.4 228.3L457.9 228.4Z" fill="#5c5c5c" stroke="#5c5c5c" stroke-width="0.9"/>
<path d="M446.1 222.0L439.2 224.5L447.0 221.2L453.8 218.7Z" fill="#5f5f5f" stroke="#5f5f5f" stroke-width="0.9"/>
<path d="M473.2 321.5L474.6 315.5L484.5 309.8L483.1 315.8Z" fill="#004d00" stroke="#004d00" stroke-width="0.9"/>
<path d="M407.3 175.4L408.2 174.7L416.9 171.7L415.9 172.5Z" fill="#4b4b4b" stroke="#4b4b4b" stroke-width="0.9"/>
<path d="M458.8 291.7L461.5 295.2L471.6 289.8L468.8 286.4Z" fill="#005800" stroke="#005800" stroke-width="0.9"/>
<path d="M452.1 245.6L452.0 242.0L459.7 238.5L459.7 242.1Z" fill="#e0e0e0" stroke="#e0e0e0" stroke-width="0.9"/>
<path d="M384.4 222.5L378.6 214.9L387.1 211.7L392.9 219.1Z" fill="#4b4b4b" stroke="#4b4b4b" stroke-width="0.9"/>
<path d="M420.7 216.9L419.2 216.0L427.2 212.8L428.7 213.7Z" fill="#6b6b6b" stroke="#6b6b6b" stroke-width="0.9"/>
<path d="M345.2 170.9L340.1 172.3L340.8 176.1L346.4 176.9L347.1 179.4L356.3 177.3L355.7 175.3L355.3 173.3L354.9 171.3Z" fill="#0cc40c" stroke="#0cc40c" stroke-width="0.9"/>
<path d="M441.9 229.8L447.8 225.4L455.5 222.1L449.7 226.4Z" fill="#484848" stroke="#484848" stroke-width="0.9"/>
<path d="M372.4 145.1L370.2 148.0L381.7 144.6L383.9 141.8Z" fill="#004400" stroke="#004400" stroke-width="0.9"/>
<path d="M419.4 209.8L422.0 208.5L432.7 204.4L430.1 205.6Z" fill="#00b300" stroke="#00b300" stroke-width="0.9"/>
<path d="M464.0 349.3L468.3 354.4L477.2 348.9L472.9 343.8Z" fill="#000069" stroke="#000069" stroke-width="0.9"/>
<path d="M355.9 176.1L357.4 180.5L369.2 176.6L367.7 172.3Z" fill="#004400" stroke="#004400" stroke-width="0.9"/>
<path d="M368.7 215.5L371.0 209.9L382.6 205.7L380.2 211.2Z" fill="#004d00" stroke="#004d00" stroke-width="0.9"/>
<path d="M358.2 246.4L350.8 245.6L359.7 242.0L367.1 242.8Z" fill="#5c5c5c" stroke="#5c5c5c" stroke-width="0.9"/>
<path d="M357.4 180.5L359.4 184.6L371.1 180.7L369.2 176.6Z" fill="#004400" stroke="#004400" stroke-width="0.9"/>
<path d="M350.4 187.6L346.7 191.6L348.6 195.0L353.4 193.0L354.8 195.2L361.7 188.3L360.6 186.6L359.5 184.8L358.6 183.0Z" fill="#0cc40c" stroke="#0cc40c" stroke-width="0.9"/>
<path d="M396.1 216.1L396.2 209.3L407.3 205.0L407.2 211.8Z" fill="#004d00" stroke="#004d00" stroke-width="0.9"/>
<path d="M452.2 275.3L453.0 279.6L463.2 274.5L462.4 270.2ZM355.0 171.6L355.9 176.1L367.7 172.3L366.8 167.9Z" fill="#004400" stroke="#004400" stroke-width="0.9"/>
<path d="M401.3 152.6L400.0 152.4L408.8 149.7L410.1 149.9Z" fill="#fafafa" stroke="#fafafa" stroke-width="0.9"/>
<path d="M461.5 295.2L464.7 298.2L474.7 292.8L471.6 289.8Z" fill="#007100" stroke="#007100" stroke-width="0.9"/>
<path d="M408.2 174.7L409.1 173.7L417.7 170.8L416.9 171.7Z" fill="#4b4b4b" stroke="#4b4b4b" stroke-width="0.9"/>
<path d="M440.2 310.9L444.6 307.9L455.0 302.3L450.6 305.3ZM391.4 124.1L388.6 117.3L399.8 114.4L402.5 121.1Z" fill="#004d00" stroke="#004d00" stroke-width="0.9"/>
<path d="M427.6 274.3L423.1 265.8L431.1 262.0L435.6 270.4Z" fill="#484848" stroke="#484848" stroke-width="0.9"/>
<path d="M359.4 184.6L361.8 188.5L373.5 184.5L371.1 180.7Z" fill="#004400" stroke="#004400" stroke-width="0.9"/>
<path d="M419.2 216.0L419.1 207.0L427.2 203.8L427.2 212.8Z" fill="#484848" stroke="#484848" stroke-width="0.9"/>
<path d="M468.3 354.4L469.3 353.9L478.2 348.3L477.2 348.9Z" fill="#00007d" stroke="#00007d" stroke-width="0.9"/>
<path d="M366.0 122.3L366.8 129.0L377.1 126.3L376.3 119.6Z" fill="#000069" stroke="#000069" stroke-width="0.9"/>
<path d="M354.5 167.1L355.0 171.6L366.8 167.9L366.4 163.5Z" fill="#004400" stroke="#004400" stroke-width="0.9"/>
<path d="M423.1 265.8L424.1 264.6L432.1 260.9L431.1 262.0Z" fill="#5f5f5f" stroke="#5f5f5f" stroke-width="0.9"/>
<path d="M344.6 162.4L339.1 162.3L339.3 166.1L344.8 168.3L345.2 170.9L354.9 171.3L354.7 169.3L354.5 167.3L354.5 165.4Z" fill="#0cc40c" stroke="#0cc40c" stroke-width="0.9"/>
<path d="M419.1 207.0L416.1 205.8L424.2 202.7L427.2 203.8Z" fill="#efefef" stroke="#efefef" stroke-width="0.9"/>
<path d="M442.4 216.3L440.0 213.4L447.8 210.2L450.1 213.1Z" fill="#e3e3e3" stroke="#e3e3e3" stroke-width="0.9"/>
<path d="M402.6 153.0L401.3 152.6L410.1 149.9L411.3 150.3Z" fill="#fafafa" stroke="#fafafa" stroke-width="0.9"/>
<path d="M436.4 250.2L436.6 248.4L444.5 244.8L444.3 246.6Z" fill="#5f5f5f" stroke="#5f5f5f" stroke-width="0.9"/>
<path d="M445.5 359.1L448.6 357.9L457.9 352.3L454.7 353.5Z" fill="#0404ee" stroke="#0404ee" stroke-width="0.9"/>
<path d="M422.0 208.5L419.8 201.7L430.5 197.6L432.7 204.4Z" fill="#004d00" stroke="#004d00" stroke-width="0.9"/>
<path d="M451.8 271.1L452.2 275.3L462.4 270.2L462.1 266.0Z" fill="#004400" stroke="#004400" stroke-width="0.9"/>
<path d="M409.1 173.7L409.8 172.6L418.5 169.7L417.7 170.8Z" fill="#4b4b4b" stroke="#4b4b4b" stroke-width="0.9"/>
<path d="M371.3 230.0L364.3 224.3L373.1 221.0L380.0 226.6Z" fill="#515151" stroke="#515151" stroke-width="0.9"/>
<path d="M389.8 196.4L393.3 196.8L404.5 192.8L401.0 192.3Z" fill="#00c700" stroke="#00c700" stroke-width="0.9"/>
<path d="M393.4 123.9L391.4 124.1L402.5 121.1L404.5 120.9Z" fill="#006900" stroke="#006900" stroke-width="0.9"/>
<path d="M361.8 188.5L364.6 192.0L376.3 188.0L373.5 184.5Z" fill="#005800" stroke="#005800" stroke-width="0.9"/>
<path d="M371.0 285.4L374.6 278.6L383.2 274.6L379.7 281.4Z" fill="#484848" stroke="#484848" stroke-width="0.9"/>
<path d="M464.7 298.2L468.1 300.7L478.1 295.3L474.7 292.8Z" fill="#008a00" stroke="#008a00" stroke-width="0.9"/>
<path d="M354.8 195.2L352.0 200.3L354.4 203.3L358.5 199.9L360.2 201.7L365.4 192.8L364.1 191.4L362.9 189.9L361.7 188.3Z" fill="#0cc40c" stroke="#0cc40c" stroke-width="0.9"/>
<path d="M431.5 279.3L426.1 280.3L436.7 275.1L442.0 274.1Z" fill="#005e00" stroke="#005e00" stroke-width="0.9"/>
<path d="M451.1 235.5L450.2 231.8L457.9 228.4L458.8 232.1Z" fill="#e0e0e0" stroke="#e0e0e0" stroke-width="0.9"/>
<path d="M354.7 162.8L354.5 167.1L366.4 163.5L366.5 159.2Z" fill="#004400" stroke="#004400" stroke-width="0.9"/>
<path d="M403.9 153.6L402.6 153.0L411.3 150.3L412.6 150.9Z" fill="#fafafa" stroke="#fafafa" stroke-width="0.9"/>
<path d="M409.8 172.6L410.4 171.3L419.0 168.4L418.5 169.7Z" fill="#4b4b4b" stroke="#4b4b4b" stroke-width="0.9"/>
<path d="M349.7 134.2L346.6 135.6L357.2 132.7L360.3 131.3Z" fill="#0404ee" stroke="#0404ee" stroke-width="0.9"/>
<path d="M419.8 201.7L421.4 200.6L432.1 196.5L430.5 197.6Z" fill="#005900" stroke="#005900" stroke-width="0.9"/>
<path d="M375.0 142.8L372.4 145.1L383.9 141.8L386.5 139.5Z" fill="#004400" stroke="#004400" stroke-width="0.9"/>
<path d="M412.7 282.3L410.0 273.1L418.3 269.2L420.9 278.3Z" fill="#484848" stroke="#484848" stroke-width="0.9"/>
<path d="M447.8 225.4L446.1 222.0L453.8 218.7L455.5 222.1Z" fill="#e0e0e0" stroke="#e0e0e0" stroke-width="0.9"/>
<path d="M443.6 255.4L436.4 250.2L444.3 246.6L451.4 251.7Z" fill="#525252" stroke="#525252" stroke-width="0.9"/>
<path d="M445.3 251.5L439.7 248.3L450.0 243.6L455.6 246.7Z" fill="#005700" stroke="#005700" stroke-width="0.9"/>
<path d="M426.5 221.6L425.1 220.3L433.1 217.0L434.5 218.3Z" fill="#656565" stroke="#656565" stroke-width="0.9"/>
<path d="M447.1 318.0L450.7 313.8L461.0 308.1L457.4 312.2Z" fill="#004d00" stroke="#004d00" stroke-width="0.9"/>
<path d="M405.1 154.4L403.9 153.6L412.6 150.9L413.8 151.7Z" fill="#f3f3f3" stroke="#f3f3f3" stroke-width="0.9"/>
<path d="M452.1 267.0L451.8 271.1L462.1 266.0L462.3 262.0Z" fill="#004400" stroke="#004400" stroke-width="0.9"/>
<path d="M410.4 171.3L410.8 170.0L419.5 167.1L419.0 168.4Z" fill="#4b4b4b" stroke="#4b4b4b" stroke-width="0.9"/>
<path d="M448.6 357.9L452.7 363.3L461.9 357.6L457.9 352.3Z" fill="#000069" stroke="#000069" stroke-width="0.9"/>
<path d="M402.4 207.8L399.4 207.6L407.7 204.5L410.7 204.6Z" fill="#f3f3f3" stroke="#f3f3f3" stroke-width="0.9"/>
<path d="M364.6 192.0L367.8 195.0L379.4 190.9L376.3 188.0Z" fill="#007100" stroke="#007100" stroke-width="0.9"/>
<path d="M345.4 154.3L339.8 152.7L339.3 156.3L344.7 159.9L344.6 162.4L354.5 165.4L354.6 163.5L354.8 161.6L355.1 159.7Z" fill="#0cc40c" stroke="#0cc40c" stroke-width="0.9"/>
<path d="M468.1 300.7L471.7 302.7L481.6 297.2L478.1 295.3Z" fill="#00a100" stroke="#00a100" stroke-width="0.9"/>
<path d="M442.8 258.6L443.6 255.4L451.4 251.7L450.6 255.0Z" fill="#e0e0e0" stroke="#e0e0e0" stroke-width="0.9"/>
<path d="M406.2 217.4L404.6 217.1L412.8 213.8L414.4 214.2Z" fill="#707070" stroke="#707070" stroke-width="0.9"/>
<path d="M406.2 155.4L405.1 154.4L413.8 151.7L415.0 152.7Z" fill="#e5e5e5" stroke="#e5e5e5" stroke-width="0.9"/>
<path d="M404.6 217.1L402.4 207.8L410.7 204.6L412.8 213.8Z" fill="#484848" stroke="#484848" stroke-width="0.9"/>
<path d="M355.4 158.7L354.7 162.8L366.5 159.2L367.2 155.1Z" fill="#004400" stroke="#004400" stroke-width="0.9"/>
<path d="M410.8 170.0L411.1 168.5L419.7 165.6L419.5 167.1Z" fill="#4b4b4b" stroke="#4b4b4b" stroke-width="0.9"/>
<path d="M436.5 242.7L436.2 240.8L444.1 237.3L444.4 239.2ZM410.0 273.1L411.4 272.4L419.6 268.5L418.3 269.2Z" fill="#5f5f5f" stroke="#5f5f5f" stroke-width="0.9"/>
<path d="M452.7 363.3L453.7 362.9L462.9 357.2L461.9 357.6Z" fill="#00007d" stroke="#00007d" stroke-width="0.9"/>
<path d="M359.5 239.4L351.9 236.0L360.8 232.5L368.3 235.8Z" fill="#575757" stroke="#575757" stroke-width="0.9"/>
<path d="M348.4 127.4L349.7 134.2L360.3 131.3L359.1 124.6Z" fill="#000069" stroke="#000069" stroke-width="0.9"/>
<path d="M407.3 156.5L406.2 155.4L415.0 152.7L416.0 153.8Z" fill="#d4d4d4" stroke="#d4d4d4" stroke-width="0.9"/>
<path d="M396.4 287.5L395.8 278.4L404.3 274.5L404.8 283.5Z" fill="#484848" stroke="#484848" stroke-width="0.9"/>
<path d="M385.7 211.5L383.0 212.4L391.5 209.2L394.2 208.3Z" fill="#f6f6f6" stroke="#f6f6f6" stroke-width="0.9"/>
<path d="M411.1 168.5L411.2 167.0L419.8 164.1L419.7 165.6Z" fill="#4b4b4b" stroke="#4b4b4b" stroke-width="0.9"/>
<path d="M393.3 196.8L396.8 196.6L407.9 192.6L404.5 192.8Z" fill="#00d600" stroke="#00d600" stroke-width="0.9"/>
<path d="M351.1 140.5L345.9 136.3L357.9 133.0L363.1 137.2Z" fill="#005300" stroke="#005300" stroke-width="0.9"/>
<path d="M481.5 323.4L481.7 316.8L491.5 311.1L491.3 317.6Z" fill="#004d00" stroke="#004d00" stroke-width="0.9"/>
<path d="M360.2 201.7L358.5 207.7L361.2 210.2L364.5 205.6L366.4 207.0L369.8 196.5L368.3 195.4L366.8 194.2L365.4 192.8Z" fill="#0cc40c" stroke="#0cc40c" stroke-width="0.9"/>
<path d="M431.3 227.8L430.2 226.1L438.2 222.8L439.2 224.5Z" fill="#5f5f5f" stroke="#5f5f5f" stroke-width="0.9"/>
<path d="M425.1 220.3L427.3 212.1L435.3 208.9L433.1 217.0Z" fill="#484848" stroke="#484848" stroke-width="0.9"/>
<path d="M408.3 157.8L407.3 156.5L416.0 153.8L417.0 155.0Z" fill="#c1c1c1" stroke="#c1c1c1" stroke-width="0.9"/>
<path d="M411.2 167.0L411.1 165.4L419.7 162.5L419.8 164.1Z" fill="#4b4b4b" stroke="#4b4b4b" stroke-width="0.9"/>
<path d="M452.9 263.1L452.1 267.0L462.3 262.0L463.2 258.1Z" fill="#004400" stroke="#004400" stroke-width="0.9"/>
<path d="M431.1 271.1L425.4 270.7L436.0 265.6L441.7 266.0Z" fill="#005c00" stroke="#005c00" stroke-width="0.9"/>
<path d="M434.7 235.1L434.0 233.2L441.9 229.8L442.6 231.6Z" fill="#5f5f5f" stroke="#5f5f5f" stroke-width="0.9"/>
<path d="M349.4 127.0L348.4 127.4L359.1 124.6L360.1 124.2Z" fill="#00007d" stroke="#00007d" stroke-width="0.9"/>
<path d="M367.8 195.0L371.1 197.5L382.7 193.4L379.4 190.9Z" fill="#008a00" stroke="#008a00" stroke-width="0.9"/>
<path d="M409.1 159.2L408.3 157.8L417.0 155.0L417.8 156.4Z" fill="#acacac" stroke="#acacac" stroke-width="0.9"/>
<path d="M376.7 219.0L377.9 212.6L389.4 208.3L388.1 214.6Z" fill="#004d00" stroke="#004d00" stroke-width="0.9"/>
<path d="M411.1 165.4L410.8 163.8L419.5 161.0L419.7 162.5Z" fill="#4b4b4b" stroke="#4b4b4b" stroke-width="0.9"/>
<path d="M409.9 160.7L409.1 159.2L417.8 156.4L418.5 157.9Z" fill="#959595" stroke="#959595" stroke-width="0.9"/>
<path d="M378.0 141.1L375.0 142.8L386.5 139.5L389.5 137.8Z" fill="#004400" stroke="#004400" stroke-width="0.9"/>
<path d="M410.8 163.8L410.4 162.2L419.1 159.4L419.5 161.0Z" fill="#646464" stroke="#646464" stroke-width="0.9"/>
<path d="M410.4 162.2L409.9 160.7L418.5 157.9L419.1 159.4Z" fill="#7d7d7d" stroke="#7d7d7d" stroke-width="0.9"/>
<path d="M373.4 128.9L369.6 122.6L381.3 119.6L385.0 125.8Z" fill="#004d00" stroke="#004d00" stroke-width="0.9"/>
<path d="M396.5 117.0L393.4 116.9L404.6 114.0L407.6 114.1Z" fill="#00c200" stroke="#00c200" stroke-width="0.9"/>
<path d="M471.7 302.7L475.3 304.0L485.3 298.5L481.6 297.2Z" fill="#00b500" stroke="#00b500" stroke-width="0.9"/>
<path d="M348.4 127.4L349.7 134.2L346.6 135.6L342.8 129.9L341.8 130.4L336.6 118.9L340.2 117.1L343.9 115.5Z" fill="#0a0af0" stroke="#0a0af0" stroke-width="0.9"/>
<path d="M356.6 154.8L355.4 158.7L367.2 155.1L368.4 151.3Z" fill="#004400" stroke="#004400" stroke-width="0.9"/>
<path d="M426.6 260.5L427.2 258.9L435.2 255.2L434.6 256.8Z" fill="#5f5f5f" stroke="#5f5f5f" stroke-width="0.9"/>
<path d="M447.0 365.5L445.5 359.1L448.6 357.9L452.7 363.3L453.7 362.9L459.4 373.9L455.8 375.4L452.0 376.7Z" fill="#0a0af0" stroke="#0a0af0" stroke-width="0.9"/>
<path d="M389.9 220.3L385.7 211.5L394.2 208.3L398.4 217.0Z" fill="#484848" stroke="#484848" stroke-width="0.9"/>
<path d="M469.8 345.7L474.4 350.5L483.3 345.0L478.7 340.3Z" fill="#000069" stroke="#000069" stroke-width="0.9"/>
<path d="M444.2 245.5L436.5 242.7L444.4 239.2L452.0 242.0Z" fill="#585858" stroke="#585858" stroke-width="0.9"/>
<path d="M431.1 270.3L432.7 267.7L440.7 263.9L439.1 266.5Z" fill="#e0e0e0" stroke="#e0e0e0" stroke-width="0.9"/>
<path d="M427.3 212.1L424.4 210.0L432.5 206.8L435.3 208.9Z" fill="#e9e9e9" stroke="#e9e9e9" stroke-width="0.9"/>
<path d="M403.9 215.5L402.8 208.4L413.8 204.2L414.9 211.2ZM454.8 323.5L457.4 318.3L467.6 312.5L465.1 317.7Z" fill="#004d00" stroke="#004d00" stroke-width="0.9"/>
<path d="M432.7 267.7L426.6 260.5L434.6 256.8L440.7 263.9Z" fill="#4c4c4c" stroke="#4c4c4c" stroke-width="0.9"/>
<path d="M426.0 205.9L428.3 204.0L438.9 199.8L436.6 201.8Z" fill="#00b300" stroke="#00b300" stroke-width="0.9"/>
<path d="M379.3 289.9L380.9 281.6L389.5 277.6L387.9 285.8Z" fill="#484848" stroke="#484848" stroke-width="0.9"/>
<path d="M398.2 124.2L396.5 117.0L407.6 114.1L409.3 121.2Z" fill="#004d00" stroke="#004d00" stroke-width="0.9"/>
<path d="M347.6 146.9L342.1 143.9L341.0 147.2L345.9 152.0L345.4 154.3L355.1 159.7L355.5 157.9L356.1 156.2L356.7 154.6Z" fill="#0cc40c" stroke="#0cc40c" stroke-width="0.9"/>
<path d="M391.4 220.1L389.9 220.3L398.4 217.0L399.9 216.8Z" fill="#747474" stroke="#747474" stroke-width="0.9"/>
<path d="M389.8 155.2L388.6 155.4L397.6 152.6L398.8 152.4Z" fill="#fafafa" stroke="#fafafa" stroke-width="0.9"/>
<path d="M400.2 124.6L398.2 124.2L409.3 121.2L411.3 121.5Z" fill="#006600" stroke="#006600" stroke-width="0.9"/>
<path d="M454.3 259.5L452.9 263.1L463.2 258.1L464.6 254.6Z" fill="#004400" stroke="#004400" stroke-width="0.9"/>
<path d="M373.2 120.6L373.6 127.4L383.9 124.6L383.5 117.9Z" fill="#000069" stroke="#000069" stroke-width="0.9"/>
<path d="M428.3 204.0L425.0 197.5L435.6 193.4L438.9 199.8Z" fill="#004d00" stroke="#004d00" stroke-width="0.9"/>
<path d="M371.1 197.5L374.6 199.3L386.2 195.2L382.7 193.4Z" fill="#00a100" stroke="#00a100" stroke-width="0.9"/>
<path d="M430.2 226.1L434.4 219.6L442.4 216.3L438.2 222.8Z" fill="#484848" stroke="#484848" stroke-width="0.9"/>
<path d="M397.3 179.0L398.4 178.5L407.3 175.4L406.2 176.0Z" fill="#4b4b4b" stroke="#4b4b4b" stroke-width="0.9"/>
<path d="M396.8 196.6L400.1 195.8L411.2 191.7L407.9 192.6Z" fill="#00e100" stroke="#00e100" stroke-width="0.9"/>
<path d="M451.7 356.5L454.8 354.9L464.0 349.3L461.0 350.9Z" fill="#0404ee" stroke="#0404ee" stroke-width="0.9"/>
<path d="M417.2 280.0L419.5 278.2L427.6 274.3L425.4 276.0Z" fill="#e0e0e0" stroke="#e0e0e0" stroke-width="0.9"/>
<path d="M375.7 225.8L369.8 218.3L378.6 214.9L384.4 222.5Z" fill="#4b4b4b" stroke="#4b4b4b" stroke-width="0.9"/>
<path d="M425.0 197.5L426.3 195.9L437.0 191.9L435.6 193.4Z" fill="#005900" stroke="#005900" stroke-width="0.9"/>
<path d="M442.3 235.2L434.7 235.1L442.6 231.6L450.2 231.8Z" fill="#5c5c5c" stroke="#5c5c5c" stroke-width="0.9"/>
<path d="M438.2 225.3L431.3 227.8L439.2 224.5L446.1 222.0Z" fill="#5f5f5f" stroke="#5f5f5f" stroke-width="0.9"/>
<path d="M475.3 304.0L479.0 304.7L488.9 299.2L485.3 298.5Z" fill="#00c700" stroke="#00c700" stroke-width="0.9"/>
<path d="M412.5 220.2L411.0 219.3L419.2 216.0L420.7 216.9Z" fill="#6b6b6b" stroke="#6b6b6b" stroke-width="0.9"/>
<path d="M444.3 249.2L444.2 245.5L452.0 242.0L452.1 245.6Z" fill="#e0e0e0" stroke="#e0e0e0" stroke-width="0.9"/>
<path d="M358.3 151.4L356.6 154.8L368.4 151.3L370.2 148.0Z" fill="#004400" stroke="#004400" stroke-width="0.9"/>
<path d="M391.1 155.2L389.8 155.2L398.8 152.4L400.0 152.4Z" fill="#fafafa" stroke="#fafafa" stroke-width="0.9"/>
<path d="M434.0 233.2L439.9 228.8L447.8 225.4L441.9 229.8Z" fill="#484848" stroke="#484848" stroke-width="0.9"/>
<path d="M366.4 207.0L365.8 213.7L368.7 215.5L371.0 209.9L373.1 210.9L374.4 199.2L372.8 198.4L371.3 197.5L369.8 196.5Z" fill="#0cc40c" stroke="#0cc40c" stroke-width="0.9"/>
<path d="M449.1 245.7L443.9 241.3L454.2 236.7L459.4 241.0Z" fill="#005300" stroke="#005300" stroke-width="0.9"/>
<path d="M381.3 140.1L378.0 141.1L389.5 137.8L392.8 136.8Z" fill="#004400" stroke="#004400" stroke-width="0.9"/>
<path d="M398.4 178.5L399.4 177.7L408.2 174.7L407.3 175.4Z" fill="#4b4b4b" stroke="#4b4b4b" stroke-width="0.9"/>
<path d="M356.3 131.8L353.0 132.9L363.5 130.1L366.8 129.0Z" fill="#0404ee" stroke="#0404ee" stroke-width="0.9"/>
<path d="M419.5 278.2L414.9 269.6L423.1 265.8L427.6 274.3ZM411.0 219.3L410.9 210.2L419.1 207.0L419.2 216.0Z" fill="#484848" stroke="#484848" stroke-width="0.9"/>
<path d="M432.2 263.3L426.3 261.5L437.0 256.6L442.8 258.3Z" fill="#005a00" stroke="#005a00" stroke-width="0.9"/>
<path d="M392.4 155.4L391.1 155.2L400.0 152.4L401.3 152.6Z" fill="#fafafa" stroke="#fafafa" stroke-width="0.9"/>
<path d="M414.9 269.6L415.9 268.4L424.1 264.6L423.1 265.8Z" fill="#5f5f5f" stroke="#5f5f5f" stroke-width="0.9"/>
<path d="M498.5 297.6L501.0 296.0L503.1 294.0L504.9 291.6L506.4 288.9L507.5 285.9L508.3 282.7L508.6 279.3L508.5 275.7L508.0 272.1L507.1 268.5L505.8 264.9L504.2 261.5L502.2 258.2L499.9 255.3L497.3 252.6L494.6 250.2L491.6 248.3L488.6 246.7L485.5 245.6L482.4 245.0L479.3 244.9L476.4 245.2L473.6 246.0L471.0 247.2L468.6 248.9L466.6 250.9L464.8 253.3L463.4 256.1L462.4 259.0L461.7 262.3L461.4 265.6L461.6 269.1L462.1 272.7L463.0 276.2L464.3 279.6L465.9 283.0L467.8 286.1L470.0 289.1L472.5 291.7L475.2 294.0L478.0 296.0L481.0 297.5L484.1 298.7L487.1 299.4L490.1 299.6L493.1 299.4L495.9 298.7Z" fill="#004a00" stroke="#004a00" stroke-width="0.9"/>
<path d="M399.4 177.7L400.2 176.7L409.1 173.7L408.2 174.7Z" fill="#4b4b4b" stroke="#4b4b4b" stroke-width="0.9"/>
<path d="M410.9 210.2L407.8 209.0L416.1 205.8L419.1 207.0Z" fill="#efefef" stroke="#efefef" stroke-width="0.9"/>
<path d="M454.8 354.9L459.2 360.1L468.3 354.4L464.0 349.3Z" fill="#000069" stroke="#000069" stroke-width="0.9"/>
<path d="M362.4 233.5L355.4 227.7L364.3 224.3L371.3 230.0Z" fill="#515151" stroke="#515151" stroke-width="0.9"/>
<path d="M428.4 253.8L428.6 252.0L436.6 248.4L436.4 250.2Z" fill="#5f5f5f" stroke="#5f5f5f" stroke-width="0.9"/>
<path d="M434.4 219.6L432.0 216.7L440.0 213.4L442.4 216.3Z" fill="#e3e3e3" stroke="#e3e3e3" stroke-width="0.9"/>
<path d="M456.2 256.4L454.3 259.5L464.6 254.6L466.4 251.5Z" fill="#004400" stroke="#004400" stroke-width="0.9"/>
<path d="M374.6 199.3L378.2 200.5L389.8 196.4L386.2 195.2Z" fill="#00b500" stroke="#00b500" stroke-width="0.9"/>
<path d="M444.0 289.2L446.0 293.3L456.4 287.9L454.4 283.9Z" fill="#004400" stroke="#004400" stroke-width="0.9"/>
<path d="M393.7 155.8L392.4 155.4L401.3 152.6L402.6 153.0Z" fill="#fafafa" stroke="#fafafa" stroke-width="0.9"/>
<path d="M377.0 120.3L374.1 120.9L385.7 117.9L388.6 117.3Z" fill="#00c400" stroke="#00c400" stroke-width="0.9"/>
<path d="M446.0 293.3L448.4 297.2L458.8 291.7L456.4 287.9Z" fill="#004400" stroke="#004400" stroke-width="0.9"/>
<path d="M489.5 323.3L488.6 316.4L498.3 310.7L499.3 317.5Z" fill="#004d00" stroke="#004d00" stroke-width="0.9"/>
<path d="M355.9 135.5L351.2 130.1L363.2 126.9L367.8 132.3Z" fill="#005000" stroke="#005000" stroke-width="0.9"/>
<path d="M400.2 176.7L401.0 175.6L409.8 172.6L409.1 173.7Z" fill="#4b4b4b" stroke="#4b4b4b" stroke-width="0.9"/>
<path d="M360.5 110.7L355.9 111.6L380.3 105.7L384.8 104.8Z" fill="#0606f2" stroke="#0606f2" stroke-width="0.9"/>
<path d="M442.6 284.9L444.0 289.2L454.4 283.9L453.0 279.6Z" fill="#004400" stroke="#004400" stroke-width="0.9"/>
<path d="M459.2 360.1L460.1 359.6L469.3 353.9L468.3 354.4Z" fill="#00007d" stroke="#00007d" stroke-width="0.9"/>
<path d="M479.0 304.7L482.7 304.7L492.5 299.2L488.9 299.2Z" fill="#00d600" stroke="#00d600" stroke-width="0.9"/>
<path d="M404.3 286.3L401.7 277.0L410.0 273.1L412.7 282.3Z" fill="#484848" stroke="#484848" stroke-width="0.9"/>
<path d="M443.3 239.0L442.3 235.2L450.2 231.8L451.1 235.5Z" fill="#e0e0e0" stroke="#e0e0e0" stroke-width="0.9"/>
<path d="M360.6 148.5L358.3 151.4L370.2 148.0L372.4 145.1Z" fill="#004400" stroke="#004400" stroke-width="0.9"/>
<path d="M355.4 125.0L356.3 131.8L366.8 129.0L366.0 122.3Z" fill="#000069" stroke="#000069" stroke-width="0.9"/>
<path d="M463.0 327.4L464.5 321.3L474.6 315.5L473.2 321.5Z" fill="#004d00" stroke="#004d00" stroke-width="0.9"/>
<path d="M448.4 297.2L451.2 300.7L461.5 295.2L458.8 291.7Z" fill="#005800" stroke="#005800" stroke-width="0.9"/>
<path d="M351.1 140.5L345.9 136.3L344.3 139.0L348.5 144.8L347.6 146.9L356.7 154.6L357.4 153.0L358.2 151.6L359.2 150.2Z" fill="#0cc40c" stroke="#0cc40c" stroke-width="0.9"/>
<path d="M361.1 261.9L355.5 266.2L357.3 269.7L363.9 267.4L365.0 269.1L380.6 254.9L380.6 254.9L380.6 254.9L380.6 254.8Z" fill="#e4e4e4" stroke="#e4e4e4" stroke-width="0.9"/>
<path d="M408.4 214.1L411.1 212.8L422.0 208.5L419.4 209.8Z" fill="#00b300" stroke="#00b300" stroke-width="0.9"/>
<path d="M384.7 220.5L384.8 213.6L396.2 209.3L396.1 216.1Z" fill="#004d00" stroke="#004d00" stroke-width="0.9"/>
<path d="M394.9 156.4L393.7 155.8L402.6 153.0L403.9 153.6Z" fill="#fafafa" stroke="#fafafa" stroke-width="0.9"/>
<path d="M358.8 254.2L352.0 256.0L353.0 259.7L360.4 260.0L361.1 261.9L380.6 254.8L380.6 254.8L380.6 254.8L380.5 254.8Z" fill="#e4e4e4" stroke="#e4e4e4" stroke-width="0.9"/>
<path d="M435.7 259.1L428.4 253.8L436.4 250.2L443.6 255.4Z" fill="#525252" stroke="#525252" stroke-width="0.9"/>
<path d="M439.9 228.8L438.2 225.3L446.1 222.0L447.8 225.4Z" fill="#e0e0e0" stroke="#e0e0e0" stroke-width="0.9"/>
<path d="M418.4 224.9L417.0 223.6L425.1 220.3L426.5 221.6Z" fill="#656565" stroke="#656565" stroke-width="0.9"/>
<path d="M401.0 175.6L401.5 174.3L410.4 171.3L409.8 172.6Z" fill="#4b4b4b" stroke="#4b4b4b" stroke-width="0.9"/>
<path d="M441.7 280.6L442.6 284.9L453.0 279.6L452.2 275.3Z" fill="#004400" stroke="#004400" stroke-width="0.9"/>
<path d="M393.9 211.0L390.9 210.8L399.4 207.6L402.4 207.8Z" fill="#f3f3f3" stroke="#f3f3f3" stroke-width="0.9"/>
<path d="M429.5 316.7L433.9 313.7L444.6 307.9L440.2 310.9Z" fill="#004d00" stroke="#004d00" stroke-width="0.9"/>
<path d="M451.2 300.7L454.4 303.8L464.7 298.2L461.5 295.2Z" fill="#007100" stroke="#007100" stroke-width="0.9"/>
<path d="M404.6 118.9L401.5 117.9L412.6 115.0L415.7 115.9Z" fill="#00bf00" stroke="#00bf00" stroke-width="0.9"/>
<path d="M379.8 127.2L377.0 120.3L388.6 117.3L391.4 124.1Z" fill="#004d00" stroke="#004d00" stroke-width="0.9"/>
<path d="M365.0 269.1L361.0 275.5L363.4 278.4L368.7 273.7L370.1 275.1L380.6 254.9L380.6 254.9L380.6 254.9L380.6 254.9Z" fill="#e4e4e4" stroke="#e4e4e4" stroke-width="0.9"/>
<path d="M470.3 368.0L474.1 365.4L492.2 353.7L488.5 356.3Z" fill="#06064a" stroke="#06064a" stroke-width="0.9"/>
<path d="M396.2 157.2L394.9 156.4L403.9 153.6L405.1 154.4Z" fill="#f3f3f3" stroke="#f3f3f3" stroke-width="0.9"/>
<path d="M397.8 220.8L396.2 220.4L404.6 217.1L406.2 217.4Z" fill="#707070" stroke="#707070" stroke-width="0.9"/>
<path d="M396.2 220.4L393.9 211.0L402.4 207.8L404.6 217.1Z" fill="#484848" stroke="#484848" stroke-width="0.9"/>
<path d="M401.7 277.0L403.0 276.3L411.4 272.4L410.0 273.1Z" fill="#5f5f5f" stroke="#5f5f5f" stroke-width="0.9"/>
<path d="M401.5 174.3L402.0 172.9L410.8 170.0L410.4 171.3Z" fill="#4b4b4b" stroke="#4b4b4b" stroke-width="0.9"/>
<path d="M434.9 262.4L435.7 259.1L443.6 255.4L442.8 258.6Z" fill="#e0e0e0" stroke="#e0e0e0" stroke-width="0.9"/>
<path d="M405.1 126.1L404.6 118.9L415.7 115.9L416.2 123.0Z" fill="#004d00" stroke="#004d00" stroke-width="0.9"/>
<path d="M407.2 127.0L405.1 126.1L416.2 123.0L418.2 123.9Z" fill="#006400" stroke="#006400" stroke-width="0.9"/>
<path d="M358.2 246.4L350.8 245.6L350.9 249.3L358.5 252.2L358.8 254.2L380.5 254.8L380.5 254.8L380.5 254.8L380.5 254.8Z" fill="#e4e4e4" stroke="#e4e4e4" stroke-width="0.9"/>
<path d="M428.5 246.3L428.2 244.4L436.2 240.8L436.5 242.7Z" fill="#5f5f5f" stroke="#5f5f5f" stroke-width="0.9"/>
<path d="M387.8 291.6L387.2 282.4L395.8 278.4L396.4 287.5Z" fill="#484848" stroke="#484848" stroke-width="0.9"/>
<path d="M475.3 341.5L480.2 346.0L489.0 340.5L484.2 336.1Z" fill="#000069" stroke="#000069" stroke-width="0.9"/>
<path d="M355.4 125.0L356.3 131.8L353.0 132.9L349.4 127.0L348.4 127.4L343.9 115.5L347.6 114.0L351.5 112.8Z" fill="#0a0af0" stroke="#0a0af0" stroke-width="0.9"/>
<path d="M458.6 253.8L456.2 256.4L466.4 251.5L468.8 248.9Z" fill="#004400" stroke="#004400" stroke-width="0.9"/>
<path d="M431.6 200.2L433.3 197.6L443.9 193.6L442.2 196.1Z" fill="#00b300" stroke="#00b300" stroke-width="0.9"/>
<path d="M411.1 212.8L408.8 205.9L419.8 201.7L422.0 208.5Z" fill="#004d00" stroke="#004d00" stroke-width="0.9"/>
<path d="M377.0 214.8L374.3 215.7L383.0 212.4L385.7 211.5Z" fill="#f6f6f6" stroke="#f6f6f6" stroke-width="0.9"/>
<path d="M373.1 210.9L373.6 217.9L376.7 219.0L377.9 212.6L380.0 213.1L379.2 200.7L377.6 200.3L376.0 199.8L374.4 199.2Z" fill="#0cc40c" stroke="#0cc40c" stroke-width="0.9"/>
<path d="M441.3 276.3L441.7 280.6L452.2 275.3L451.8 271.1Z" fill="#004400" stroke="#004400" stroke-width="0.9"/>
<path d="M378.2 200.5L381.8 201.0L393.3 196.8L389.8 196.4Z" fill="#00c700" stroke="#00c700" stroke-width="0.9"/>
<path d="M453.7 362.9L451.7 356.5L454.8 354.9L459.2 360.1L460.1 359.6L466.5 370.3L463.0 372.2L459.4 373.9Z" fill="#0a0af0" stroke="#0a0af0" stroke-width="0.9"/>
<path d="M397.3 158.2L396.2 157.2L405.1 154.4L406.2 155.4Z" fill="#e5e5e5" stroke="#e5e5e5" stroke-width="0.9"/>
<path d="M429.1 191.8L430.1 189.9L440.8 185.9L439.8 187.8Z" fill="#005900" stroke="#005900" stroke-width="0.9"/>
<path d="M402.0 172.9L402.2 171.5L411.1 168.5L410.8 170.0Z" fill="#4b4b4b" stroke="#4b4b4b" stroke-width="0.9"/>
<path d="M433.3 197.6L429.1 191.8L439.8 187.8L443.9 193.6Z" fill="#004e00" stroke="#004e00" stroke-width="0.9"/>
<path d="M381.9 127.0L379.8 127.2L391.4 124.1L393.4 123.9Z" fill="#006900" stroke="#006900" stroke-width="0.9"/>
<path d="M420.6 284.6L415.2 285.6L426.1 280.3L431.5 279.3Z" fill="#005e00" stroke="#005e00" stroke-width="0.9"/>
<path d="M454.4 303.8L457.8 306.4L468.1 300.7L464.7 298.2Z" fill="#008a00" stroke="#008a00" stroke-width="0.9"/>
<path d="M423.2 231.2L422.1 229.5L430.2 226.1L431.3 227.8Z" fill="#5f5f5f" stroke="#5f5f5f" stroke-width="0.9"/>
<path d="M417.0 223.6L419.1 215.4L427.3 212.1L425.1 220.3Z" fill="#484848" stroke="#484848" stroke-width="0.9"/>
<path d="M398.4 159.4L397.3 158.2L406.2 155.4L407.3 156.5Z" fill="#d4d4d4" stroke="#d4d4d4" stroke-width="0.9"/>
<path d="M482.7 304.7L486.1 304.1L496.0 298.5L492.5 299.2Z" fill="#00e100" stroke="#00e100" stroke-width="0.9"/>
<path d="M402.2 171.5L402.3 169.9L411.2 167.0L411.1 168.5Z" fill="#4b4b4b" stroke="#4b4b4b" stroke-width="0.9"/>
<path d="M363.2 146.2L360.6 148.5L372.4 145.1L375.0 142.8Z" fill="#004400" stroke="#004400" stroke-width="0.9"/>
<path d="M380.6 119.7L380.6 126.4L390.9 123.7L390.9 117.0Z" fill="#000069" stroke="#000069" stroke-width="0.9"/>
<path d="M370.1 275.1L368.1 283.1L371.0 285.4L374.6 278.6L376.1 279.5L380.6 254.9L380.6 254.9L380.6 254.9L380.6 254.9Z" fill="#e4e4e4" stroke="#e4e4e4" stroke-width="0.9"/>
<path d="M426.7 238.6L426.0 236.7L434.0 233.2L434.7 235.1Z" fill="#5f5f5f" stroke="#5f5f5f" stroke-width="0.9"/>
<path d="M408.8 205.9L410.4 204.8L421.4 200.6L419.8 201.7Z" fill="#005900" stroke="#005900" stroke-width="0.9"/>
<path d="M399.4 160.7L398.4 159.4L407.3 156.5L408.3 157.8Z" fill="#c1c1c1" stroke="#c1c1c1" stroke-width="0.9"/>
<path d="M402.3 169.9L402.2 168.3L411.1 165.4L411.2 167.0Z" fill="#4b4b4b" stroke="#4b4b4b" stroke-width="0.9"/>
<path d="M436.5 323.8L440.1 319.6L450.7 313.8L447.1 318.0Z" fill="#004d00" stroke="#004d00" stroke-width="0.9"/>
<path d="M434.7 256.4L429.0 253.2L439.7 248.3L445.3 251.5Z" fill="#005700" stroke="#005700" stroke-width="0.9"/>
<path d="M418.4 264.3L419.0 262.7L427.2 258.9L426.6 260.5Z" fill="#5f5f5f" stroke="#5f5f5f" stroke-width="0.9"/>
<path d="M381.3 223.7L377.0 214.8L385.7 211.5L389.9 220.3Z" fill="#484848" stroke="#484848" stroke-width="0.9"/>
<path d="M400.3 162.1L399.4 160.7L408.3 157.8L409.1 159.2Z" fill="#acacac" stroke="#acacac" stroke-width="0.9"/>
<path d="M454.1 241.2L449.5 235.8L459.9 231.2L464.4 236.5Z" fill="#005000" stroke="#005000" stroke-width="0.9"/>
<path d="M402.2 168.3L402.0 166.7L410.8 163.8L411.1 165.4Z" fill="#4b4b4b" stroke="#4b4b4b" stroke-width="0.9"/>
<path d="M359.5 239.4L351.9 236.0L351.2 239.3L358.4 244.6L358.2 246.4L380.5 254.8L380.5 254.8L380.5 254.8L380.6 254.8Z" fill="#e4e4e4" stroke="#e4e4e4" stroke-width="0.9"/>
<path d="M441.6 272.1L441.3 276.3L451.8 271.1L452.1 267.0Z" fill="#004400" stroke="#004400" stroke-width="0.9"/>
<path d="M401.0 163.6L400.3 162.1L409.1 159.2L409.9 160.7Z" fill="#959595" stroke="#959595" stroke-width="0.9"/>
<path d="M402.0 166.7L401.6 165.1L410.4 162.2L410.8 163.8Z" fill="#646464" stroke="#646464" stroke-width="0.9"/>
<path d="M401.6 165.1L401.0 163.6L409.9 160.7L410.4 162.2Z" fill="#7d7d7d" stroke="#7d7d7d" stroke-width="0.9"/>
<path d="M365.1 110.1L360.5 110.7L384.8 104.8L389.4 104.2Z" fill="#0606f2" stroke="#0606f2" stroke-width="0.9"/>
<path d="M423.0 274.2L424.6 271.5L432.7 267.7L431.1 270.3Z" fill="#e0e0e0" stroke="#e0e0e0" stroke-width="0.9"/>
<path d="M436.2 249.2L428.5 246.3L436.5 242.7L444.2 245.5Z" fill="#585858" stroke="#585858" stroke-width="0.9"/>
<path d="M424.6 271.5L418.4 264.3L426.6 260.5L432.7 267.7Z" fill="#4c4c4c" stroke="#4c4c4c" stroke-width="0.9"/>
<path d="M419.1 215.4L416.3 213.2L424.4 210.0L427.3 212.1Z" fill="#e9e9e9" stroke="#e9e9e9" stroke-width="0.9"/>
<path d="M457.8 306.4L461.4 308.3L471.7 302.7L468.1 300.7Z" fill="#00a100" stroke="#00a100" stroke-width="0.9"/>
<path d="M382.8 223.5L381.3 223.7L389.9 220.3L391.4 220.1Z" fill="#747474" stroke="#747474" stroke-width="0.9"/>
<path d="M461.4 251.7L458.6 253.8L468.8 248.9L471.6 246.9Z" fill="#004400" stroke="#004400" stroke-width="0.9"/>
<path d="M355.9 135.5L351.2 130.1L349.1 132.2L352.4 138.9L351.1 140.5L359.2 150.2L360.2 148.9L361.3 147.8L362.5 146.7Z" fill="#0cc40c" stroke="#0cc40c" stroke-width="0.9"/>
<path d="M381.8 201.0L385.3 200.8L396.8 196.6L393.3 196.8Z" fill="#00d600" stroke="#00d600" stroke-width="0.9"/>
<path d="M366.8 229.3L360.9 221.6L369.8 218.3L375.7 225.8Z" fill="#4b4b4b" stroke="#4b4b4b" stroke-width="0.9"/>
<path d="M422.1 229.5L426.3 222.9L434.4 219.6L430.2 226.1Z" fill="#484848" stroke="#484848" stroke-width="0.9"/>
<path d="M474.1 365.4L477.7 362.5L495.7 350.9L492.2 353.7Z" fill="#06064b" stroke="#06064b" stroke-width="0.9"/>
<path d="M408.9 284.0L411.2 282.2L419.5 278.2L417.2 280.0Z" fill="#e0e0e0" stroke="#e0e0e0" stroke-width="0.9"/>
<path d="M471.4 329.3L471.6 322.7L481.7 316.8L481.5 323.4Z" fill="#004d00" stroke="#004d00" stroke-width="0.9"/>
<path d="M380.6 158.0L379.4 158.2L388.6 155.4L389.8 155.2Z" fill="#fafafa" stroke="#fafafa" stroke-width="0.9"/>
<path d="M460.6 351.3L465.3 356.2L474.4 350.5L469.8 345.7Z" fill="#000069" stroke="#000069" stroke-width="0.9"/>
<path d="M376.1 279.5L376.2 288.6L379.3 289.9L380.9 281.6L382.5 282.0L380.6 254.9L380.6 254.9L380.6 254.9L380.6 254.9Z" fill="#e4e4e4" stroke="#e4e4e4" stroke-width="0.9"/>
<path d="M420.2 276.3L414.4 275.9L425.4 270.7L431.1 271.1Z" fill="#005c00" stroke="#005c00" stroke-width="0.9"/>
<path d="M388.3 182.1L389.4 181.5L398.4 178.5L397.3 179.0Z" fill="#4b4b4b" stroke="#4b4b4b" stroke-width="0.9"/>
<path d="M486.1 304.1L489.3 302.8L499.1 297.2L496.0 298.5Z" fill="#00e100" stroke="#00e100" stroke-width="0.9"/>
<path d="M442.4 268.2L441.6 272.1L452.1 267.0L452.9 263.1Z" fill="#004400" stroke="#004400" stroke-width="0.9"/>
<path d="M497.1 321.1L494.9 314.3L504.6 308.6L506.8 315.3Z" fill="#004d00" stroke="#004d00" stroke-width="0.9"/>
<path d="M404.1 223.6L402.6 222.7L411.0 219.3L412.5 220.2Z" fill="#6b6b6b" stroke="#6b6b6b" stroke-width="0.9"/>
<path d="M366.2 144.5L363.2 146.2L375.0 142.8L378.0 141.1Z" fill="#004400" stroke="#004400" stroke-width="0.9"/>
<path d="M434.3 238.8L426.7 238.6L434.7 235.1L442.3 235.2Z" fill="#5c5c5c" stroke="#5c5c5c" stroke-width="0.9"/>
<path d="M430.1 228.7L423.2 231.2L431.3 227.8L438.2 225.3Z" fill="#5f5f5f" stroke="#5f5f5f" stroke-width="0.9"/>
<path d="M436.3 252.8L436.2 249.2L444.2 245.5L444.3 249.2Z" fill="#e0e0e0" stroke="#e0e0e0" stroke-width="0.9"/>
<path d="M361.5 132.1L357.7 125.7L369.6 122.6L373.4 128.9Z" fill="#004d00" stroke="#004d00" stroke-width="0.9"/>
<path d="M413.8 131.1L411.9 129.7L422.9 126.6L424.8 128.0Z" fill="#006000" stroke="#006000" stroke-width="0.9"/>
<path d="M426.0 236.7L431.9 232.2L439.9 228.8L434.0 233.2Z" fill="#484848" stroke="#484848" stroke-width="0.9"/>
<path d="M385.0 120.0L381.9 119.9L393.4 116.9L396.5 117.0Z" fill="#00c200" stroke="#00c200" stroke-width="0.9"/>
<path d="M362.4 233.5L355.4 227.7L353.9 230.5L360.0 237.8L359.5 239.4L380.6 254.8L380.6 254.8L380.6 254.8L380.6 254.7Z" fill="#e4e4e4" stroke="#e4e4e4" stroke-width="0.9"/>
<path d="M461.4 308.3L465.1 309.7L475.3 304.0L471.7 302.7Z" fill="#00b500" stroke="#00b500" stroke-width="0.9"/>
<path d="M411.2 282.2L406.5 273.5L414.9 269.6L419.5 278.2Z" fill="#484848" stroke="#484848" stroke-width="0.9"/>
<path d="M381.9 158.0L380.6 158.0L389.8 155.2L391.1 155.2Z" fill="#fafafa" stroke="#fafafa" stroke-width="0.9"/>
<path d="M432.0 184.9L432.6 182.7L443.3 178.8L442.7 181.0Z" fill="#005900" stroke="#005900" stroke-width="0.9"/>
<path d="M362.6 123.3L363.1 130.2L373.6 127.4L373.2 120.6Z" fill="#000069" stroke="#000069" stroke-width="0.9"/>
<path d="M411.9 129.7L412.6 122.8L423.6 119.8L422.9 126.6Z" fill="#004d00" stroke="#004d00" stroke-width="0.9"/>
<path d="M389.4 181.5L390.3 180.8L399.4 177.7L398.4 178.5Z" fill="#4b4b4b" stroke="#4b4b4b" stroke-width="0.9"/>
<path d="M412.6 122.8L409.6 121.1L420.7 118.1L423.6 119.8Z" fill="#00bc00" stroke="#00bc00" stroke-width="0.9"/>
<path d="M392.5 219.9L391.4 212.8L402.8 208.4L403.9 215.5ZM444.3 329.5L446.8 324.2L457.4 318.3L454.8 323.5Z" fill="#004d00" stroke="#004d00" stroke-width="0.9"/>
<path d="M380.0 213.1L381.7 220.2L384.7 220.5L384.8 213.6L386.8 213.5L384.0 201.0L382.4 201.0L380.8 200.9L379.2 200.7Z" fill="#0cc40c" stroke="#0cc40c" stroke-width="0.9"/>
<path d="M402.6 222.7L402.5 213.4L410.9 210.2L411.0 219.3Z" fill="#484848" stroke="#484848" stroke-width="0.9"/>
<path d="M406.5 273.5L407.5 272.3L415.9 268.4L414.9 269.6Z" fill="#5f5f5f" stroke="#5f5f5f" stroke-width="0.9"/>
<path d="M415.1 210.2L417.3 208.2L428.3 204.0L426.0 205.9Z" fill="#00b300" stroke="#00b300" stroke-width="0.9"/>
<path d="M437.0 189.8L432.0 184.9L442.7 181.0L447.6 185.8Z" fill="#005200" stroke="#005200" stroke-width="0.9"/>
<path d="M386.7 127.3L385.0 120.0L396.5 117.0L398.2 124.2Z" fill="#004d00" stroke="#004d00" stroke-width="0.9"/>
<path d="M402.5 213.4L399.4 212.2L407.8 209.0L410.9 210.2Z" fill="#efefef" stroke="#efefef" stroke-width="0.9"/>
<path d="M435.8 192.9L437.0 189.8L447.6 185.8L446.4 188.9Z" fill="#00b300" stroke="#00b300" stroke-width="0.9"/>
<path d="M420.2 257.6L420.4 255.7L428.6 252.0L428.4 253.8Z" fill="#5f5f5f" stroke="#5f5f5f" stroke-width="0.9"/>
<path d="M471.3 265.3L470.2 265.8L478.2 261.8L479.3 261.3ZM383.2 158.2L381.9 158.0L391.1 155.2L392.4 155.4Z" fill="#fafafa" stroke="#fafafa" stroke-width="0.9"/>
<path d="M426.3 222.9L423.9 220.0L432.0 216.7L434.4 219.6Z" fill="#e3e3e3" stroke="#e3e3e3" stroke-width="0.9"/>
<path d="M390.3 180.8L391.2 179.8L400.2 176.7L399.4 177.7ZM482.2 287.8L483.3 287.1L491.1 282.9L490.1 283.6Z" fill="#4b4b4b" stroke="#4b4b4b" stroke-width="0.9"/>
<path d="M388.8 127.7L386.7 127.3L398.2 124.2L400.2 124.6Z" fill="#006600" stroke="#006600" stroke-width="0.9"/>
<path d="M443.8 264.6L442.4 268.2L452.9 263.1L454.3 259.5Z" fill="#004400" stroke="#004400" stroke-width="0.9"/>
<path d="M385.3 200.8L388.7 199.9L400.1 195.8L396.8 196.6Z" fill="#00e100" stroke="#00e100" stroke-width="0.9"/>
<path d="M369.9 109.7L365.1 110.1L389.4 104.2L394.0 103.8Z" fill="#0606f2" stroke="#0606f2" stroke-width="0.9"/>
<path d="M480.4 336.6L485.5 340.8L494.3 335.4L489.3 331.3Z" fill="#000069" stroke="#000069" stroke-width="0.9"/>
<path d="M417.3 208.2L414.0 201.6L425.0 197.5L428.3 204.0Z" fill="#004d00" stroke="#004d00" stroke-width="0.9"/>
<path d="M395.8 290.4L393.1 281.0L401.7 277.0L404.3 286.3Z" fill="#484848" stroke="#484848" stroke-width="0.9"/>
<path d="M384.5 158.6L383.2 158.2L392.4 155.4L393.7 155.8Z" fill="#fafafa" stroke="#fafafa" stroke-width="0.9"/>
<path d="M382.5 282.0L384.8 291.3L387.8 291.6L387.2 282.4L388.8 282.3L380.7 254.9L380.6 254.9L380.6 254.9L380.6 254.9Z" fill="#e4e4e4" stroke="#e4e4e4" stroke-width="0.9"/>
<path d="M472.6 265.0L471.3 265.3L479.3 261.3L480.6 261.0Z" fill="#fafafa" stroke="#fafafa" stroke-width="0.9"/>
<path d="M414.0 201.6L415.4 200.1L426.3 195.9L425.0 197.5Z" fill="#005900" stroke="#005900" stroke-width="0.9"/>
<path d="M435.3 242.5L434.3 238.8L442.3 235.2L443.3 239.0Z" fill="#e0e0e0" stroke="#e0e0e0" stroke-width="0.9"/>
<path d="M362.6 123.3L363.1 130.2L359.6 130.9L356.4 124.7L355.4 125.0L351.5 112.8L355.4 111.7L359.4 110.9Z" fill="#0a0af0" stroke="#0a0af0" stroke-width="0.9"/>
<path d="M391.2 179.8L391.9 178.7L401.0 175.6L400.2 176.7Z" fill="#4b4b4b" stroke="#4b4b4b" stroke-width="0.9"/>
<path d="M465.1 309.7L468.9 310.4L479.0 304.7L475.3 304.0Z" fill="#00c700" stroke="#00c700" stroke-width="0.9"/>
<path d="M460.1 359.6L457.8 353.2L460.6 351.3L465.3 356.2L466.2 355.6L473.2 366.0L469.9 368.3L466.5 370.3Z" fill="#0a0af0" stroke="#0a0af0" stroke-width="0.9"/>
<path d="M369.5 143.5L366.2 144.5L378.0 141.1L381.3 140.1Z" fill="#004400" stroke="#004400" stroke-width="0.9"/>
<path d="M483.3 287.1L484.2 286.2L492.1 282.0L491.1 282.9Z" fill="#4b4b4b" stroke="#4b4b4b" stroke-width="0.9"/>
<path d="M427.6 262.9L420.2 257.6L428.4 253.8L435.7 259.1Z" fill="#525252" stroke="#525252" stroke-width="0.9"/>
<path d="M438.5 250.5L433.2 246.1L443.9 241.3L449.1 245.7Z" fill="#005300" stroke="#005300" stroke-width="0.9"/>
<path d="M410.0 228.4L408.6 227.0L417.0 223.6L418.4 224.9Z" fill="#656565" stroke="#656565" stroke-width="0.9"/>
<path d="M388.3 119.5L387.9 126.1L398.0 123.4L398.5 116.9Z" fill="#000069" stroke="#000069" stroke-width="0.9"/>
<path d="M385.3 214.3L382.2 214.1L390.9 210.8L393.9 211.0Z" fill="#f3f3f3" stroke="#f3f3f3" stroke-width="0.9"/>
<path d="M431.9 232.2L430.1 228.7L438.2 225.3L439.9 228.8Z" fill="#e0e0e0" stroke="#e0e0e0" stroke-width="0.9"/>
<path d="M477.7 362.5L481.1 359.4L499.2 347.9L495.7 350.9Z" fill="#06064d" stroke="#06064d" stroke-width="0.9"/>
<path d="M385.8 159.3L384.5 158.6L393.7 155.8L394.9 156.4Z" fill="#fafafa" stroke="#fafafa" stroke-width="0.9"/>
<path d="M419.9 136.8L418.2 135.0L429.1 131.8L430.8 133.6Z" fill="#005d00" stroke="#005d00" stroke-width="0.9"/>
<path d="M473.8 264.8L472.6 265.0L480.6 261.0L481.8 260.9Z" fill="#fafafa" stroke="#fafafa" stroke-width="0.9"/>
<path d="M366.8 229.3L360.9 221.6L358.7 223.5L363.4 232.3L362.4 233.5L380.6 254.7L380.6 254.7L380.6 254.7L380.6 254.7Z" fill="#e4e4e4" stroke="#e4e4e4" stroke-width="0.9"/>
<path d="M391.9 178.7L392.5 177.4L401.5 174.3L401.0 175.6Z" fill="#4b4b4b" stroke="#4b4b4b" stroke-width="0.9"/>
<path d="M393.1 281.0L394.4 280.3L403.0 276.3L401.7 277.0Z" fill="#5f5f5f" stroke="#5f5f5f" stroke-width="0.9"/>
<path d="M421.2 268.5L415.3 266.6L426.3 261.5L432.2 263.3Z" fill="#005a00" stroke="#005a00" stroke-width="0.9"/>
<path d="M389.2 224.2L387.5 223.8L396.2 220.4L397.8 220.8Z" fill="#707070" stroke="#707070" stroke-width="0.9"/>
<path d="M460.1 238.3L456.3 232.0L466.6 227.5L470.4 233.6Z" fill="#004d00" stroke="#004d00" stroke-width="0.9"/>
<path d="M387.5 223.8L385.3 214.3L393.9 211.0L396.2 220.4Z" fill="#484848" stroke="#484848" stroke-width="0.9"/>
<path d="M433.5 177.1L433.7 174.6L444.4 170.8L444.2 173.3Z" fill="#005900" stroke="#005900" stroke-width="0.9"/>
<path d="M426.8 266.2L427.6 262.9L435.7 259.1L434.9 262.4Z" fill="#e0e0e0" stroke="#e0e0e0" stroke-width="0.9"/>
<path d="M484.2 286.2L485.0 285.2L492.8 281.0L492.1 282.0Z" fill="#4b4b4b" stroke="#4b4b4b" stroke-width="0.9"/>
<path d="M361.5 132.1L357.7 125.7L355.1 127.2L357.5 134.3L355.9 135.5L362.5 146.7L363.7 145.8L365.0 145.0L366.4 144.4Z" fill="#0cc40c" stroke="#0cc40c" stroke-width="0.9"/>
<path d="M368.1 218.1L365.4 219.1L374.3 215.7L377.0 214.8Z" fill="#f6f6f6" stroke="#f6f6f6" stroke-width="0.9"/>
<path d="M420.3 250.0L420.0 248.0L428.2 244.4L428.5 246.3Z" fill="#5f5f5f" stroke="#5f5f5f" stroke-width="0.9"/>
<path d="M387.0 160.1L385.8 159.3L394.9 156.4L396.2 157.2Z" fill="#f3f3f3" stroke="#f3f3f3" stroke-width="0.9"/>
<path d="M501.3 318.8L503.7 317.1L513.4 311.3L511.0 313.1Z" fill="#00b300" stroke="#00b300" stroke-width="0.9"/>
<path d="M425.7 301.2L421.7 304.9L423.6 308.3L428.7 306.6L430.2 308.8L437.5 302.6L436.4 300.9L435.3 299.1L434.4 297.3Z" fill="#0cc40c" stroke="#0cc40c" stroke-width="0.9"/>
<path d="M392.5 177.4L392.9 176.0L402.0 172.9L401.5 174.3Z" fill="#4b4b4b" stroke="#4b4b4b" stroke-width="0.9"/>
<path d="M445.7 261.4L443.8 264.6L454.3 259.5L456.2 256.4Z" fill="#004400" stroke="#004400" stroke-width="0.9"/>
<path d="M475.2 264.9L473.8 264.8L481.8 260.9L483.1 260.9Z" fill="#fafafa" stroke="#fafafa" stroke-width="0.9"/>
<path d="M418.2 135.0L420.1 128.7L431.1 125.6L429.1 131.8Z" fill="#004d00" stroke="#004d00" stroke-width="0.9"/>
<path d="M422.5 293.0L417.6 295.4L419.0 299.1L424.6 298.8L425.7 301.2L434.4 297.3L433.5 295.4L432.8 293.5L432.1 291.5Z" fill="#0cc40c" stroke="#0cc40c" stroke-width="0.9"/>
<path d="M433.3 294.7L435.2 298.9L446.0 293.3L444.0 289.2Z" fill="#004400" stroke="#004400" stroke-width="0.9"/>
<path d="M365.1 123.4L362.2 124.0L374.1 120.9L377.0 120.3Z" fill="#00c400" stroke="#00c400" stroke-width="0.9"/>
<path d="M435.2 298.9L437.7 302.8L448.4 297.2L446.0 293.3Z" fill="#004400" stroke="#004400" stroke-width="0.9"/>
<path d="M462.1 237.7L460.1 238.3L470.4 233.6L472.3 233.1Z" fill="#006a00" stroke="#006a00" stroke-width="0.9"/>
<path d="M485.0 285.2L485.6 284.0L493.5 279.8L492.8 281.0Z" fill="#4b4b4b" stroke="#4b4b4b" stroke-width="0.9"/>
<path d="M414.9 234.7L413.8 233.0L422.1 229.5L423.2 231.2Z" fill="#5f5f5f" stroke="#5f5f5f" stroke-width="0.9"/>
<path d="M388.2 161.1L387.0 160.1L396.2 157.2L397.3 158.2Z" fill="#e5e5e5" stroke="#e5e5e5" stroke-width="0.9"/>
<path d="M439.1 180.7L433.5 177.1L444.2 173.3L449.7 176.9Z" fill="#005500" stroke="#005500" stroke-width="0.9"/>
<path d="M408.6 227.0L410.8 218.7L419.1 215.4L417.0 223.6Z" fill="#484848" stroke="#484848" stroke-width="0.9"/>
<path d="M479.5 329.2L478.5 322.3L488.6 316.4L489.5 323.3Z" fill="#004d00" stroke="#004d00" stroke-width="0.9"/>
<path d="M431.8 290.4L433.3 294.7L444.0 289.2L442.6 284.9Z" fill="#004400" stroke="#004400" stroke-width="0.9"/>
<path d="M392.9 176.0L393.2 174.5L402.2 171.5L402.0 172.9Z" fill="#4b4b4b" stroke="#4b4b4b" stroke-width="0.9"/>
<path d="M430.2 308.8L427.1 313.6L429.5 316.7L433.9 313.7L435.7 315.6L441.4 307.3L440.0 305.8L438.7 304.2L437.5 302.6Z" fill="#0cc40c" stroke="#0cc40c" stroke-width="0.9"/>
<path d="M452.6 333.4L454.0 327.3L464.5 321.3L463.0 327.4Z" fill="#004d00" stroke="#004d00" stroke-width="0.9"/>
<path d="M437.7 302.8L440.6 306.4L451.2 300.7L448.4 297.2Z" fill="#005800" stroke="#005800" stroke-width="0.9"/>
<path d="M418.4 242.1L417.7 240.2L426.0 236.7L426.7 238.6Z" fill="#5f5f5f" stroke="#5f5f5f" stroke-width="0.9"/>
<path d="M420.1 128.7L417.4 126.3L428.3 123.2L431.1 125.6Z" fill="#00b800" stroke="#00b800" stroke-width="0.9"/>
<path d="M468.9 310.4L472.5 310.5L482.7 304.7L479.0 304.7Z" fill="#00d600" stroke="#00d600" stroke-width="0.9"/>
<path d="M476.5 265.2L475.2 264.9L483.1 260.9L484.5 261.2Z" fill="#fafafa" stroke="#fafafa" stroke-width="0.9"/>
<path d="M397.1 218.5L399.8 217.2L411.1 212.8L408.4 214.1Z" fill="#00b300" stroke="#00b300" stroke-width="0.9"/>
<path d="M389.3 162.3L388.2 161.1L397.3 158.2L398.4 159.4Z" fill="#d4d4d4" stroke="#d4d4d4" stroke-width="0.9"/>
<path d="M372.4 227.2L368.1 218.1L377.0 214.8L381.3 223.7Z" fill="#484848" stroke="#484848" stroke-width="0.9"/>
<path d="M503.7 317.1L500.4 310.6L510.1 304.9L513.4 311.3Z" fill="#004d00" stroke="#004d00" stroke-width="0.9"/>
<path d="M393.2 174.5L393.3 172.9L402.3 169.9L402.2 171.5Z" fill="#4b4b4b" stroke="#4b4b4b" stroke-width="0.9"/>
<path d="M466.2 347.1L471.1 351.6L480.2 346.0L475.3 341.5Z" fill="#000069" stroke="#000069" stroke-width="0.9"/>
<path d="M410.0 268.1L410.7 266.6L419.0 262.7L418.4 264.3Z" fill="#5f5f5f" stroke="#5f5f5f" stroke-width="0.9"/>
<path d="M485.6 284.0L486.1 282.7L493.9 278.5L493.5 279.8Z" fill="#4b4b4b" stroke="#4b4b4b" stroke-width="0.9"/>
<path d="M420.6 284.6L415.2 285.6L415.9 289.4L421.7 290.5L422.5 293.0L432.1 291.5L431.6 289.6L431.1 287.6L430.8 285.7Z" fill="#0cc40c" stroke="#0cc40c" stroke-width="0.9"/>
<path d="M438.5 184.3L439.1 180.7L449.7 176.9L449.1 180.4Z" fill="#00b300" stroke="#00b300" stroke-width="0.9"/>
<path d="M430.9 286.0L431.8 290.4L442.6 284.9L441.7 280.6Z" fill="#004400" stroke="#004400" stroke-width="0.9"/>
<path d="M388.8 282.3L393.0 291.2L395.8 290.4L393.1 281.0L394.4 280.3L380.7 254.9L380.7 254.9L380.7 254.9L380.7 254.9Z" fill="#e4e4e4" stroke="#e4e4e4" stroke-width="0.9"/>
<path d="M425.2 143.7L423.7 141.5L434.6 138.2L436.0 140.4Z" fill="#005900" stroke="#005900" stroke-width="0.9"/>
<path d="M374.7 109.6L369.9 109.7L394.0 103.8L398.7 103.7Z" fill="#0606f2" stroke="#0606f2" stroke-width="0.9"/>
<path d="M386.8 213.5L389.6 220.4L392.5 219.9L391.4 212.8L393.3 212.2L388.5 200.0L387.0 200.5L385.5 200.8L384.0 201.0Z" fill="#0cc40c" stroke="#0cc40c" stroke-width="0.9"/>
<path d="M390.3 163.6L389.3 162.3L398.4 159.4L399.4 160.7Z" fill="#c1c1c1" stroke="#c1c1c1" stroke-width="0.9"/>
<path d="M433.6 168.7L433.3 166.1L444.0 162.4L444.3 165.0Z" fill="#005900" stroke="#005900" stroke-width="0.9"/>
<path d="M393.3 172.9L393.2 171.3L402.2 168.3L402.3 169.9Z" fill="#4b4b4b" stroke="#4b4b4b" stroke-width="0.9"/>
<path d="M414.7 278.2L416.3 275.5L424.6 271.5L423.0 274.2Z" fill="#e0e0e0" stroke="#e0e0e0" stroke-width="0.9"/>
<path d="M440.6 306.4L443.8 309.5L454.4 303.8L451.2 300.7Z" fill="#007100" stroke="#007100" stroke-width="0.9"/>
<path d="M477.8 265.7L476.5 265.2L484.5 261.2L485.8 261.7Z" fill="#fafafa" stroke="#fafafa" stroke-width="0.9"/>
<path d="M416.3 275.5L410.0 268.1L418.4 264.3L424.6 271.5Z" fill="#4c4c4c" stroke="#4c4c4c" stroke-width="0.9"/>
<path d="M368.0 130.4L365.1 123.4L377.0 120.3L379.8 127.2Z" fill="#004d00" stroke="#004d00" stroke-width="0.9"/>
<path d="M428.1 252.9L420.3 250.0L428.5 246.3L436.2 249.2Z" fill="#585858" stroke="#585858" stroke-width="0.9"/>
<path d="M391.2 165.0L390.3 163.6L399.4 160.7L400.3 162.1Z" fill="#acacac" stroke="#acacac" stroke-width="0.9"/>
<path d="M393.2 171.3L392.9 169.7L402.0 166.7L402.2 168.3Z" fill="#4b4b4b" stroke="#4b4b4b" stroke-width="0.9"/>
<path d="M410.8 218.7L407.9 216.5L416.3 213.2L419.1 215.4Z" fill="#e9e9e9" stroke="#e9e9e9" stroke-width="0.9"/>
<path d="M393.2 122.0L390.1 121.0L401.5 117.9L404.6 118.9Z" fill="#00bf00" stroke="#00bf00" stroke-width="0.9"/>
<path d="M374.0 227.0L372.4 227.2L381.3 223.7L382.8 223.5Z" fill="#747474" stroke="#747474" stroke-width="0.9"/>
<path d="M486.1 282.7L486.4 281.3L494.2 277.1L493.9 278.5Z" fill="#4b4b4b" stroke="#4b4b4b" stroke-width="0.9"/>
<path d="M391.9 166.5L391.2 165.0L400.3 162.1L401.0 163.6Z" fill="#959595" stroke="#959595" stroke-width="0.9"/>
<path d="M500.4 310.6L501.9 309.1L511.6 303.5L510.1 304.9Z" fill="#005900" stroke="#005900" stroke-width="0.9"/>
<path d="M392.9 169.7L392.5 168.1L401.6 165.1L402.0 166.7Z" fill="#646464" stroke="#646464" stroke-width="0.9"/>
<path d="M392.5 168.1L391.9 166.5L401.0 163.6L401.6 165.1Z" fill="#7d7d7d" stroke="#7d7d7d" stroke-width="0.9"/>
<path d="M370.1 122.4L370.1 129.2L380.6 126.4L380.6 119.7Z" fill="#000069" stroke="#000069" stroke-width="0.9"/>
<path d="M393.7 129.2L393.2 122.0L404.6 118.9L405.1 126.1Z" fill="#004d00" stroke="#004d00" stroke-width="0.9"/>
<path d="M395.8 130.2L393.7 129.2L405.1 126.1L407.2 127.0Z" fill="#006400" stroke="#006400" stroke-width="0.9"/>
<path d="M372.4 227.2L368.1 218.1L365.4 219.1L368.1 228.6L366.8 229.3L380.6 254.7L380.6 254.7L380.6 254.7L380.6 254.7Z" fill="#e4e4e4" stroke="#e4e4e4" stroke-width="0.9"/>
<path d="M479.2 266.4L477.8 265.7L485.8 261.7L487.1 262.4Z" fill="#fafafa" stroke="#fafafa" stroke-width="0.9"/>
<path d="M399.8 217.2L397.5 210.2L408.8 205.9L411.1 212.8Z" fill="#004d00" stroke="#004d00" stroke-width="0.9"/>
<path d="M435.7 315.6L433.7 321.3L436.5 323.8L440.1 319.6L442.1 321.1L445.8 311.1L444.3 310.0L442.8 308.7L441.4 307.3Z" fill="#0cc40c" stroke="#0cc40c" stroke-width="0.9"/>
<path d="M430.5 281.6L430.9 286.0L441.7 280.6L441.3 276.3Z" fill="#004400" stroke="#004400" stroke-width="0.9"/>
<path d="M429.3 151.6L428.2 149.1L439.0 145.7L440.1 148.1Z" fill="#005900" stroke="#005900" stroke-width="0.9"/>
<path d="M448.1 258.8L445.7 261.4L456.2 256.4L458.6 253.8Z" fill="#004400" stroke="#004400" stroke-width="0.9"/>
<path d="M420.7 204.4L422.4 201.8L433.3 197.6L431.6 200.2Z" fill="#00b300" stroke="#00b300" stroke-width="0.9"/>
<path d="M481.1 359.4L484.5 356.1L502.5 344.6L499.2 347.9Z" fill="#06064e" stroke="#06064e" stroke-width="0.9"/>
<path d="M432.2 160.0L431.5 157.5L442.2 153.9L442.9 156.5Z" fill="#005900" stroke="#005900" stroke-width="0.9"/>
<path d="M486.4 281.3L486.5 279.8L494.4 275.6L494.2 277.1Z" fill="#4b4b4b" stroke="#4b4b4b" stroke-width="0.9"/>
<path d="M400.4 288.1L402.7 286.3L411.2 282.2L408.9 284.0Z" fill="#e0e0e0" stroke="#e0e0e0" stroke-width="0.9"/>
<path d="M370.0 130.2L368.0 130.4L379.8 127.2L381.9 127.0Z" fill="#006900" stroke="#006900" stroke-width="0.9"/>
<path d="M423.7 141.5L426.8 136.1L437.7 132.9L434.6 138.2Z" fill="#004d00" stroke="#004d00" stroke-width="0.9"/>
<path d="M418.1 195.9L419.2 193.9L430.1 189.9L429.1 191.8Z" fill="#005900" stroke="#005900" stroke-width="0.9"/>
<path d="M422.4 201.8L418.1 195.9L429.1 191.8L433.3 197.6Z" fill="#004e00" stroke="#004e00" stroke-width="0.9"/>
<path d="M443.8 309.5L447.2 312.1L457.8 306.4L454.4 303.8Z" fill="#008a00" stroke="#008a00" stroke-width="0.9"/>
<path d="M413.8 233.0L418.0 226.4L426.3 222.9L422.1 229.5Z" fill="#484848" stroke="#484848" stroke-width="0.9"/>
<path d="M480.4 267.2L479.2 266.4L487.1 262.4L488.4 263.2Z" fill="#f3f3f3" stroke="#f3f3f3" stroke-width="0.9"/>
<path d="M439.4 170.9L433.6 168.7L444.3 165.0L450.1 167.2Z" fill="#005800" stroke="#005800" stroke-width="0.9"/>
<path d="M486.5 279.8L486.5 278.3L494.3 274.1L494.4 275.6Z" fill="#4b4b4b" stroke="#4b4b4b" stroke-width="0.9"/>
<path d="M395.6 227.0L394.0 226.1L402.6 222.7L404.1 223.6Z" fill="#6b6b6b" stroke="#6b6b6b" stroke-width="0.9"/>
<path d="M485.1 331.2L490.4 335.0L499.2 329.6L494.0 325.9Z" fill="#000069" stroke="#000069" stroke-width="0.9"/>
<path d="M420.2 276.3L414.4 275.9L414.5 279.5L420.3 282.1L420.6 284.6L430.8 285.7L430.6 283.7L430.5 281.8L430.5 279.9Z" fill="#0cc40c" stroke="#0cc40c" stroke-width="0.9"/>
<path d="M371.2 160.9L370.0 161.1L379.4 158.2L380.6 158.0Z" fill="#fafafa" stroke="#fafafa" stroke-width="0.9"/>
<path d="M472.5 310.5L476.0 309.8L486.1 304.1L482.7 304.7Z" fill="#00e100" stroke="#00e100" stroke-width="0.9"/>
<path d="M397.5 210.2L399.1 209.1L410.4 204.8L408.8 205.9Z" fill="#005900" stroke="#005900" stroke-width="0.9"/>
<path d="M481.6 268.3L480.4 267.2L488.4 263.2L489.5 264.2Z" fill="#e5e5e5" stroke="#e5e5e5" stroke-width="0.9"/>
<path d="M426.1 242.4L418.4 242.1L426.7 238.6L434.3 238.8Z" fill="#5c5c5c" stroke="#5c5c5c" stroke-width="0.9"/>
<path d="M421.9 232.2L414.9 234.7L423.2 231.2L430.1 228.7Z" fill="#5f5f5f" stroke="#5f5f5f" stroke-width="0.9"/>
<path d="M428.2 256.6L428.1 252.9L436.2 249.2L436.3 252.8Z" fill="#e0e0e0" stroke="#e0e0e0" stroke-width="0.9"/>
<path d="M379.0 185.3L380.1 184.7L389.4 181.5L388.3 182.1ZM486.5 278.3L486.2 276.7L494.1 272.6L494.3 274.1Z" fill="#4b4b4b" stroke="#4b4b4b" stroke-width="0.9"/>
<path d="M464.1 230.2L461.0 230.7L471.3 226.1L474.3 225.7Z" fill="#00c400" stroke="#00c400" stroke-width="0.9"/>
<path d="M417.7 240.2L423.7 235.8L431.9 232.2L426.0 236.7ZM402.7 286.3L398.0 277.5L406.5 273.5L411.2 282.2Z" fill="#484848" stroke="#484848" stroke-width="0.9"/>
<path d="M423.7 261.4L418.0 258.2L429.0 253.2L434.7 256.4Z" fill="#005700" stroke="#005700" stroke-width="0.9"/>
<path d="M482.7 269.4L481.6 268.3L489.5 264.2L490.6 265.4Z" fill="#d4d4d4" stroke="#d4d4d4" stroke-width="0.9"/>
<path d="M486.2 276.7L485.8 275.1L493.7 271.0L494.1 272.6Z" fill="#646464" stroke="#646464" stroke-width="0.9"/>
<path d="M430.8 277.4L430.5 281.6L441.3 276.3L441.6 272.1Z" fill="#004400" stroke="#004400" stroke-width="0.9"/>
<path d="M426.8 136.1L424.4 133.1L435.3 129.9L437.7 132.9Z" fill="#00b500" stroke="#00b500" stroke-width="0.9"/>
<path d="M483.7 270.7L482.7 269.4L490.6 265.4L491.6 266.6Z" fill="#c1c1c1" stroke="#c1c1c1" stroke-width="0.9"/>
<path d="M443.6 246.0L438.9 240.5L449.5 235.8L454.1 241.2Z" fill="#005000" stroke="#005000" stroke-width="0.9"/>
<path d="M398.0 277.5L399.0 276.3L407.5 272.3L406.5 273.5Z" fill="#5f5f5f" stroke="#5f5f5f" stroke-width="0.9"/>
<path d="M485.8 275.1L485.3 273.6L493.2 269.5L493.7 271.0Z" fill="#7d7d7d" stroke="#7d7d7d" stroke-width="0.9"/>
<path d="M396.1 120.1L395.2 126.6L405.4 123.8L406.2 117.4Z" fill="#000069" stroke="#000069" stroke-width="0.9"/>
<path d="M394.0 226.1L393.9 216.8L402.5 213.4L402.6 222.7Z" fill="#484848" stroke="#484848" stroke-width="0.9"/>
<path d="M484.6 272.1L483.7 270.7L491.6 266.6L492.5 268.0Z" fill="#acacac" stroke="#acacac" stroke-width="0.9"/>
<path d="M485.3 273.6L484.6 272.1L492.5 268.0L493.2 269.5Z" fill="#959595" stroke="#959595" stroke-width="0.9"/>
<path d="M439.5 174.7L439.4 170.9L450.1 167.2L450.1 170.9Z" fill="#00b300" stroke="#00b300" stroke-width="0.9"/>
<path d="M372.5 160.9L371.2 160.9L380.6 158.0L381.9 158.0Z" fill="#fafafa" stroke="#fafafa" stroke-width="0.9"/>
<path d="M428.2 149.1L432.3 144.9L443.1 141.6L439.0 145.7Z" fill="#004d00" stroke="#004d00" stroke-width="0.9"/>
<path d="M368.0 130.4L365.1 123.4L362.2 124.0L363.4 131.4L361.5 132.1L366.4 144.4L367.9 143.9L369.4 143.5L370.9 143.2Z" fill="#0cc40c" stroke="#0cc40c" stroke-width="0.9"/>
<path d="M370.1 122.4L370.1 129.2L366.6 129.6L363.7 123.2L362.6 123.3L359.4 110.9L363.5 110.3L367.6 109.8Z" fill="#0a0af0" stroke="#0a0af0" stroke-width="0.9"/>
<path d="M438.1 160.8L432.2 160.0L442.9 156.5L448.7 157.2Z" fill="#005b00" stroke="#005b00" stroke-width="0.9"/>
<path d="M394.4 280.3L400.4 288.1L402.7 286.3L398.0 277.5L399.0 276.3L380.7 254.9L380.7 254.9L380.7 254.9L380.7 254.9Z" fill="#e4e4e4" stroke="#e4e4e4" stroke-width="0.9"/>
<path d="M447.2 312.1L450.9 314.2L461.4 308.3L457.8 306.4Z" fill="#00a100" stroke="#00a100" stroke-width="0.9"/>
<path d="M380.1 184.7L381.1 183.9L390.3 180.8L389.4 181.5Z" fill="#4b4b4b" stroke="#4b4b4b" stroke-width="0.9"/>
<path d="M466.2 355.6L463.5 349.3L466.2 347.1L471.1 351.6L471.9 350.9L479.5 360.9L476.4 363.5L473.2 366.0Z" fill="#0a0af0" stroke="#0a0af0" stroke-width="0.9"/>
<path d="M466.8 237.0L464.1 230.2L474.3 225.7L477.0 232.4Z" fill="#004d00" stroke="#004d00" stroke-width="0.9"/>
<path d="M435.0 150.8L429.3 151.6L440.1 148.1L445.7 147.4Z" fill="#005d00" stroke="#005d00" stroke-width="0.9"/>
<path d="M393.9 216.8L390.8 215.5L399.4 212.2L402.5 213.4Z" fill="#efefef" stroke="#efefef" stroke-width="0.9"/>
<path d="M431.5 157.5L436.3 154.6L447.1 151.1L442.2 153.9Z" fill="#004d00" stroke="#004d00" stroke-width="0.9"/>
<path d="M411.9 261.4L412.1 259.5L420.4 255.7L420.2 257.6Z" fill="#5f5f5f" stroke="#5f5f5f" stroke-width="0.9"/>
<path d="M442.1 321.1L441.2 327.5L444.3 329.5L446.8 324.2L449.0 325.3L450.6 314.0L449.0 313.2L447.4 312.2L445.8 311.1Z" fill="#0cc40c" stroke="#0cc40c" stroke-width="0.9"/>
<path d="M379.6 109.7L374.7 109.6L398.7 103.7L403.5 103.8Z" fill="#0606f2" stroke="#0606f2" stroke-width="0.9"/>
<path d="M418.0 226.4L415.6 223.4L423.9 220.0L426.3 222.9Z" fill="#e3e3e3" stroke="#e3e3e3" stroke-width="0.9"/>
<path d="M450.9 256.7L448.1 258.8L458.6 253.8L461.4 251.7Z" fill="#004400" stroke="#004400" stroke-width="0.9"/>
<path d="M468.9 237.0L466.8 237.0L477.0 232.4L479.1 232.3Z" fill="#006900" stroke="#006900" stroke-width="0.9"/>
<path d="M373.8 161.1L372.5 160.9L381.9 158.0L383.2 158.2Z" fill="#fafafa" stroke="#fafafa" stroke-width="0.9"/>
<path d="M378.7 227.2L376.4 217.6L373.3 217.5L374.0 227.0L372.4 227.2L380.6 254.7L380.6 254.7L380.6 254.7L380.6 254.7Z" fill="#e4e4e4" stroke="#e4e4e4" stroke-width="0.9"/>
<path d="M461.0 335.4L461.2 328.7L471.6 322.7L471.4 329.3Z" fill="#004d00" stroke="#004d00" stroke-width="0.9"/>
<path d="M381.1 183.9L381.9 182.9L391.2 179.8L390.3 180.8Z" fill="#4b4b4b" stroke="#4b4b4b" stroke-width="0.9"/>
<path d="M463.1 269.4L462.0 269.9L470.2 265.8L471.3 265.3Z" fill="#fafafa" stroke="#fafafa" stroke-width="0.9"/>
<path d="M507.3 313.6L509.2 311.2L518.8 305.5L516.9 307.9Z" fill="#00b300" stroke="#00b300" stroke-width="0.9"/>
<path d="M431.6 273.4L430.8 277.4L441.6 272.1L442.4 268.2Z" fill="#004400" stroke="#004400" stroke-width="0.9"/>
<path d="M474.2 292.1L475.2 291.4L483.3 287.1L482.2 287.8Z" fill="#4b4b4b" stroke="#4b4b4b" stroke-width="0.9"/>
<path d="M427.1 246.1L426.1 242.4L434.3 238.8L435.3 242.5Z" fill="#e0e0e0" stroke="#e0e0e0" stroke-width="0.9"/>
<path d="M476.0 309.8L479.3 308.5L489.3 302.8L486.1 304.1Z" fill="#00e100" stroke="#00e100" stroke-width="0.9"/>
<path d="M432.3 144.9L430.4 141.5L441.2 138.1L443.1 141.6Z" fill="#00b300" stroke="#00b300" stroke-width="0.9"/>
<path d="M487.1 327.1L484.9 320.2L494.9 314.3L497.1 321.1Z" fill="#004d00" stroke="#004d00" stroke-width="0.9"/>
<path d="M419.2 266.7L411.9 261.4L420.2 257.6L427.6 262.9Z" fill="#525252" stroke="#525252" stroke-width="0.9"/>
<path d="M421.2 268.5L415.3 266.6L414.8 270.1L420.3 273.9L420.2 276.3L430.5 279.9L430.7 278.0L430.9 276.2L431.3 274.4Z" fill="#0cc40c" stroke="#0cc40c" stroke-width="0.9"/>
<path d="M484.5 356.1L487.7 352.5L505.6 341.1L502.5 344.6Z" fill="#06064f" stroke="#06064f" stroke-width="0.9"/>
<path d="M438.8 164.7L438.1 160.8L448.7 157.2L449.4 161.0Z" fill="#00b300" stroke="#00b300" stroke-width="0.9"/>
<path d="M375.1 161.6L373.8 161.1L383.2 158.2L384.5 158.6Z" fill="#fafafa" stroke="#fafafa" stroke-width="0.9"/>
<path d="M376.4 217.6L373.3 217.5L382.2 214.1L385.3 214.3Z" fill="#f3f3f3" stroke="#f3f3f3" stroke-width="0.9"/>
<path d="M393.3 212.2L397.1 218.5L399.8 217.2L397.5 210.2L399.1 209.1L392.5 197.8L391.2 198.7L389.9 199.4L388.5 200.0Z" fill="#0cc40c" stroke="#0cc40c" stroke-width="0.9"/>
<path d="M401.5 231.9L400.1 230.5L408.6 227.0L410.0 228.4Z" fill="#656565" stroke="#656565" stroke-width="0.9"/>
<path d="M402.5 134.4L400.6 133.0L411.9 129.7L413.8 131.1Z" fill="#006000" stroke="#006000" stroke-width="0.9"/>
<path d="M373.2 123.1L370.0 123.0L381.9 119.9L385.0 120.0Z" fill="#00c200" stroke="#00c200" stroke-width="0.9"/>
<path d="M381.9 182.9L382.7 181.8L391.9 178.7L391.2 179.8Z" fill="#4b4b4b" stroke="#4b4b4b" stroke-width="0.9"/>
<path d="M509.2 311.2L504.9 305.3L514.6 299.7L518.8 305.5Z" fill="#004e00" stroke="#004e00" stroke-width="0.9"/>
<path d="M450.9 314.2L454.7 315.6L465.1 309.7L461.4 308.3Z" fill="#00b500" stroke="#00b500" stroke-width="0.9"/>
<path d="M423.7 235.8L421.9 232.2L430.1 228.7L431.9 232.2Z" fill="#e0e0e0" stroke="#e0e0e0" stroke-width="0.9"/>
<path d="M464.4 269.1L463.1 269.4L471.3 265.3L472.6 265.0Z" fill="#fafafa" stroke="#fafafa" stroke-width="0.9"/>
<path d="M380.4 227.6L378.7 227.2L387.5 223.8L389.2 224.2Z" fill="#707070" stroke="#707070" stroke-width="0.9"/>
<path d="M378.7 227.2L376.4 217.6L385.3 214.3L387.5 223.8Z" fill="#484848" stroke="#484848" stroke-width="0.9"/>
<path d="M436.3 154.6L435.0 150.8L445.7 147.4L447.1 151.1Z" fill="#00b300" stroke="#00b300" stroke-width="0.9"/>
<path d="M421.1 188.9L421.7 186.6L432.6 182.7L432.0 184.9Z" fill="#005900" stroke="#005900" stroke-width="0.9"/>
<path d="M471.3 342.2L476.5 346.4L485.5 340.8L480.4 336.6Z" fill="#000069" stroke="#000069" stroke-width="0.9"/>
<path d="M504.9 305.3L506.0 303.5L515.7 297.9L514.6 299.7Z" fill="#005900" stroke="#005900" stroke-width="0.9"/>
<path d="M400.6 133.0L401.3 126.0L412.6 122.8L411.9 129.7Z" fill="#004d00" stroke="#004d00" stroke-width="0.9"/>
<path d="M475.2 291.4L476.1 290.6L484.2 286.2L483.3 287.1Z" fill="#4b4b4b" stroke="#4b4b4b" stroke-width="0.9"/>
<path d="M401.3 126.0L398.3 124.2L409.6 121.1L412.6 122.8Z" fill="#00bc00" stroke="#00bc00" stroke-width="0.9"/>
<path d="M418.5 270.1L419.2 266.7L427.6 262.9L426.8 266.2Z" fill="#e0e0e0" stroke="#e0e0e0" stroke-width="0.9"/>
<path d="M376.4 162.2L375.1 161.6L384.5 158.6L385.8 159.3Z" fill="#fafafa" stroke="#fafafa" stroke-width="0.9"/>
<path d="M403.8 214.6L406.1 212.6L417.3 208.2L415.1 210.2Z" fill="#00b300" stroke="#00b300" stroke-width="0.9"/>
<path d="M382.7 181.8L383.2 180.5L392.5 177.4L391.9 178.7Z" fill="#4b4b4b" stroke="#4b4b4b" stroke-width="0.9"/>
<path d="M411.9 253.7L411.6 251.7L420.0 248.0L420.3 250.0Z" fill="#5f5f5f" stroke="#5f5f5f" stroke-width="0.9"/>
<path d="M374.9 130.5L373.2 123.1L385.0 120.0L386.7 127.3Z" fill="#004d00" stroke="#004d00" stroke-width="0.9"/>
<path d="M426.1 193.8L421.1 188.9L432.0 184.9L437.0 189.8Z" fill="#005200" stroke="#005200" stroke-width="0.9"/>
<path d="M399.0 276.3L406.2 282.2L407.8 279.5L401.5 272.1L402.1 270.5L380.7 254.9L380.7 254.9L380.7 254.9L380.7 254.9Z" fill="#e4e4e4" stroke="#e4e4e4" stroke-width="0.9"/>
<path d="M465.7 268.9L464.4 269.1L472.6 265.0L473.8 264.8Z" fill="#fafafa" stroke="#fafafa" stroke-width="0.9"/>
<path d="M424.9 197.0L426.1 193.8L437.0 189.8L435.8 192.9Z" fill="#00b300" stroke="#00b300" stroke-width="0.9"/>
<path d="M377.8 122.3L377.4 129.0L387.9 126.1L388.3 119.5Z" fill="#000069" stroke="#000069" stroke-width="0.9"/>
<path d="M377.7 163.0L376.4 162.2L385.8 159.3L387.0 160.1Z" fill="#f3f3f3" stroke="#f3f3f3" stroke-width="0.9"/>
<path d="M476.1 290.6L476.9 289.5L485.0 285.2L484.2 286.2Z" fill="#4b4b4b" stroke="#4b4b4b" stroke-width="0.9"/>
<path d="M377.0 130.9L374.9 130.5L386.7 127.3L388.8 127.7Z" fill="#006600" stroke="#006600" stroke-width="0.9"/>
<path d="M433.0 269.8L431.6 273.4L442.4 268.2L443.8 264.6Z" fill="#004400" stroke="#004400" stroke-width="0.9"/>
<path d="M406.1 212.6L402.7 205.9L414.0 201.6L417.3 208.2Z" fill="#004d00" stroke="#004d00" stroke-width="0.9"/>
<path d="M383.2 180.5L383.6 179.1L392.9 176.0L392.5 177.4Z" fill="#4b4b4b" stroke="#4b4b4b" stroke-width="0.9"/>
<path d="M406.5 238.3L405.4 236.6L413.8 233.0L414.9 234.7Z" fill="#5f5f5f" stroke="#5f5f5f" stroke-width="0.9"/>
<path d="M400.1 230.5L402.3 222.1L410.8 218.7L408.6 227.0Z" fill="#484848" stroke="#484848" stroke-width="0.9"/>
<path d="M449.0 325.3L449.4 332.2L452.6 333.4L454.0 327.3L456.2 327.9L455.7 315.8L454.0 315.4L452.3 314.8L450.6 314.0Z" fill="#0cc40c" stroke="#0cc40c" stroke-width="0.9"/>
<path d="M385.2 229.6L385.1 220.2L382.0 218.9L380.4 227.6L378.7 227.2L380.6 254.7L380.6 254.7L380.6 254.7L380.6 254.7Z" fill="#e4e4e4" stroke="#e4e4e4" stroke-width="0.9"/>
<path d="M410.0 245.8L409.3 243.8L417.7 240.2L418.4 242.1Z" fill="#5f5f5f" stroke="#5f5f5f" stroke-width="0.9"/>
<path d="M467.0 269.0L465.7 268.9L473.8 264.8L475.2 264.9Z" fill="#fafafa" stroke="#fafafa" stroke-width="0.9"/>
<path d="M402.7 205.9L404.1 204.3L415.4 200.1L414.0 201.6Z" fill="#005900" stroke="#005900" stroke-width="0.9"/>
<path d="M378.9 164.0L377.7 163.0L387.0 160.1L388.2 161.1Z" fill="#e5e5e5" stroke="#e5e5e5" stroke-width="0.9"/>
<path d="M384.6 110.2L379.6 109.7L403.5 103.8L408.3 104.3Z" fill="#0606f2" stroke="#0606f2" stroke-width="0.9"/>
<path d="M489.4 325.2L494.9 328.6L503.6 323.2L498.2 319.9Z" fill="#000069" stroke="#000069" stroke-width="0.9"/>
<path d="M383.6 179.1L383.9 177.6L393.2 174.5L392.9 176.0Z" fill="#4b4b4b" stroke="#4b4b4b" stroke-width="0.9"/>
<path d="M401.5 272.1L402.1 270.5L410.7 266.6L410.0 268.1Z" fill="#5f5f5f" stroke="#5f5f5f" stroke-width="0.9"/>
<path d="M454.7 315.6L458.4 316.3L468.9 310.4L465.1 309.7Z" fill="#00c700" stroke="#00c700" stroke-width="0.9"/>
<path d="M476.9 289.5L477.6 288.3L485.6 284.0L485.0 285.2Z" fill="#4b4b4b" stroke="#4b4b4b" stroke-width="0.9"/>
<path d="M427.6 255.5L422.2 251.0L433.2 246.1L438.5 250.5Z" fill="#005300" stroke="#005300" stroke-width="0.9"/>
<path d="M406.2 282.2L407.8 279.5L416.3 275.5L414.7 278.2Z" fill="#e0e0e0" stroke="#e0e0e0" stroke-width="0.9"/>
<path d="M380.0 165.2L378.9 164.0L388.2 161.1L389.3 162.3Z" fill="#d4d4d4" stroke="#d4d4d4" stroke-width="0.9"/>
<path d="M407.8 279.5L401.5 272.1L410.0 268.1L416.3 275.5Z" fill="#4c4c4c" stroke="#4c4c4c" stroke-width="0.9"/>
<path d="M374.9 130.5L373.2 123.1L370.0 123.0L370.0 130.2L368.0 130.4L370.9 143.2L372.5 143.1L374.1 143.2L375.7 143.4Z" fill="#0cc40c" stroke="#0cc40c" stroke-width="0.9"/>
<path d="M383.9 177.6L384.0 176.0L393.3 172.9L393.2 174.5Z" fill="#4b4b4b" stroke="#4b4b4b" stroke-width="0.9"/>
<path d="M468.3 269.3L467.0 269.0L475.2 264.9L476.5 265.2Z" fill="#fafafa" stroke="#fafafa" stroke-width="0.9"/>
<path d="M472.4 230.5L469.2 230.1L479.4 225.6L482.5 225.9Z" fill="#00c200" stroke="#00c200" stroke-width="0.9"/>
<path d="M419.8 256.6L411.9 253.7L420.3 250.0L428.1 252.9Z" fill="#585858" stroke="#585858" stroke-width="0.9"/>
<path d="M402.3 222.1L399.3 219.9L407.9 216.5L410.8 218.7Z" fill="#e9e9e9" stroke="#e9e9e9" stroke-width="0.9"/>
<path d="M404.0 121.5L402.8 127.8L412.8 125.0L414.1 118.7Z" fill="#000069" stroke="#000069" stroke-width="0.9"/>
<path d="M381.0 166.5L380.0 165.2L389.3 162.3L390.3 163.6Z" fill="#c1c1c1" stroke="#c1c1c1" stroke-width="0.9"/>
<path d="M477.6 288.3L478.0 287.0L486.1 282.7L485.6 284.0Z" fill="#4b4b4b" stroke="#4b4b4b" stroke-width="0.9"/>
<path d="M408.7 140.1L406.9 138.3L418.2 135.0L419.9 136.8Z" fill="#005d00" stroke="#005d00" stroke-width="0.9"/>
<path d="M384.0 176.0L383.9 174.4L393.2 171.3L393.3 172.9Z" fill="#4b4b4b" stroke="#4b4b4b" stroke-width="0.9"/>
<path d="M487.7 352.5L490.7 348.7L508.6 337.4L505.6 341.1Z" fill="#060650" stroke="#060650" stroke-width="0.9"/>
<path d="M449.6 243.0L445.7 236.7L456.3 232.0L460.1 238.3ZM474.0 237.6L472.4 230.5L482.5 225.9L484.1 232.9Z" fill="#004d00" stroke="#004d00" stroke-width="0.9"/>
<path d="M423.7 261.4L418.0 258.2L416.8 261.3L421.8 266.3L421.2 268.5L431.3 274.4L431.8 272.7L432.4 271.1L433.1 269.5Z" fill="#0cc40c" stroke="#0cc40c" stroke-width="0.9"/>
<path d="M476.2 238.1L474.0 237.6L484.1 232.9L486.3 233.4Z" fill="#006600" stroke="#006600" stroke-width="0.9"/>
<path d="M381.9 168.0L381.0 166.5L390.3 163.6L391.2 165.0Z" fill="#acacac" stroke="#acacac" stroke-width="0.9"/>
<path d="M422.6 181.0L422.7 178.5L433.7 174.6L433.5 177.1Z" fill="#005900" stroke="#005900" stroke-width="0.9"/>
<path d="M383.9 174.4L383.6 172.7L392.9 169.7L393.2 171.3Z" fill="#4b4b4b" stroke="#4b4b4b" stroke-width="0.9"/>
<path d="M402.1 270.5L410.0 274.1L410.8 270.7L403.3 265.3L403.5 263.4L380.7 254.9L380.7 254.9L380.7 254.9L380.7 254.9Z" fill="#e4e4e4" stroke="#e4e4e4" stroke-width="0.9"/>
<path d="M469.7 269.8L468.3 269.3L476.5 265.2L477.8 265.7Z" fill="#fafafa" stroke="#fafafa" stroke-width="0.9"/>
<path d="M382.6 169.5L381.9 168.0L391.2 165.0L391.9 166.5Z" fill="#959595" stroke="#959595" stroke-width="0.9"/>
<path d="M383.6 172.7L383.2 171.1L392.5 168.1L392.9 169.7Z" fill="#646464" stroke="#646464" stroke-width="0.9"/>
<path d="M383.2 171.1L382.6 169.5L391.9 166.5L392.5 168.1Z" fill="#7d7d7d" stroke="#7d7d7d" stroke-width="0.9"/>
<path d="M478.0 287.0L478.3 285.6L486.4 281.3L486.1 282.7Z" fill="#4b4b4b" stroke="#4b4b4b" stroke-width="0.9"/>
<path d="M434.9 266.6L433.0 269.8L443.8 264.6L445.7 261.4Z" fill="#004400" stroke="#004400" stroke-width="0.9"/>
<path d="M491.4 324.8L493.8 323.0L503.7 317.1L501.3 318.8Z" fill="#00b300" stroke="#00b300" stroke-width="0.9"/>
<path d="M377.8 122.3L377.4 129.0L373.8 129.0L371.2 122.4L370.1 122.4L367.6 109.8L371.9 109.6L376.1 109.6Z" fill="#0a0af0" stroke="#0a0af0" stroke-width="0.9"/>
<path d="M405.4 236.6L409.6 229.8L418.0 226.4L413.8 233.0Z" fill="#484848" stroke="#484848" stroke-width="0.9"/>
<path d="M406.9 138.3L408.9 131.9L420.1 128.7L418.2 135.0Z" fill="#004d00" stroke="#004d00" stroke-width="0.9"/>
<path d="M471.9 350.9L468.8 344.7L471.3 342.2L476.5 346.4L477.2 345.5L485.4 355.1L482.5 358.1L479.5 360.9Z" fill="#0a0af0" stroke="#0a0af0" stroke-width="0.9"/>
<path d="M391.4 234.0L393.5 225.6L390.6 223.3L386.8 230.5L385.2 229.6L380.6 254.7L380.7 254.7L380.7 254.7L380.7 254.8Z" fill="#e4e4e4" stroke="#e4e4e4" stroke-width="0.9"/>
<path d="M471.0 270.5L469.7 269.8L477.8 265.7L479.2 266.4Z" fill="#fafafa" stroke="#fafafa" stroke-width="0.9"/>
<path d="M386.8 230.5L385.2 229.6L394.0 226.1L395.6 227.0Z" fill="#6b6b6b" stroke="#6b6b6b" stroke-width="0.9"/>
<path d="M469.2 335.4L468.2 328.4L478.5 322.3L479.5 329.2Z" fill="#004d00" stroke="#004d00" stroke-width="0.9"/>
<path d="M451.6 242.5L449.6 243.0L460.1 238.3L462.1 237.7Z" fill="#006a00" stroke="#006a00" stroke-width="0.9"/>
<path d="M399.1 209.1L403.8 214.6L406.1 212.6L402.7 205.9L404.1 204.3L395.9 194.5L394.8 195.7L393.7 196.8L392.5 197.8Z" fill="#0cc40c" stroke="#0cc40c" stroke-width="0.9"/>
<path d="M478.3 285.6L478.5 284.1L486.5 279.8L486.4 281.3Z" fill="#4b4b4b" stroke="#4b4b4b" stroke-width="0.9"/>
<path d="M428.2 184.7L422.6 181.0L433.5 177.1L439.1 180.7Z" fill="#005500" stroke="#005500" stroke-width="0.9"/>
<path d="M511.9 306.8L513.3 303.8L522.8 298.2L521.5 301.1Z" fill="#00b300" stroke="#00b300" stroke-width="0.9"/>
<path d="M458.4 316.3L462.1 316.3L472.5 310.5L468.9 310.4Z" fill="#00d600" stroke="#00d600" stroke-width="0.9"/>
<path d="M417.8 246.0L410.0 245.8L418.4 242.1L426.1 242.4Z" fill="#5c5c5c" stroke="#5c5c5c" stroke-width="0.9"/>
<path d="M413.4 235.8L406.5 238.3L414.9 234.7L421.9 232.2Z" fill="#5f5f5f" stroke="#5f5f5f" stroke-width="0.9"/>
<path d="M419.9 260.4L419.8 256.6L428.1 252.9L428.2 256.6Z" fill="#e0e0e0" stroke="#e0e0e0" stroke-width="0.9"/>
<path d="M508.1 298.8L508.8 296.6L518.4 291.1L517.7 293.2Z" fill="#005900" stroke="#005900" stroke-width="0.9"/>
<path d="M361.6 163.8L360.3 164.1L370.0 161.1L371.2 160.9Z" fill="#fafafa" stroke="#fafafa" stroke-width="0.9"/>
<path d="M408.9 131.9L406.1 129.4L417.4 126.3L420.1 128.7Z" fill="#00b800" stroke="#00b800" stroke-width="0.9"/>
<path d="M409.3 243.8L415.3 239.4L423.7 235.8L417.7 240.2Z" fill="#484848" stroke="#484848" stroke-width="0.9"/>
<path d="M472.3 271.4L471.0 270.5L479.2 266.4L480.4 267.2Z" fill="#f3f3f3" stroke="#f3f3f3" stroke-width="0.9"/>
<path d="M513.3 303.8L508.1 298.8L517.7 293.2L522.8 298.2Z" fill="#005200" stroke="#005200" stroke-width="0.9"/>
<path d="M478.5 284.1L478.4 282.5L486.5 278.3L486.5 279.8ZM369.5 188.6L370.6 188.0L380.1 184.7L379.0 185.3Z" fill="#4b4b4b" stroke="#4b4b4b" stroke-width="0.9"/>
<path d="M493.8 323.0L490.5 316.4L500.4 310.6L503.7 317.1Z" fill="#004d00" stroke="#004d00" stroke-width="0.9"/>
<path d="M385.2 229.6L385.1 220.2L393.9 216.8L394.0 226.1Z" fill="#484848" stroke="#484848" stroke-width="0.9"/>
<path d="M427.6 188.3L428.2 184.7L439.1 180.7L438.5 184.3Z" fill="#00b300" stroke="#00b300" stroke-width="0.9"/>
<path d="M473.5 272.4L472.3 271.4L480.4 267.2L481.6 268.3Z" fill="#e5e5e5" stroke="#e5e5e5" stroke-width="0.9"/>
<path d="M414.0 147.1L412.5 144.9L423.7 141.5L425.2 143.7Z" fill="#005900" stroke="#005900" stroke-width="0.9"/>
<path d="M403.5 263.4L411.4 264.3L411.2 260.5L403.3 257.5L403.0 255.5L380.7 254.8L380.7 254.8L380.7 254.8L380.7 254.9Z" fill="#e4e4e4" stroke="#e4e4e4" stroke-width="0.9"/>
<path d="M478.4 282.5L478.2 280.9L486.2 276.7L486.5 278.3Z" fill="#4b4b4b" stroke="#4b4b4b" stroke-width="0.9"/>
<path d="M422.6 172.4L422.3 169.8L433.3 166.1L433.6 168.7Z" fill="#005900" stroke="#005900" stroke-width="0.9"/>
<path d="M389.6 110.9L384.6 110.2L408.3 104.3L413.2 105.0Z" fill="#0606f2" stroke="#0606f2" stroke-width="0.9"/>
<path d="M456.2 327.9L457.8 334.9L461.0 335.4L461.2 328.7L463.3 328.8L460.6 316.4L459.0 316.3L457.3 316.1L455.7 315.8Z" fill="#0cc40c" stroke="#0cc40c" stroke-width="0.9"/>
<path d="M381.4 125.1L378.3 124.1L390.1 121.0L393.2 122.0Z" fill="#00bf00" stroke="#00bf00" stroke-width="0.9"/>
<path d="M385.1 220.2L382.0 218.9L390.8 215.5L393.9 216.8Z" fill="#efefef" stroke="#efefef" stroke-width="0.9"/>
<path d="M474.6 273.6L473.5 272.4L481.6 268.3L482.7 269.4Z" fill="#d4d4d4" stroke="#d4d4d4" stroke-width="0.9"/>
<path d="M403.3 265.3L403.5 263.4L412.1 259.5L411.9 261.4Z" fill="#5f5f5f" stroke="#5f5f5f" stroke-width="0.9"/>
<path d="M362.9 163.9L361.6 163.8L371.2 160.9L372.5 160.9Z" fill="#fafafa" stroke="#fafafa" stroke-width="0.9"/>
<path d="M396.7 240.2L400.9 233.4L398.4 230.4L392.8 235.4L391.4 234.0L380.7 254.8L380.7 254.8L380.7 254.8L380.7 254.8Z" fill="#e4e4e4" stroke="#e4e4e4" stroke-width="0.9"/>
<path d="M478.2 280.9L477.8 279.4L485.8 275.1L486.2 276.7Z" fill="#646464" stroke="#646464" stroke-width="0.9"/>
<path d="M476.0 336.7L481.4 340.5L490.4 335.0L485.1 331.2Z" fill="#000069" stroke="#000069" stroke-width="0.9"/>
<path d="M475.6 274.9L474.6 273.6L482.7 269.4L483.7 270.7Z" fill="#c1c1c1" stroke="#c1c1c1" stroke-width="0.9"/>
<path d="M370.6 188.0L371.6 187.1L381.1 183.9L380.1 184.7Z" fill="#4b4b4b" stroke="#4b4b4b" stroke-width="0.9"/>
<path d="M490.5 316.4L491.9 315.0L501.9 309.1L500.4 310.6Z" fill="#005900" stroke="#005900" stroke-width="0.9"/>
<path d="M477.8 279.4L477.2 277.8L485.3 273.6L485.8 275.1Z" fill="#7d7d7d" stroke="#7d7d7d" stroke-width="0.9"/>
<path d="M382.0 132.5L381.4 125.1L393.2 122.0L393.7 129.2Z" fill="#004d00" stroke="#004d00" stroke-width="0.9"/>
<path d="M384.1 133.4L382.0 132.5L393.7 129.2L395.8 130.2Z" fill="#006400" stroke="#006400" stroke-width="0.9"/>
<path d="M476.5 276.3L475.6 274.9L483.7 270.7L484.6 272.1Z" fill="#acacac" stroke="#acacac" stroke-width="0.9"/>
<path d="M477.2 277.8L476.5 276.3L484.6 272.1L485.3 273.6Z" fill="#959595" stroke="#959595" stroke-width="0.9"/>
<path d="M409.6 229.8L407.1 226.8L415.6 223.4L418.0 226.4Z" fill="#e3e3e3" stroke="#e3e3e3" stroke-width="0.9"/>
<path d="M437.3 263.9L434.9 266.6L445.7 261.4L448.1 258.8Z" fill="#004400" stroke="#004400" stroke-width="0.9"/>
<path d="M409.4 208.7L411.2 206.1L422.4 201.8L420.7 204.4Z" fill="#00b300" stroke="#00b300" stroke-width="0.9"/>
<path d="M403.0 255.5L410.2 253.6L409.2 249.8L401.4 249.5L400.7 247.6L380.7 254.8L380.7 254.8L380.7 254.8L380.7 254.8Z" fill="#e4e4e4" stroke="#e4e4e4" stroke-width="0.9"/>
<path d="M418.2 155.1L417.1 152.7L428.2 149.1L429.3 151.6Z" fill="#005900" stroke="#005900" stroke-width="0.9"/>
<path d="M400.7 247.6L406.7 243.0L404.8 239.4L397.8 241.9L396.7 240.2L380.7 254.8L380.7 254.8L380.7 254.8L380.7 254.8Z" fill="#e4e4e4" stroke="#e4e4e4" stroke-width="0.9"/>
<path d="M421.1 163.7L420.4 161.1L431.5 157.5L432.2 160.0ZM406.9 200.1L407.9 198.1L419.2 193.9L418.1 195.9Z" fill="#005900" stroke="#005900" stroke-width="0.9"/>
<path d="M411.2 206.1L406.9 200.1L418.1 195.9L422.4 201.8Z" fill="#004e00" stroke="#004e00" stroke-width="0.9"/>
<path d="M490.7 348.7L493.5 344.7L511.4 333.4L508.6 337.4Z" fill="#070752" stroke="#070752" stroke-width="0.9"/>
<path d="M364.2 164.1L362.9 163.9L372.5 160.9L373.8 161.1Z" fill="#fafafa" stroke="#fafafa" stroke-width="0.9"/>
<path d="M412.5 144.9L415.6 139.5L426.8 136.1L423.7 141.5Z" fill="#004d00" stroke="#004d00" stroke-width="0.9"/>
<path d="M385.7 122.9L384.9 129.4L395.2 126.6L396.1 120.1Z" fill="#000069" stroke="#000069" stroke-width="0.9"/>
<path d="M371.6 187.1L372.4 186.2L381.9 182.9L381.1 183.9Z" fill="#4b4b4b" stroke="#4b4b4b" stroke-width="0.9"/>
<path d="M428.5 174.8L422.6 172.4L433.6 168.7L439.4 170.9Z" fill="#005800" stroke="#005800" stroke-width="0.9"/>
<path d="M418.8 249.8L417.8 246.0L426.1 242.4L427.1 246.1Z" fill="#e0e0e0" stroke="#e0e0e0" stroke-width="0.9"/>
<path d="M462.1 316.3L465.6 315.7L476.0 309.8L472.5 310.5Z" fill="#00e100" stroke="#00e100" stroke-width="0.9"/>
<path d="M410.8 270.7L403.3 265.3L411.9 261.4L419.2 266.7Z" fill="#525252" stroke="#525252" stroke-width="0.9"/>
<path d="M382.0 132.5L381.4 125.1L378.3 124.1L377.0 130.9L374.9 130.5L375.7 143.4L377.3 143.7L379.0 144.2L380.6 144.8Z" fill="#0cc40c" stroke="#0cc40c" stroke-width="0.9"/>
<path d="M493.2 318.7L498.8 321.6L507.6 316.3L502.0 313.5Z" fill="#000069" stroke="#000069" stroke-width="0.9"/>
<path d="M483.4 240.9L481.2 239.9L491.3 235.1L493.4 236.1Z" fill="#006400" stroke="#006400" stroke-width="0.9"/>
<path d="M392.8 235.4L391.4 234.0L400.1 230.5L401.5 231.9Z" fill="#656565" stroke="#656565" stroke-width="0.9"/>
<path d="M454.8 273.6L453.6 274.1L462.0 269.9L463.1 269.4Z" fill="#fafafa" stroke="#fafafa" stroke-width="0.9"/>
<path d="M427.6 255.5L422.2 251.0L420.4 253.6L424.7 259.5L423.7 261.4L433.1 269.5L433.9 268.1L434.8 266.7L435.8 265.4Z" fill="#0cc40c" stroke="#0cc40c" stroke-width="0.9"/>
<path d="M415.3 239.4L413.4 235.8L421.9 232.2L423.7 235.8Z" fill="#e0e0e0" stroke="#e0e0e0" stroke-width="0.9"/>
<path d="M365.5 164.5L364.2 164.1L373.8 161.1L375.1 161.6Z" fill="#fafafa" stroke="#fafafa" stroke-width="0.9"/>
<path d="M465.9 296.6L467.0 295.9L475.2 291.4L474.2 292.1Z" fill="#4b4b4b" stroke="#4b4b4b" stroke-width="0.9"/>
<path d="M481.2 239.9L480.9 232.8L491.0 228.2L491.3 235.1Z" fill="#004d00" stroke="#004d00" stroke-width="0.9"/>
<path d="M453.5 234.9L450.5 235.4L461.0 230.7L464.1 230.2Z" fill="#00c400" stroke="#00c400" stroke-width="0.9"/>
<path d="M480.9 232.8L477.6 231.7L487.8 227.1L491.0 228.2Z" fill="#00bf00" stroke="#00bf00" stroke-width="0.9"/>
<path d="M372.4 186.2L373.2 185.0L382.7 181.8L381.9 182.9Z" fill="#4b4b4b" stroke="#4b4b4b" stroke-width="0.9"/>
<path d="M432.7 250.9L427.9 245.4L438.9 240.5L443.6 246.0Z" fill="#005000" stroke="#005000" stroke-width="0.9"/>
<path d="M415.6 139.5L413.2 136.4L424.4 133.1L426.8 136.1Z" fill="#00b500" stroke="#00b500" stroke-width="0.9"/>
<path d="M410.0 274.1L410.8 270.7L419.2 266.7L418.5 270.1Z" fill="#e0e0e0" stroke="#e0e0e0" stroke-width="0.9"/>
<path d="M412.0 123.6L410.3 129.7L420.3 126.8L422.0 120.8Z" fill="#000069" stroke="#000069" stroke-width="0.9"/>
<path d="M403.3 257.5L403.0 255.5L411.6 251.7L411.9 253.7Z" fill="#5f5f5f" stroke="#5f5f5f" stroke-width="0.9"/>
<path d="M456.0 273.2L454.8 273.6L463.1 269.4L464.4 269.1Z" fill="#fafafa" stroke="#fafafa" stroke-width="0.9"/>
<path d="M428.6 178.6L428.5 174.8L439.4 170.9L439.5 174.7Z" fill="#00b300" stroke="#00b300" stroke-width="0.9"/>
<path d="M417.1 152.7L421.2 148.4L432.3 144.9L428.2 149.1Z" fill="#004d00" stroke="#004d00" stroke-width="0.9"/>
<path d="M509.9 291.3L510.1 288.9L519.8 283.4L519.5 285.8Z" fill="#005900" stroke="#005900" stroke-width="0.9"/>
<path d="M427.1 164.5L421.1 163.7L432.2 160.0L438.1 160.8Z" fill="#005b00" stroke="#005b00" stroke-width="0.9"/>
<path d="M366.8 165.2L365.5 164.5L375.1 161.6L376.4 162.2Z" fill="#fafafa" stroke="#fafafa" stroke-width="0.9"/>
<path d="M467.0 295.9L467.9 295.0L476.1 290.6L475.2 291.4Z" fill="#4b4b4b" stroke="#4b4b4b" stroke-width="0.9"/>
<path d="M456.3 241.8L453.5 234.9L464.1 230.2L466.8 237.0Z" fill="#004d00" stroke="#004d00" stroke-width="0.9"/>
<path d="M373.2 185.0L373.7 183.7L383.2 180.5L382.7 181.8Z" fill="#4b4b4b" stroke="#4b4b4b" stroke-width="0.9"/>
<path d="M423.9 154.4L418.2 155.1L429.3 151.6L435.0 150.8Z" fill="#005d00" stroke="#005d00" stroke-width="0.9"/>
<path d="M420.4 161.1L425.3 158.2L436.3 154.6L431.5 157.5Z" fill="#004d00" stroke="#004d00" stroke-width="0.9"/>
<path d="M404.1 204.3L409.4 208.7L411.2 206.1L406.9 200.1L407.9 198.1L398.5 190.2L397.7 191.7L396.9 193.1L395.9 194.5Z" fill="#0cc40c" stroke="#0cc40c" stroke-width="0.9"/>
<path d="M440.1 261.8L437.3 263.9L448.1 258.8L450.9 256.7Z" fill="#004400" stroke="#004400" stroke-width="0.9"/>
<path d="M394.6 111.9L389.6 110.9L413.2 105.0L418.0 105.9Z" fill="#0606f2" stroke="#0606f2" stroke-width="0.9"/>
<path d="M397.8 241.9L396.7 240.2L405.4 236.6L406.5 238.3Z" fill="#5f5f5f" stroke="#5f5f5f" stroke-width="0.9"/>
<path d="M515.6 295.2L509.9 291.3L519.5 285.8L525.2 289.6Z" fill="#005500" stroke="#005500" stroke-width="0.9"/>
<path d="M391.4 234.0L393.5 225.6L402.3 222.1L400.1 230.5Z" fill="#484848" stroke="#484848" stroke-width="0.9"/>
<path d="M457.3 273.1L456.0 273.2L464.4 269.1L465.7 268.9Z" fill="#fafafa" stroke="#fafafa" stroke-width="0.9"/>
<path d="M458.5 241.8L456.3 241.8L466.8 237.0L468.9 237.0Z" fill="#006900" stroke="#006900" stroke-width="0.9"/>
<path d="M368.1 166.0L366.8 165.2L376.4 162.2L377.7 163.0Z" fill="#f3f3f3" stroke="#f3f3f3" stroke-width="0.9"/>
<path d="M514.9 298.6L515.6 295.2L525.2 289.6L524.5 293.0Z" fill="#00b300" stroke="#00b300" stroke-width="0.9"/>
<path d="M401.4 249.5L400.7 247.6L409.3 243.8L410.0 245.8Z" fill="#5f5f5f" stroke="#5f5f5f" stroke-width="0.9"/>
<path d="M373.7 183.7L374.2 182.3L383.6 179.1L383.2 180.5ZM467.9 295.0L468.7 293.9L476.9 289.5L476.1 290.6Z" fill="#4b4b4b" stroke="#4b4b4b" stroke-width="0.9"/>
<path d="M497.4 319.5L499.4 317.1L509.2 311.2L507.3 313.6Z" fill="#00b300" stroke="#00b300" stroke-width="0.9"/>
<path d="M465.6 315.7L468.9 314.3L479.3 308.5L476.0 309.8Z" fill="#00e100" stroke="#00e100" stroke-width="0.9"/>
<path d="M476.9 333.2L474.6 326.2L484.9 320.2L487.1 327.1Z" fill="#004d00" stroke="#004d00" stroke-width="0.9"/>
<path d="M385.7 122.9L384.9 129.4L381.1 129.1L379.0 122.3L377.8 122.3L376.1 109.6L380.4 109.8L384.8 110.2Z" fill="#0a0af0" stroke="#0a0af0" stroke-width="0.9"/>
<path d="M369.3 167.0L368.1 166.0L377.7 163.0L378.9 164.0Z" fill="#e5e5e5" stroke="#e5e5e5" stroke-width="0.9"/>
<path d="M463.3 328.8L466.1 335.6L469.2 335.4L468.2 328.4L470.2 327.9L465.4 315.7L463.9 316.1L462.3 316.3L460.6 316.4Z" fill="#0cc40c" stroke="#0cc40c" stroke-width="0.9"/>
<path d="M477.2 345.5L473.7 339.5L476.0 336.7L481.4 340.5L482.1 339.6L490.8 348.6L488.1 351.9L485.4 355.1Z" fill="#0a0af0" stroke="#0a0af0" stroke-width="0.9"/>
<path d="M421.2 148.4L419.2 144.9L430.4 141.5L432.3 144.9Z" fill="#00b300" stroke="#00b300" stroke-width="0.9"/>
<path d="M493.5 344.7L496.2 340.5L514.1 329.3L511.4 333.4Z" fill="#070753" stroke="#070753" stroke-width="0.9"/>
<path d="M374.2 182.3L374.4 180.8L383.9 177.6L383.6 179.1Z" fill="#4b4b4b" stroke="#4b4b4b" stroke-width="0.9"/>
<path d="M458.6 273.2L457.3 273.1L465.7 268.9L467.0 269.0Z" fill="#fafafa" stroke="#fafafa" stroke-width="0.9"/>
<path d="M390.9 137.7L388.9 136.3L400.6 133.0L402.5 134.4Z" fill="#006000" stroke="#006000" stroke-width="0.9"/>
<path d="M427.8 168.4L427.1 164.5L438.1 160.8L438.8 164.7Z" fill="#00b300" stroke="#00b300" stroke-width="0.9"/>
<path d="M411.2 260.5L403.3 257.5L411.9 253.7L419.8 256.6Z" fill="#585858" stroke="#585858" stroke-width="0.9"/>
<path d="M490.3 245.3L488.3 243.8L498.2 239.0L500.2 240.5Z" fill="#006000" stroke="#006000" stroke-width="0.9"/>
<path d="M468.7 293.9L469.3 292.7L477.6 288.3L476.9 289.5Z" fill="#4b4b4b" stroke="#4b4b4b" stroke-width="0.9"/>
<path d="M499.4 317.1L495.0 311.1L504.9 305.3L509.2 311.2Z" fill="#004e00" stroke="#004e00" stroke-width="0.9"/>
<path d="M393.5 225.6L390.6 223.3L399.3 219.9L402.3 222.1Z" fill="#e9e9e9" stroke="#e9e9e9" stroke-width="0.9"/>
<path d="M370.4 168.2L369.3 167.0L378.9 164.0L380.0 165.2Z" fill="#d4d4d4" stroke="#d4d4d4" stroke-width="0.9"/>
<path d="M409.8 193.0L410.4 190.7L421.7 186.6L421.1 188.9Z" fill="#005900" stroke="#005900" stroke-width="0.9"/>
<path d="M374.4 180.8L374.5 179.2L384.0 176.0L383.9 177.6Z" fill="#4b4b4b" stroke="#4b4b4b" stroke-width="0.9"/>
<path d="M388.9 136.3L389.6 129.2L401.3 126.0L400.6 133.0Z" fill="#004d00" stroke="#004d00" stroke-width="0.9"/>
<path d="M425.3 158.2L423.9 154.4L435.0 150.8L436.3 154.6Z" fill="#00b300" stroke="#00b300" stroke-width="0.9"/>
<path d="M389.6 129.2L386.6 127.4L398.3 124.2L401.3 126.0Z" fill="#00bc00" stroke="#00bc00" stroke-width="0.9"/>
<path d="M495.0 311.1L496.1 309.2L506.0 303.5L504.9 305.3Z" fill="#005900" stroke="#005900" stroke-width="0.9"/>
<path d="M460.0 273.5L458.6 273.2L467.0 269.0L468.3 269.3Z" fill="#fafafa" stroke="#fafafa" stroke-width="0.9"/>
<path d="M371.4 169.6L370.4 168.2L380.0 165.2L381.0 166.5Z" fill="#c1c1c1" stroke="#c1c1c1" stroke-width="0.9"/>
<path d="M374.5 179.2L374.4 177.5L383.9 174.4L384.0 176.0Z" fill="#4b4b4b" stroke="#4b4b4b" stroke-width="0.9"/>
<path d="M414.9 198.0L409.8 193.0L421.1 188.9L426.1 193.8Z" fill="#005200" stroke="#005200" stroke-width="0.9"/>
<path d="M388.9 136.3L389.6 129.2L386.6 127.4L384.1 133.4L382.0 132.5L380.6 144.8L382.2 145.5L383.8 146.4L385.4 147.4Z" fill="#0cc40c" stroke="#0cc40c" stroke-width="0.9"/>
<path d="M480.3 330.6L485.9 334.0L494.9 328.6L489.4 325.2Z" fill="#000069" stroke="#000069" stroke-width="0.9"/>
<path d="M469.3 292.7L469.8 291.4L478.0 287.0L477.6 288.3Z" fill="#4b4b4b" stroke="#4b4b4b" stroke-width="0.9"/>
<path d="M510.1 283.1L509.9 280.5L519.6 275.2L519.8 277.7Z" fill="#005900" stroke="#005900" stroke-width="0.9"/>
<path d="M372.3 171.0L371.4 169.6L381.0 166.5L381.9 168.0Z" fill="#acacac" stroke="#acacac" stroke-width="0.9"/>
<path d="M488.3 243.8L489.2 237.2L499.2 232.5L498.2 239.0Z" fill="#004d00" stroke="#004d00" stroke-width="0.9"/>
<path d="M374.4 177.5L374.1 175.8L383.6 172.7L383.9 174.4Z" fill="#4b4b4b" stroke="#4b4b4b" stroke-width="0.9"/>
<path d="M413.7 201.3L414.9 198.0L426.1 193.8L424.9 197.0Z" fill="#00b300" stroke="#00b300" stroke-width="0.9"/>
<path d="M396.7 240.2L400.9 233.4L409.6 229.8L405.4 236.6Z" fill="#484848" stroke="#484848" stroke-width="0.9"/>
<path d="M373.1 172.6L372.3 171.0L381.9 168.0L382.6 169.5Z" fill="#959595" stroke="#959595" stroke-width="0.9"/>
<path d="M374.1 175.8L373.7 174.2L383.2 171.1L383.6 172.7Z" fill="#646464" stroke="#646464" stroke-width="0.9"/>
<path d="M373.7 174.2L373.1 172.6L382.6 169.5L383.2 171.1Z" fill="#7d7d7d" stroke="#7d7d7d" stroke-width="0.9"/>
<path d="M461.4 274.0L460.0 273.5L468.3 269.3L469.7 269.8Z" fill="#fafafa" stroke="#fafafa" stroke-width="0.9"/>
<path d="M432.7 250.9L427.9 245.4L425.6 247.3L429.0 254.0L427.6 255.5L435.8 265.4L436.9 264.3L438.1 263.2L439.3 262.3Z" fill="#0cc40c" stroke="#0cc40c" stroke-width="0.9"/>
<path d="M489.2 237.2L486.1 235.3L496.1 230.6L499.2 232.5Z" fill="#00bc00" stroke="#00bc00" stroke-width="0.9"/>
<path d="M469.8 291.4L470.1 290.0L478.3 285.6L478.0 287.0Z" fill="#4b4b4b" stroke="#4b4b4b" stroke-width="0.9"/>
<path d="M409.2 249.8L401.4 249.5L410.0 245.8L417.8 246.0Z" fill="#5c5c5c" stroke="#5c5c5c" stroke-width="0.9"/>
<path d="M404.8 239.4L397.8 241.9L406.5 238.3L413.4 235.8Z" fill="#5f5f5f" stroke="#5f5f5f" stroke-width="0.9"/>
<path d="M496.5 311.6L502.2 314.1L511.0 308.9L505.3 306.5Z" fill="#000069" stroke="#000069" stroke-width="0.9"/>
<path d="M411.4 264.3L411.2 260.5L419.8 256.6L419.9 260.4Z" fill="#e0e0e0" stroke="#e0e0e0" stroke-width="0.9"/>
<path d="M393.7 124.3L392.4 130.6L402.8 127.8L404.0 121.5Z" fill="#000069" stroke="#000069" stroke-width="0.9"/>
<path d="M400.7 247.6L406.7 243.0L415.3 239.4L409.3 243.8Z" fill="#484848" stroke="#484848" stroke-width="0.9"/>
<path d="M399.7 113.2L394.6 111.9L418.0 105.9L422.9 107.2Z" fill="#0606f2" stroke="#0606f2" stroke-width="0.9"/>
<path d="M516.2 285.6L510.1 283.1L519.8 277.7L525.8 280.2Z" fill="#005800" stroke="#005800" stroke-width="0.9"/>
<path d="M462.7 274.7L461.4 274.0L469.7 269.8L471.0 270.5Z" fill="#fafafa" stroke="#fafafa" stroke-width="0.9"/>
<path d="M407.9 198.1L413.7 201.3L414.9 198.0L409.8 193.0L410.4 190.7L400.2 185.0L399.8 186.8L399.2 188.5L398.5 190.2Z" fill="#0cc40c" stroke="#0cc40c" stroke-width="0.9"/>
<path d="M470.1 290.0L470.2 288.5L478.5 284.1L478.3 285.6Z" fill="#4b4b4b" stroke="#4b4b4b" stroke-width="0.9"/>
<path d="M496.5 251.2L494.8 249.3L504.7 244.4L506.4 246.3Z" fill="#005d00" stroke="#005d00" stroke-width="0.9"/>
<path d="M420.1 126.4L417.9 132.3L427.8 129.4L430.0 123.6Z" fill="#000069" stroke="#000069" stroke-width="0.9"/>
<path d="M464.0 275.6L462.7 274.7L471.0 270.5L472.3 271.4Z" fill="#f3f3f3" stroke="#f3f3f3" stroke-width="0.9"/>
<path d="M516.2 289.3L516.2 285.6L525.8 280.2L525.8 283.9Z" fill="#00b300" stroke="#00b300" stroke-width="0.9"/>
<path d="M508.8 274.6L508.2 272.0L517.9 266.8L518.5 269.3Z" fill="#005900" stroke="#005900" stroke-width="0.9"/>
<path d="M470.2 288.5L470.2 286.9L478.4 282.5L478.5 284.1Z" fill="#4b4b4b" stroke="#4b4b4b" stroke-width="0.9"/>
<path d="M461.9 235.2L458.7 234.8L469.2 230.1L472.4 230.5Z" fill="#00c200" stroke="#00c200" stroke-width="0.9"/>
<path d="M397.2 143.5L395.4 141.6L406.9 138.3L408.7 140.1Z" fill="#005d00" stroke="#005d00" stroke-width="0.9"/>
<path d="M496.2 340.5L498.7 336.1L516.5 325.0L514.1 329.3Z" fill="#070754" stroke="#070754" stroke-width="0.9"/>
<path d="M438.7 248.0L434.8 241.6L445.7 236.7L449.6 243.0Z" fill="#004d00" stroke="#004d00" stroke-width="0.9"/>
<path d="M465.2 276.6L464.0 275.6L472.3 271.4L473.5 272.4Z" fill="#e5e5e5" stroke="#e5e5e5" stroke-width="0.9"/>
<path d="M411.3 185.0L411.4 182.4L422.7 178.5L422.6 181.0Z" fill="#005900" stroke="#005900" stroke-width="0.9"/>
<path d="M400.9 233.4L398.4 230.4L407.1 226.8L409.6 229.8Z" fill="#e3e3e3" stroke="#e3e3e3" stroke-width="0.9"/>
<path d="M470.2 286.9L469.9 285.3L478.2 280.9L478.4 282.5Z" fill="#4b4b4b" stroke="#4b4b4b" stroke-width="0.9"/>
<path d="M463.6 242.4L461.9 235.2L472.4 230.5L474.0 237.6Z" fill="#004d00" stroke="#004d00" stroke-width="0.9"/>
<path d="M465.8 242.9L463.6 242.4L474.0 237.6L476.2 238.1Z" fill="#006600" stroke="#006600" stroke-width="0.9"/>
<path d="M466.3 277.8L465.2 276.6L473.5 272.4L474.6 273.6Z" fill="#d4d4d4" stroke="#d4d4d4" stroke-width="0.9"/>
<path d="M501.9 258.3L500.4 256.0L510.2 251.1L511.7 253.2Z" fill="#005900" stroke="#005900" stroke-width="0.9"/>
<path d="M469.9 285.3L469.5 283.7L477.8 279.4L478.2 280.9Z" fill="#646464" stroke="#646464" stroke-width="0.9"/>
<path d="M494.8 249.3L497.0 243.3L506.9 238.5L504.7 244.4Z" fill="#004d00" stroke="#004d00" stroke-width="0.9"/>
<path d="M481.2 330.9L483.6 329.1L493.8 323.0L491.4 324.8Z" fill="#00b300" stroke="#00b300" stroke-width="0.9"/>
<path d="M506.1 266.2L504.9 263.7L514.7 258.6L515.8 261.0Z" fill="#005900" stroke="#005900" stroke-width="0.9"/>
<path d="M467.3 279.2L466.3 277.8L474.6 273.6L475.6 274.9Z" fill="#c1c1c1" stroke="#c1c1c1" stroke-width="0.9"/>
<path d="M469.5 283.7L469.0 282.1L477.2 277.8L477.8 279.4Z" fill="#7d7d7d" stroke="#7d7d7d" stroke-width="0.9"/>
<path d="M468.2 280.6L467.3 279.2L475.6 274.9L476.5 276.3Z" fill="#acacac" stroke="#acacac" stroke-width="0.9"/>
<path d="M395.4 141.6L397.3 135.2L408.9 131.9L406.9 138.3Z" fill="#004d00" stroke="#004d00" stroke-width="0.9"/>
<path d="M469.0 282.1L468.2 280.6L476.5 276.3L477.2 277.8Z" fill="#959595" stroke="#959595" stroke-width="0.9"/>
<path d="M410.2 253.6L409.2 249.8L417.8 246.0L418.8 249.8Z" fill="#e0e0e0" stroke="#e0e0e0" stroke-width="0.9"/>
<path d="M395.4 141.6L397.3 135.2L394.5 132.7L390.9 137.7L388.9 136.3L385.4 147.4L386.9 148.5L388.4 149.8L389.8 151.1Z" fill="#0cc40c" stroke="#0cc40c" stroke-width="0.9"/>
<path d="M440.7 247.4L438.7 248.0L449.6 243.0L451.6 242.5Z" fill="#006a00" stroke="#006a00" stroke-width="0.9"/>
<path d="M470.2 327.9L474.1 334.3L476.9 333.2L474.6 326.2L476.4 325.3L469.7 313.9L468.3 314.6L466.9 315.3L465.4 315.7Z" fill="#0cc40c" stroke="#0cc40c" stroke-width="0.9"/>
<path d="M515.0 275.7L508.8 274.6L518.5 269.3L524.7 270.4Z" fill="#005b00" stroke="#005b00" stroke-width="0.9"/>
<path d="M416.9 188.8L411.3 185.0L422.6 181.0L428.2 184.7Z" fill="#005500" stroke="#005500" stroke-width="0.9"/>
<path d="M502.0 312.6L503.4 309.6L513.3 303.8L511.9 306.8Z" fill="#00b300" stroke="#00b300" stroke-width="0.9"/>
<path d="M397.3 135.2L394.5 132.7L406.1 129.4L408.9 131.9Z" fill="#00b800" stroke="#00b800" stroke-width="0.9"/>
<path d="M406.7 243.0L404.8 239.4L413.4 235.8L415.3 239.4Z" fill="#e0e0e0" stroke="#e0e0e0" stroke-width="0.9"/>
<path d="M497.0 243.3L494.1 240.8L504.0 236.0L506.9 238.5Z" fill="#00b800" stroke="#00b800" stroke-width="0.9"/>
<path d="M498.2 304.5L498.9 302.3L508.8 296.6L508.1 298.8Z" fill="#005900" stroke="#005900" stroke-width="0.9"/>
<path d="M503.4 309.6L498.2 304.5L508.1 298.8L513.3 303.8Z" fill="#005200" stroke="#005200" stroke-width="0.9"/>
<path d="M446.2 277.8L445.0 278.4L453.6 274.1L454.8 273.6Z" fill="#fafafa" stroke="#fafafa" stroke-width="0.9"/>
<path d="M483.6 329.1L480.2 322.4L490.5 316.4L493.8 323.0Z" fill="#004d00" stroke="#004d00" stroke-width="0.9"/>
<path d="M416.4 192.4L416.9 188.8L428.2 184.7L427.6 188.3Z" fill="#00b300" stroke="#00b300" stroke-width="0.9"/>
<path d="M393.7 124.3L392.4 130.6L388.6 129.9L386.9 123.0L385.7 122.9L384.8 110.2L389.2 110.8L393.6 111.7Z" fill="#0a0af0" stroke="#0a0af0" stroke-width="0.9"/>
<path d="M404.8 114.7L399.7 113.2L422.9 107.2L427.9 108.7Z" fill="#0606f2" stroke="#0606f2" stroke-width="0.9"/>
<path d="M402.5 150.7L401.0 148.4L412.5 144.9L414.0 147.1Z" fill="#005900" stroke="#005900" stroke-width="0.9"/>
<path d="M500.4 256.0L503.8 251.0L513.6 246.1L510.2 251.1Z" fill="#004d00" stroke="#004d00" stroke-width="0.9"/>
<path d="M410.4 190.7L416.4 192.4L416.9 188.8L411.3 185.0L411.4 182.4L400.9 179.3L400.8 181.3L400.6 183.2L400.2 185.0Z" fill="#0cc40c" stroke="#0cc40c" stroke-width="0.9"/>
<path d="M482.1 339.6L478.3 333.7L480.3 330.6L485.9 334.0L486.5 333.0L495.6 341.4L493.3 345.1L490.8 348.6Z" fill="#0a0af0" stroke="#0a0af0" stroke-width="0.9"/>
<path d="M457.5 301.1L458.5 300.4L467.0 295.9L465.9 296.6Z" fill="#4b4b4b" stroke="#4b4b4b" stroke-width="0.9"/>
<path d="M411.3 176.3L411.0 173.7L422.3 169.8L422.6 172.4Z" fill="#005900" stroke="#005900" stroke-width="0.9"/>
<path d="M512.0 265.8L506.1 266.2L515.8 261.0L521.7 260.7Z" fill="#005d00" stroke="#005d00" stroke-width="0.9"/>
<path d="M515.7 279.5L515.0 275.7L524.7 270.4L525.3 274.2Z" fill="#00b300" stroke="#00b300" stroke-width="0.9"/>
<path d="M507.4 256.4L501.9 258.3L511.7 253.2L517.1 251.4Z" fill="#005e00" stroke="#005e00" stroke-width="0.9"/>
<path d="M504.9 263.7L509.3 259.9L519.1 254.8L514.7 258.6Z" fill="#004d00" stroke="#004d00" stroke-width="0.9"/>
<path d="M480.2 322.4L481.7 321.0L491.9 315.0L490.5 316.4Z" fill="#005900" stroke="#005900" stroke-width="0.9"/>
<path d="M447.4 277.5L446.2 277.8L454.8 273.6L456.0 273.2Z" fill="#fafafa" stroke="#fafafa" stroke-width="0.9"/>
<path d="M484.1 324.0L489.8 327.0L498.8 321.6L493.2 318.7Z" fill="#000069" stroke="#000069" stroke-width="0.9"/>
<path d="M438.7 248.0L434.8 241.6L432.1 242.8L434.4 249.9L432.7 250.9L439.3 262.3L440.7 261.5L442.1 260.8L443.6 260.3Z" fill="#0cc40c" stroke="#0cc40c" stroke-width="0.9"/>
<path d="M498.7 336.1L501.0 331.5L518.8 320.5L516.5 325.0Z" fill="#070756" stroke="#070756" stroke-width="0.9"/>
<path d="M499.2 304.2L505.0 306.1L513.8 301.0L508.0 299.1Z" fill="#000069" stroke="#000069" stroke-width="0.9"/>
<path d="M458.5 300.4L459.5 299.5L467.9 295.0L467.0 295.9Z" fill="#4b4b4b" stroke="#4b4b4b" stroke-width="0.9"/>
<path d="M406.8 158.8L405.6 156.3L417.1 152.7L418.2 155.1ZM409.7 167.5L409.0 164.8L420.4 161.1L421.1 163.7Z" fill="#005900" stroke="#005900" stroke-width="0.9"/>
<path d="M401.0 148.4L404.1 142.9L415.6 139.5L412.5 144.9Z" fill="#004d00" stroke="#004d00" stroke-width="0.9"/>
<path d="M401.0 148.4L404.1 142.9L401.7 139.8L397.2 143.5L395.4 141.6L389.8 151.1L391.2 152.6L392.5 154.2L393.7 155.8Z" fill="#0cc40c" stroke="#0cc40c" stroke-width="0.9"/>
<path d="M503.8 251.0L501.3 247.9L511.2 243.0L513.6 246.1Z" fill="#00b500" stroke="#00b500" stroke-width="0.9"/>
<path d="M401.8 126.4L400.1 132.6L410.3 129.7L412.0 123.6Z" fill="#000069" stroke="#000069" stroke-width="0.9"/>
<path d="M448.7 277.4L447.4 277.5L456.0 273.2L457.3 273.1Z" fill="#fafafa" stroke="#fafafa" stroke-width="0.9"/>
<path d="M417.2 178.7L411.3 176.3L422.6 172.4L428.5 174.8Z" fill="#005800" stroke="#005800" stroke-width="0.9"/>
<path d="M428.0 130.1L425.5 135.6L435.3 132.7L437.9 127.2Z" fill="#000069" stroke="#000069" stroke-width="0.9"/>
<path d="M459.5 299.5L460.3 298.5L468.7 293.9L467.9 295.0Z" fill="#4b4b4b" stroke="#4b4b4b" stroke-width="0.9"/>
<path d="M513.4 269.5L512.0 265.8L521.7 260.7L523.0 264.3Z" fill="#00b300" stroke="#00b300" stroke-width="0.9"/>
<path d="M473.0 245.7L470.9 244.7L481.2 239.9L483.4 240.9Z" fill="#006400" stroke="#006400" stroke-width="0.9"/>
<path d="M411.4 182.4L417.3 182.6L417.2 178.7L411.3 176.3L411.0 173.7L400.6 173.2L400.8 175.3L400.9 177.3L400.9 179.3Z" fill="#0cc40c" stroke="#0cc40c" stroke-width="0.9"/>
<path d="M442.7 239.7L439.6 240.2L450.5 235.4L453.5 234.9Z" fill="#00c400" stroke="#00c400" stroke-width="0.9"/>
<path d="M509.3 259.9L507.4 256.4L517.1 251.4L519.1 254.8Z" fill="#00b300" stroke="#00b300" stroke-width="0.9"/>
<path d="M450.1 277.5L448.7 277.4L457.3 273.1L458.6 273.2Z" fill="#fafafa" stroke="#fafafa" stroke-width="0.9"/>
<path d="M470.9 244.7L470.5 237.6L480.9 232.8L481.2 239.9Z" fill="#004d00" stroke="#004d00" stroke-width="0.9"/>
<path d="M470.5 237.6L467.2 236.4L477.6 231.7L480.9 232.8Z" fill="#00bf00" stroke="#00bf00" stroke-width="0.9"/>
<path d="M404.1 142.9L401.7 139.8L413.2 136.4L415.6 139.5Z" fill="#00b500" stroke="#00b500" stroke-width="0.9"/>
<path d="M460.3 298.5L460.9 297.3L469.3 292.7L468.7 293.9Z" fill="#4b4b4b" stroke="#4b4b4b" stroke-width="0.9"/>
<path d="M417.3 182.6L417.2 178.7L428.5 174.8L428.6 178.6Z" fill="#00b300" stroke="#00b300" stroke-width="0.9"/>
<path d="M405.6 156.3L409.8 151.9L421.2 148.4L417.1 152.7Z" fill="#004d00" stroke="#004d00" stroke-width="0.9"/>
<path d="M409.8 116.5L404.8 114.7L427.9 108.7L432.8 110.4Z" fill="#0606f2" stroke="#0606f2" stroke-width="0.9"/>
<path d="M415.8 168.3L409.7 167.5L421.1 163.7L427.1 164.5Z" fill="#005b00" stroke="#005b00" stroke-width="0.9"/>
<path d="M405.6 156.3L409.8 151.9L407.8 148.4L402.5 150.7L401.0 148.4L393.7 155.8L394.9 157.5L395.9 159.4L396.9 161.2Z" fill="#0cc40c" stroke="#0cc40c" stroke-width="0.9"/>
<path d="M500.0 296.9L500.2 294.4L510.1 288.9L509.9 291.3Z" fill="#005900" stroke="#005900" stroke-width="0.9"/>
<path d="M445.5 246.7L442.7 239.7L453.5 234.9L456.3 241.8Z" fill="#004d00" stroke="#004d00" stroke-width="0.9"/>
<path d="M412.6 158.0L406.8 158.8L418.2 155.1L423.9 154.4Z" fill="#005d00" stroke="#005d00" stroke-width="0.9"/>
<path d="M409.0 164.8L414.0 161.9L425.3 158.2L420.4 161.1Z" fill="#004d00" stroke="#004d00" stroke-width="0.9"/>
<path d="M451.5 277.8L450.1 277.5L458.6 273.2L460.0 273.5Z" fill="#fafafa" stroke="#fafafa" stroke-width="0.9"/>
<path d="M476.4 325.3L481.2 330.9L483.6 329.1L480.2 322.4L481.7 321.0L473.4 310.9L472.2 312.0L471.0 313.0L469.7 313.9ZM411.0 173.7L416.5 172.3L415.8 168.3L409.7 167.5L409.0 164.8L399.2 167.1L399.8 169.2L400.2 171.2L400.6 173.2Z" fill="#0cc40c" stroke="#0cc40c" stroke-width="0.9"/>
<path d="M460.9 297.3L461.4 295.9L469.8 291.4L469.3 292.7Z" fill="#4b4b4b" stroke="#4b4b4b" stroke-width="0.9"/>
<path d="M505.8 300.8L500.0 296.9L509.9 291.3L515.6 295.2Z" fill="#005500" stroke="#005500" stroke-width="0.9"/>
<path d="M447.7 246.7L445.5 246.7L456.3 241.8L458.5 241.8Z" fill="#006900" stroke="#006900" stroke-width="0.9"/>
<path d="M409.0 164.8L414.0 161.9L412.6 158.0L406.8 158.8L405.6 156.3L396.9 161.2L397.8 163.2L398.6 165.1L399.2 167.1Z" fill="#0cc40c" stroke="#0cc40c" stroke-width="0.9"/>
<path d="M501.0 331.5L503.0 326.7L520.9 315.8L518.8 320.5Z" fill="#070757" stroke="#070757" stroke-width="0.9"/>
<path d="M452.8 278.3L451.5 277.8L460.0 273.5L461.4 274.0Z" fill="#fafafa" stroke="#fafafa" stroke-width="0.9"/>
<path d="M505.1 304.3L505.8 300.8L515.6 295.2L514.9 298.6ZM487.2 325.6L489.2 323.2L499.4 317.1L497.4 319.5Z" fill="#00b300" stroke="#00b300" stroke-width="0.9"/>
<path d="M461.4 295.9L461.7 294.5L470.1 290.0L469.8 291.4Z" fill="#4b4b4b" stroke="#4b4b4b" stroke-width="0.9"/>
<path d="M409.8 151.9L407.8 148.4L419.2 144.9L421.2 148.4ZM416.5 172.3L415.8 168.3L427.1 164.5L427.8 168.4Z" fill="#00b300" stroke="#00b300" stroke-width="0.9"/>
<path d="M454.2 279.0L452.8 278.3L461.4 274.0L462.7 274.7Z" fill="#fafafa" stroke="#fafafa" stroke-width="0.9"/>
<path d="M489.2 323.2L484.7 317.1L495.0 311.1L499.4 317.1Z" fill="#004e00" stroke="#004e00" stroke-width="0.9"/>
<path d="M461.7 294.5L461.8 292.9L470.2 288.5L470.1 290.0Z" fill="#4b4b4b" stroke="#4b4b4b" stroke-width="0.9"/>
<path d="M480.0 250.3L478.0 248.7L488.3 243.8L490.3 245.3Z" fill="#006000" stroke="#006000" stroke-width="0.9"/>
<path d="M501.4 296.2L507.3 297.7L516.0 292.6L510.2 291.2Z" fill="#000069" stroke="#000069" stroke-width="0.9"/>
<path d="M401.8 126.4L400.1 132.6L396.2 131.5L394.9 124.5L393.7 124.3L393.6 111.7L398.0 112.7L402.5 114.0Z" fill="#0a0af0" stroke="#0a0af0" stroke-width="0.9"/>
<path d="M445.5 246.7L442.7 239.7L439.6 240.2L440.7 247.4L438.7 248.0L443.6 260.3L445.1 259.8L446.7 259.6L448.3 259.4Z" fill="#0cc40c" stroke="#0cc40c" stroke-width="0.9"/>
<path d="M414.0 161.9L412.6 158.0L423.9 154.4L425.3 158.2Z" fill="#00b300" stroke="#00b300" stroke-width="0.9"/>
<path d="M455.5 279.9L454.2 279.0L462.7 274.7L464.0 275.6Z" fill="#f3f3f3" stroke="#f3f3f3" stroke-width="0.9"/>
<path d="M486.5 333.0L482.3 327.4L484.1 324.0L489.8 327.0L490.4 325.9L499.9 333.6L497.9 337.6L495.6 341.4Z" fill="#0a0af0" stroke="#0a0af0" stroke-width="0.9"/>
<path d="M484.7 317.1L485.9 315.2L496.1 309.2L495.0 311.1Z" fill="#005900" stroke="#005900" stroke-width="0.9"/>
<path d="M487.4 316.9L493.2 319.4L502.2 314.1L496.5 311.6Z" fill="#000069" stroke="#000069" stroke-width="0.9"/>
<path d="M461.8 292.9L461.7 291.3L470.2 286.9L470.2 288.5Z" fill="#4b4b4b" stroke="#4b4b4b" stroke-width="0.9"/>
<path d="M456.7 281.0L455.5 279.9L464.0 275.6L465.2 276.6Z" fill="#e5e5e5" stroke="#e5e5e5" stroke-width="0.9"/>
<path d="M435.9 134.4L432.9 139.6L442.7 136.6L445.7 131.5Z" fill="#000069" stroke="#000069" stroke-width="0.9"/>
<path d="M414.9 118.6L409.8 116.5L432.8 110.4L437.7 112.5Z" fill="#0606ee" stroke="#0606ee" stroke-width="0.9"/>
<path d="M461.7 291.3L461.5 289.7L469.9 285.3L470.2 286.9Z" fill="#4b4b4b" stroke="#4b4b4b" stroke-width="0.9"/>
<path d="M500.2 288.6L500.0 286.0L509.9 280.5L510.1 283.1Z" fill="#005900" stroke="#005900" stroke-width="0.9"/>
<path d="M478.0 248.7L478.9 242.0L489.2 237.2L488.3 243.8Z" fill="#004d00" stroke="#004d00" stroke-width="0.9"/>
<path d="M457.8 282.2L456.7 281.0L465.2 276.6L466.3 277.8Z" fill="#d4d4d4" stroke="#d4d4d4" stroke-width="0.9"/>
<path d="M409.9 129.3L407.7 135.2L417.9 132.3L420.1 126.4Z" fill="#000069" stroke="#000069" stroke-width="0.9"/>
<path d="M461.5 289.7L461.1 288.1L469.5 283.7L469.9 285.3Z" fill="#646464" stroke="#646464" stroke-width="0.9"/>
<path d="M458.9 283.5L457.8 282.2L466.3 277.8L467.3 279.2Z" fill="#c1c1c1" stroke="#c1c1c1" stroke-width="0.9"/>
<path d="M461.1 288.1L460.5 286.5L469.0 282.1L469.5 283.7Z" fill="#7d7d7d" stroke="#7d7d7d" stroke-width="0.9"/>
<path d="M459.8 285.0L458.9 283.5L467.3 279.2L468.2 280.6Z" fill="#acacac" stroke="#acacac" stroke-width="0.9"/>
<path d="M460.5 286.5L459.8 285.0L468.2 280.6L469.0 282.1Z" fill="#959595" stroke="#959595" stroke-width="0.9"/>
<path d="M478.9 242.0L475.8 240.1L486.1 235.3L489.2 237.2Z" fill="#00bc00" stroke="#00bc00" stroke-width="0.9"/>
<path d="M503.0 326.7L504.9 321.7L522.8 310.9L520.9 315.8Z" fill="#070759" stroke="#070759" stroke-width="0.9"/>
<path d="M506.4 291.2L500.2 288.6L510.1 283.1L516.2 285.6Z" fill="#005800" stroke="#005800" stroke-width="0.9"/>
<path d="M486.4 256.2L484.6 254.3L494.8 249.3L496.5 251.2Z" fill="#005d00" stroke="#005d00" stroke-width="0.9"/>
<path d="M437.4 282.2L436.2 282.8L445.0 278.4L446.2 277.8Z" fill="#fafafa" stroke="#fafafa" stroke-width="0.9"/>
<path d="M451.1 240.0L447.9 239.7L458.7 234.8L461.9 235.2Z" fill="#00c200" stroke="#00c200" stroke-width="0.9"/>
<path d="M481.7 321.0L487.2 325.6L489.2 323.2L484.7 317.1L485.9 315.2L476.2 306.8L475.4 308.3L474.4 309.6L473.4 310.9Z" fill="#0cc40c" stroke="#0cc40c" stroke-width="0.9"/>
<path d="M506.4 294.9L506.4 291.2L516.2 285.6L516.2 289.3Z" fill="#00b300" stroke="#00b300" stroke-width="0.9"/>
<path d="M448.8 305.8L449.9 305.1L458.5 300.4L457.5 301.1Z" fill="#4b4b4b" stroke="#4b4b4b" stroke-width="0.9"/>
<path d="M498.9 280.0L498.2 277.4L508.2 272.0L508.8 274.6Z" fill="#005900" stroke="#005900" stroke-width="0.9"/>
<path d="M452.8 247.3L451.1 240.0L461.9 235.2L463.6 242.4Z" fill="#004d00" stroke="#004d00" stroke-width="0.9"/>
<path d="M455.0 247.8L452.8 247.3L463.6 242.4L465.8 242.9Z" fill="#006600" stroke="#006600" stroke-width="0.9"/>
<path d="M438.6 281.9L437.4 282.2L446.2 277.8L447.4 277.5Z" fill="#fafafa" stroke="#fafafa" stroke-width="0.9"/>
<path d="M491.8 263.4L490.3 261.2L500.4 256.0L501.9 258.3Z" fill="#005900" stroke="#005900" stroke-width="0.9"/>
<path d="M484.6 254.3L486.8 248.3L497.0 243.3L494.8 249.3Z" fill="#004d00" stroke="#004d00" stroke-width="0.9"/>
<path d="M496.0 271.4L494.9 269.0L504.9 263.7L506.1 266.2Z" fill="#005900" stroke="#005900" stroke-width="0.9"/>
<path d="M449.9 305.1L450.8 304.2L459.5 299.5L458.5 300.4Z" fill="#4b4b4b" stroke="#4b4b4b" stroke-width="0.9"/>
<path d="M420.0 121.0L414.9 118.6L437.7 112.5L442.5 114.8Z" fill="#0606e8" stroke="#0606e8" stroke-width="0.9"/>
<path d="M503.1 287.9L508.9 288.9L517.7 283.9L511.9 283.0Z" fill="#000069" stroke="#000069" stroke-width="0.9"/>
<path d="M440.0 281.8L438.6 281.9L447.4 277.5L448.7 277.4Z" fill="#fafafa" stroke="#fafafa" stroke-width="0.9"/>
<path d="M505.1 281.1L498.9 280.0L508.8 274.6L515.0 275.7Z" fill="#005b00" stroke="#005b00" stroke-width="0.9"/>
<path d="M491.9 318.6L493.2 315.6L503.4 309.6L502.0 312.6Z" fill="#00b300" stroke="#00b300" stroke-width="0.9"/>
<path d="M452.8 247.3L451.1 240.0L447.9 239.7L447.7 246.7L445.5 246.7L448.3 259.4L450.0 259.4L451.6 259.6L453.3 259.9Z" fill="#0cc40c" stroke="#0cc40c" stroke-width="0.9"/>
<path d="M488.0 310.4L488.7 308.2L498.9 302.3L498.2 304.5Z" fill="#005900" stroke="#005900" stroke-width="0.9"/>
<path d="M443.7 139.4L440.3 144.3L450.0 141.2L453.4 136.4Z" fill="#000069" stroke="#000069" stroke-width="0.9"/>
<path d="M450.8 304.2L451.6 303.1L460.3 298.5L459.5 299.5Z" fill="#4b4b4b" stroke="#4b4b4b" stroke-width="0.9"/>
<path d="M493.2 315.6L488.0 310.4L498.2 304.5L503.4 309.6Z" fill="#005200" stroke="#005200" stroke-width="0.9"/>
<path d="M504.9 321.7L506.6 316.6L524.4 305.9L522.8 310.9Z" fill="#07075b" stroke="#07075b" stroke-width="0.9"/>
<path d="M486.8 248.3L483.9 245.7L494.1 240.8L497.0 243.3Z" fill="#00b800" stroke="#00b800" stroke-width="0.9"/>
<path d="M490.2 309.4L496.0 311.3L505.0 306.1L499.2 304.2Z" fill="#000069" stroke="#000069" stroke-width="0.9"/>
<path d="M441.3 281.9L440.0 281.8L448.7 277.4L450.1 277.5Z" fill="#fafafa" stroke="#fafafa" stroke-width="0.9"/>
<path d="M490.3 261.2L493.7 256.1L503.8 251.0L500.4 256.0Z" fill="#004d00" stroke="#004d00" stroke-width="0.9"/>
<path d="M409.9 129.3L407.7 135.2L403.9 133.8L403.0 126.8L401.8 126.4L402.5 114.0L406.9 115.5L411.4 117.2ZM490.4 325.9L485.9 320.6L487.4 316.9L493.2 319.4L493.7 318.2L503.6 325.2L501.9 329.5L499.9 333.6Z" fill="#0a0af0" stroke="#0a0af0" stroke-width="0.9"/>
<path d="M451.6 303.1L452.3 301.9L460.9 297.3L460.3 298.5Z" fill="#4b4b4b" stroke="#4b4b4b" stroke-width="0.9"/>
<path d="M502.0 271.1L496.0 271.4L506.1 266.2L512.0 265.8Z" fill="#005d00" stroke="#005d00" stroke-width="0.9"/>
<path d="M505.8 285.0L505.1 281.1L515.0 275.7L515.7 279.5Z" fill="#00b300" stroke="#00b300" stroke-width="0.9"/>
<path d="M497.3 261.5L491.8 263.4L501.9 258.3L507.4 256.4Z" fill="#005e00" stroke="#005e00" stroke-width="0.9"/>
<path d="M417.9 133.0L415.3 138.6L425.5 135.6L428.0 130.1Z" fill="#000069" stroke="#000069" stroke-width="0.9"/>
<path d="M494.9 269.0L499.3 265.1L509.3 259.9L504.9 263.7Z" fill="#004d00" stroke="#004d00" stroke-width="0.9"/>
<path d="M442.7 282.2L441.3 281.9L450.1 277.5L451.5 277.8Z" fill="#fafafa" stroke="#fafafa" stroke-width="0.9"/>
<path d="M452.3 301.9L452.7 300.5L461.4 295.9L460.9 297.3Z" fill="#4b4b4b" stroke="#4b4b4b" stroke-width="0.9"/>
<path d="M425.0 123.6L420.0 121.0L442.5 114.8L447.4 117.4Z" fill="#1313e1" stroke="#1313e1" stroke-width="0.9"/>
<path d="M493.7 256.1L491.2 252.9L501.3 247.9L503.8 251.0Z" fill="#00b500" stroke="#00b500" stroke-width="0.9"/>
<path d="M444.1 282.7L442.7 282.2L451.5 277.8L452.8 278.3Z" fill="#fafafa" stroke="#fafafa" stroke-width="0.9"/>
<path d="M485.9 315.2L491.9 318.6L493.2 315.6L488.0 310.4L488.7 308.2L478.1 302.0L477.6 303.7L477.0 305.3L476.2 306.8Z" fill="#0cc40c" stroke="#0cc40c" stroke-width="0.9"/>
<path d="M452.7 300.5L453.0 299.1L461.7 294.5L461.4 295.9Z" fill="#4b4b4b" stroke="#4b4b4b" stroke-width="0.9"/>
<path d="M462.4 250.8L460.2 249.7L470.9 244.7L473.0 245.7Z" fill="#006400" stroke="#006400" stroke-width="0.9"/>
<path d="M503.4 274.9L502.0 271.1L512.0 265.8L513.4 269.5Z" fill="#00b300" stroke="#00b300" stroke-width="0.9"/>
<path d="M445.5 283.4L444.1 282.7L452.8 278.3L454.2 279.0Z" fill="#fafafa" stroke="#fafafa" stroke-width="0.9"/>
<path d="M504.1 279.3L509.9 279.7L518.7 274.9L512.9 274.5Z" fill="#000069" stroke="#000069" stroke-width="0.9"/>
<path d="M506.6 316.6L508.1 311.3L525.9 300.7L524.4 305.9Z" fill="#08085d" stroke="#08085d" stroke-width="0.9"/>
<path d="M460.2 249.7L459.8 242.5L470.5 237.6L470.9 244.7Z" fill="#004d00" stroke="#004d00" stroke-width="0.9"/>
<path d="M459.8 242.5L456.5 241.3L467.2 236.4L470.5 237.6Z" fill="#00bf00" stroke="#00bf00" stroke-width="0.9"/>
<path d="M499.3 265.1L497.3 261.5L507.4 256.4L509.3 259.9Z" fill="#00b300" stroke="#00b300" stroke-width="0.9"/>
<path d="M453.0 299.1L453.2 297.5L461.8 292.9L461.7 294.5Z" fill="#4b4b4b" stroke="#4b4b4b" stroke-width="0.9"/>
<path d="M451.2 145.2L447.4 149.6L457.1 146.5L460.8 142.1Z" fill="#000069" stroke="#000069" stroke-width="0.9"/>
<path d="M446.8 284.3L445.5 283.4L454.2 279.0L455.5 279.9Z" fill="#f3f3f3" stroke="#f3f3f3" stroke-width="0.9"/>
<path d="M489.7 302.7L490.0 300.2L500.2 294.4L500.0 296.9Z" fill="#005900" stroke="#005900" stroke-width="0.9"/>
<path d="M453.2 297.5L453.1 295.9L461.7 291.3L461.8 292.9Z" fill="#4b4b4b" stroke="#4b4b4b" stroke-width="0.9"/>
<path d="M460.2 249.7L459.8 242.5L456.5 241.3L455.0 247.8L452.8 247.3L453.3 259.9L455.0 260.3L456.8 260.9L458.5 261.6Z" fill="#0cc40c" stroke="#0cc40c" stroke-width="0.9"/>
<path d="M448.0 285.4L446.8 284.3L455.5 279.9L456.7 281.0Z" fill="#e5e5e5" stroke="#e5e5e5" stroke-width="0.9"/>
<path d="M453.1 295.9L452.9 294.3L461.5 289.7L461.7 291.3Z" fill="#4b4b4b" stroke="#4b4b4b" stroke-width="0.9"/>
<path d="M495.6 306.7L489.7 302.7L500.0 296.9L505.8 300.8Z" fill="#005500" stroke="#005500" stroke-width="0.9"/>
<path d="M449.1 286.6L448.0 285.4L456.7 281.0L457.8 282.2Z" fill="#d4d4d4" stroke="#d4d4d4" stroke-width="0.9"/>
<path d="M452.9 294.3L452.4 292.6L461.1 288.1L461.5 289.7Z" fill="#646464" stroke="#646464" stroke-width="0.9"/>
<path d="M492.4 301.4L498.3 302.8L507.3 297.7L501.4 296.2Z" fill="#000069" stroke="#000069" stroke-width="0.9"/>
<path d="M494.9 310.2L495.6 306.7L505.8 300.8L505.1 304.3Z" fill="#00b300" stroke="#00b300" stroke-width="0.9"/>
<path d="M450.2 288.0L449.1 286.6L457.8 282.2L458.9 283.5Z" fill="#c1c1c1" stroke="#c1c1c1" stroke-width="0.9"/>
<path d="M430.0 126.5L425.0 123.6L447.4 117.4L452.1 120.2Z" fill="#1212da" stroke="#1212da" stroke-width="0.9"/>
<path d="M452.4 292.6L451.8 291.0L460.5 286.5L461.1 288.1Z" fill="#7d7d7d" stroke="#7d7d7d" stroke-width="0.9"/>
<path d="M451.1 289.5L450.2 288.0L458.9 283.5L459.8 285.0Z" fill="#acacac" stroke="#acacac" stroke-width="0.9"/>
<path d="M451.8 291.0L451.1 289.5L459.8 285.0L460.5 286.5Z" fill="#959595" stroke="#959595" stroke-width="0.9"/>
<path d="M425.9 137.4L422.9 142.7L432.9 139.6L435.9 134.4Z" fill="#000069" stroke="#000069" stroke-width="0.9"/>
<path d="M417.9 133.0L415.3 138.6L411.5 136.8L411.1 129.8L409.9 129.3L411.4 117.2L415.9 119.1L420.3 121.2Z" fill="#0a0af0" stroke="#0a0af0" stroke-width="0.9"/>
<path d="M508.1 311.3L509.3 305.8L527.2 295.4L525.9 300.7Z" fill="#08085f" stroke="#08085f" stroke-width="0.9"/>
<path d="M493.7 318.2L488.9 313.2L490.2 309.4L496.0 311.3L496.4 310.1L506.7 316.3L505.2 320.8L503.6 325.2Z" fill="#0a0af0" stroke="#0a0af0" stroke-width="0.9"/>
<path d="M469.5 255.4L467.4 253.8L478.0 248.7L480.0 250.3Z" fill="#006000" stroke="#006000" stroke-width="0.9"/>
<path d="M488.7 308.2L494.9 310.2L495.6 306.7L489.7 302.7L490.0 300.2L479.0 296.4L478.8 298.3L478.5 300.2L478.1 302.0Z" fill="#0cc40c" stroke="#0cc40c" stroke-width="0.9"/>
<path d="M504.5 270.5L510.3 270.3L519.1 265.6L513.4 265.8Z" fill="#000069" stroke="#000069" stroke-width="0.9"/>
<path d="M489.9 294.3L489.7 291.6L500.0 286.0L500.2 288.6Z" fill="#005900" stroke="#005900" stroke-width="0.9"/>
<path d="M467.4 253.8L468.3 247.0L478.9 242.0L478.0 248.7Z" fill="#004d00" stroke="#004d00" stroke-width="0.9"/>
<path d="M458.5 151.5L454.3 155.5L463.9 152.3L468.0 148.4Z" fill="#000069" stroke="#000069" stroke-width="0.9"/>
<path d="M467.4 253.8L468.3 247.0L465.1 245.0L462.4 250.8L460.2 249.7L458.5 261.6L460.1 262.4L461.8 263.3L463.4 264.4Z" fill="#0cc40c" stroke="#0cc40c" stroke-width="0.9"/>
<path d="M468.3 247.0L465.1 245.0L475.8 240.1L478.9 242.0Z" fill="#00bc00" stroke="#00bc00" stroke-width="0.9"/>
<path d="M434.9 129.7L430.0 126.5L452.1 120.2L456.9 123.2Z" fill="#1212d4" stroke="#1212d4" stroke-width="0.9"/>
<path d="M496.2 296.9L489.9 294.3L500.2 288.6L506.4 291.2Z" fill="#005800" stroke="#005800" stroke-width="0.9"/>
<path d="M475.9 261.5L474.1 259.5L484.6 254.3L486.4 256.2Z" fill="#005d00" stroke="#005d00" stroke-width="0.9"/>
<path d="M509.3 305.8L510.3 300.3L528.2 289.9L527.2 295.4Z" fill="#080860" stroke="#080860" stroke-width="0.9"/>
<path d="M496.2 300.7L496.2 296.9L506.4 291.2L506.4 294.9Z" fill="#00b300" stroke="#00b300" stroke-width="0.9"/>
<path d="M494.0 293.0L499.9 293.9L508.9 288.9L503.1 287.9Z" fill="#000069" stroke="#000069" stroke-width="0.9"/>
<path d="M488.6 285.5L487.9 282.9L498.2 277.4L498.9 280.0Z" fill="#005900" stroke="#005900" stroke-width="0.9"/>
<path d="M490.0 300.2L496.2 300.7L496.2 296.9L489.9 294.3L489.7 291.6L478.8 290.5L479.0 292.5L479.1 294.5L479.0 296.4Z" fill="#0cc40c" stroke="#0cc40c" stroke-width="0.9"/>
<path d="M504.3 261.4L510.0 260.7L518.8 256.1L513.2 256.8ZM433.7 142.5L430.3 147.4L440.3 144.3L443.7 139.4Z" fill="#000069" stroke="#000069" stroke-width="0.9"/>
<path d="M481.4 268.7L479.8 266.4L490.3 261.2L491.8 263.4Z" fill="#005900" stroke="#005900" stroke-width="0.9"/>
<path d="M474.1 259.5L476.3 253.3L486.8 248.3L484.6 254.3Z" fill="#004d00" stroke="#004d00" stroke-width="0.9"/>
<path d="M465.4 158.5L461.0 162.0L470.5 158.7L474.9 155.2Z" fill="#000069" stroke="#000069" stroke-width="0.9"/>
<path d="M485.7 276.9L484.5 274.4L494.9 269.0L496.0 271.4Z" fill="#005900" stroke="#005900" stroke-width="0.9"/>
<path d="M474.1 259.5L476.3 253.3L473.3 250.7L469.5 255.4L467.4 253.8L463.4 264.4L465.0 265.6L466.5 266.9L468.0 268.3Z" fill="#0cc40c" stroke="#0cc40c" stroke-width="0.9"/>
<path d="M439.8 133.1L434.9 129.7L456.9 123.2L461.5 126.6Z" fill="#1111cd" stroke="#1111cd" stroke-width="0.9"/>
<path d="M494.9 286.7L488.6 285.5L498.9 280.0L505.1 281.1Z" fill="#005b00" stroke="#005b00" stroke-width="0.9"/>
<path d="M425.9 137.4L422.9 142.7L419.1 140.5L419.1 133.6L417.9 133.0L420.3 121.2L424.7 123.5L429.1 126.0ZM496.4 310.1L491.4 305.4L492.4 301.4L498.3 302.8L498.6 301.5L509.1 306.9L508.0 311.6L506.7 316.3Z" fill="#0a0af0" stroke="#0a0af0" stroke-width="0.9"/>
<path d="M476.3 253.3L473.3 250.7L483.9 245.7L486.8 248.3Z" fill="#00b800" stroke="#00b800" stroke-width="0.9"/>
<path d="M510.3 300.3L511.1 294.5L529.0 284.3L528.2 289.9Z" fill="#080862" stroke="#080862" stroke-width="0.9"/>
<path d="M489.7 291.6L495.6 290.6L494.9 286.7L488.6 285.5L487.9 282.9L477.5 284.5L478.1 286.5L478.5 288.5L478.8 290.5Z" fill="#0cc40c" stroke="#0cc40c" stroke-width="0.9"/>
<path d="M479.8 266.4L483.3 261.3L493.7 256.1L490.3 261.2Z" fill="#004d00" stroke="#004d00" stroke-width="0.9"/>
<path d="M491.8 276.5L485.7 276.9L496.0 271.4L502.0 271.1Z" fill="#005d00" stroke="#005d00" stroke-width="0.9"/>
<path d="M503.5 252.1L509.0 250.9L517.9 246.4L512.4 247.7Z" fill="#000069" stroke="#000069" stroke-width="0.9"/>
<path d="M495.6 290.6L494.9 286.7L505.1 281.1L505.8 285.0Z" fill="#00b300" stroke="#00b300" stroke-width="0.9"/>
<path d="M487.0 266.8L481.4 268.7L491.8 263.4L497.3 261.5Z" fill="#005e00" stroke="#005e00" stroke-width="0.9"/>
<path d="M479.8 266.4L483.3 261.3L480.7 258.1L475.9 261.5L474.1 259.5L468.0 268.3L469.4 269.9L470.7 271.5L472.0 273.2Z" fill="#0cc40c" stroke="#0cc40c" stroke-width="0.9"/>
<path d="M484.5 274.4L489.0 270.4L499.3 265.1L494.9 269.0Z" fill="#004d00" stroke="#004d00" stroke-width="0.9"/>
<path d="M472.0 166.0L467.3 169.1L476.7 165.7L481.4 162.7Z" fill="#000069" stroke="#000069" stroke-width="0.9"/>
<path d="M487.9 282.9L493.1 280.4L491.8 276.5L485.7 276.9L484.5 274.4L475.2 278.6L476.1 280.5L476.9 282.5L477.5 284.5Z" fill="#0cc40c" stroke="#0cc40c" stroke-width="0.9"/>
<path d="M495.0 284.3L500.9 284.7L509.9 279.7L504.1 279.3Z" fill="#000069" stroke="#000069" stroke-width="0.9"/>
<path d="M444.5 136.7L439.8 133.1L461.5 126.6L466.1 130.1Z" fill="#1111c6" stroke="#1111c6" stroke-width="0.9"/>
<path d="M484.5 274.4L489.0 270.4L487.0 266.8L481.4 268.7L479.8 266.4L472.0 273.2L473.2 274.9L474.2 276.7L475.2 278.6Z" fill="#0cc40c" stroke="#0cc40c" stroke-width="0.9"/>
<path d="M483.3 261.3L480.7 258.1L491.2 252.9L493.7 256.1Z" fill="#00b500" stroke="#00b500" stroke-width="0.9"/>
<path d="M441.3 148.3L437.5 152.8L447.4 149.6L451.2 145.2Z" fill="#000069" stroke="#000069" stroke-width="0.9"/>
<path d="M511.1 294.5L511.7 288.7L529.6 278.6L529.0 284.3Z" fill="#080864" stroke="#080864" stroke-width="0.9"/>
<path d="M493.1 280.4L491.8 276.5L502.0 271.1L503.4 274.9Z" fill="#00b300" stroke="#00b300" stroke-width="0.9"/>
<path d="M502.1 242.8L507.4 241.0L516.3 236.6L511.0 238.5Z" fill="#000069" stroke="#000069" stroke-width="0.9"/>
<path d="M489.0 270.4L487.0 266.8L497.3 261.5L499.3 265.1Z" fill="#00b300" stroke="#00b300" stroke-width="0.9"/>
<path d="M478.3 174.1L473.2 176.6L482.6 173.1L487.6 170.6Z" fill="#000069" stroke="#000069" stroke-width="0.9"/>
<path d="M449.2 140.6L444.5 136.7L466.1 130.1L470.6 133.9Z" fill="#1010c0" stroke="#1010c0" stroke-width="0.9"/>
<path d="M433.7 142.5L430.3 147.4L426.6 145.0L427.1 138.1L425.9 137.4L429.1 126.0L433.4 128.7L437.7 131.6ZM498.6 301.5L493.3 297.2L494.0 293.0L499.9 293.9L500.1 292.5L510.8 297.0L510.1 302.0L509.1 306.9Z" fill="#0a0af0" stroke="#0a0af0" stroke-width="0.9"/>
<path d="M511.7 288.7L512.0 282.8L530.0 272.8L529.6 278.6Z" fill="#080866" stroke="#080866" stroke-width="0.9"/>
<path d="M495.4 275.3L501.2 275.1L510.3 270.3L504.5 270.5ZM448.7 154.8L444.5 158.8L454.3 155.5L458.5 151.5Z" fill="#000069" stroke="#000069" stroke-width="0.9"/>
<path d="M453.8 144.7L449.2 140.6L470.6 133.9L475.0 137.9Z" fill="#0f0fb9" stroke="#0f0fb9" stroke-width="0.9"/>
<path d="M512.0 282.8L512.1 276.7L530.1 266.9L530.0 272.8Z" fill="#090968" stroke="#090968" stroke-width="0.9"/>
<path d="M495.2 266.1L500.9 265.4L510.0 260.7L504.3 261.4Z" fill="#000069" stroke="#000069" stroke-width="0.9"/>
<path d="M441.3 148.3L437.5 152.8L433.9 150.0L434.8 143.4L433.7 142.5L437.7 131.6L441.9 134.7L446.1 138.0Z" fill="#0a0af0" stroke="#0a0af0" stroke-width="0.9"/>
<path d="M458.3 149.1L453.8 144.7L475.0 137.9L479.2 142.2Z" fill="#0f0fb2" stroke="#0f0fb2" stroke-width="0.9"/>
<path d="M500.1 292.5L494.6 288.7L495.0 284.3L500.9 284.7L501.0 283.2L511.8 286.8L511.4 291.9L510.8 297.0Z" fill="#0a0af0" stroke="#0a0af0" stroke-width="0.9"/>
<path d="M455.7 161.9L451.2 165.4L461.0 162.0L465.4 158.5Z" fill="#000069" stroke="#000069" stroke-width="0.9"/>
<path d="M512.1 276.7L512.0 270.6L530.0 261.0L530.1 266.9Z" fill="#09096a" stroke="#09096a" stroke-width="0.9"/>
<path d="M462.7 153.6L458.3 149.1L479.2 142.2L483.4 146.6Z" fill="#0e0eab" stroke="#0e0eab" stroke-width="0.9"/>
<path d="M494.4 256.7L499.9 255.5L509.0 250.9L503.5 252.1Z" fill="#000069" stroke="#000069" stroke-width="0.9"/>
<path d="M512.0 270.6L511.6 264.5L529.6 254.9L530.0 261.0Z" fill="#09096c" stroke="#09096c" stroke-width="0.9"/>
<path d="M462.4 169.5L457.6 172.6L467.3 169.1L472.0 166.0Z" fill="#000069" stroke="#000069" stroke-width="0.9"/>
<path d="M448.7 154.8L444.5 158.8L441.1 155.7L442.4 149.3L441.3 148.3L446.1 138.0L450.2 141.5L454.2 145.1Z" fill="#0a0af0" stroke="#0a0af0" stroke-width="0.9"/>
<path d="M466.9 158.4L462.7 153.6L483.4 146.6L487.4 151.3Z" fill="#0e0ea5" stroke="#0e0ea5" stroke-width="0.9"/>
<path d="M501.0 283.2L495.3 279.8L495.4 275.3L501.2 275.1L501.2 273.7L512.1 276.2L512.1 281.5L511.8 286.8Z" fill="#0a0af0" stroke="#0a0af0" stroke-width="0.9"/>
<path d="M511.6 264.5L511.0 258.2L529.1 248.9L529.6 254.9Z" fill="#09096d" stroke="#09096d" stroke-width="0.9"/>
<path d="M492.9 247.3L498.3 245.5L507.4 241.0L502.1 242.8ZM468.7 177.7L463.6 180.2L473.2 176.6L478.3 174.1Z" fill="#000069" stroke="#000069" stroke-width="0.9"/>
<path d="M471.0 163.3L466.9 158.4L487.4 151.3L491.3 156.1Z" fill="#0d0d9e" stroke="#0d0d9e" stroke-width="0.9"/>
<path d="M511.0 258.2L510.2 252.0L528.3 242.8L529.1 248.9Z" fill="#09096f" stroke="#09096f" stroke-width="0.9"/>
<path d="M475.0 168.4L471.0 163.3L491.3 156.1L495.0 161.1Z" fill="#0d0d97" stroke="#0d0d97" stroke-width="0.9"/>
<path d="M455.7 161.9L451.2 165.4L447.9 162.1L449.7 155.8L448.7 154.8L454.2 145.1L458.2 148.9L462.0 152.9ZM501.2 273.7L495.4 270.7L495.2 266.1L500.9 265.4L500.8 263.9L511.7 265.5L512.0 270.9L512.1 276.2Z" fill="#0a0af0" stroke="#0a0af0" stroke-width="0.9"/>
<path d="M510.2 252.0L509.1 245.7L527.2 236.7L528.3 242.8Z" fill="#090971" stroke="#090971" stroke-width="0.9"/>
<path d="M478.8 173.7L475.0 168.4L495.0 161.1L498.5 166.3Z" fill="#0c0c91" stroke="#0c0c91" stroke-width="0.9"/>
<path d="M509.1 245.7L507.7 239.4L526.0 230.5L527.2 236.7Z" fill="#090973" stroke="#090973" stroke-width="0.9"/>
<path d="M482.4 179.2L478.8 173.7L498.5 166.3L501.9 171.7Z" fill="#0b0b8a" stroke="#0b0b8a" stroke-width="0.9"/>
<path d="M507.7 239.4L506.2 233.1L524.5 224.4L526.0 230.5Z" fill="#0a0a75" stroke="#0a0a75" stroke-width="0.9"/>
<path d="M462.4 169.5L457.6 172.6L454.5 168.9L456.7 163.0L455.7 161.9L462.0 152.9L465.8 157.0L469.4 161.3ZM500.8 263.9L494.9 261.4L494.4 256.7L499.9 255.5L499.7 254.0L510.5 254.5L511.2 260.0L511.7 265.5Z" fill="#0a0af0" stroke="#0a0af0" stroke-width="0.9"/>
<path d="M485.8 184.7L482.4 179.2L501.9 171.7L505.0 177.2Z" fill="#0b0b86" stroke="#0b0b86" stroke-width="0.9"/>
<path d="M506.2 233.1L504.4 226.8L522.7 218.3L524.5 224.4Z" fill="#0a0a77" stroke="#0a0a77" stroke-width="0.9"/>
<path d="M489.1 190.5L485.8 184.7L505.0 177.2L507.9 182.9Z" fill="#0b0b84" stroke="#0b0b84" stroke-width="0.9"/>
<path d="M504.4 226.8L502.4 220.6L520.8 212.2L522.7 218.3Z" fill="#0a0a79" stroke="#0a0a79" stroke-width="0.9"/>
<path d="M502.4 220.6L500.2 214.4L518.6 206.2L520.8 212.2Z" fill="#0a0a7b" stroke="#0a0a7b" stroke-width="0.9"/>
<path d="M492.2 196.3L489.1 190.5L507.9 182.9L510.9 188.6Z" fill="#0b0b82" stroke="#0b0b82" stroke-width="0.9"/>
<path d="M500.2 214.4L497.7 208.3L516.3 200.2L518.6 206.2Z" fill="#0a0a7c" stroke="#0a0a7c" stroke-width="0.9"/>
<path d="M495.0 202.3L492.2 196.3L510.9 188.6L513.7 194.4Z" fill="#0b0b80" stroke="#0b0b80" stroke-width="0.9"/>
<path d="M497.7 208.3L495.0 202.3L513.7 194.4L516.3 200.2Z" fill="#0a0a7e" stroke="#0a0a7e" stroke-width="0.9"/>
<path d="M468.7 177.7L463.6 180.2L460.7 176.3L463.4 170.7L462.4 169.5L469.4 161.3L472.9 165.7L476.4 170.3ZM499.7 254.0L493.7 252.0L492.9 247.3L498.3 245.5L498.0 244.0L508.6 243.5L509.7 249.0L510.5 254.5ZM474.5 186.3L469.2 188.2L466.5 184.2L469.6 178.9L468.7 177.7L476.4 170.3L479.6 175.0L482.8 179.8ZM498.0 244.0L492.0 242.6L490.8 237.8L496.0 235.5L495.6 234.0L506.0 232.4L507.4 238.0L508.6 243.5ZM479.8 195.3L474.3 196.7L471.8 192.4L475.3 187.6L474.5 186.3L482.8 179.8L485.8 184.7L488.7 189.7ZM495.6 234.0L489.6 233.1L488.2 228.4L493.0 225.5L492.5 224.0L502.7 221.5L504.4 226.9L506.0 232.4ZM484.6 204.6L479.0 205.5L476.7 201.0L480.6 196.7L479.8 195.3L488.7 189.7L491.4 194.8L494.0 200.0ZM492.5 224.0L486.6 223.8L484.9 219.1L489.5 215.7L488.9 214.2L498.7 210.6L500.8 216.0L502.7 221.5ZM488.9 214.2L483.1 214.5L481.1 210.0L485.3 206.0L484.6 204.6L494.0 200.0L496.4 205.3L498.7 210.6Z" fill="#0a0af0" stroke="#0a0af0" stroke-width="0.9"/>
<path d="M388.1 276.2L388.2 276.1L391.4 274.6L391.3 274.7Z" fill="#2f2f2f" stroke="#2f2f2f" stroke-width="0.6"/>
<path d="M388.6 276.4L388.7 276.4L391.9 274.9L391.8 275.0Z" fill="#2f2f2f" stroke="#2f2f2f" stroke-width="0.6"/>
<path d="M389.1 276.7L389.2 276.6L392.4 275.2L392.3 275.2Z" fill="#2f2f2f" stroke="#2f2f2f" stroke-width="0.6"/>
<path d="M390.0 277.3L390.1 277.2L393.3 275.8L393.2 275.9Z" fill="#2f2f2f" stroke="#2f2f2f" stroke-width="0.6"/>
<path d="M391.3 278.2L391.5 278.1L394.7 276.6L394.5 276.8Z" fill="#2f2f2f" stroke="#2f2f2f" stroke-width="0.6"/>
<path d="M446.3 307.5L446.9 307.1L450.0 305.5L449.3 305.8Z" fill="#2f2f2f" stroke="#2f2f2f" stroke-width="0.6"/>
<path d="M446.9 307.1L447.6 306.8L450.6 305.1L450.0 305.5Z" fill="#2f2f2f" stroke="#2f2f2f" stroke-width="0.6"/>
<path d="M447.6 306.8L447.8 306.1L450.8 304.5L450.6 305.1Z" fill="#2f2f2f" stroke="#2f2f2f" stroke-width="0.6"/>
<path d="M447.8 306.1L448.4 305.7L451.5 304.1L450.8 304.5Z" fill="#2f2f2f" stroke="#2f2f2f" stroke-width="0.6"/>
<path d="M448.4 305.7L448.7 305.1L451.7 303.4L451.5 304.1Z" fill="#2f2f2f" stroke="#2f2f2f" stroke-width="0.6"/>
<path d="M448.7 305.1L448.9 304.4L451.9 302.8L451.7 303.4Z" fill="#2f2f2f" stroke="#2f2f2f" stroke-width="0.6"/>
<path d="M448.9 304.4L449.5 304.0L452.5 302.4L451.9 302.8Z" fill="#2f2f2f" stroke="#2f2f2f" stroke-width="0.6"/>
<path d="M449.5 304.0L449.7 303.3L452.7 301.7L452.5 302.4Z" fill="#2f2f2f" stroke="#2f2f2f" stroke-width="0.6"/>
<path d="M449.7 303.3L449.9 302.6L452.9 301.0L452.7 301.7Z" fill="#2f2f2f" stroke="#2f2f2f" stroke-width="0.6"/>
<path d="M449.9 302.6L450.1 302.0L453.1 300.3L452.9 301.0Z" fill="#2f2f2f" stroke="#2f2f2f" stroke-width="0.6"/>
<path d="M450.1 302.0L450.3 301.3L453.3 299.6L453.1 300.3Z" fill="#2f2f2f" stroke="#2f2f2f" stroke-width="0.6"/>
<path d="M450.3 301.3L450.1 300.3L453.1 298.7L453.3 299.6Z" fill="#2f2f2f" stroke="#2f2f2f" stroke-width="0.6"/>
<path d="M450.1 300.3L450.2 299.6L453.3 298.0L453.1 298.7Z" fill="#2f2f2f" stroke="#2f2f2f" stroke-width="0.6"/>
<path d="M450.2 299.6L450.4 298.9L453.5 297.3L453.3 298.0Z" fill="#2f2f2f" stroke="#2f2f2f" stroke-width="0.6"/>
<path d="M450.4 298.9L450.2 298.0L453.2 296.4L453.5 297.3Z" fill="#2f2f2f" stroke="#2f2f2f" stroke-width="0.6"/>
<path d="M450.2 298.0L450.3 297.3L453.4 295.7L453.2 296.4Z" fill="#2f2f2f" stroke="#2f2f2f" stroke-width="0.6"/>
<path d="M450.3 297.3L450.1 296.3L453.1 294.7L453.4 295.7Z" fill="#2f2f2f" stroke="#2f2f2f" stroke-width="0.6"/>
<path d="M450.1 296.3L449.8 295.4L452.8 293.8L453.1 294.7Z" fill="#2f2f2f" stroke="#2f2f2f" stroke-width="0.6"/>
<path d="M449.8 295.4L449.5 294.5L452.6 292.9L452.8 293.8Z" fill="#2f2f2f" stroke="#2f2f2f" stroke-width="0.6"/>
<path d="M449.5 294.5L449.2 293.6L452.3 292.0L452.6 292.9Z" fill="#2f2f2f" stroke="#2f2f2f" stroke-width="0.6"/>
<path d="M449.2 293.6L449.0 292.6L452.0 291.1L452.3 292.0Z" fill="#2f2f2f" stroke="#2f2f2f" stroke-width="0.6"/>
<path d="M449.0 292.6L448.7 291.7L451.7 290.2L452.0 291.1Z" fill="#2f2f2f" stroke="#2f2f2f" stroke-width="0.6"/>
<path d="M448.7 291.7L448.3 290.8L451.4 289.2L451.7 290.2Z" fill="#2f2f2f" stroke="#2f2f2f" stroke-width="0.6"/>
<path d="M448.3 290.8L447.6 289.7L450.7 288.2L451.4 289.2Z" fill="#2f2f2f" stroke="#2f2f2f" stroke-width="0.6"/>
<path d="M447.6 289.7L446.9 288.6L449.9 287.1L450.7 288.2Z" fill="#323232" stroke="#323232" stroke-width="0.6"/>
<path d="M446.9 288.6L445.7 287.4L448.8 285.8L449.9 287.1Z" fill="#535353" stroke="#535353" stroke-width="0.6"/>
<path d="M445.7 287.4L444.5 286.1L447.6 284.6L448.8 285.8Z" fill="#565656" stroke="#565656" stroke-width="0.6"/>
<path d="M444.5 286.1L442.5 284.5L445.6 283.0L447.6 284.6Z" fill="#747474" stroke="#747474" stroke-width="0.6"/>
<path d="M442.5 284.5L439.2 282.5L442.3 280.9L445.6 283.0Z" fill="#878787" stroke="#878787" stroke-width="0.6"/>
<path d="M439.2 282.5L436.3 280.6L439.4 279.1L442.3 280.9Z" fill="#868686" stroke="#868686" stroke-width="0.6"/>
<path d="M436.3 280.6L433.4 278.9L436.5 277.3L439.4 279.1Z" fill="#888888" stroke="#888888" stroke-width="0.6"/>
<path d="M433.4 278.9L430.9 277.3L434.0 275.8L436.5 277.3Z" fill="#878787" stroke="#878787" stroke-width="0.6"/>
<path d="M430.9 277.3L428.8 276.0L432.0 274.5L434.0 275.8Z" fill="#848484" stroke="#848484" stroke-width="0.6"/>
<path d="M428.8 276.0L426.8 274.7L429.9 273.2L432.0 274.5Z" fill="#868686" stroke="#868686" stroke-width="0.6"/>
<path d="M426.8 274.7L424.7 273.4L427.8 271.9L429.9 273.2Z" fill="#898989" stroke="#898989" stroke-width="0.6"/>
<path d="M424.7 273.4L423.0 272.3L426.2 270.8L427.8 271.9Z" fill="#848484" stroke="#848484" stroke-width="0.6"/>
<path d="M423.0 272.3L421.4 271.3L424.5 269.8L426.2 270.8Z" fill="#878787" stroke="#878787" stroke-width="0.6"/>
<path d="M421.4 271.3L419.7 270.3L422.9 268.8L424.5 269.8Z" fill="#898989" stroke="#898989" stroke-width="0.6"/>
<path d="M419.7 270.3L418.5 269.5L421.6 268.0L422.9 268.8Z" fill="#818181" stroke="#818181" stroke-width="0.6"/>
<path d="M418.5 269.5L416.8 268.5L420.0 267.0L421.6 268.0Z" fill="#8e8e8e" stroke="#8e8e8e" stroke-width="0.6"/>
<path d="M416.8 268.5L415.6 267.7L418.7 266.3L420.0 267.0Z" fill="#878787" stroke="#878787" stroke-width="0.6"/>
<path d="M415.6 267.7L414.7 267.1L417.9 265.6L418.7 266.3Z" fill="#767676" stroke="#767676" stroke-width="0.6"/>
<path d="M414.7 267.1L413.5 266.4L416.7 264.9L417.9 265.6Z" fill="#8b8b8b" stroke="#8b8b8b" stroke-width="0.6"/>
<path d="M413.5 266.4L412.2 265.7L415.4 264.2L416.7 264.9Z" fill="#8e8e8e" stroke="#8e8e8e" stroke-width="0.6"/>
<path d="M412.2 265.7L411.4 265.1L414.6 263.6L415.4 264.2Z" fill="#7f7f7f" stroke="#7f7f7f" stroke-width="0.6"/>
<path d="M411.4 265.1L410.6 264.5L413.7 263.1L414.6 263.6Z" fill="#828282" stroke="#828282" stroke-width="0.6"/>
<path d="M410.6 264.5L409.7 264.0L412.9 262.5L413.7 263.1Z" fill="#848484" stroke="#848484" stroke-width="0.6"/>
<path d="M409.7 264.0L408.9 263.4L412.0 262.0L412.9 262.5Z" fill="#878787" stroke="#878787" stroke-width="0.6"/>
<path d="M408.9 263.4L408.0 262.9L411.2 261.5L412.0 262.0Z" fill="#898989" stroke="#898989" stroke-width="0.6"/>
<path d="M408.0 262.9L407.2 262.4L410.4 261.0L411.2 261.5Z" fill="#8c8c8c" stroke="#8c8c8c" stroke-width="0.6"/>
<path d="M407.2 262.4L406.3 262.0L409.5 260.5L410.4 261.0Z" fill="#8e8e8e" stroke="#8e8e8e" stroke-width="0.6"/>
<path d="M406.3 262.0L405.9 261.6L409.1 260.1L409.5 260.5Z" fill="#686868" stroke="#686868" stroke-width="0.6"/>
<path d="M405.9 261.6L405.1 261.1L408.2 259.7L409.1 260.1Z" fill="#929292" stroke="#929292" stroke-width="0.6"/>
<path d="M405.1 261.1L404.6 260.8L407.8 259.3L408.2 259.7Z" fill="#6e6e6e" stroke="#6e6e6e" stroke-width="0.6"/>
<path d="M404.6 260.8L403.8 260.4L407.0 258.9L407.8 259.3Z" fill="#979797" stroke="#979797" stroke-width="0.6"/>
<path d="M403.8 260.4L403.3 260.0L406.5 258.6L407.0 258.9Z" fill="#747474" stroke="#747474" stroke-width="0.6"/>
<path d="M403.3 260.0L402.9 259.7L406.1 258.2L406.5 258.6Z" fill="#777777" stroke="#777777" stroke-width="0.6"/>
<path d="M402.9 259.7L402.0 259.3L405.2 257.9L406.1 258.2Z" fill="#9d9d9d" stroke="#9d9d9d" stroke-width="0.6"/>
<path d="M402.0 259.3L401.6 259.0L404.8 257.6L405.2 257.9Z" fill="#7d7d7d" stroke="#7d7d7d" stroke-width="0.6"/>
<path d="M401.6 259.0L401.2 258.7L404.4 257.3L404.8 257.6Z" fill="#7f7f7f" stroke="#7f7f7f" stroke-width="0.6"/>
<path d="M401.2 258.7L400.7 258.4L403.9 257.0L404.4 257.3Z" fill="#828282" stroke="#828282" stroke-width="0.6"/>
<path d="M400.7 258.4L400.3 258.1L403.5 256.7L403.9 257.0Z" fill="#848484" stroke="#848484" stroke-width="0.6"/>
<path d="M400.3 258.1L399.8 257.8L403.0 256.4L403.5 256.7Z" fill="#868686" stroke="#868686" stroke-width="0.6"/>
<path d="M399.8 257.8L399.4 257.6L402.6 256.1L403.0 256.4Z" fill="#898989" stroke="#898989" stroke-width="0.6"/>
<path d="M399.4 257.6L398.9 257.3L402.1 255.9L402.6 256.1Z" fill="#8b8b8b" stroke="#8b8b8b" stroke-width="0.6"/>
<path d="M398.9 257.3L398.5 257.0L401.7 255.6L402.1 255.9Z" fill="#8d8d8d" stroke="#8d8d8d" stroke-width="0.6"/>
<path d="M398.5 257.0L398.1 256.8L401.3 255.4L401.7 255.6Z" fill="#909090" stroke="#909090" stroke-width="0.6"/>
<path d="M398.1 256.8L397.6 256.6L400.8 255.1L401.3 255.4Z" fill="#929292" stroke="#929292" stroke-width="0.6"/>
<path d="M397.6 256.6L397.6 256.3L400.8 254.9L400.8 255.1Z" fill="#2f2f2f" stroke="#2f2f2f" stroke-width="0.6"/>
<path d="M397.6 256.3L397.1 256.1L400.3 254.7L400.8 254.9Z" fill="#969696" stroke="#969696" stroke-width="0.6"/>
<path d="M397.1 256.1L396.7 255.9L399.9 254.5L400.3 254.7Z" fill="#989898" stroke="#989898" stroke-width="0.6"/>
<path d="M396.7 255.9L396.2 255.7L399.5 254.3L399.9 254.5Z" fill="#9a9a9a" stroke="#9a9a9a" stroke-width="0.6"/>
<path d="M396.2 255.7L396.2 255.5L399.4 254.1L399.5 254.3Z" fill="#2f2f2f" stroke="#2f2f2f" stroke-width="0.6"/>
<path d="M396.2 255.5L395.7 255.3L399.0 253.9L399.4 254.1Z" fill="#9e9e9e" stroke="#9e9e9e" stroke-width="0.6"/>
<path d="M395.7 255.3L395.3 255.1L398.5 253.7L399.0 253.9Z" fill="#a0a0a0" stroke="#a0a0a0" stroke-width="0.6"/>
<path d="M395.3 255.1L395.3 254.9L398.5 253.5L398.5 253.7Z" fill="#2f2f2f" stroke="#2f2f2f" stroke-width="0.6"/>
<path d="M395.3 254.9L394.8 254.7L398.0 253.3L398.5 253.5Z" fill="#a3a3a3" stroke="#a3a3a3" stroke-width="0.6"/>
<path d="M394.8 254.7L394.8 254.5L398.0 253.1L398.0 253.3Z" fill="#2f2f2f" stroke="#2f2f2f" stroke-width="0.6"/>
<path d="M394.8 254.5L394.3 254.4L397.5 253.0L398.0 253.1Z" fill="#a6a6a6" stroke="#a6a6a6" stroke-width="0.6"/>
<path d="M394.3 254.4L393.9 254.2L397.1 252.8L397.5 253.0Z" fill="#a8a8a8" stroke="#a8a8a8" stroke-width="0.6"/>
<path d="M393.9 254.2L393.8 254.0L397.1 252.6L397.1 252.8Z" fill="#2f2f2f" stroke="#2f2f2f" stroke-width="0.6"/>
<path d="M393.8 254.0L393.4 253.9L396.6 252.5L397.1 252.6Z" fill="#ababab" stroke="#ababab" stroke-width="0.6"/>
<path d="M393.4 253.9L393.3 253.7L396.6 252.3L396.6 252.5Z" fill="#2f2f2f" stroke="#2f2f2f" stroke-width="0.6"/>
<path d="M393.3 253.7L392.9 253.6L396.1 252.2L396.6 252.3Z" fill="#aeaeae" stroke="#aeaeae" stroke-width="0.6"/>
<path d="M392.9 253.6L392.8 253.4L396.1 252.0L396.1 252.2Z" fill="#2f2f2f" stroke="#2f2f2f" stroke-width="0.6"/>
<path d="M392.8 253.4L392.4 253.3L395.6 251.9L396.1 252.0Z" fill="#b1b1b1" stroke="#b1b1b1" stroke-width="0.6"/>
<path d="M392.4 253.3L392.4 253.1L395.6 251.7L395.6 251.9Z" fill="#2f2f2f" stroke="#2f2f2f" stroke-width="0.6"/>
<path d="M392.4 253.1L391.9 253.1L395.1 251.7L395.6 251.7Z" fill="#b4b4b4" stroke="#b4b4b4" stroke-width="0.6"/>
<path d="M391.9 253.1L391.9 252.9L395.1 251.5L395.1 251.7Z" fill="#2f2f2f" stroke="#2f2f2f" stroke-width="0.6"/>
<path d="M391.9 252.9L391.8 252.7L395.0 251.3L395.1 251.5Z" fill="#2f2f2f" stroke="#2f2f2f" stroke-width="0.6"/>
<path d="M391.8 252.7L391.4 252.6L394.6 251.2L395.0 251.3Z" fill="#b8b8b8" stroke="#b8b8b8" stroke-width="0.6"/>
<path d="M391.4 252.6L391.3 252.5L394.5 251.1L394.6 251.2Z" fill="#2f2f2f" stroke="#2f2f2f" stroke-width="0.6"/>
<path d="M391.3 252.5L390.9 252.4L394.1 251.0L394.5 251.1Z" fill="#bbbbbb" stroke="#bbbbbb" stroke-width="0.6"/>
<path d="M390.9 252.4L390.8 252.2L394.1 250.9L394.1 251.0Z" fill="#2f2f2f" stroke="#2f2f2f" stroke-width="0.6"/>
<path d="M390.8 252.2L390.8 252.1L394.0 250.7L394.1 250.9Z" fill="#2f2f2f" stroke="#2f2f2f" stroke-width="0.6"/>
<path d="M390.8 252.1L390.3 252.0L393.6 250.7L394.0 250.7Z" fill="#bebebe" stroke="#bebebe" stroke-width="0.6"/>
<path d="M390.3 252.0L390.3 251.9L393.5 250.5L393.6 250.7Z" fill="#2f2f2f" stroke="#2f2f2f" stroke-width="0.6"/>
<path d="M390.3 251.9L390.2 251.7L393.4 250.3L393.5 250.5Z" fill="#2f2f2f" stroke="#2f2f2f" stroke-width="0.6"/>
<path d="M390.2 251.7L389.8 251.7L393.0 250.3L393.4 250.3Z" fill="#c2c2c2" stroke="#c2c2c2" stroke-width="0.6"/>
<path d="M389.8 251.7L389.7 251.6L393.0 250.2L393.0 250.3Z" fill="#2f2f2f" stroke="#2f2f2f" stroke-width="0.6"/>
<path d="M389.7 251.6L389.7 251.4L392.9 250.0L393.0 250.2Z" fill="#2f2f2f" stroke="#2f2f2f" stroke-width="0.6"/>
<path d="M389.7 251.4L389.3 251.4L392.5 250.0L392.9 250.0Z" fill="#c5c5c5" stroke="#c5c5c5" stroke-width="0.6"/>
<path d="M389.3 251.4L389.2 251.3L392.4 249.9L392.5 250.0Z" fill="#2f2f2f" stroke="#2f2f2f" stroke-width="0.6"/>
<path d="M389.2 251.3L389.1 251.1L392.4 249.7L392.4 249.9Z" fill="#2f2f2f" stroke="#2f2f2f" stroke-width="0.6"/>
<path d="M389.1 251.1L389.1 251.0L392.3 249.6L392.4 249.7Z" fill="#2f2f2f" stroke="#2f2f2f" stroke-width="0.6"/>
<path d="M389.1 251.0L388.7 251.0L391.9 249.6L392.3 249.6Z" fill="#c9c9c9" stroke="#c9c9c9" stroke-width="0.6"/>
<path d="M388.7 251.0L388.6 250.8L391.8 249.5L391.9 249.6Z" fill="#2f2f2f" stroke="#2f2f2f" stroke-width="0.6"/>
<path d="M388.6 250.8L388.5 250.7L391.8 249.3L391.8 249.5Z" fill="#2f2f2f" stroke="#2f2f2f" stroke-width="0.6"/>
<path d="M388.5 250.7L388.5 250.6L391.7 249.2L391.8 249.3Z" fill="#2f2f2f" stroke="#2f2f2f" stroke-width="0.6"/>
<path d="M388.5 250.6L388.4 250.4L391.6 249.0L391.7 249.2Z" fill="#2f2f2f" stroke="#2f2f2f" stroke-width="0.6"/>
<path d="M388.4 250.4L388.3 250.3L391.5 248.9L391.6 249.0Z" fill="#2f2f2f" stroke="#2f2f2f" stroke-width="0.6"/>
<path d="M388.3 250.3L387.9 250.3L391.1 248.9L391.5 248.9Z" fill="#cdcdcd" stroke="#cdcdcd" stroke-width="0.6"/>
<path d="M387.9 250.3L388.2 250.0L391.4 248.6L391.1 248.9Z" fill="#2f2f2f" stroke="#2f2f2f" stroke-width="0.6"/>
<path d="M388.2 250.0L388.1 249.9L391.3 248.5L391.4 248.6Z" fill="#2f2f2f" stroke="#2f2f2f" stroke-width="0.6"/>
<path d="M388.1 249.9L388.0 249.7L391.3 248.4L391.3 248.5Z" fill="#2f2f2f" stroke="#2f2f2f" stroke-width="0.6"/>
<path d="M388.0 249.7L388.0 249.6L391.2 248.2L391.3 248.4Z" fill="#2f2f2f" stroke="#2f2f2f" stroke-width="0.6"/>
<path d="M388.0 249.6L387.9 249.5L391.1 248.1L391.2 248.2Z" fill="#2f2f2f" stroke="#2f2f2f" stroke-width="0.6"/>
<path d="M387.9 249.5L387.8 249.3L391.0 248.0L391.1 248.1Z" fill="#2f2f2f" stroke="#2f2f2f" stroke-width="0.6"/>
<path d="M387.8 249.3L387.7 249.2L391.0 247.8L391.0 248.0Z" fill="#2f2f2f" stroke="#2f2f2f" stroke-width="0.6"/>
<path d="M387.7 249.2L387.3 249.3L390.6 247.9L391.0 247.8Z" fill="#d2d2d2" stroke="#d2d2d2" stroke-width="0.6"/>
<path d="M387.3 249.3L387.6 248.9L390.8 247.6L390.6 247.9Z" fill="#2f2f2f" stroke="#2f2f2f" stroke-width="0.6"/>
<path d="M387.6 248.9L387.5 248.8L390.7 247.4L390.8 247.6Z" fill="#2f2f2f" stroke="#2f2f2f" stroke-width="0.6"/>
<path d="M387.5 248.8L387.4 248.7L390.7 247.3L390.7 247.4Z" fill="#2f2f2f" stroke="#2f2f2f" stroke-width="0.6"/>
<path d="M387.4 248.7L387.3 248.5L390.6 247.2L390.7 247.3Z" fill="#2f2f2f" stroke="#2f2f2f" stroke-width="0.6"/>
<path d="M387.3 248.5L387.3 248.4L390.5 247.0L390.6 247.2Z" fill="#2f2f2f" stroke="#2f2f2f" stroke-width="0.6"/>
<path d="M387.3 248.4L387.2 248.3L390.4 246.9L390.5 247.0Z" fill="#2f2f2f" stroke="#2f2f2f" stroke-width="0.6"/>
<path d="M387.2 248.3L387.1 248.1L390.3 246.8L390.4 246.9Z" fill="#2f2f2f" stroke="#2f2f2f" stroke-width="0.6"/>
<path d="M387.1 248.1L386.7 248.3L390.0 246.9L390.3 246.8Z" fill="#d6d6d6" stroke="#d6d6d6" stroke-width="0.6"/>
<path d="M386.7 248.3L386.9 247.9L390.2 246.5L390.0 246.9Z" fill="#2f2f2f" stroke="#2f2f2f" stroke-width="0.6"/>
<path d="M386.9 247.9L386.8 247.8L390.1 246.4L390.2 246.5Z" fill="#2f2f2f" stroke="#2f2f2f" stroke-width="0.6"/>
<path d="M386.8 247.8L386.5 247.9L389.7 246.5L390.1 246.4Z" fill="#d7d7d7" stroke="#d7d7d7" stroke-width="0.6"/>
<path d="M386.5 247.9L386.4 247.8L389.6 246.4L389.7 246.5Z" fill="#323232" stroke="#323232" stroke-width="0.6"/>
<path d="M386.4 247.8L386.6 247.4L389.8 246.0L389.6 246.4Z" fill="#2f2f2f" stroke="#2f2f2f" stroke-width="0.6"/>
<path d="M386.6 247.4L386.5 247.3L389.7 245.9L389.8 246.0Z" fill="#353535" stroke="#353535" stroke-width="0.6"/>
<path d="M386.5 247.3L386.1 247.4L389.4 246.0L389.7 245.9Z" fill="#d9d9d9" stroke="#d9d9d9" stroke-width="0.6"/>
<path d="M386.1 247.4L386.3 247.0L389.6 245.6L389.4 246.0Z" fill="#2f2f2f" stroke="#2f2f2f" stroke-width="0.6"/>
<path d="M386.0 247.2L386.1 246.8L389.4 245.4L389.2 245.8Z" fill="#2f2f2f" stroke="#2f2f2f" stroke-width="0.6"/>
<path d="M386.1 246.8L386.0 246.6L389.3 245.3L389.4 245.4Z" fill="#3d3d3d" stroke="#3d3d3d" stroke-width="0.6"/>
<path d="M386.0 246.6L386.0 246.5L389.2 245.2L389.3 245.3Z" fill="#3f3f3f" stroke="#3f3f3f" stroke-width="0.6"/>
<path d="M386.0 246.5L385.9 246.4L389.1 245.0L389.2 245.2Z" fill="#404040" stroke="#404040" stroke-width="0.6"/>
<path d="M385.9 246.4L385.8 246.3L389.0 244.9L389.1 245.0Z" fill="#424242" stroke="#424242" stroke-width="0.6"/>
<path d="M385.8 246.3L385.7 246.2L388.9 244.8L389.0 244.9Z" fill="#434343" stroke="#434343" stroke-width="0.6"/>
<path d="M385.3 246.4L385.5 245.9L388.7 244.6L388.6 245.0Z" fill="#2f2f2f" stroke="#2f2f2f" stroke-width="0.6"/>
<path d="M385.5 245.9L385.4 245.8L388.6 244.5L388.7 244.6Z" fill="#484848" stroke="#484848" stroke-width="0.6"/>
<path d="M385.0 246.0L385.2 245.6L388.4 244.2L388.3 244.7Z" fill="#2f2f2f" stroke="#2f2f2f" stroke-width="0.6"/>
<path d="M385.2 245.6L385.1 245.5L388.3 244.1L388.4 244.2Z" fill="#4c4c4c" stroke="#4c4c4c" stroke-width="0.6"/>
<path d="M385.1 245.5L385.0 245.4L388.2 244.0L388.3 244.1Z" fill="#4e4e4e" stroke="#4e4e4e" stroke-width="0.6"/>
<path d="M385.0 245.4L384.9 245.3L388.1 243.9L388.2 244.0Z" fill="#4f4f4f" stroke="#4f4f4f" stroke-width="0.6"/>
<path d="M384.9 245.3L384.8 245.1L388.0 243.8L388.1 243.9Z" fill="#515151" stroke="#515151" stroke-width="0.6"/>
<path d="M384.8 245.1L384.7 245.0L387.9 243.7L388.0 243.8Z" fill="#525252" stroke="#525252" stroke-width="0.6"/>
<path d="M384.7 245.0L384.8 244.6L388.1 243.2L387.9 243.7Z" fill="#2f2f2f" stroke="#2f2f2f" stroke-width="0.6"/>
<path d="M384.8 244.6L384.7 244.5L388.0 243.1L388.1 243.2Z" fill="#555555" stroke="#555555" stroke-width="0.6"/>
<path d="M384.7 244.5L384.6 244.4L387.9 243.0L388.0 243.1Z" fill="#575757" stroke="#575757" stroke-width="0.6"/>
<path d="M384.6 244.4L384.7 243.9L388.0 242.6L387.9 243.0Z" fill="#2f2f2f" stroke="#2f2f2f" stroke-width="0.6"/>
<path d="M384.7 243.9L384.6 243.8L387.9 242.4L388.0 242.6Z" fill="#5a5a5a" stroke="#5a5a5a" stroke-width="0.6"/>
<path d="M384.6 243.8L384.5 243.7L387.8 242.3L387.9 242.4Z" fill="#5b5b5b" stroke="#5b5b5b" stroke-width="0.6"/>
<path d="M384.5 243.7L384.6 243.2L387.8 241.9L387.8 242.3Z" fill="#2f2f2f" stroke="#2f2f2f" stroke-width="0.6"/>
<path d="M384.6 243.2L384.5 243.1L387.7 241.8L387.8 241.9Z" fill="#5e5e5e" stroke="#5e5e5e" stroke-width="0.6"/>
<path d="M384.5 243.1L384.4 243.0L387.6 241.6L387.7 241.8Z" fill="#606060" stroke="#606060" stroke-width="0.6"/>
<path d="M384.4 243.0L384.5 242.5L387.7 241.2L387.6 241.6Z" fill="#2f2f2f" stroke="#2f2f2f" stroke-width="0.6"/>
<path d="M384.5 242.5L384.3 242.4L387.6 241.1L387.7 241.2Z" fill="#626262" stroke="#626262" stroke-width="0.6"/>
<path d="M384.3 242.4L384.2 242.3L387.5 241.0L387.6 241.1Z" fill="#646464" stroke="#646464" stroke-width="0.6"/>
<path d="M384.2 242.3L384.3 241.8L387.5 240.5L387.5 241.0Z" fill="#2f2f2f" stroke="#2f2f2f" stroke-width="0.6"/>
<path d="M384.3 241.8L384.2 241.7L387.4 240.4L387.5 240.5Z" fill="#676767" stroke="#676767" stroke-width="0.6"/>
<path d="M384.2 241.7L384.0 241.6L387.3 240.3L387.4 240.4Z" fill="#686868" stroke="#686868" stroke-width="0.6"/>
<path d="M384.0 241.6L384.1 241.1L387.3 239.8L387.3 240.3Z" fill="#2f2f2f" stroke="#2f2f2f" stroke-width="0.6"/>
<path d="M384.1 241.1L384.0 241.0L387.2 239.6L387.3 239.8Z" fill="#6b6b6b" stroke="#6b6b6b" stroke-width="0.6"/>
<path d="M384.0 241.0L384.0 240.5L387.3 239.2L387.2 239.6Z" fill="#2f2f2f" stroke="#2f2f2f" stroke-width="0.6"/>
<path d="M384.0 240.5L383.9 240.4L387.1 239.0L387.3 239.2Z" fill="#6e6e6e" stroke="#6e6e6e" stroke-width="0.6"/>
<path d="M383.9 240.4L383.9 239.9L387.2 238.5L387.1 239.0Z" fill="#2f2f2f" stroke="#2f2f2f" stroke-width="0.6"/>
<path d="M383.9 239.9L383.8 239.8L387.0 238.4L387.2 238.5Z" fill="#717171" stroke="#717171" stroke-width="0.6"/>
<path d="M383.8 239.8L383.8 239.3L387.0 237.9L387.0 238.4Z" fill="#2f2f2f" stroke="#2f2f2f" stroke-width="0.6"/>
<path d="M383.8 239.3L383.6 239.1L386.9 237.8L387.0 237.9Z" fill="#747474" stroke="#747474" stroke-width="0.6"/>
<path d="M383.6 239.1L383.6 238.6L386.9 237.3L386.9 237.8Z" fill="#2f2f2f" stroke="#2f2f2f" stroke-width="0.6"/>
<path d="M383.6 238.6L383.5 238.5L386.8 237.2L386.9 237.3Z" fill="#767676" stroke="#767676" stroke-width="0.6"/>
<path d="M383.5 238.5L383.5 238.0L386.8 236.7L386.8 237.2Z" fill="#2f2f2f" stroke="#2f2f2f" stroke-width="0.6"/>
<path d="M383.5 238.0L383.3 237.9L386.6 236.6L386.8 236.7Z" fill="#797979" stroke="#797979" stroke-width="0.6"/>
<path d="M383.3 237.9L383.3 237.4L386.6 236.0L386.6 236.6Z" fill="#2f2f2f" stroke="#2f2f2f" stroke-width="0.6"/>
<path d="M383.3 237.4L383.2 237.3L386.4 235.9L386.6 236.0Z" fill="#7c7c7c" stroke="#7c7c7c" stroke-width="0.6"/>
<path d="M383.2 237.3L383.2 236.7L386.4 235.4L386.4 235.9Z" fill="#2f2f2f" stroke="#2f2f2f" stroke-width="0.6"/>
<path d="M383.2 236.7L383.1 236.2L386.4 234.9L386.4 235.4Z" fill="#2f2f2f" stroke="#2f2f2f" stroke-width="0.6"/>
<path d="M383.1 236.2L383.0 236.1L386.2 234.8L386.4 234.9Z" fill="#808080" stroke="#808080" stroke-width="0.6"/>
<path d="M383.0 236.1L382.9 235.5L386.2 234.2L386.2 234.8Z" fill="#2f2f2f" stroke="#2f2f2f" stroke-width="0.6"/>
<path d="M382.9 235.5L382.9 235.0L386.1 233.7L386.2 234.2Z" fill="#2f2f2f" stroke="#2f2f2f" stroke-width="0.6"/>
<path d="M382.9 235.0L382.8 234.5L386.1 233.1L386.1 233.7Z" fill="#2f2f2f" stroke="#2f2f2f" stroke-width="0.6"/>
<path d="M382.8 234.5L382.6 234.4L385.9 233.0L386.1 233.1Z" fill="#858585" stroke="#858585" stroke-width="0.6"/>
<path d="M382.6 234.4L382.6 233.8L385.8 232.5L385.9 233.0Z" fill="#2f2f2f" stroke="#2f2f2f" stroke-width="0.6"/>
<path d="M382.6 233.8L382.5 233.3L385.8 231.9L385.8 232.5Z" fill="#2f2f2f" stroke="#2f2f2f" stroke-width="0.6"/>
<path d="M382.5 233.3L382.4 232.7L385.7 231.4L385.8 231.9Z" fill="#2f2f2f" stroke="#2f2f2f" stroke-width="0.6"/>
<path d="M382.4 232.7L382.3 232.2L385.6 230.8L385.7 231.4Z" fill="#2f2f2f" stroke="#2f2f2f" stroke-width="0.6"/>
<path d="M382.3 232.2L382.2 231.6L385.5 230.3L385.6 230.8Z" fill="#2f2f2f" stroke="#2f2f2f" stroke-width="0.6"/>
<path d="M382.2 231.6L382.1 231.0L385.4 229.7L385.5 230.3Z" fill="#2f2f2f" stroke="#2f2f2f" stroke-width="0.6"/>
<path d="M382.1 231.0L382.0 230.5L385.3 229.2L385.4 229.7Z" fill="#2f2f2f" stroke="#2f2f2f" stroke-width="0.6"/>
<path d="M382.0 230.5L381.9 229.9L385.2 228.6L385.3 229.2Z" fill="#2f2f2f" stroke="#2f2f2f" stroke-width="0.6"/>
<path d="M381.9 229.9L381.8 229.4L385.0 228.1L385.2 228.6Z" fill="#2f2f2f" stroke="#2f2f2f" stroke-width="0.6"/>
<path d="M381.8 229.4L381.6 228.8L384.9 227.5L385.0 228.1Z" fill="#2f2f2f" stroke="#2f2f2f" stroke-width="0.6"/>
<path d="M381.6 228.8L381.5 228.2L384.8 226.9L384.9 227.5Z" fill="#2f2f2f" stroke="#2f2f2f" stroke-width="0.6"/>
<path d="M381.5 228.2L381.3 227.7L384.6 226.4L384.8 226.9Z" fill="#2f2f2f" stroke="#2f2f2f" stroke-width="0.6"/>
<path d="M381.3 227.7L381.2 227.1L384.5 225.8L384.6 226.4Z" fill="#2f2f2f" stroke="#2f2f2f" stroke-width="0.6"/>
<path d="M381.2 227.1L381.1 226.0L384.4 224.8L384.5 225.8Z" fill="#2f2f2f" stroke="#2f2f2f" stroke-width="0.6"/>
<path d="M381.1 226.0L380.9 225.5L384.2 224.2L384.4 224.8Z" fill="#2f2f2f" stroke="#2f2f2f" stroke-width="0.6"/>
<path d="M380.9 225.5L380.8 224.4L384.1 223.1L384.2 224.2Z" fill="#2f2f2f" stroke="#2f2f2f" stroke-width="0.6"/>
<path d="M380.8 224.4L380.6 223.8L383.9 222.6L384.1 223.1Z" fill="#2f2f2f" stroke="#2f2f2f" stroke-width="0.6"/>
<path d="M380.6 223.8L380.4 222.8L383.7 221.5L383.9 222.6Z" fill="#2f2f2f" stroke="#2f2f2f" stroke-width="0.6"/>
<path d="M380.4 222.8L380.2 222.2L383.5 220.9L383.7 221.5Z" fill="#2f2f2f" stroke="#2f2f2f" stroke-width="0.6"/>
<path d="M380.2 222.2L380.0 221.2L383.3 219.9L383.5 220.9Z" fill="#2f2f2f" stroke="#2f2f2f" stroke-width="0.6"/>
<path d="M380.0 221.2L379.9 220.1L383.1 218.8L383.3 219.9Z" fill="#2f2f2f" stroke="#2f2f2f" stroke-width="0.6"/>
<path d="M379.9 220.1L379.6 219.0L382.9 217.8L383.1 218.8Z" fill="#2f2f2f" stroke="#2f2f2f" stroke-width="0.6"/>
<path d="M379.6 219.0L379.4 218.0L382.7 216.7L382.9 217.8Z" fill="#2f2f2f" stroke="#2f2f2f" stroke-width="0.6"/>
<path d="M379.4 218.0L379.2 216.9L382.5 215.7L382.7 216.7Z" fill="#2f2f2f" stroke="#2f2f2f" stroke-width="0.6"/>
<path d="M379.2 216.9L378.9 215.8L382.2 214.6L382.5 215.7Z" fill="#2f2f2f" stroke="#2f2f2f" stroke-width="0.6"/>
<path d="M378.9 215.8L378.7 214.3L382.0 213.0L382.2 214.6Z" fill="#2f2f2f" stroke="#2f2f2f" stroke-width="0.6"/>
<path d="M378.7 214.3L378.4 212.7L381.7 211.5L382.0 213.0Z" fill="#2f2f2f" stroke="#2f2f2f" stroke-width="0.6"/>
<path d="M378.4 212.7L378.1 211.6L381.4 210.4L381.7 211.5Z" fill="#2f2f2f" stroke="#2f2f2f" stroke-width="0.6"/>
<path d="M378.1 211.6L377.8 210.1L381.1 208.8L381.4 210.4Z" fill="#2f2f2f" stroke="#2f2f2f" stroke-width="0.6"/>
<path d="M377.8 210.1L377.5 208.5L380.8 207.3L381.1 208.8Z" fill="#2f2f2f" stroke="#2f2f2f" stroke-width="0.6"/>
<path d="M377.5 208.5L377.1 206.4L380.4 205.2L380.8 207.3Z" fill="#2f2f2f" stroke="#2f2f2f" stroke-width="0.6"/>
<path d="M377.1 206.4L376.8 204.8L380.1 203.6L380.4 205.2Z" fill="#2f2f2f" stroke="#2f2f2f" stroke-width="0.6"/>
<path d="M376.8 204.8L376.3 202.8L379.7 201.6L380.1 203.6Z" fill="#2f2f2f" stroke="#2f2f2f" stroke-width="0.6"/>
<path d="M376.3 202.8L375.9 200.7L379.2 199.5L379.7 201.6Z" fill="#2f2f2f" stroke="#2f2f2f" stroke-width="0.6"/>
<path d="M375.9 200.7L375.4 198.1L378.8 196.9L379.2 199.5Z" fill="#2f2f2f" stroke="#2f2f2f" stroke-width="0.6"/>
<path d="M375.4 198.1L374.9 195.5L378.2 194.3L378.8 196.9Z" fill="#2f2f2f" stroke="#2f2f2f" stroke-width="0.6"/>
<path d="M374.9 195.5L374.4 192.9L377.7 191.7L378.2 194.3Z" fill="#2f2f2f" stroke="#2f2f2f" stroke-width="0.6"/>
<path d="M374.4 192.9L373.8 189.8L377.1 188.6L377.7 191.7Z" fill="#2f2f2f" stroke="#2f2f2f" stroke-width="0.6"/>
<path d="M373.8 189.8L373.1 186.7L376.4 185.5L377.1 188.6Z" fill="#2f2f2f" stroke="#2f2f2f" stroke-width="0.6"/>
<path d="M373.1 186.7L372.4 183.0L375.7 181.9L376.4 185.5Z" fill="#2f2f2f" stroke="#2f2f2f" stroke-width="0.6"/>
<path d="M372.4 183.0L371.6 179.4L374.9 178.3L375.7 181.9Z" fill="#2f2f2f" stroke="#2f2f2f" stroke-width="0.6"/>
<path d="M371.6 179.4L370.8 175.8L374.1 174.7L374.9 178.3Z" fill="#2f2f2f" stroke="#2f2f2f" stroke-width="0.6"/>
<path d="M370.8 175.8L370.0 173.6L373.4 172.6L374.1 174.7Z" fill="#2f2f2f" stroke="#2f2f2f" stroke-width="0.6"/>
<path d="M370.0 173.6L369.3 172.0L372.7 171.0L373.4 172.6Z" fill="#2f2f2f" stroke="#2f2f2f" stroke-width="0.6"/>
<path d="M369.3 172.0L368.6 170.9L372.0 169.9L372.7 171.0Z" fill="#2f2f2f" stroke="#2f2f2f" stroke-width="0.6"/>
<path d="M368.6 170.9L367.9 169.9L371.2 168.8L372.0 169.9Z" fill="#2f2f2f" stroke="#2f2f2f" stroke-width="0.6"/>
<path d="M367.9 169.9L367.2 169.3L370.6 168.2L371.2 168.8Z" fill="#6a6a6a" stroke="#6a6a6a" stroke-width="0.6"/>
<path d="M367.2 169.3L366.5 168.2L369.8 167.1L370.6 168.2Z" fill="#323232" stroke="#323232" stroke-width="0.6"/>
<path d="M366.5 168.2L365.8 167.7L369.2 166.6L369.8 167.1Z" fill="#6e6e6e" stroke="#6e6e6e" stroke-width="0.6"/>
<path d="M365.8 167.7L365.1 167.1L368.5 166.0L369.2 166.6Z" fill="#707070" stroke="#707070" stroke-width="0.6"/>
<path d="M365.1 167.1L364.4 166.6L367.8 165.5L368.5 166.0Z" fill="#727272" stroke="#727272" stroke-width="0.6"/>
<path d="M364.4 166.6L363.7 166.0L367.1 165.0L367.8 165.5Z" fill="#747474" stroke="#747474" stroke-width="0.6"/>
<path d="M363.7 166.0L363.0 165.5L366.4 164.4L367.1 165.0Z" fill="#757575" stroke="#757575" stroke-width="0.6"/>
<path d="M363.0 165.5L362.4 165.5L365.7 164.4L366.4 164.4Z" fill="#c1c1c1" stroke="#c1c1c1" stroke-width="0.6"/>
<path d="M362.4 165.5L361.6 165.0L365.0 163.9L365.7 164.4Z" fill="#797979" stroke="#797979" stroke-width="0.6"/>
<path d="M361.6 165.0L361.0 165.0L364.4 163.9L365.0 163.9Z" fill="#c3c3c3" stroke="#c3c3c3" stroke-width="0.6"/>
<path d="M361.0 165.0L360.4 165.0L363.8 163.9L364.4 163.9Z" fill="#c4c4c4" stroke="#c4c4c4" stroke-width="0.6"/>
<path d="M360.4 165.0L359.7 164.5L363.0 163.4L363.8 163.9Z" fill="#7d7d7d" stroke="#7d7d7d" stroke-width="0.6"/>
<path d="M359.7 164.5L359.0 164.5L362.4 163.4L363.0 163.4Z" fill="#c5c5c5" stroke="#c5c5c5" stroke-width="0.6"/>
<path d="M359.0 164.5L358.4 164.5L361.8 163.5L362.4 163.4Z" fill="#c6c6c6" stroke="#c6c6c6" stroke-width="0.6"/>
<path d="M358.4 164.5L357.8 164.6L361.2 163.5L361.8 163.5Z" fill="#c7c7c7" stroke="#c7c7c7" stroke-width="0.6"/>
<path d="M357.8 164.6L357.2 164.6L360.5 163.6L361.2 163.5Z" fill="#c7c7c7" stroke="#c7c7c7" stroke-width="0.6"/>
<path d="M356.6 165.2L356.0 165.2L359.4 164.2L360.0 164.1Z" fill="#c9c9c9" stroke="#c9c9c9" stroke-width="0.6"/>
<path d="M356.0 165.2L355.4 165.3L358.8 164.2L359.4 164.2Z" fill="#cacaca" stroke="#cacaca" stroke-width="0.6"/>
<path d="M354.9 165.9L354.3 165.9L357.7 164.9L358.3 164.8Z" fill="#cbcbcb" stroke="#cbcbcb" stroke-width="0.6"/>
<path d="M364.5 247.9L364.0 247.8L367.3 246.4L367.8 246.5Z" fill="#ababab" stroke="#ababab" stroke-width="0.6"/>
<path d="M364.4 248.1L364.0 248.0L367.3 246.7L367.7 246.8Z" fill="#adadad" stroke="#adadad" stroke-width="0.6"/>
<path d="M363.5 251.5L363.1 251.5L366.4 250.1L366.8 250.1Z" fill="#c6c6c6" stroke="#c6c6c6" stroke-width="0.6"/>
<path d="M363.1 251.8L362.7 251.8L366.0 250.4L366.4 250.4Z" fill="#c9c9c9" stroke="#c9c9c9" stroke-width="0.6"/>
<path d="M362.7 252.1L362.3 252.1L365.6 250.8L366.0 250.7Z" fill="#cccccc" stroke="#cccccc" stroke-width="0.6"/>
<path d="M362.3 252.4L361.9 252.5L365.2 251.1L365.6 251.1Z" fill="#cfcfcf" stroke="#cfcfcf" stroke-width="0.6"/>
<path d="M362.0 252.8L361.6 252.9L364.9 251.5L365.2 251.4Z" fill="#d1d1d1" stroke="#d1d1d1" stroke-width="0.6"/>
<path d="M361.6 253.2L361.2 253.3L364.5 251.9L364.9 251.8Z" fill="#d3d3d3" stroke="#d3d3d3" stroke-width="0.6"/>
<path d="M361.2 253.5L360.8 253.6L364.1 252.2L364.5 252.1Z" fill="#d5d5d5" stroke="#d5d5d5" stroke-width="0.6"/>
<path d="M360.9 253.7L360.5 253.9L363.8 252.5L364.2 252.4Z" fill="#d6d6d6" stroke="#d6d6d6" stroke-width="0.6"/>
<path d="M360.5 254.0L360.1 254.2L363.4 252.8L363.8 252.7Z" fill="#d7d7d7" stroke="#d7d7d7" stroke-width="0.6"/>
<path d="M360.2 254.3L359.8 254.5L363.1 253.1L363.5 253.0Z" fill="#d8d8d8" stroke="#d8d8d8" stroke-width="0.6"/>
<path d="M337.8 308.5L339.5 307.3L342.8 305.7L341.0 306.9Z" fill="#2f2f2f" stroke="#2f2f2f" stroke-width="0.6"/>
<path d="M339.5 307.3L341.7 305.4L345.0 303.9L342.8 305.7Z" fill="#2f2f2f" stroke="#2f2f2f" stroke-width="0.6"/>
<path d="M341.7 305.4L343.8 303.5L347.1 302.0L345.0 303.9Z" fill="#2f2f2f" stroke="#2f2f2f" stroke-width="0.6"/>
<path d="M343.8 303.5L345.7 301.9L349.0 300.3L347.1 302.0Z" fill="#2f2f2f" stroke="#2f2f2f" stroke-width="0.6"/>
<path d="M345.7 301.9L347.6 300.1L350.9 298.6L349.0 300.3Z" fill="#2f2f2f" stroke="#2f2f2f" stroke-width="0.6"/>
<path d="M347.6 300.1L349.2 298.7L352.5 297.2L350.9 298.6Z" fill="#2f2f2f" stroke="#2f2f2f" stroke-width="0.6"/>
<path d="M349.2 298.7L350.6 297.5L353.9 296.0L352.5 297.2Z" fill="#2f2f2f" stroke="#2f2f2f" stroke-width="0.6"/>
<path d="M350.6 297.5L352.0 296.3L355.2 294.8L353.9 296.0Z" fill="#2f2f2f" stroke="#2f2f2f" stroke-width="0.6"/>
<path d="M352.0 296.3L353.3 295.0L356.6 293.5L355.2 294.8Z" fill="#2f2f2f" stroke="#2f2f2f" stroke-width="0.6"/>
<path d="M353.3 295.0L354.4 294.1L357.7 292.6L356.6 293.5Z" fill="#2f2f2f" stroke="#2f2f2f" stroke-width="0.6"/>
<path d="M354.4 294.1L355.5 293.1L358.8 291.6L357.7 292.6Z" fill="#2f2f2f" stroke="#2f2f2f" stroke-width="0.6"/>
<path d="M355.5 293.1L356.6 292.1L359.9 290.6L358.8 291.6Z" fill="#2f2f2f" stroke="#2f2f2f" stroke-width="0.6"/>
<path d="M356.6 292.1L357.5 291.4L360.8 289.9L359.9 290.6Z" fill="#2f2f2f" stroke="#2f2f2f" stroke-width="0.6"/>
<path d="M357.5 291.4L358.6 290.3L361.8 288.8L360.8 289.9Z" fill="#2f2f2f" stroke="#2f2f2f" stroke-width="0.6"/>
<path d="M358.6 290.3L359.4 289.5L362.7 288.0L361.8 288.8Z" fill="#2f2f2f" stroke="#2f2f2f" stroke-width="0.6"/>
<path d="M359.4 289.5L360.0 289.1L363.3 287.6L362.7 288.0Z" fill="#2f2f2f" stroke="#2f2f2f" stroke-width="0.6"/>
<path d="M360.0 289.1L360.9 288.3L364.1 286.8L363.3 287.6Z" fill="#2f2f2f" stroke="#2f2f2f" stroke-width="0.6"/>
<path d="M360.9 288.3L361.7 287.5L364.9 286.0L364.1 286.8Z" fill="#2f2f2f" stroke="#2f2f2f" stroke-width="0.6"/>
<path d="M361.7 287.5L362.3 287.0L365.5 285.5L364.9 286.0Z" fill="#2f2f2f" stroke="#2f2f2f" stroke-width="0.6"/>
<path d="M362.3 287.0L362.9 286.5L366.1 285.0L365.5 285.5Z" fill="#2f2f2f" stroke="#2f2f2f" stroke-width="0.6"/>
<path d="M362.9 286.5L363.5 286.0L366.7 284.5L366.1 285.0Z" fill="#2f2f2f" stroke="#2f2f2f" stroke-width="0.6"/>
<path d="M363.5 286.0L364.0 285.5L367.3 284.0L366.7 284.5Z" fill="#2f2f2f" stroke="#2f2f2f" stroke-width="0.6"/>
<path d="M364.0 285.5L364.6 285.0L367.8 283.5L367.3 284.0Z" fill="#2f2f2f" stroke="#2f2f2f" stroke-width="0.6"/>
<path d="M364.6 285.0L365.2 284.4L368.4 283.0L367.8 283.5Z" fill="#2f2f2f" stroke="#2f2f2f" stroke-width="0.6"/>
<path d="M365.2 284.4L365.7 283.9L368.9 282.4L368.4 283.0Z" fill="#2f2f2f" stroke="#2f2f2f" stroke-width="0.6"/>
<path d="M365.7 283.9L366.1 283.7L369.3 282.2L368.9 282.4Z" fill="#2f2f2f" stroke="#2f2f2f" stroke-width="0.6"/>
<path d="M366.1 283.7L366.6 283.1L369.8 281.6L369.3 282.2Z" fill="#2f2f2f" stroke="#2f2f2f" stroke-width="0.6"/>
<path d="M366.6 283.1L367.0 282.9L370.2 281.4L369.8 281.6Z" fill="#2f2f2f" stroke="#2f2f2f" stroke-width="0.6"/>
<path d="M367.0 282.9L367.5 282.3L370.7 280.8L370.2 281.4Z" fill="#2f2f2f" stroke="#2f2f2f" stroke-width="0.6"/>
<path d="M367.5 282.3L367.8 282.1L371.1 280.6L370.7 280.8Z" fill="#2f2f2f" stroke="#2f2f2f" stroke-width="0.6"/>
<path d="M367.8 282.1L368.2 281.8L371.4 280.4L371.1 280.6Z" fill="#2f2f2f" stroke="#2f2f2f" stroke-width="0.6"/>
<path d="M368.2 281.8L368.6 281.2L371.9 279.7L371.4 280.4Z" fill="#2f2f2f" stroke="#2f2f2f" stroke-width="0.6"/>
<path d="M368.6 281.2L369.0 281.0L372.2 279.5L371.9 279.7Z" fill="#2f2f2f" stroke="#2f2f2f" stroke-width="0.6"/>
<path d="M369.0 281.0L369.3 280.7L372.6 279.2L372.2 279.5Z" fill="#2f2f2f" stroke="#2f2f2f" stroke-width="0.6"/>
<path d="M369.3 280.7L369.6 280.4L372.9 279.0L372.6 279.2Z" fill="#2f2f2f" stroke="#2f2f2f" stroke-width="0.6"/>
<path d="M369.6 280.4L369.9 280.2L373.2 278.7L372.9 279.0Z" fill="#2f2f2f" stroke="#2f2f2f" stroke-width="0.6"/>
<path d="M369.9 280.2L370.3 279.9L373.5 278.4L373.2 278.7Z" fill="#2f2f2f" stroke="#2f2f2f" stroke-width="0.6"/>
<path d="M370.3 279.9L370.6 279.6L373.8 278.1L373.5 278.4Z" fill="#2f2f2f" stroke="#2f2f2f" stroke-width="0.6"/>
<path d="M370.6 279.6L370.9 279.3L374.1 277.9L373.8 278.1Z" fill="#2f2f2f" stroke="#2f2f2f" stroke-width="0.6"/>
<path d="M370.9 279.3L371.1 279.0L374.4 277.6L374.1 277.9Z" fill="#2f2f2f" stroke="#2f2f2f" stroke-width="0.6"/>
<path d="M371.1 279.0L371.4 278.7L374.7 277.3L374.4 277.6Z" fill="#2f2f2f" stroke="#2f2f2f" stroke-width="0.6"/>
<path d="M371.4 278.7L371.7 278.4L375.0 277.0L374.7 277.3Z" fill="#2f2f2f" stroke="#2f2f2f" stroke-width="0.6"/>
<path d="M371.9 278.5L372.2 278.2L375.4 276.7L375.1 277.1Z" fill="#2f2f2f" stroke="#2f2f2f" stroke-width="0.6"/>
<path d="M372.2 278.2L372.4 277.9L375.7 276.4L375.4 276.7Z" fill="#2f2f2f" stroke="#2f2f2f" stroke-width="0.6"/>
<path d="M372.4 277.9L372.7 277.6L375.9 276.1L375.7 276.4Z" fill="#2f2f2f" stroke="#2f2f2f" stroke-width="0.6"/>
<path d="M372.8 277.7L373.1 277.3L376.3 275.9L376.1 276.2Z" fill="#2f2f2f" stroke="#2f2f2f" stroke-width="0.6"/>
<path d="M373.1 277.3L373.3 277.0L376.6 275.5L376.3 275.9Z" fill="#2f2f2f" stroke="#2f2f2f" stroke-width="0.6"/>
<path d="M373.5 277.1L373.7 276.7L377.0 275.3L376.7 275.6Z" fill="#2f2f2f" stroke="#2f2f2f" stroke-width="0.6"/>
<path d="M373.9 276.8L374.1 276.4L377.3 275.0L377.1 275.3Z" fill="#2f2f2f" stroke="#2f2f2f" stroke-width="0.6"/>
<path d="M374.1 276.4L374.3 276.1L377.6 274.6L377.3 275.0Z" fill="#2f2f2f" stroke="#2f2f2f" stroke-width="0.6"/>
<path d="M374.5 276.2L374.7 275.8L377.9 274.3L377.7 274.7Z" fill="#2f2f2f" stroke="#2f2f2f" stroke-width="0.6"/>
<path d="M374.8 275.8L375.0 275.5L378.3 274.0L378.1 274.4Z" fill="#2f2f2f" stroke="#2f2f2f" stroke-width="0.6"/>
<path d="M375.2 275.5L375.4 275.1L378.6 273.7L378.4 274.1Z" fill="#2f2f2f" stroke="#2f2f2f" stroke-width="0.6"/>
<path d="M375.5 275.2L375.7 274.8L378.9 273.3L378.7 273.7Z" fill="#2f2f2f" stroke="#2f2f2f" stroke-width="0.6"/>
<path d="M376.0 274.9L376.1 274.5L379.4 273.0L379.2 273.5Z" fill="#2f2f2f" stroke="#2f2f2f" stroke-width="0.6"/>
<path d="M376.3 274.6L376.4 274.1L379.6 272.7L379.5 273.1Z" fill="#2f2f2f" stroke="#2f2f2f" stroke-width="0.6"/>
<path d="M376.7 274.2L376.8 273.8L380.0 272.4L379.9 272.8Z" fill="#2f2f2f" stroke="#2f2f2f" stroke-width="0.6"/>
<path d="M377.1 273.9L377.2 273.5L380.4 272.0L380.3 272.4Z" fill="#2f2f2f" stroke="#2f2f2f" stroke-width="0.6"/>
<path d="M377.4 273.5L377.6 273.1L380.8 271.6L380.7 272.1Z" fill="#2f2f2f" stroke="#2f2f2f" stroke-width="0.6"/>
<path d="M377.9 273.2L378.0 272.7L381.3 271.3L381.2 271.7Z" fill="#2f2f2f" stroke="#2f2f2f" stroke-width="0.6"/>
<path d="M380.1 273.0L380.2 272.5L383.4 271.1L383.4 271.6Z" fill="#2f2f2f" stroke="#2f2f2f" stroke-width="0.6"/>
<path d="M381.1 273.0L381.1 272.5L384.3 271.1L384.3 271.6Z" fill="#2f2f2f" stroke="#2f2f2f" stroke-width="0.6"/>
<path d="M381.5 273.0L381.5 272.5L384.7 271.0L384.7 271.5Z" fill="#2f2f2f" stroke="#2f2f2f" stroke-width="0.6"/>
<path d="M381.8 273.0L381.8 272.5L385.0 271.0L385.1 271.5Z" fill="#2f2f2f" stroke="#2f2f2f" stroke-width="0.6"/>
<path d="M382.5 272.9L382.5 272.4L385.7 270.9L385.7 271.4Z" fill="#2f2f2f" stroke="#2f2f2f" stroke-width="0.6"/>
<path d="M385.7 274.5L385.8 274.4L389.1 273.0L388.9 273.0Z" fill="#2f2f2f" stroke="#2f2f2f" stroke-width="0.6"/>
<path d="M386.2 274.9L386.3 274.8L389.5 273.3L389.4 273.4Z" fill="#2f2f2f" stroke="#2f2f2f" stroke-width="0.6"/>
<path d="M386.6 275.2L386.8 275.1L390.0 273.7L389.9 273.7Z" fill="#2f2f2f" stroke="#2f2f2f" stroke-width="0.6"/>
<path d="M387.1 275.5L387.2 275.5L390.4 274.0L390.3 274.1Z" fill="#2f2f2f" stroke="#2f2f2f" stroke-width="0.6"/>
<path d="M387.6 275.8L387.7 275.8L390.9 274.3L390.8 274.4Z" fill="#2f2f2f" stroke="#2f2f2f" stroke-width="0.6"/>
<path d="M387.7 275.8L388.2 276.1L388.7 276.4L389.2 276.6L390.0 277.3L390.5 277.6L391.3 278.2L391.9 278.5L392.7 279.1L393.6 279.7L394.4 280.2L395.3 280.8L396.2 281.3L397.1 281.8L398.4 282.6L399.6 283.5L400.9 284.2L402.6 285.3L404.2 286.4L405.9 287.4L408.3 289.1L410.4 290.4L413.3 292.2L416.2 294.0L419.8 296.4L423.9 299.0L428.8 302.1L434.5 305.8L439.2 308.2L441.6 308.7L443.3 308.4L445.0 308.1L446.3 307.5L447.6 306.8L448.4 305.7L448.9 304.4L449.7 303.3L450.1 302.0L450.1 300.3L450.4 298.9L450.3 297.3L449.8 295.4L449.2 293.6L448.7 291.7L447.6 289.7L445.7 287.4L442.5 284.5L436.3 280.6L430.9 277.3L426.8 274.7L423.0 272.3L419.7 270.3L416.8 268.5L414.7 267.1L412.2 265.7L410.6 264.5L408.9 263.4L407.2 262.4L405.9 261.6L404.6 260.8L403.3 260.0L402.0 259.3L401.2 258.7L400.3 258.1L399.4 257.6L398.5 257.0L397.6 256.6L397.1 256.1L396.2 255.7L395.7 255.3L395.3 254.9L394.8 254.5L393.9 254.2L393.4 253.9L392.9 253.6L392.4 253.3L391.9 253.1L391.8 252.7L391.3 252.5L390.8 252.2L390.3 252.0L390.2 251.7L389.7 251.6L389.3 251.4L389.1 251.1L388.7 251.0L388.5 250.7L388.4 250.4L387.9 250.3L388.1 249.9L388.0 249.6L387.8 249.3L387.3 249.3L387.5 248.8L387.3 248.5L387.2 248.3L386.7 248.3L386.8 247.8L386.4 247.8L386.5 247.3L386.3 247.0L386.1 246.8L386.0 246.5L385.8 246.3L385.3 246.4L385.4 245.8L385.2 245.6L385.0 245.4L384.8 245.1L384.8 244.6L384.6 244.4L384.6 243.8L384.6 243.2L384.4 243.0L384.3 242.4L384.3 241.8L384.0 241.6L384.0 241.0L383.9 240.4L383.8 239.8L383.6 239.1L383.5 238.5L383.3 237.9L383.2 237.3L383.1 236.2L382.9 235.5L382.8 234.5L382.6 233.8L382.4 232.7L382.2 231.6L382.0 230.5L381.8 229.4L381.5 228.2L381.2 227.1L380.9 225.5L380.6 223.8L380.2 222.2L379.9 220.1L379.4 218.0L378.9 215.8L378.4 212.7L377.8 210.1L377.1 206.4L376.3 202.8L375.4 198.1L374.4 192.9L373.1 186.7L371.6 179.4L370.0 173.6L368.6 170.9L367.2 169.3L365.8 167.7L364.4 166.6L363.0 165.5L361.6 165.0L360.4 165.0L359.0 164.5L357.8 164.6L356.6 165.2L355.4 165.3L354.3 165.9L353.4 167.1L352.5 168.3L351.6 169.6L350.9 171.3L350.6 174.1L350.9 178.3L352.5 186.0L353.9 192.7L354.9 197.8L355.9 202.4L356.8 206.5L357.6 210.1L358.0 212.8L358.8 215.8L359.1 218.0L359.6 220.1L360.0 222.2L360.3 223.8L360.7 225.4L361.0 227.0L361.4 228.6L361.6 229.7L361.8 230.8L362.1 231.9L362.3 233.0L362.6 234.1L362.6 234.7L363.0 235.8L363.0 236.4L363.1 237.1L363.2 237.7L363.6 238.7L363.7 239.4L363.8 240.0L364.0 240.6L364.1 241.2L364.0 241.4L364.1 242.0L364.3 242.6L364.5 243.2L364.4 243.4L364.6 244.0L364.8 244.5L364.7 244.7L365.0 245.3L364.9 245.5L364.8 245.7L364.7 246.0L364.6 246.2L364.5 246.4L364.4 246.7L364.3 246.9L364.2 247.1L364.2 247.4L364.5 247.9L364.4 248.1L364.0 248.1L363.9 248.4L363.8 248.7L363.8 248.9L363.7 249.2L363.7 249.4L363.7 249.7L363.6 250.0L363.6 250.2L363.6 250.5L363.6 250.8L363.5 251.1L363.5 251.3L363.1 251.5L363.1 251.8L362.7 251.9L362.3 252.1L362.3 252.4L361.9 252.6L361.6 252.9L361.6 253.2L361.2 253.5L360.9 253.7L360.5 254.0L360.2 254.3L359.8 254.7L359.5 255.0L359.2 255.4L358.5 255.7L358.2 256.1L357.5 256.6L357.2 257.0L356.6 257.5L355.9 258.0L355.3 258.6L354.7 259.2L354.1 259.8L353.6 260.4L352.7 261.2L351.8 262.0L350.9 262.8L349.8 263.8L348.6 264.8L347.5 265.9L345.8 267.3L344.4 268.7L342.4 270.4L340.5 272.2L338.1 274.4L335.4 276.9L332.2 279.9L328.5 283.3L324.4 287.3L323.3 289.7L322.9 291.8L322.8 293.7L322.8 295.7L323.3 297.3L323.7 299.1L324.5 300.4L325.2 302.0L326.1 303.4L327.2 304.5L328.2 305.8L329.4 306.8L330.8 307.6L332.2 308.3L333.9 308.7L335.7 308.8L337.8 308.5L341.7 305.4L345.7 301.9L349.2 298.7L352.0 296.3L354.4 294.1L356.6 292.1L358.6 290.3L360.0 289.1L361.7 287.5L362.9 286.5L364.0 285.5L365.2 284.4L366.1 283.7L367.0 282.9L367.8 282.1L368.6 281.2L369.3 280.7L369.9 280.2L370.6 279.6L371.1 279.0L371.7 278.4L372.2 278.2L372.7 277.6L373.1 277.3L373.5 277.1L373.9 276.8L374.3 276.1L374.7 275.8L375.0 275.5L375.4 275.1L375.7 274.8L376.0 274.9L376.3 274.6L376.5 274.2L376.8 273.8L377.1 273.9L377.3 273.5L377.6 273.1L377.8 273.2L378.0 272.7L378.3 272.8L378.5 272.8L378.7 272.9L379.0 272.9L379.2 273.0L379.4 273.0L379.7 273.0L379.9 273.0L380.1 273.0L380.4 273.0L380.6 273.0L380.8 273.0L381.1 273.0L381.3 273.0L381.5 273.0L381.7 273.0L381.8 272.5L382.2 272.9L382.4 272.9L382.5 272.4L382.8 272.8L383.1 272.7L383.5 273.2L383.7 273.1L384.1 273.5L384.5 273.9L384.7 273.8L385.2 274.2L385.6 274.6L385.8 274.4L386.3 274.8L386.8 275.1L387.2 275.5Z" fill="#dfdfdf"/>
<path d="M382.2 265.7L383.1 264.9L384.0 264.0L384.6 262.8L385.1 261.5L385.3 260.1L385.4 258.5L385.3 257.0L384.9 255.4L384.4 253.8L383.7 252.3L382.8 250.9L381.7 249.6L380.6 248.5L379.4 247.6L378.1 246.9L376.8 246.4L375.5 246.2L374.3 246.2L373.1 246.5L372.0 247.0L371.0 247.8L370.2 248.8L369.6 249.9L369.2 251.2L368.9 252.6L368.8 254.2L369.0 255.7L369.3 257.3L369.9 258.9L370.6 260.4L371.5 261.8L372.5 263.0L373.6 264.1L374.8 265.1L376.1 265.8L377.4 266.2L378.7 266.5L379.9 266.4L381.1 266.2Z" fill="url(#hubg)"/>
</g>
<g font-family="Liberation Sans,sans-serif" fill="#dbe6f0" stroke="none">
<!-- spike --><path d="M343.3 234.4L359.5 233.2L357 243.5Z" fill="#e2e2e2"/>
<!-- marker near upper-left planet -->
<g stroke="#e8eef5" stroke-width="0.6" fill="none"><path d="M336.5 172.5l3-5.5M336.5 172.5l5 0.5M339.5 172l6.2 9.5M334 175l1.6-4.2M338.6 166v3.4"/></g>
<text x="337.2" y="166.8" font-size="3.6">z</text><text x="332" y="173.6" font-size="3.6">y</text><text x="339.6" y="171.4" font-size="3.6">x</text>
<!-- marker right of upper planet -->
<g stroke="#e8eef5" stroke-width="0.6" fill="none"><path d="M438.5 186.5l4.5-3M440 183l3.6 3.4"/></g>
<text x="445.3" y="189.4" font-size="4.6">7</text>
<!-- line to KER_33 -->
<path d="M465.5 217.3L482.2 210.5" stroke="#e8eef5" stroke-width="0.6" fill="none"/>
<text x="483" y="214.2" font-size="4">x</text><path d="M483.5 210.2l3.6 1.2" stroke="#e8eef5" stroke-width="0.6"/>
<text x="521" y="214.6" font-size="5.6" fill="#b9cbdd">KER_33</text>
<text x="531.4" y="278.6" font-size="5.6" fill="#b9cbdd">R_4</text>
<!-- red labels -->
<g fill="#e8251c" font-size="4.6"><text x="444" y="222.6" transform="rotate(-8 444 222.6)">MARKER_5</text><text x="443" y="226.8" transform="rotate(-26 443 226.8)" font-size="4.4">MARKER_9</text></g>
<!-- bottom marker -->
<path d="M412.1 299.5V348" stroke="#f0f3f6" stroke-width="0.7" fill="none"/>
<path d="M412 292v9M409.8 296.2h4.6M410.4 299.2l3.2-4.6" stroke="#f03a18" stroke-width="0.9" fill="none"/>
<path d="M412.1 348l2.2-5.4M412.1 348l1.2 1.4" stroke="#f0f3f6" stroke-width="0.6" fill="none"/>
<text x="414.6" y="342.4" font-size="3.6" fill="#f0f3f6">z</text><text x="412.2" y="346.6" font-size="3.6" fill="#f0f3f6">y</text>
<text x="417.2" y="350.6" font-size="5.75" fill="#e6edf4">PLANET2.MARKER</text>
<!-- global triad -->
<g stroke-width="0.9" fill="none"><path d="M97.4 372.5L87.8 367.6" stroke="#c8201c"/><path d="M97.4 372.5L99.5 361.2" stroke="#25b52b"/><path d="M97.4 372.5L106.6 369.3" stroke="#2030e0"/></g>
<g fill="#d6dde6" font-size="4.8"><text x="84.2" y="366.6">x</text><text x="99.2" y="358.4">y</text><text x="108" y="368.4">z</text></g>
</g>

</svg>
<div class="t" style="left:77px;top:92.5px;font-size:6.1px;color:#dfe9f3;white-space:pre">Last_Run   Time=  1.2000  Frame=124</div>
<div class="abs" id="left"></div>
<div class="inp" style="left:-2px;top:94px;width:75px;height:11.5px;line-height:10px;font-size:6.5px;padding-left:1.5px">728<div class="dd"></div></div>
<div class="abs" style="left:0;top:108.5px;width:74px;height:13px;background:#dfe8f6"></div>
<div class="abs" style="left:0;top:108.5px;width:4.5px;height:13px;background:#fff"></div>
<div class="tab" style="left:4.5px;top:109px;width:17px;height:12px;line-height:12px">组</div>
<div class="tab" style="left:22px;top:109px;width:29.5px;height:12px;line-height:12px">过滤器</div>
<div class="abs" style="left:-1px;top:123px;width:75px;height:255px;background:#fff;border:1px solid #8b93a0"></div>
<div class="t" style="left:10.3px;top:126.00px;font-size:6.7px;color:#222">XINGXINGJIA</div>
<div class="t" style="left:10.3px;top:136.95px;font-size:6.7px;color:#222">SUN</div>
<div class="t" style="left:10.3px;top:147.90px;font-size:6.7px;color:#222">PLANET1</div>
<div class="t" style="left:10.3px;top:158.85px;font-size:6.7px;color:#222">PLANET2</div>
<div class="t" style="left:10.3px;top:169.80px;font-size:6.7px;color:#222">PLANET3</div>
<div class="t" style="left:10.3px;top:180.75px;font-size:6.7px;color:#222">RING</div>
<div class="t" style="left:10.3px;top:191.70px;font-size:6.7px;color:#222">大地</div>
<div class="t" style="left:-0.5px;top:202.65px;font-size:6.5px;color:#222">连接</div>
<div class="t" style="left:10.3px;top:213.60px;font-size:6.7px;color:#222">JOINT_6</div>
<div class="t" style="left:10.3px;top:224.55px;font-size:6.7px;color:#222">SUN_dadi</div>
<div class="t" style="left:10.3px;top:235.50px;font-size:6.7px;color:#222">X3_jia</div>
<div class="t" style="left:10.3px;top:246.45px;font-size:6.7px;color:#222">X2_jia</div>
<div class="t" style="left:10.3px;top:257.40px;font-size:6.7px;color:#222">X1_jia</div>
<div class="t" style="left:10.3px;top:268.35px;font-size:6.7px;color:#222">JOINT_1</div>
<div class="t" style="left:-0.5px;top:279.30px;font-size:6.5px;color:#222">驱动</div>
<div class="t" style="left:10.3px;top:290.25px;font-size:6.7px;color:#222">MOTION_1</div>
<div class="t" style="left:-0.5px;top:301.20px;font-size:6.5px;color:#222">力</div>
<div class="t" style="left:10.3px;top:312.15px;font-size:6.7px;color:#222">CONTACT_6</div>
<div class="t" style="left:10.3px;top:323.10px;font-size:6.7px;color:#222">CONTACT_5</div>
<div class="t" style="left:10.3px;top:334.05px;font-size:6.7px;color:#222">CONTACT_4</div>
<div class="t" style="left:10.3px;top:345.00px;font-size:6.7px;color:#222">CONTACT_3</div>
<div class="t" style="left:10.3px;top:355.95px;font-size:6.7px;color:#222">CONTACT_2</div>
<div class="t" style="left:10.3px;top:366.90px;font-size:6.7px;color:#222">CONTACT_1</div>
<div class="abs" style="left:0;top:366.90px;width:64px;height:3.2px;overflow:hidden"><div class="t" style="left:10.3px;top:0;font-size:6.7px;color:#222">CONTACT_1</div></div>
<svg class="abs" style="left:0;top:0" width="76" height="406" viewBox="0 0 76 406"><line x1="0" y1="129.6" x2="3" y2="129.6" stroke="#999" stroke-width="0.6"/><rect x="2.8" y="126.20" width="6.6" height="6.6" rx="0.8" fill="#f7b80a" stroke="#c98a00" stroke-width="0.6"/><rect x="3.6" y="126.80" width="4.2" height="2" fill="#ffd95a" opacity=".8"/><line x1="0" y1="140.54999999999998" x2="3" y2="140.54999999999998" stroke="#999" stroke-width="0.6"/><rect x="2.8" y="137.15" width="6.6" height="6.6" rx="0.8" fill="#f7b80a" stroke="#c98a00" stroke-width="0.6"/><rect x="3.6" y="137.75" width="4.2" height="2" fill="#ffd95a" opacity=".8"/><line x1="0" y1="151.5" x2="3" y2="151.5" stroke="#999" stroke-width="0.6"/><rect x="2.8" y="148.10" width="6.6" height="6.6" rx="0.8" fill="#f7b80a" stroke="#c98a00" stroke-width="0.6"/><rect x="3.6" y="148.70" width="4.2" height="2" fill="#ffd95a" opacity=".8"/><line x1="0" y1="162.45" x2="3" y2="162.45" stroke="#999" stroke-width="0.6"/><rect x="2.8" y="159.05" width="6.6" height="6.6" rx="0.8" fill="#f7b80a" stroke="#c98a00" stroke-width="0.6"/><rect x="3.6" y="159.65" width="4.2" height="2" fill="#ffd95a" opacity=".8"/><line x1="0" y1="173.39999999999998" x2="3" y2="173.39999999999998" stroke="#999" stroke-width="0.6"/><rect x="2.8" y="170.00" width="6.6" height="6.6" rx="0.8" fill="#f7b80a" stroke="#c98a00" stroke-width="0.6"/><rect x="3.6" y="170.60" width="4.2" height="2" fill="#ffd95a" opacity=".8"/><line x1="0" y1="184.35" x2="3" y2="184.35" stroke="#999" stroke-width="0.6"/><rect x="2.8" y="180.95" width="6.6" height="6.6" rx="0.8" fill="#f7b80a" stroke="#c98a00" stroke-width="0.6"/><rect x="3.6" y="181.55" width="4.2" height="2" fill="#ffd95a" opacity=".8"/><line x1="0" y1="195.29999999999998" x2="3" y2="195.29999999999998" stroke="#999" stroke-width="0.6"/><rect x="2.8" y="191.90" width="6.6" height="6.6" rx="0.8" fill="#f3d44a" stroke="#b89a20" stroke-width="0.6"/><path d="M6.1 193.30v2.6M4.6 196.50h3M4.9 197.50h2.4" stroke="#2a7a3a" stroke-width="0.7" fill="none"/><line x1="0" y1="217.2" x2="3" y2="217.2" stroke="#999" stroke-width="0.6"/><circle cx="6.2" cy="217.20" r="3.1" fill="#e59a1c"/><path d="M3.2 217.20a3 3 0 0 1 4.5 -2.6l-1.5 2.8z" fill="#2a4fb0"/><circle cx="6.4" cy="217.60" r="1" fill="#333"/><line x1="0" y1="228.14999999999998" x2="3" y2="228.14999999999998" stroke="#999" stroke-width="0.6"/><circle cx="6.2" cy="228.15" r="3.1" fill="#e59a1c"/><path d="M3.2 228.15a3 3 0 0 1 4.5 -2.6l-1.5 2.8z" fill="#2a4fb0"/><circle cx="6.4" cy="228.55" r="1" fill="#333"/><line x1="0" y1="239.1" x2="3" y2="239.1" stroke="#999" stroke-width="0.6"/><circle cx="6.2" cy="239.10" r="3.1" fill="#e59a1c"/><path d="M3.2 239.10a3 3 0 0 1 4.5 -2.6l-1.5 2.8z" fill="#2a4fb0"/><circle cx="6.4" cy="239.50" r="1" fill="#333"/><line x1="0" y1="250.04999999999998" x2="3" y2="250.04999999999998" stroke="#999" stroke-width="0.6"/><circle cx="6.2" cy="250.05" r="3.1" fill="#e59a1c"/><path d="M3.2 250.05a3 3 0 0 1 4.5 -2.6l-1.5 2.8z" fill="#2a4fb0"/><circle cx="6.4" cy="250.45" r="1" fill="#333"/><line x1="0" y1="261.0" x2="3" y2="261.0" stroke="#999" stroke-width="0.6"/><circle cx="6.2" cy="261.00" r="3.1" fill="#e59a1c"/><path d="M3.2 261.00a3 3 0 0 1 4.5 -2.6l-1.5 2.8z" fill="#2a4fb0"/><circle cx="6.4" cy="261.40" r="1" fill="#333"/><line x1="0" y1="271.95" x2="3" y2="271.95" stroke="#999" stroke-width="0.6"/><rect x="3.8" y="271.15" width="5" height="4.2" rx="0.6" fill="#f0a81c" stroke="#b97800" stroke-width="0.5"/><path d="M4.8 271.15v-1.2a1.5 1.5 0 0 1 3 0v1.2" fill="none" stroke="#c8901a" stroke-width="0.8"/><line x1="0" y1="293.85" x2="3" y2="293.85" stroke="#999" stroke-width="0.6"/><circle cx="6.2" cy="293.85" r="3" fill="#3d8f5a"/><path d="M3.4 294.35a2.9 2.9 0 0 1 5.6 0z" fill="#7b58c8"/><circle cx="6.2" cy="294.15" r="1.1" fill="#dfe"/><line x1="0" y1="315.75" x2="2" y2="315.75" stroke="#999" stroke-width="0.6"/><path d="M2.3 313.95l2 1.3l1.3 1.6l1.6 0.3" fill="none" stroke="#2f7fd0" stroke-width="0.7"/><circle cx="8.6" cy="316.75" r="1.1" fill="#2f7fd0"/><line x1="0" y1="326.7" x2="2" y2="326.7" stroke="#999" stroke-width="0.6"/><path d="M2.3 324.90l2 1.3l1.3 1.6l1.6 0.3" fill="none" stroke="#2f7fd0" stroke-width="0.7"/><circle cx="8.6" cy="327.70" r="1.1" fill="#2f7fd0"/><line x1="0" y1="337.65" x2="2" y2="337.65" stroke="#999" stroke-width="0.6"/><path d="M2.3 335.85l2 1.3l1.3 1.6l1.6 0.3" fill="none" stroke="#2f7fd0" stroke-width="0.7"/><circle cx="8.6" cy="338.65" r="1.1" fill="#2f7fd0"/><line x1="0" y1="348.6" x2="2" y2="348.6" stroke="#999" stroke-width="0.6"/><path d="M2.3 346.80l2 1.3l1.3 1.6l1.6 0.3" fill="none" stroke="#2f7fd0" stroke-width="0.7"/><circle cx="8.6" cy="349.60" r="1.1" fill="#2f7fd0"/><line x1="0" y1="359.54999999999995" x2="2" y2="359.54999999999995" stroke="#999" stroke-width="0.6"/><path d="M2.3 357.75l2 1.3l1.3 1.6l1.6 0.3" fill="none" stroke="#2f7fd0" stroke-width="0.7"/><circle cx="8.6" cy="360.55" r="1.1" fill="#2f7fd0"/><line x1="0" y1="370.5" x2="2" y2="370.5" stroke="#999" stroke-width="0.6"/><path d="M2.3 368.70l2 1.3l1.3 1.6l1.6 0.3" fill="none" stroke="#2f7fd0" stroke-width="0.7"/><circle cx="8.6" cy="371.50" r="1.1" fill="#2f7fd0"/></svg>
<div class="abs" style="left:64.5px;top:124px;width:8.5px;height:244px;background:#f4f6fa;border-left:0.5px solid #d5dae2"></div>
<div class="abs" style="left:65px;top:131px;width:7.5px;height:178px;background:#fdfdfe;border-right:1px solid #7a828e;border-bottom:1px solid #7a828e"></div>
<div class="btn" style="left:65px;top:124.5px;width:7.5px;height:7px"></div>
<div class="abs" style="left:67.3px;top:127px;border:1.6px solid transparent;border-bottom:2px solid #111;border-top:0"></div>
<div class="btn" style="left:65px;top:361.5px;width:7.5px;height:6.5px"></div>
<div class="abs" style="left:67.3px;top:364px;border:1.6px solid transparent;border-top:2px solid #111;border-bottom:0"></div>
<div class="abs" style="left:0;top:369.5px;width:64.5px;height:7.5px;background:#f4f6fa;border-top:0.5px solid #d5dae2"></div>
<div class="abs" style="left:0;top:370px;width:47px;height:6.5px;background:#fdfdfe;border-right:1px solid #7a828e;border-bottom:1px solid #7a828e"></div>
<div class="btn" style="left:57px;top:370px;width:7px;height:6.5px"></div>
<div class="abs" style="left:59.5px;top:371.7px;border:1.6px solid transparent;border-left:2px solid #111;border-right:0"></div>
<div class="abs" style="left:64.5px;top:368.5px;width:8.5px;height:9px;background:#eef2f8"></div>
<div class="abs" style="left:0;top:378px;width:74.5px;height:15.5px;background:#f3f6fb"></div>
<div class="abs" style="left:74.5px;top:89px;width:1.5px;height:304.5px;background:#c9d3e3"></div>
<div class="abs" id="status"></div>
<div class="t" style="left:-4px;top:397.4px;font-size:6.5px;color:#222">重播最后的仿真</div>
<svg class="abs" style="left:625px;top:394px" width="97" height="12" viewBox="625 394 97 12">
<g fill="none">
<rect x="630.2" y="396.6" width="7.4" height="7.2" fill="#0a0a8c"/><rect x="630.2" y="396.6" width="7.4" height="1.4" fill="#3a3ad0"/><path d="M635.6 401.4l1.6 1.8" stroke="#e8e8f8" stroke-width="0.6"/>
<rect x="641.8" y="396.4" width="10.4" height="8.4" fill="#f6fafe" stroke="#9fb4d8" stroke-width="0.7"/><path d="M644 398v5h3M648.4 402.4l1.4 0.8l-1.4 0.8z" stroke="#2a5ab8" stroke-width="0.7"/>
<rect x="656" y="396.2" width="8" height="8.4" fill="#f8b810" stroke="#c08a10" stroke-width="0.7"/><path d="M662.2 402.2l1.8 2.4" stroke="#333" stroke-width="0.7"/>
<rect x="667.8" y="396.6" width="10.6" height="8" fill="#f0f4fa" stroke="#8a9ab8" stroke-width="0.7"/><path d="M670 399.4v4.6M672.6 399.4v4.6M675.2 399.4v4.6" stroke="#3a4a6a" stroke-width="0.9"/>
<path d="M681.4 399.4l6.4-2.6l2.6 0.6v3l-6.6 2.6z" fill="#111"/><path d="M681.4 399.4l2.4 3.6v1.6l-2.4-3.4z" fill="#444"/>
<circle cx="697.6" cy="400.2" r="4.2" fill="#f6c23a"/><path d="M697.6 396a4.2 4.2 0 0 1 0 8.4a6 6 0 0 0 0-8.4z" fill="#f4ead6"/>
<path d="M708 396.6l2.6 3.4l-3 3.6M710.6 400l4-1.4" stroke="#2a8ae0" stroke-width="1"/><rect x="712.6" y="400.6" width="3.6" height="3.8" fill="#6aaae8"/>
<circle cx="723" cy="400" r="4" stroke="#2a78d0" stroke-width="1.1"/>
</g></svg>

<div class="dlg"></div>
<div class="abs" style="left:555.5px;top:76px;width:130px;height:14.5px;background:#fff"></div>
<svg class="abs" style="left:558.5px;top:79.2px" width="8" height="8" viewBox="0 0 8 8"><rect x="0" y="0" width="8" height="7.6" rx="1.6" fill="#ef3b36"/><circle cx="4" cy="3.8" r="1.9" fill="none" stroke="#a8201c" stroke-width="0.8"/><path d="M2.5 5.2L5.5 2.4" stroke="#c9302b" stroke-width="0.6"/></svg>
<div class="t" style="left:568.8px;top:79.9px;font-size:6.1px;color:#222">仿真控制</div>
<svg class="abs" style="left:675px;top:80px" width="6" height="6" viewBox="0 0 6 6"><path d="M0.7 0.7L5.2 5.2M5.2 0.7L0.7 5.2" stroke="#333" stroke-width="0.7"/></svg>
<div class="btn" style="left:558px;top:92.4px;width:17.4px;height:17.4px"></div>
<div class="btn" style="left:577px;top:92.4px;width:17.4px;height:17.4px"></div>
<div class="btn" style="left:596px;top:92.4px;width:17.4px;height:17.4px"></div>
<div class="btn" style="left:646.6px;top:92.4px;width:17.4px;height:17.4px"></div>
<div class="btn" style="left:666px;top:92.4px;width:17.4px;height:17.4px"></div>
<svg class="abs" style="left:554px;top:88px" width="134" height="26" viewBox="554 88 134 26">
<rect x="560.2" y="96" width="1.9" height="10.5" fill="#1a3f9c"/>
<path d="M567.6 96v10.5l-5-5.25z M572.8 96v10.5l-5-5.25z" fill="#1a3f9c"/>
<rect x="583" y="98.5" width="5.6" height="5.6" fill="#1a3a8c"/>
<path d="M602.3 95.6v11.4l5.6-5.7z" fill="#2f8a1e"/>
<circle cx="655.3" cy="102.6" r="4.6" fill="#1f63c4"/><circle cx="654.2" cy="101.6" r="2.1" fill="#6fb2ee"/>
<path d="M649.5 100.5c0.5-5 9.5-5.6 11.6-0.6" fill="none" stroke="#222" stroke-width="0.9"/>
<path d="M661.6 98.2v3.2h-3z M649.4 104.6l2.4 2.6l-3.2 0.4z" fill="#222"/>
<path d="M660.8 104c-0.8 2.6-4.2 4.3-7.4 3.4" fill="none" stroke="#222" stroke-width="0.8"/>
<path d="M669.6 101.8l3.3 4.2l7-10.4" fill="none" stroke="#1a3f9c" stroke-width="2.1" stroke-linejoin="miter"/>
</svg>
<div class="abs" style="left:557.4px;top:111.7px;width:126.6px;height:141px;border:0.6px solid #fff;border-top-color:#b8c0cc;border-left-color:#b8c0cc"></div>
<div class="inp" style="left:560px;top:114.3px;width:58px;height:11px">终止时间<div class="dd"></div></div>
<div class="inp" style="left:620.8px;top:114.3px;width:62px;height:11px;font-size:7px">5</div>
<div class="inp" style="left:560px;top:127.3px;width:58px;height:11px">步数<div class="dd"></div></div>
<div class="inp" style="left:620.8px;top:127.3px;width:62px;height:11px;font-size:7px">500</div>
<div class="dl" style="left:561.3px;top:144.3px">分析类型</div>
<div class="inp" style="left:620.3px;top:142px;width:59.5px;height:11px">默认<div class="dd"></div></div>
<div class="cb" style="left:560px;top:157.8px"></div><div class="dl" style="left:568.6px;top:157.3px">在平衡状态开始</div>
<div class="cb" style="left:560px;top:170.8px"></div><div class="dl" style="left:568.6px;top:170.3px">运行前复位</div>
<div class="inp" style="left:560px;top:182px;width:120.6px;height:11.4px">不调试<div class="dd"></div></div>
<div class="btn" style="left:560px;top:197.6px;width:18px;height:17.2px"></div>
<div class="btn" style="left:580.7px;top:197.6px;width:18px;height:17.2px"></div>
<div class="btn" style="left:601px;top:197.6px;width:18px;height:17.2px"></div>
<div class="btn" style="left:621.3px;top:197.6px;width:18px;height:17.2px"></div>
<div class="btn" style="left:641.7px;top:197.6px;width:18px;height:17.2px"></div>
<div class="btn" style="left:662.3px;top:197.6px;width:18px;height:17.2px"></div>
<div class="btn" style="left:560px;top:217.3px;width:18px;height:17.4px"></div>
<div class="btn" style="left:580.7px;top:217.3px;width:18px;height:17.4px"></div>
<div class="btn" style="left:662.3px;top:217.3px;width:18px;height:17.4px"></div>
<svg class="abs" style="left:556px;top:195px" width="130" height="42" viewBox="556 195 130 42">
<!-- 1 envelope w ball -->
<path d="M562 201v9.6h13.6v-9.6l-3.6 3h-6.4z" fill="#fff" stroke="#1b2f86" stroke-width="1"/>
<circle cx="568.8" cy="204.6" r="2.4" fill="#1a35c8"/>
<!-- 2 wrench -->
<path d="M583.8 211.6l6.4-6.6" stroke="#1b3a9a" stroke-width="2.6" stroke-linecap="round"/>
<circle cx="592" cy="203.2" r="3.2" fill="#1f44a8"/><path d="M592 203.2l3.4-3.2" stroke="#eef1f6" stroke-width="1.6"/>
<circle cx="584.4" cy="211" r="0.8" fill="#cfe"/>
<!-- 3 hand -->
<path d="M606 213.4l-3.2-5.4l1.4-0.9l2 2v-7.4h1.7v4v-5.4h1.8v5.4v-4.8h1.8v5v-3.4h1.7v7.8l-1.2 3.2z" fill="#fff" stroke="#333" stroke-width="0.6" stroke-linejoin="round"/>
<!-- 4 -->
<path d="M624.4 201v11.6M624.4 205.2h12" stroke="#222" stroke-width="0.9" fill="none"/>
<rect x="630.4" y="199.6" width="6" height="3.6" fill="#c9d6f2" stroke="#2a3fc0" stroke-width="0.8"/>
<path d="M626.4 207.4l8.6 4.6" stroke="#2a3fc0" stroke-width="1" stroke-dasharray="1.1 1.1"/>
<!-- 5 -->
<path d="M644.8 201v11.6M644.8 205.2h12" stroke="#222" stroke-width="0.9" fill="none"/>
<text x="649.4" y="204.3" font-size="5" font-weight="bold" fill="#222" font-family="Liberation Sans,sans-serif">P</text>
<path d="M646.8 207.4l8.6 4.6" stroke="#2a3fc0" stroke-width="1" stroke-dasharray="1.1 1.1"/>
<!-- 6 ABCD -->
<rect x="664.6" y="199.2" width="13.4" height="14" fill="#e6e6e6" stroke="#666" stroke-width="0.5"/><path d="M671.3 199.2v14M664.6 206.2h13.4" stroke="#888" stroke-width="0.5"/>
<text x="665.4" y="205.6" font-size="7.2" fill="#111" font-family="Liberation Sans,sans-serif" textLength="11.8" lengthAdjust="spacingAndGlyphs">AB</text>
<text x="665.4" y="212.6" font-size="7.2" fill="#111" font-family="Liberation Sans,sans-serif" textLength="11.8" lengthAdjust="spacingAndGlyphs">CD</text>
<!-- row2 1: curve + Nastran -->
<path d="M561.6 224.8c2-4.4 4.6-4.4 7 0c2.4-4.4 5-4.4 7.2 0" fill="none" stroke="#2a3fc0" stroke-width="1"/>
<path d="M568.8 224v4.6M567 227l1.8 2l1.8-2z" stroke="#111" stroke-width="0.8" fill="#111"/>
<text x="561" y="233.8" font-size="4.8" font-weight="bold" fill="#111" font-family="Liberation Sans,sans-serif" textLength="16" lengthAdjust="spacingAndGlyphs">Nastran</text>
<!-- row2 2: link w/ rotation -->
<path d="M584.4 230.4l9.6-7.4" stroke="#555" stroke-width="2.8" stroke-linecap="round"/>
<path d="M584.4 230.4l9.6-7.4" stroke="#f4f4f4" stroke-width="1.6" stroke-linecap="round"/>
<path d="M586.6 222.4c3-3 7.4-1 8 2.4M592.6 230.8c-3.6 1.6-7-0.8-7-4" fill="none" stroke="#2a3fc0" stroke-width="0.9" stroke-dasharray="1.4 0.8"/>
<!-- row2 3 -->
<path d="M665.8 221v12.4M665.8 226.6h11.6" stroke="#222" stroke-width="0.9" fill="none"/>
<path d="M667.4 231.6c2-4 3.6-4 5 0c1.4 2.6 3 2.2 4.6-1" fill="none" stroke="#222" stroke-width="0.8"/>
<path d="M674.6 221v11" stroke="#2a3fc0" stroke-width="1" stroke-dasharray="1.2 1"/>
<path d="M670 223.4h6" stroke="#2a3fc0" stroke-width="0.9" stroke-dasharray="1.2 1"/>
</svg>
<div class="cb" style="left:558px;top:241px"></div>
<svg class="abs" style="left:558px;top:241px" width="6" height="6" viewBox="0 0 6 6"><path d="M1.2 2.8l1.4 1.6l2.2-3.2" fill="none" stroke="#111" stroke-width="0.9"/></svg>
<div class="dl" style="left:567px;top:240.6px">更新图形显示</div>
<div class="abs" style="left:557.4px;top:252.4px;width:126.6px;height:0.6px;background:#b8c0cc"></div>
<div class="abs" style="left:557.4px;top:253.6px;width:126.6px;height:46px;border:0.6px solid #fff;border-top-color:#b8c0cc;border-left-color:#b8c0cc"></div>
<div class="rb" style="left:558px;top:256.2px"></div><div class="abs" style="left:560px;top:258.2px;width:2px;height:2px;border-radius:50%;background:#111"></div>
<div class="dl" style="left:567px;top:255.8px">交互式</div>
<div class="rb" style="left:592.3px;top:256.2px"></div>
<div class="dl" style="left:602px;top:255.8px">运行脚本</div>
<div class="btn" style="left:556.6px;top:265.8px;width:18.6px;height:18.6px"></div>
<div class="btn" style="left:584px;top:265.8px;width:18.6px;height:18.6px"></div>
<div class="btn" style="left:611px;top:265.8px;width:18.6px;height:18.6px"></div>
<div class="btn" style="left:639px;top:265.8px;width:18.6px;height:18.6px"></div>
<div class="btn" style="left:666.5px;top:265.8px;width:18.6px;height:18.6px"></div>
<svg class="abs" style="left:555px;top:264px" width="132" height="22" viewBox="555 264 132 22">
<!-- 1 -->
<rect x="559" y="267.6" width="2.6" height="6.4" fill="#555"/><path d="M559 269.2h2.6M559 270.8h2.6M559 272.4h2.6" stroke="#ddd" stroke-width="0.4"/>
<path d="M562.6 270c2-3.4 6.6-3 7.6 1.4l1.8 0l-2.6 3l-2.6-3l1.6 0c-0.8-2.4-3.4-2.6-5.8-1.4z" fill="#1a35c8"/>
<path d="M560.4 275.2h3l1 1.2h6.6v5.6h-10.6z" fill="#fff" stroke="#1b2a6a" stroke-width="0.9"/>
<path d="M571.6 280.4v2.6h-2.6z" fill="#111"/>
<!-- 2 -->
<path d="M589 270.4c1.6-3.6 7-3.8 8.4 0.8l1.8 0l-2.6 3.2l-2.6-3.2l1.6 0c-0.8-2.6-3.8-2.6-5.4-0.2z" fill="#1a35c8"/>
<path d="M588 274.6l1.6-2.2l2.6 1l-1.2 1.4z" fill="#6688dd"/>
<path d="M587.6 275.2h3l1 1.2h6.6v5.6h-10.6z" fill="#fff" stroke="#1b2a6a" stroke-width="0.9"/>
<path d="M599 280.4v2.6h-2.6z" fill="#111"/>
<!-- 3 film -->
<rect x="614" y="267.4" width="3.4" height="15.4" fill="#333"/><rect x="623.6" y="267.4" width="3.4" height="15.4" fill="#333"/>
<rect x="617.4" y="267.4" width="6.2" height="15.4" fill="#cfd8ee"/>
<path d="M614 274.4h13" stroke="#333" stroke-width="1"/>
<path d="M619 268.4l3 5M622.4 276l-3 6" stroke="#3a55cc" stroke-width="0.7"/>
<path d="M614.8 269h1.6M614.8 272h1.6M614.8 277h1.6M614.8 280h1.6M624.4 269h1.6M624.4 272h1.6M624.4 277h1.6M624.4 280h1.6" stroke="#ddd" stroke-width="0.8"/>
<!-- 4 -->
<path d="M642.6 268.6v12.6M642.6 275.4h11.6" stroke="#222" stroke-width="0.9" fill="none"/>
<path d="M645.4 270.6h3.4M647.1 269v3.2M650.6 270.6h3" stroke="#222" stroke-width="0.8"/>
<path d="M644.4 277.4l8.8 4.2" stroke="#2a3fc0" stroke-width="1" stroke-dasharray="1.1 1.1"/>
<!-- 5 plot -->
<path d="M669.8 267.6v13.6h13.6" stroke="#111" stroke-width="1.2" fill="none"/>
<path d="M670.4 280c1.6-0.4 2.4-6.6 4-6.6c1.6 0 1.6 4.6 3.2 4.6c1.6 0 2-8.6 3.6-8.6c1.4 0 1.6 7 2.4 9.6" fill="none" stroke="#2a3fc0" stroke-width="0.9"/>
<path d="M670.4 279.6c3-0.2 9.6-1.4 12.8-0.4" fill="none" stroke="#8899dd" stroke-width="0.6"/>
</svg>
<div class="btn" style="left:556.6px;top:287px;width:128.4px;height:12.6px;box-shadow:none"></div>
<div class="dl" style="left:605.5px;top:290.2px;font-size:6.4px">仿真设置...</div>
</body></html>
